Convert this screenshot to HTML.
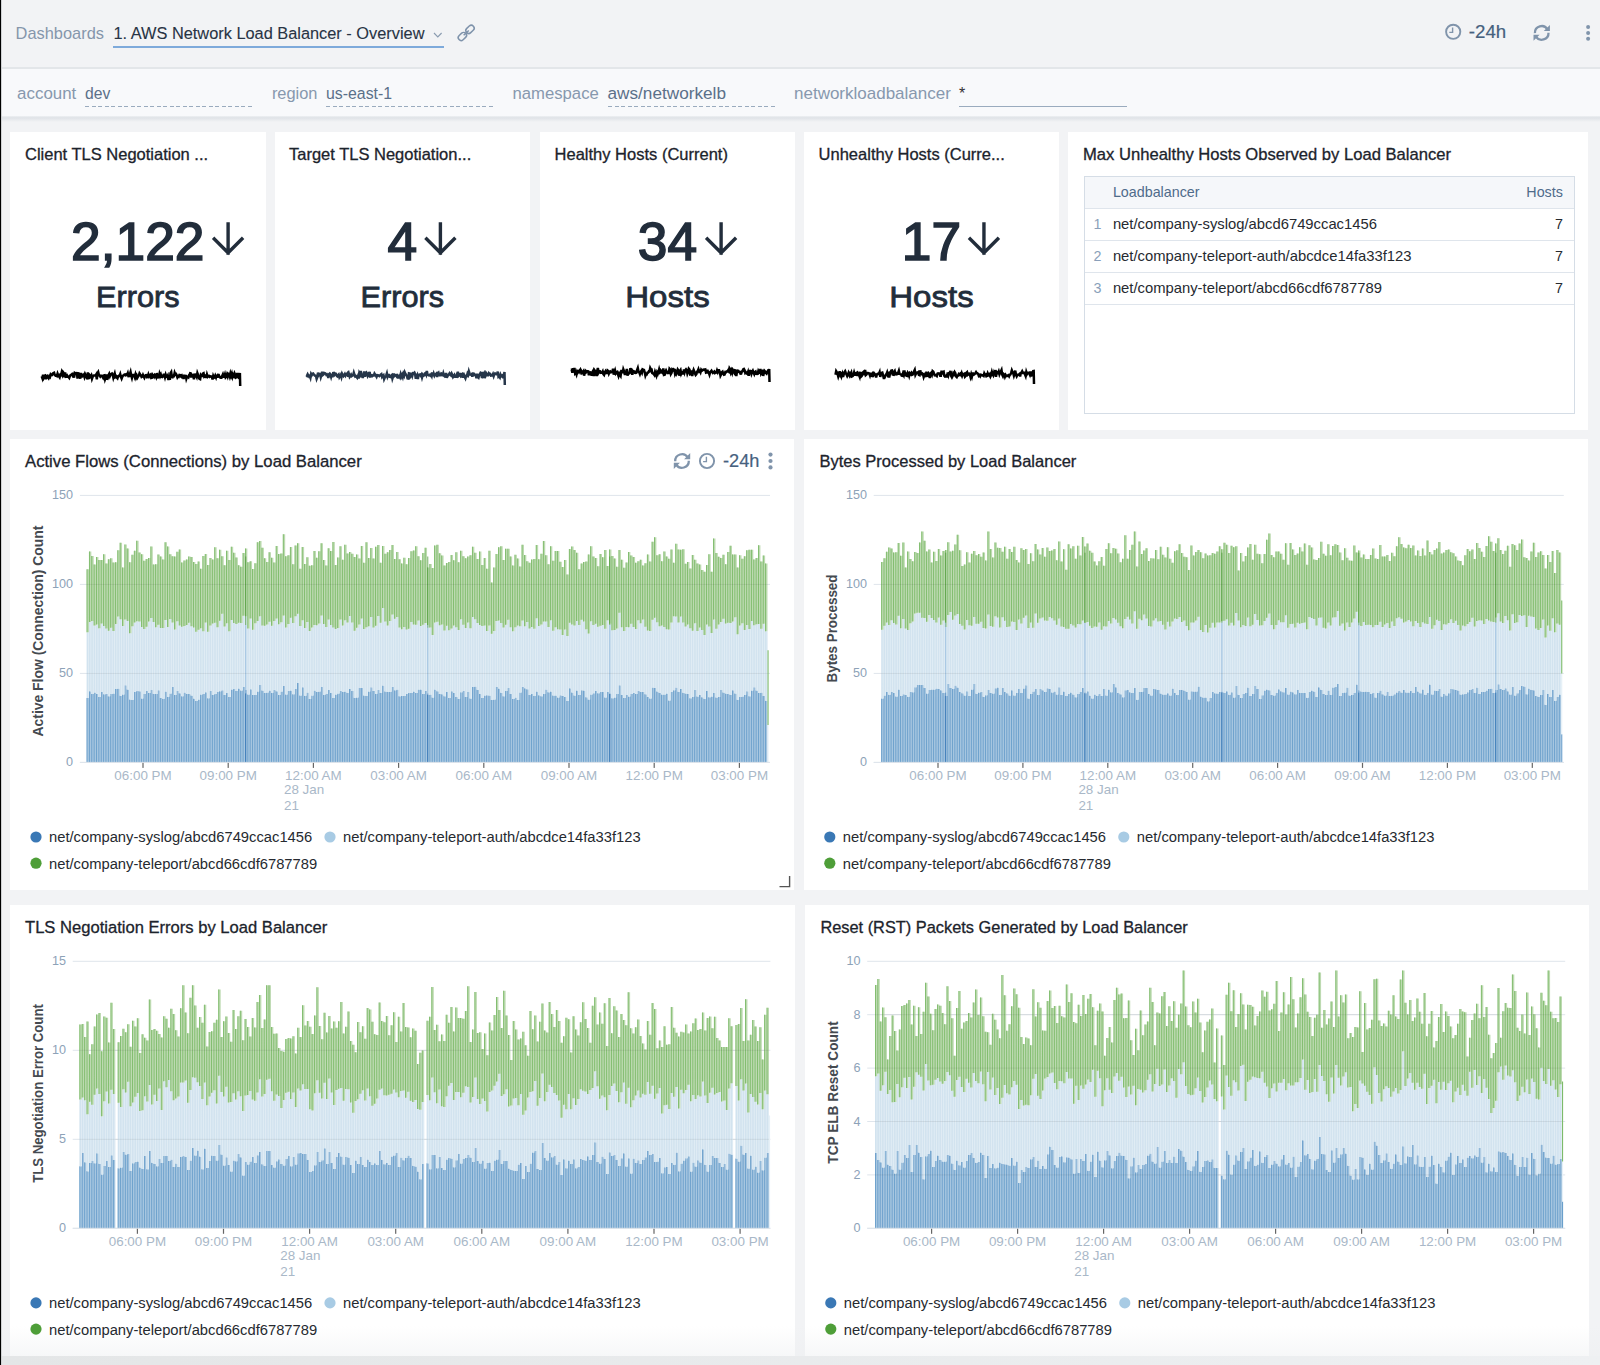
<!DOCTYPE html><html><head><meta charset="utf-8"><style>
html,body{margin:0;padding:0}
body{width:1600px;height:1365px;overflow:hidden;position:relative;background:#f2f3f5;font-family:"Liberation Sans",sans-serif}
.r{position:absolute}
svg{position:absolute;left:0;top:0;overflow:visible}
</style></head><body><div class="r" style="left:0px;top:0px;width:1600px;height:67px;background:#f2f3f5;"></div><div class="r" style="left:0px;top:67px;width:1600px;height:2px;background:#e3e6e9;"></div><div class="r" style="left:0px;top:69px;width:1600px;height:47px;background:#f8f9fb;"></div><div class="r" style="left:0px;top:115.7px;width:1600px;height:6.5px;background:linear-gradient(#eef0f3,#dfe3e7 30%,#f2f3f5);"></div><div class="r" style="left:112.5px;top:46px;width:331.5px;height:2px;background:#7eaadb;"></div><div class="r" style="left:85px;top:105.5px;width:167px;height:1.2px;background:repeating-linear-gradient(90deg,#9aabbe 0 4px,transparent 4px 6.5px);"></div><div class="r" style="left:326px;top:105.5px;width:167px;height:1.2px;background:repeating-linear-gradient(90deg,#9aabbe 0 4px,transparent 4px 6.5px);"></div><div class="r" style="left:607.5px;top:105.5px;width:167.5px;height:1.2px;background:repeating-linear-gradient(90deg,#9aabbe 0 4px,transparent 4px 6.5px);"></div><div class="r" style="left:959px;top:105.5px;width:167.5px;height:1.2px;background:#9aabbe;"></div><div class="r" style="left:10px;top:132px;width:255.5px;height:297.5px;background:#fff;"></div><div class="r" style="left:274.6px;top:132px;width:255.5px;height:297.5px;background:#fff;"></div><div class="r" style="left:539.6px;top:132px;width:255.5px;height:297.5px;background:#fff;"></div><div class="r" style="left:803.8px;top:132px;width:255.5px;height:297.5px;background:#fff;"></div><div class="r" style="left:1068.4px;top:132px;width:519.6px;height:297.5px;background:#fff;"></div><div class="r" style="left:10px;top:439px;width:784.4px;height:451px;background:#fff;"></div><div class="r" style="left:803.8px;top:439px;width:784.4px;height:451px;background:#fff;"></div><div class="r" style="left:10px;top:904.8px;width:785px;height:451.2px;background:#fff;"></div><div class="r" style="left:804.8px;top:904.8px;width:784.4px;height:451.2px;background:#fff;"></div><svg width="1600" height="440"><path d="M228.1 224 V253 M214.3 239 L228.1 252.8 L241.9 239" fill="none" stroke="#222d3b" stroke-width="3.4" stroke-linecap="square"/><path d="M440.40000000000003 224 V253 M426.6 239 L440.40000000000003 252.8 L454.2 239" fill="none" stroke="#222d3b" stroke-width="3.4" stroke-linecap="square"/><path d="M721.1 224 V253 M707.3 239 L721.1 252.8 L734.9 239" fill="none" stroke="#222d3b" stroke-width="3.4" stroke-linecap="square"/><path d="M983.95 224 V253 M970.15 239 L983.95 252.8 L997.75 239" fill="none" stroke="#222d3b" stroke-width="3.4" stroke-linecap="square"/><polyline points="41.70,376.2 42.39,378.1 43.08,374.7 43.77,377.5 44.46,375.8 45.14,375.5 45.83,379.2 46.52,376.7 47.21,376.0 47.90,377.2 48.59,378.1 49.28,376.3 49.97,377.0 50.66,374.5 51.34,375.2 52.03,375.1 52.72,373.6 53.41,373.1 54.10,372.8 54.79,375.1 55.48,375.6 56.17,375.4 56.85,376.0 57.54,373.7 58.23,375.5 58.92,376.3 59.61,377.3 60.30,374.8 60.99,375.1 61.68,372.4 62.37,374.6 63.05,372.1 63.74,373.0 64.43,377.4 65.12,372.5 65.81,376.8 66.50,376.7 67.19,375.6 67.88,376.7 68.57,377.0 69.25,377.9 69.94,375.9 70.63,375.0 71.32,374.8 72.01,374.1 72.70,375.6 73.39,374.6 74.08,377.6 74.76,373.1 75.45,373.7 76.14,374.0 76.83,372.1 77.52,378.7 78.21,372.3 78.90,375.0 79.59,375.0 80.28,378.7 80.96,373.0 81.65,377.4 82.34,375.0 83.03,375.6 83.72,374.8 84.41,376.9 85.10,374.2 85.79,375.6 86.48,376.5 87.16,379.2 87.85,372.4 88.54,378.1 89.23,377.9 89.92,375.5 90.61,376.4 91.30,375.3 91.99,378.7 92.67,376.8 93.36,375.7 94.05,375.6 94.74,375.6 95.43,375.6 96.12,374.5 96.81,379.3 97.50,373.2 98.19,372.0 98.87,374.8 99.56,375.6 100.25,376.6 100.94,375.7 101.63,375.7 102.32,376.5 103.01,377.7 103.70,375.5 104.39,375.3 105.07,379.2 105.76,377.4 106.45,374.5 107.14,379.7 107.83,377.9 108.52,375.3 109.21,373.9 109.90,376.2 110.59,374.6 111.27,374.0 111.96,373.5 112.65,374.8 113.34,377.7 114.03,375.5 114.72,373.5 115.41,376.8 116.10,376.2 116.78,377.5 117.47,378.3 118.16,376.1 118.85,375.8 119.54,375.9 120.23,374.1 120.92,376.8 121.61,378.5 122.30,376.7 122.98,375.7 123.67,375.5 124.36,374.6 125.05,374.4 125.74,375.1 126.43,374.4 127.12,375.0 127.81,373.2 128.50,376.2 129.18,376.1 129.87,374.1 130.56,372.0 131.25,375.4 131.94,377.8 132.63,375.0 133.32,375.0 134.01,374.9 134.69,376.9 135.38,374.6 136.07,377.5 136.76,375.7 137.45,377.5 138.14,376.3 138.83,375.6 139.52,373.4 140.21,374.4 140.89,375.3 141.58,377.0 142.27,376.6 142.96,374.9 143.65,376.5 144.34,377.8 145.03,376.0 145.72,375.3 146.41,375.2 147.09,377.3 147.78,377.1 148.47,374.6 149.16,376.4 149.85,375.2 150.54,374.6 151.23,377.9 151.92,377.7 152.60,375.0 153.29,376.0 153.98,376.9 154.67,375.0 155.36,375.7 156.05,377.1 156.74,373.1 157.43,376.1 158.12,377.3 158.80,377.0 159.49,373.9 160.18,376.2 160.87,374.6 161.56,376.8 162.25,377.1 162.94,376.5 163.63,374.8 164.32,374.8 165.00,377.3 165.69,374.7 166.38,376.6 167.07,377.0 167.76,375.7 168.45,380.0 169.14,376.7 169.83,379.8 170.51,373.1 171.20,372.0 171.89,377.0 172.58,377.2 173.27,375.7 173.96,375.9 174.65,372.7 175.34,374.4 176.03,374.0 176.71,375.3 177.40,377.4 178.09,376.3 178.78,376.7 179.47,374.9 180.16,375.1 180.85,376.1 181.54,375.5 182.23,378.1 182.91,374.8 183.60,379.0 184.29,374.8 184.98,377.6 185.67,374.9 186.36,378.6 187.05,376.6 187.74,376.8 188.43,377.4 189.11,375.1 189.80,374.1 190.49,372.3 191.18,377.5 191.87,375.0 192.56,374.9 193.25,375.8 193.94,379.3 194.62,373.6 195.31,376.1 196.00,375.3 196.69,376.8 197.38,373.1 198.07,374.9 198.76,377.3 199.45,378.8 200.14,379.1 200.82,375.0 201.51,375.9 202.20,375.8 202.89,373.6 203.58,373.2 204.27,376.9 204.96,376.5 205.65,375.8 206.34,378.0 207.02,374.6 207.71,376.7 208.40,376.1 209.09,375.9 209.78,376.8 210.47,376.4 211.16,376.5 211.85,376.5 212.53,379.4 213.22,376.0 213.91,377.7 214.60,377.3 215.29,375.6 215.98,377.3 216.67,374.7 217.36,377.8 218.05,374.9 218.73,375.0 219.42,376.4 220.11,377.5 220.80,377.8 221.49,377.8 222.18,375.9 222.87,374.4 223.56,376.7 224.25,376.6 224.93,374.5 225.62,377.4 226.31,376.6 227.00,374.5 227.69,376.5 228.38,373.8 229.07,374.2 229.76,376.4 230.44,373.4 231.13,375.7 231.82,373.7 232.51,376.9 233.20,374.9 233.89,376.1 234.58,373.5 235.27,375.0 235.96,377.5 236.64,377.0 237.33,373.0 238.02,377.1 238.71,377.7 239.40,375.6 239.9,373.0 240.2,386.0" fill="none" stroke="#000" stroke-width="2.5" stroke-linejoin="miter"/><polyline points="306.30,375.1 306.99,375.8 307.68,374.3 308.37,375.5 309.06,376.6 309.74,375.9 310.43,377.8 311.12,373.9 311.81,375.0 312.50,373.8 313.19,373.5 313.88,374.5 314.57,375.3 315.26,375.8 315.94,376.0 316.63,378.9 317.32,377.1 318.01,372.6 318.70,375.0 319.39,373.9 320.08,374.0 320.77,377.1 321.45,374.9 322.14,371.7 322.83,375.0 323.52,374.5 324.21,372.9 324.90,373.1 325.59,373.7 326.28,374.8 326.97,374.2 327.65,375.0 328.34,378.1 329.03,374.1 329.72,373.5 330.41,374.4 331.10,376.8 331.79,374.1 332.48,377.3 333.17,373.1 333.85,373.0 334.54,374.6 335.23,373.5 335.92,373.7 336.61,375.6 337.30,376.3 337.99,375.4 338.68,374.6 339.36,377.2 340.05,376.0 340.74,374.8 341.43,377.0 342.12,373.8 342.81,375.1 343.50,376.1 344.19,375.2 344.88,374.0 345.56,375.5 346.25,374.1 346.94,373.9 347.63,373.1 348.32,376.9 349.01,374.4 349.70,376.9 350.39,375.9 351.08,374.7 351.76,376.1 352.45,375.6 353.14,375.3 353.83,372.7 354.52,374.8 355.21,376.5 355.90,376.1 356.59,376.9 357.27,377.8 357.96,376.1 358.65,378.5 359.34,373.0 360.03,374.3 360.72,371.0 361.41,375.7 362.10,375.3 362.79,377.9 363.47,374.8 364.16,371.5 364.85,376.7 365.54,373.0 366.23,372.5 366.92,374.3 367.61,376.0 368.30,374.3 368.99,375.2 369.67,371.8 370.36,377.5 371.05,375.3 371.74,375.2 372.43,376.0 373.12,375.4 373.81,375.4 374.50,373.5 375.19,374.6 375.87,375.7 376.56,376.9 377.25,375.1 377.94,375.2 378.63,375.6 379.32,376.1 380.01,375.5 380.70,374.6 381.38,374.1 382.07,376.8 382.76,375.8 383.45,375.2 384.14,379.0 384.83,377.4 385.52,376.8 386.21,375.5 386.90,373.4 387.58,376.7 388.27,375.1 388.96,375.1 389.65,376.8 390.34,377.0 391.03,375.7 391.72,375.1 392.41,378.6 393.10,376.5 393.78,373.5 394.47,376.0 395.16,375.4 395.85,375.1 396.54,376.2 397.23,375.6 397.92,378.5 398.61,375.9 399.29,375.6 399.98,377.1 400.67,374.3 401.36,376.6 402.05,375.1 402.74,377.0 403.43,373.9 404.12,375.5 404.81,372.4 405.49,373.9 406.18,374.9 406.87,375.8 407.56,378.5 408.25,378.6 408.94,373.3 409.63,373.5 410.32,376.9 411.01,376.0 411.69,372.8 412.38,375.5 413.07,373.2 413.76,373.3 414.45,372.6 415.14,374.2 415.83,378.7 416.52,376.2 417.20,375.0 417.89,379.0 418.58,374.9 419.27,374.7 419.96,374.5 420.65,375.6 421.34,374.6 422.03,377.4 422.72,374.9 423.40,375.9 424.09,375.5 424.78,373.6 425.47,373.1 426.16,374.6 426.85,371.1 427.54,374.4 428.23,375.1 428.92,375.3 429.60,374.9 430.29,375.6 430.98,374.5 431.67,376.0 432.36,372.4 433.05,376.2 433.74,373.7 434.43,375.6 435.11,374.3 435.80,374.2 436.49,373.5 437.18,377.1 437.87,373.5 438.56,372.7 439.25,375.0 439.94,375.4 440.63,375.1 441.31,373.4 442.00,373.7 442.69,376.3 443.38,373.5 444.07,375.8 444.76,376.4 445.45,375.4 446.14,373.0 446.83,377.9 447.51,375.7 448.20,375.4 448.89,374.4 449.58,373.3 450.27,374.3 450.96,375.2 451.65,373.6 452.34,375.0 453.03,377.0 453.71,376.0 454.40,375.0 455.09,376.8 455.78,376.8 456.47,376.8 457.16,373.9 457.85,371.8 458.54,375.9 459.22,375.2 459.91,374.4 460.60,375.7 461.29,374.3 461.98,373.9 462.67,377.9 463.36,372.7 464.05,376.1 464.74,376.9 465.42,378.3 466.11,375.9 466.80,376.0 467.49,373.6 468.18,374.8 468.87,371.4 469.56,373.5 470.25,374.7 470.94,374.8 471.62,374.2 472.31,376.8 473.00,372.6 473.69,374.9 474.38,374.3 475.07,375.0 475.76,375.1 476.45,378.3 477.13,373.7 477.82,377.1 478.51,377.7 479.20,375.2 479.89,374.0 480.58,372.8 481.27,373.2 481.96,378.2 482.65,371.8 483.33,375.3 484.02,373.9 484.71,378.0 485.40,376.0 486.09,372.9 486.78,373.8 487.47,375.2 488.16,375.2 488.85,373.4 489.53,374.3 490.22,374.1 490.91,375.7 491.60,375.6 492.29,375.5 492.98,374.1 493.67,376.2 494.36,374.2 495.04,373.5 495.73,374.0 496.42,374.3 497.11,374.4 497.80,371.6 498.49,376.8 499.18,376.3 499.87,377.4 500.56,374.7 501.24,376.2 501.93,375.5 502.62,375.1 503.31,378.1 504.00,374.5 504.5,372.0 504.8,385.0" fill="none" stroke="#26364a" stroke-width="2.5" stroke-linejoin="miter"/><polyline points="571.00,370.0 571.69,369.7 572.38,372.8 573.07,368.2 573.76,371.2 574.44,368.0 575.13,373.3 575.82,372.5 576.51,374.4 577.20,371.5 577.89,372.6 578.58,371.6 579.27,370.7 579.96,372.0 580.64,369.9 581.33,371.1 582.02,373.0 582.71,372.3 583.40,371.3 584.09,375.6 584.78,372.6 585.47,371.1 586.15,372.1 586.84,371.1 587.53,371.2 588.22,371.3 588.91,375.3 589.60,372.5 590.29,372.4 590.98,373.2 591.67,375.6 592.35,372.2 593.04,371.0 593.73,376.0 594.42,370.1 595.11,371.1 595.80,373.0 596.49,376.0 597.18,371.0 597.87,368.0 598.55,372.5 599.24,371.2 599.93,371.2 600.62,372.7 601.31,372.5 602.00,372.6 602.69,371.4 603.38,374.1 604.06,374.9 604.75,372.5 605.44,371.3 606.13,373.1 606.82,373.0 607.51,370.4 608.20,371.0 608.89,373.6 609.58,372.1 610.26,371.5 610.95,372.3 611.64,372.0 612.33,372.0 613.02,368.7 613.71,374.5 614.40,372.7 615.09,370.6 615.78,373.5 616.46,372.7 617.15,372.1 617.84,373.8 618.53,376.0 619.22,373.6 619.91,374.9 620.60,376.0 621.29,370.9 621.97,370.9 622.66,373.2 623.35,369.3 624.04,371.1 624.73,374.1 625.42,374.1 626.11,373.3 626.80,369.0 627.49,375.5 628.17,373.5 628.86,373.5 629.55,373.1 630.24,369.2 630.93,369.1 631.62,369.5 632.31,374.9 633.00,371.0 633.69,371.4 634.37,371.5 635.06,372.9 635.75,373.0 636.44,372.6 637.13,369.9 637.82,368.0 638.51,371.4 639.20,372.4 639.89,374.1 640.57,372.1 641.26,371.0 641.95,372.5 642.64,369.4 643.33,369.8 644.02,370.0 644.71,372.2 645.40,375.6 646.08,373.8 646.77,374.2 647.46,372.7 648.15,372.6 648.84,371.3 649.53,371.4 650.22,368.0 650.91,369.3 651.60,369.4 652.28,373.0 652.97,373.3 653.66,374.1 654.35,375.0 655.04,371.9 655.73,373.8 656.42,375.6 657.11,372.5 657.80,373.9 658.48,372.0 659.17,369.3 659.86,371.8 660.55,370.6 661.24,372.0 661.93,371.2 662.62,372.4 663.31,368.4 663.99,375.0 664.68,374.8 665.37,371.8 666.06,370.4 666.75,371.8 667.44,373.1 668.13,372.9 668.82,372.8 669.51,368.8 670.19,369.6 670.88,373.9 671.57,372.7 672.26,369.5 672.95,370.2 673.64,369.3 674.33,369.9 675.02,373.7 675.71,371.9 676.39,373.9 677.08,372.6 677.77,369.5 678.46,370.5 679.15,375.7 679.84,371.2 680.53,370.1 681.22,373.8 681.90,372.4 682.59,372.1 683.28,374.5 683.97,369.3 684.66,372.3 685.35,370.2 686.04,369.3 686.73,370.2 687.42,373.7 688.10,372.0 688.79,368.8 689.48,369.6 690.17,374.3 690.86,374.1 691.55,370.4 692.24,376.0 692.93,372.0 693.62,369.9 694.30,371.5 694.99,373.5 695.68,375.0 696.37,374.2 697.06,371.6 697.75,371.0 698.44,369.3 699.13,371.5 699.81,370.9 700.50,372.3 701.19,369.8 701.88,370.8 702.57,370.3 703.26,369.7 703.95,369.6 704.64,369.9 705.33,369.6 706.01,372.6 706.70,372.3 707.39,369.7 708.08,372.6 708.77,372.6 709.46,374.6 710.15,372.1 710.84,371.6 711.53,370.7 712.21,372.0 712.90,372.9 713.59,372.4 714.28,371.6 714.97,372.9 715.66,372.3 716.35,372.5 717.04,370.4 717.73,372.1 718.41,370.3 719.10,370.3 719.79,372.0 720.48,375.7 721.17,374.3 721.86,372.3 722.55,371.7 723.24,373.7 723.92,374.7 724.61,374.5 725.30,372.1 725.99,372.3 726.68,371.5 727.37,371.4 728.06,370.4 728.75,371.3 729.44,368.2 730.12,369.3 730.81,372.3 731.50,370.4 732.19,372.7 732.88,369.9 733.57,371.0 734.26,372.5 734.95,370.3 735.64,370.5 736.32,376.0 737.01,371.4 737.70,370.7 738.39,370.8 739.08,371.9 739.77,371.9 740.46,373.7 741.15,373.6 741.83,371.5 742.52,371.3 743.21,369.4 743.90,369.0 744.59,370.3 745.28,373.0 745.97,372.4 746.66,373.4 747.35,373.9 748.03,372.0 748.72,375.7 749.41,371.6 750.10,370.9 750.79,371.1 751.48,373.8 752.17,372.0 752.86,370.7 753.55,372.6 754.23,374.1 754.92,372.1 755.61,371.6 756.30,373.8 756.99,374.0 757.68,373.9 758.37,371.0 759.06,372.3 759.74,372.7 760.43,369.0 761.12,373.6 761.81,372.4 762.50,371.5 763.19,375.9 763.88,372.8 764.57,370.9 765.26,371.7 765.94,372.9 766.63,373.6 767.32,372.1 768.01,370.5 768.70,370.6 769.2,369.0 769.5,382.0" fill="none" stroke="#000" stroke-width="2.5" stroke-linejoin="miter"/><polyline points="835.50,374.8 836.19,371.1 836.88,372.2 837.57,373.9 838.26,376.5 838.94,374.4 839.63,371.2 840.32,374.1 841.01,372.0 841.70,375.8 842.39,373.8 843.08,377.0 843.77,374.2 844.46,372.3 845.14,371.2 845.83,373.0 846.52,374.6 847.21,376.1 847.90,374.8 848.59,372.9 849.28,374.7 849.97,371.7 850.65,374.5 851.34,372.8 852.03,376.4 852.72,376.0 853.41,374.9 854.10,372.4 854.79,374.7 855.48,374.7 856.17,373.2 856.85,372.8 857.54,376.0 858.23,373.6 858.92,374.7 859.61,376.5 860.30,371.8 860.99,376.7 861.68,376.1 862.37,373.2 863.05,372.3 863.74,371.7 864.43,375.2 865.12,370.0 865.81,375.0 866.50,374.4 867.19,372.9 867.88,373.0 868.56,373.2 869.25,373.5 869.94,375.4 870.63,372.8 871.32,375.7 872.01,375.9 872.70,373.9 873.39,375.0 874.08,373.2 874.76,374.0 875.45,374.8 876.14,377.4 876.83,374.4 877.52,373.8 878.21,374.0 878.90,373.7 879.59,372.1 880.28,376.9 880.96,373.4 881.65,372.9 882.34,372.6 883.03,375.0 883.72,378.0 884.41,378.0 885.10,376.6 885.79,375.0 886.47,374.1 887.16,372.3 887.85,375.0 888.54,374.0 889.23,377.6 889.92,374.1 890.61,372.3 891.30,370.6 891.99,370.5 892.67,374.5 893.36,374.7 894.05,372.1 894.74,371.1 895.43,374.0 896.12,373.4 896.81,374.3 897.50,374.0 898.19,372.7 898.87,370.8 899.56,373.8 900.25,374.1 900.94,374.3 901.63,375.7 902.32,375.8 903.01,373.4 903.70,374.9 904.39,370.4 905.07,374.6 905.76,374.0 906.45,375.8 907.14,376.0 907.83,372.7 908.52,373.6 909.21,375.9 909.90,373.3 910.58,374.0 911.27,373.0 911.96,374.9 912.65,374.6 913.34,372.7 914.03,371.4 914.72,370.0 915.41,374.8 916.10,373.4 916.78,372.7 917.47,372.9 918.16,372.3 918.85,374.9 919.54,375.2 920.23,370.3 920.92,373.4 921.61,374.1 922.30,373.5 922.98,374.1 923.67,376.9 924.36,375.0 925.05,376.2 925.74,376.1 926.43,371.7 927.12,376.7 927.81,374.8 928.49,373.6 929.18,375.4 929.87,378.0 930.56,373.3 931.25,372.7 931.94,374.4 932.63,371.0 933.32,371.6 934.01,373.7 934.69,375.3 935.38,375.1 936.07,375.6 936.76,376.1 937.45,373.6 938.14,373.3 938.83,373.4 939.52,373.4 940.21,375.8 940.89,375.8 941.58,370.7 942.27,374.4 942.96,372.2 943.65,371.8 944.34,375.9 945.03,376.6 945.72,376.4 946.40,375.5 947.09,377.4 947.78,372.5 948.47,375.2 949.16,373.0 949.85,372.8 950.54,371.0 951.23,376.2 951.92,377.4 952.60,376.1 953.29,373.3 953.98,374.2 954.67,372.2 955.36,373.3 956.05,376.5 956.74,377.2 957.43,375.7 958.12,375.6 958.80,374.1 959.49,374.7 960.18,373.8 960.87,374.8 961.56,373.1 962.25,375.6 962.94,373.9 963.63,374.4 964.31,373.9 965.00,376.7 965.69,376.0 966.38,372.9 967.07,372.2 967.76,374.8 968.45,374.3 969.14,373.7 969.83,374.4 970.51,376.9 971.20,374.3 971.89,376.6 972.58,373.6 973.27,373.6 973.96,374.5 974.65,374.0 975.34,373.2 976.03,372.1 976.71,373.2 977.40,373.2 978.09,373.9 978.78,375.8 979.47,375.2 980.16,376.2 980.85,374.7 981.54,374.9 982.23,375.3 982.91,375.5 983.60,376.0 984.29,373.4 984.98,374.7 985.67,374.5 986.36,376.2 987.05,375.8 987.74,373.3 988.42,374.7 989.11,375.4 989.80,374.3 990.49,376.3 991.18,374.8 991.87,372.0 992.56,374.3 993.25,375.4 993.94,372.9 994.62,375.1 995.31,370.0 996.00,376.9 996.69,372.1 997.38,372.9 998.07,373.3 998.76,371.5 999.45,374.2 1000.14,372.5 1000.82,371.5 1001.51,370.0 1002.20,374.6 1002.89,376.1 1003.58,373.9 1004.27,374.4 1004.96,376.8 1005.65,375.1 1006.33,376.2 1007.02,376.1 1007.71,375.6 1008.40,375.2 1009.09,376.3 1009.78,374.8 1010.47,374.4 1011.16,372.9 1011.85,370.3 1012.53,371.9 1013.22,373.2 1013.91,375.7 1014.60,373.7 1015.29,370.6 1015.98,374.7 1016.67,376.3 1017.36,374.9 1018.05,374.7 1018.73,374.6 1019.42,374.0 1020.11,376.5 1020.80,373.0 1021.49,372.6 1022.18,371.3 1022.87,372.8 1023.56,372.7 1024.24,372.7 1024.93,374.2 1025.62,375.9 1026.31,372.0 1027.00,374.0 1027.69,372.8 1028.38,372.7 1029.07,373.1 1029.76,374.6 1030.44,371.4 1031.13,376.3 1031.82,374.3 1032.51,372.9 1033.20,371.1 1033.7,371.0 1034.0,384.0" fill="none" stroke="#000" stroke-width="2.5" stroke-linejoin="miter"/></svg><div class="r" style="left:1083.5px;top:176px;width:491.2px;height:238.3px;background:#fff;box-sizing:border-box;border:1px solid #d5dde6"></div><div class="r" style="left:1084.5px;top:177px;width:489.2px;height:31px;background:#f5f7fa;"></div><div class="r" style="left:1084.5px;top:207.5px;width:489.2px;height:1px;background:#dfe5ec;"></div><div class="r" style="left:1084.5px;top:239.5px;width:489.2px;height:1px;background:#dfe5ec;"></div><div class="r" style="left:1084.5px;top:271.5px;width:489.2px;height:1px;background:#dfe5ec;"></div><div class="r" style="left:1084.5px;top:303.5px;width:489.2px;height:1px;background:#dfe5ec;"></div><svg width="1600" height="1365"><rect x="79.9" y="494.90" width="690.1" height="1" fill="#dfe5ec"/><rect x="79.9" y="583.90" width="690.1" height="1" fill="#dfe5ec"/><rect x="79.9" y="672.90" width="690.1" height="1" fill="#dfe5ec"/><rect x="79.9" y="761.90" width="690.1" height="1" fill="#dfe5ec"/><path d="M86.60 698.0h2.36V762.4h-2.36zM88.96 691.3h2.36V762.4h-2.36zM91.33 694.0h2.36V762.4h-2.36zM93.69 692.4h2.36V762.4h-2.36zM96.06 693.8h2.36V762.4h-2.36zM98.42 696.9h2.36V762.4h-2.36zM100.79 692.0h2.36V762.4h-2.36zM103.15 694.2h2.36V762.4h-2.36zM105.51 693.8h2.36V762.4h-2.36zM107.88 696.2h2.36V762.4h-2.36zM110.24 693.7h2.36V762.4h-2.36zM112.61 693.5h2.36V762.4h-2.36zM114.97 689.0h2.36V762.4h-2.36zM117.34 688.5h2.36V762.4h-2.36zM119.70 695.8h2.36V762.4h-2.36zM122.06 694.4h2.36V762.4h-2.36zM124.43 685.3h2.36V762.4h-2.36zM126.79 689.4h2.36V762.4h-2.36zM129.16 699.4h2.36V762.4h-2.36zM131.52 699.7h2.36V762.4h-2.36zM133.88 691.7h2.36V762.4h-2.36zM136.25 691.0h2.36V762.4h-2.36zM138.61 691.3h2.36V762.4h-2.36zM140.98 698.5h2.36V762.4h-2.36zM143.34 694.1h2.36V762.4h-2.36zM145.71 690.8h2.36V762.4h-2.36zM148.07 693.1h2.36V762.4h-2.36zM150.43 689.9h2.36V762.4h-2.36zM152.80 693.8h2.36V762.4h-2.36zM155.16 693.9h2.36V762.4h-2.36zM157.53 690.2h2.36V762.4h-2.36zM159.89 698.0h2.36V762.4h-2.36zM162.26 698.7h2.36V762.4h-2.36zM164.62 691.4h2.36V762.4h-2.36zM166.98 696.7h2.36V762.4h-2.36zM169.35 693.4h2.36V762.4h-2.36zM171.71 686.9h2.36V762.4h-2.36zM174.08 694.9h2.36V762.4h-2.36zM176.44 690.7h2.36V762.4h-2.36zM178.81 693.2h2.36V762.4h-2.36zM181.17 696.3h2.36V762.4h-2.36zM183.53 692.6h2.36V762.4h-2.36zM185.90 693.8h2.36V762.4h-2.36zM188.26 693.8h2.36V762.4h-2.36zM190.63 695.5h2.36V762.4h-2.36zM192.99 698.4h2.36V762.4h-2.36zM195.35 700.9h2.36V762.4h-2.36zM197.72 699.4h2.36V762.4h-2.36zM200.08 694.5h2.36V762.4h-2.36zM202.45 694.0h2.36V762.4h-2.36zM204.81 692.2h2.36V762.4h-2.36zM207.18 698.3h2.36V762.4h-2.36zM209.54 691.1h2.36V762.4h-2.36zM211.90 694.7h2.36V762.4h-2.36zM214.27 693.9h2.36V762.4h-2.36zM216.63 691.9h2.36V762.4h-2.36zM219.00 691.3h2.36V762.4h-2.36zM221.36 690.2h2.36V762.4h-2.36zM223.73 695.0h2.36V762.4h-2.36zM226.09 692.9h2.36V762.4h-2.36zM228.45 697.1h2.36V762.4h-2.36zM230.82 689.4h2.36V762.4h-2.36zM233.18 689.1h2.36V762.4h-2.36zM235.55 691.0h2.36V762.4h-2.36zM237.91 688.4h2.36V762.4h-2.36zM240.28 690.5h2.36V762.4h-2.36zM242.64 687.1h2.36V762.4h-2.36zM245.00 689.9h2.36V762.4h-2.36zM247.37 694.5h2.36V762.4h-2.36zM249.73 689.3h2.36V762.4h-2.36zM252.10 695.1h2.36V762.4h-2.36zM254.46 695.0h2.36V762.4h-2.36zM256.82 691.6h2.36V762.4h-2.36zM259.19 684.9h2.36V762.4h-2.36zM261.55 690.4h2.36V762.4h-2.36zM263.92 692.9h2.36V762.4h-2.36zM266.28 692.6h2.36V762.4h-2.36zM268.65 690.6h2.36V762.4h-2.36zM271.01 692.7h2.36V762.4h-2.36zM273.37 689.7h2.36V762.4h-2.36zM275.74 691.2h2.36V762.4h-2.36zM278.10 695.0h2.36V762.4h-2.36zM280.47 691.6h2.36V762.4h-2.36zM282.83 685.8h2.36V762.4h-2.36zM285.20 694.5h2.36V762.4h-2.36zM287.56 690.8h2.36V762.4h-2.36zM289.92 690.6h2.36V762.4h-2.36zM292.29 694.3h2.36V762.4h-2.36zM294.65 688.8h2.36V762.4h-2.36zM297.02 682.8h2.36V762.4h-2.36zM299.38 695.4h2.36V762.4h-2.36zM301.75 687.3h2.36V762.4h-2.36zM304.11 695.8h2.36V762.4h-2.36zM306.47 692.5h2.36V762.4h-2.36zM308.84 699.1h2.36V762.4h-2.36zM311.20 695.6h2.36V762.4h-2.36zM313.57 690.4h2.36V762.4h-2.36zM315.93 692.1h2.36V762.4h-2.36zM318.30 691.6h2.36V762.4h-2.36zM320.66 687.1h2.36V762.4h-2.36zM323.02 694.9h2.36V762.4h-2.36zM325.39 694.1h2.36V762.4h-2.36zM327.75 689.8h2.36V762.4h-2.36zM330.12 692.9h2.36V762.4h-2.36zM332.48 698.1h2.36V762.4h-2.36zM334.84 694.5h2.36V762.4h-2.36zM337.21 693.5h2.36V762.4h-2.36zM339.57 690.7h2.36V762.4h-2.36zM341.94 691.7h2.36V762.4h-2.36zM344.30 691.4h2.36V762.4h-2.36zM346.67 693.0h2.36V762.4h-2.36zM349.03 688.9h2.36V762.4h-2.36zM351.39 691.1h2.36V762.4h-2.36zM353.76 697.8h2.36V762.4h-2.36zM356.12 697.5h2.36V762.4h-2.36zM358.49 688.1h2.36V762.4h-2.36zM360.85 687.7h2.36V762.4h-2.36zM363.22 695.4h2.36V762.4h-2.36zM365.58 695.7h2.36V762.4h-2.36zM367.94 691.6h2.36V762.4h-2.36zM370.31 687.3h2.36V762.4h-2.36zM372.67 690.9h2.36V762.4h-2.36zM375.04 693.8h2.36V762.4h-2.36zM377.40 689.8h2.36V762.4h-2.36zM379.77 693.0h2.36V762.4h-2.36zM382.13 685.6h2.36V762.4h-2.36zM384.49 691.6h2.36V762.4h-2.36zM386.86 691.7h2.36V762.4h-2.36zM389.22 691.7h2.36V762.4h-2.36zM391.59 686.8h2.36V762.4h-2.36zM393.95 690.2h2.36V762.4h-2.36zM396.31 689.5h2.36V762.4h-2.36zM398.68 696.3h2.36V762.4h-2.36zM401.04 695.7h2.36V762.4h-2.36zM403.41 695.9h2.36V762.4h-2.36zM405.77 693.7h2.36V762.4h-2.36zM408.14 693.1h2.36V762.4h-2.36zM410.50 693.0h2.36V762.4h-2.36zM412.86 691.4h2.36V762.4h-2.36zM415.23 693.1h2.36V762.4h-2.36zM417.59 689.6h2.36V762.4h-2.36zM419.96 689.6h2.36V762.4h-2.36zM422.32 693.9h2.36V762.4h-2.36zM424.69 690.8h2.36V762.4h-2.36zM427.05 694.9h2.36V762.4h-2.36zM429.41 694.6h2.36V762.4h-2.36zM431.78 697.5h2.36V762.4h-2.36zM434.14 689.4h2.36V762.4h-2.36zM436.51 691.3h2.36V762.4h-2.36zM438.87 694.0h2.36V762.4h-2.36zM441.24 694.2h2.36V762.4h-2.36zM443.60 696.2h2.36V762.4h-2.36zM445.96 692.0h2.36V762.4h-2.36zM448.33 698.1h2.36V762.4h-2.36zM450.69 691.3h2.36V762.4h-2.36zM453.06 692.7h2.36V762.4h-2.36zM455.42 696.9h2.36V762.4h-2.36zM457.79 698.8h2.36V762.4h-2.36zM460.15 692.3h2.36V762.4h-2.36zM462.51 691.0h2.36V762.4h-2.36zM464.88 697.0h2.36V762.4h-2.36zM467.24 692.0h2.36V762.4h-2.36zM469.61 698.5h2.36V762.4h-2.36zM471.97 687.0h2.36V762.4h-2.36zM474.33 686.4h2.36V762.4h-2.36zM476.70 689.7h2.36V762.4h-2.36zM479.06 694.0h2.36V762.4h-2.36zM481.43 698.1h2.36V762.4h-2.36zM483.79 695.6h2.36V762.4h-2.36zM486.16 695.2h2.36V762.4h-2.36zM488.52 695.5h2.36V762.4h-2.36zM490.88 700.1h2.36V762.4h-2.36zM493.25 699.4h2.36V762.4h-2.36zM495.61 687.1h2.36V762.4h-2.36zM497.98 688.5h2.36V762.4h-2.36zM500.34 692.8h2.36V762.4h-2.36zM502.71 696.2h2.36V762.4h-2.36zM505.07 691.0h2.36V762.4h-2.36zM507.43 688.1h2.36V762.4h-2.36zM509.80 694.0h2.36V762.4h-2.36zM512.16 699.0h2.36V762.4h-2.36zM514.53 697.6h2.36V762.4h-2.36zM516.89 700.0h2.36V762.4h-2.36zM519.26 692.5h2.36V762.4h-2.36zM521.62 686.8h2.36V762.4h-2.36zM523.98 688.3h2.36V762.4h-2.36zM526.35 689.3h2.36V762.4h-2.36zM528.71 695.1h2.36V762.4h-2.36zM531.08 694.1h2.36V762.4h-2.36zM533.44 695.9h2.36V762.4h-2.36zM535.80 691.4h2.36V762.4h-2.36zM538.17 695.2h2.36V762.4h-2.36zM540.53 696.2h2.36V762.4h-2.36zM542.90 694.0h2.36V762.4h-2.36zM545.26 689.4h2.36V762.4h-2.36zM547.63 692.3h2.36V762.4h-2.36zM549.99 691.6h2.36V762.4h-2.36zM552.35 695.6h2.36V762.4h-2.36zM554.72 695.6h2.36V762.4h-2.36zM557.08 697.6h2.36V762.4h-2.36zM559.45 695.3h2.36V762.4h-2.36zM561.81 696.1h2.36V762.4h-2.36zM564.18 697.1h2.36V762.4h-2.36zM566.54 700.9h2.36V762.4h-2.36zM568.90 688.2h2.36V762.4h-2.36zM571.27 692.4h2.36V762.4h-2.36zM573.63 695.6h2.36V762.4h-2.36zM576.00 690.5h2.36V762.4h-2.36zM578.36 694.9h2.36V762.4h-2.36zM580.73 690.2h2.36V762.4h-2.36zM583.09 690.6h2.36V762.4h-2.36zM585.45 697.3h2.36V762.4h-2.36zM587.82 699.6h2.36V762.4h-2.36zM590.18 694.5h2.36V762.4h-2.36zM592.55 693.3h2.36V762.4h-2.36zM594.91 690.8h2.36V762.4h-2.36zM597.27 693.2h2.36V762.4h-2.36zM599.64 692.1h2.36V762.4h-2.36zM602.00 692.1h2.36V762.4h-2.36zM604.37 697.4h2.36V762.4h-2.36zM606.73 691.7h2.36V762.4h-2.36zM609.10 694.1h2.36V762.4h-2.36zM611.46 698.3h2.36V762.4h-2.36zM613.82 697.6h2.36V762.4h-2.36zM616.19 694.1h2.36V762.4h-2.36zM618.55 685.2h2.36V762.4h-2.36zM620.92 694.8h2.36V762.4h-2.36zM623.28 698.0h2.36V762.4h-2.36zM625.65 695.1h2.36V762.4h-2.36zM628.01 696.6h2.36V762.4h-2.36zM630.37 693.9h2.36V762.4h-2.36zM632.74 692.8h2.36V762.4h-2.36zM635.10 694.0h2.36V762.4h-2.36zM637.47 690.7h2.36V762.4h-2.36zM639.83 691.8h2.36V762.4h-2.36zM642.20 691.7h2.36V762.4h-2.36zM644.56 694.2h2.36V762.4h-2.36zM646.92 696.7h2.36V762.4h-2.36zM649.29 698.5h2.36V762.4h-2.36zM651.65 687.4h2.36V762.4h-2.36zM654.02 688.1h2.36V762.4h-2.36zM656.38 691.5h2.36V762.4h-2.36zM658.75 692.9h2.36V762.4h-2.36zM661.11 694.4h2.36V762.4h-2.36zM663.47 694.4h2.36V762.4h-2.36zM665.84 693.6h2.36V762.4h-2.36zM668.20 700.4h2.36V762.4h-2.36zM670.57 691.8h2.36V762.4h-2.36zM672.93 690.3h2.36V762.4h-2.36zM675.29 687.6h2.36V762.4h-2.36zM677.66 691.7h2.36V762.4h-2.36zM680.02 689.0h2.36V762.4h-2.36zM682.39 692.8h2.36V762.4h-2.36zM684.75 693.5h2.36V762.4h-2.36zM687.12 693.7h2.36V762.4h-2.36zM689.48 698.3h2.36V762.4h-2.36zM691.84 696.7h2.36V762.4h-2.36zM694.21 689.8h2.36V762.4h-2.36zM696.57 696.4h2.36V762.4h-2.36zM698.94 694.7h2.36V762.4h-2.36zM701.30 697.2h2.36V762.4h-2.36zM703.67 698.9h2.36V762.4h-2.36zM706.03 691.1h2.36V762.4h-2.36zM708.39 697.3h2.36V762.4h-2.36zM710.76 696.4h2.36V762.4h-2.36zM713.12 692.7h2.36V762.4h-2.36zM715.49 697.4h2.36V762.4h-2.36zM717.85 697.0h2.36V762.4h-2.36zM720.22 690.1h2.36V762.4h-2.36zM722.58 692.6h2.36V762.4h-2.36zM724.94 693.6h2.36V762.4h-2.36zM727.31 694.1h2.36V762.4h-2.36zM729.67 694.9h2.36V762.4h-2.36zM732.04 690.2h2.36V762.4h-2.36zM734.40 693.6h2.36V762.4h-2.36zM736.76 699.7h2.36V762.4h-2.36zM739.13 697.0h2.36V762.4h-2.36zM741.49 696.4h2.36V762.4h-2.36zM743.86 694.8h2.36V762.4h-2.36zM746.22 691.2h2.36V762.4h-2.36zM748.59 696.3h2.36V762.4h-2.36zM750.95 690.5h2.36V762.4h-2.36zM753.31 687.2h2.36V762.4h-2.36zM755.68 690.6h2.36V762.4h-2.36zM758.04 693.0h2.36V762.4h-2.36zM760.41 692.6h2.36V762.4h-2.36zM762.77 695.9h2.36V762.4h-2.36zM765.14 700.7h2.36V762.4h-2.36z" fill="#a7c6e0"/><path d="M86.60 698.0h0.9V762.4h-0.9zM88.96 691.3h0.9V762.4h-0.9zM91.33 694.0h0.9V762.4h-0.9zM93.69 692.4h0.9V762.4h-0.9zM96.06 693.8h0.9V762.4h-0.9zM98.42 696.9h0.9V762.4h-0.9zM100.79 692.0h0.9V762.4h-0.9zM103.15 694.2h0.9V762.4h-0.9zM105.51 693.8h0.9V762.4h-0.9zM107.88 696.2h0.9V762.4h-0.9zM110.24 693.7h0.9V762.4h-0.9zM112.61 693.5h0.9V762.4h-0.9zM114.97 689.0h0.9V762.4h-0.9zM117.34 688.5h0.9V762.4h-0.9zM119.70 695.8h0.9V762.4h-0.9zM122.06 694.4h0.9V762.4h-0.9zM124.43 685.3h0.9V762.4h-0.9zM126.79 689.4h0.9V762.4h-0.9zM129.16 699.4h0.9V762.4h-0.9zM131.52 699.7h0.9V762.4h-0.9zM133.88 691.7h0.9V762.4h-0.9zM136.25 691.0h0.9V762.4h-0.9zM138.61 691.3h0.9V762.4h-0.9zM140.98 698.5h0.9V762.4h-0.9zM143.34 694.1h0.9V762.4h-0.9zM145.71 690.8h0.9V762.4h-0.9zM148.07 693.1h0.9V762.4h-0.9zM150.43 689.9h0.9V762.4h-0.9zM152.80 693.8h0.9V762.4h-0.9zM155.16 693.9h0.9V762.4h-0.9zM157.53 690.2h0.9V762.4h-0.9zM159.89 698.0h0.9V762.4h-0.9zM162.26 698.7h0.9V762.4h-0.9zM164.62 691.4h0.9V762.4h-0.9zM166.98 696.7h0.9V762.4h-0.9zM169.35 693.4h0.9V762.4h-0.9zM171.71 686.9h0.9V762.4h-0.9zM174.08 694.9h0.9V762.4h-0.9zM176.44 690.7h0.9V762.4h-0.9zM178.81 693.2h0.9V762.4h-0.9zM181.17 696.3h0.9V762.4h-0.9zM183.53 692.6h0.9V762.4h-0.9zM185.90 693.8h0.9V762.4h-0.9zM188.26 693.8h0.9V762.4h-0.9zM190.63 695.5h0.9V762.4h-0.9zM192.99 698.4h0.9V762.4h-0.9zM195.35 700.9h0.9V762.4h-0.9zM197.72 699.4h0.9V762.4h-0.9zM200.08 694.5h0.9V762.4h-0.9zM202.45 694.0h0.9V762.4h-0.9zM204.81 692.2h0.9V762.4h-0.9zM207.18 698.3h0.9V762.4h-0.9zM209.54 691.1h0.9V762.4h-0.9zM211.90 694.7h0.9V762.4h-0.9zM214.27 693.9h0.9V762.4h-0.9zM216.63 691.9h0.9V762.4h-0.9zM219.00 691.3h0.9V762.4h-0.9zM221.36 690.2h0.9V762.4h-0.9zM223.73 695.0h0.9V762.4h-0.9zM226.09 692.9h0.9V762.4h-0.9zM228.45 697.1h0.9V762.4h-0.9zM230.82 689.4h0.9V762.4h-0.9zM233.18 689.1h0.9V762.4h-0.9zM235.55 691.0h0.9V762.4h-0.9zM237.91 688.4h0.9V762.4h-0.9zM240.28 690.5h0.9V762.4h-0.9zM242.64 687.1h0.9V762.4h-0.9zM245.00 689.9h0.9V762.4h-0.9zM247.37 694.5h0.9V762.4h-0.9zM249.73 689.3h0.9V762.4h-0.9zM252.10 695.1h0.9V762.4h-0.9zM254.46 695.0h0.9V762.4h-0.9zM256.82 691.6h0.9V762.4h-0.9zM259.19 684.9h0.9V762.4h-0.9zM261.55 690.4h0.9V762.4h-0.9zM263.92 692.9h0.9V762.4h-0.9zM266.28 692.6h0.9V762.4h-0.9zM268.65 690.6h0.9V762.4h-0.9zM271.01 692.7h0.9V762.4h-0.9zM273.37 689.7h0.9V762.4h-0.9zM275.74 691.2h0.9V762.4h-0.9zM278.10 695.0h0.9V762.4h-0.9zM280.47 691.6h0.9V762.4h-0.9zM282.83 685.8h0.9V762.4h-0.9zM285.20 694.5h0.9V762.4h-0.9zM287.56 690.8h0.9V762.4h-0.9zM289.92 690.6h0.9V762.4h-0.9zM292.29 694.3h0.9V762.4h-0.9zM294.65 688.8h0.9V762.4h-0.9zM297.02 682.8h0.9V762.4h-0.9zM299.38 695.4h0.9V762.4h-0.9zM301.75 687.3h0.9V762.4h-0.9zM304.11 695.8h0.9V762.4h-0.9zM306.47 692.5h0.9V762.4h-0.9zM308.84 699.1h0.9V762.4h-0.9zM311.20 695.6h0.9V762.4h-0.9zM313.57 690.4h0.9V762.4h-0.9zM315.93 692.1h0.9V762.4h-0.9zM318.30 691.6h0.9V762.4h-0.9zM320.66 687.1h0.9V762.4h-0.9zM323.02 694.9h0.9V762.4h-0.9zM325.39 694.1h0.9V762.4h-0.9zM327.75 689.8h0.9V762.4h-0.9zM330.12 692.9h0.9V762.4h-0.9zM332.48 698.1h0.9V762.4h-0.9zM334.84 694.5h0.9V762.4h-0.9zM337.21 693.5h0.9V762.4h-0.9zM339.57 690.7h0.9V762.4h-0.9zM341.94 691.7h0.9V762.4h-0.9zM344.30 691.4h0.9V762.4h-0.9zM346.67 693.0h0.9V762.4h-0.9zM349.03 688.9h0.9V762.4h-0.9zM351.39 691.1h0.9V762.4h-0.9zM353.76 697.8h0.9V762.4h-0.9zM356.12 697.5h0.9V762.4h-0.9zM358.49 688.1h0.9V762.4h-0.9zM360.85 687.7h0.9V762.4h-0.9zM363.22 695.4h0.9V762.4h-0.9zM365.58 695.7h0.9V762.4h-0.9zM367.94 691.6h0.9V762.4h-0.9zM370.31 687.3h0.9V762.4h-0.9zM372.67 690.9h0.9V762.4h-0.9zM375.04 693.8h0.9V762.4h-0.9zM377.40 689.8h0.9V762.4h-0.9zM379.77 693.0h0.9V762.4h-0.9zM382.13 685.6h0.9V762.4h-0.9zM384.49 691.6h0.9V762.4h-0.9zM386.86 691.7h0.9V762.4h-0.9zM389.22 691.7h0.9V762.4h-0.9zM391.59 686.8h0.9V762.4h-0.9zM393.95 690.2h0.9V762.4h-0.9zM396.31 689.5h0.9V762.4h-0.9zM398.68 696.3h0.9V762.4h-0.9zM401.04 695.7h0.9V762.4h-0.9zM403.41 695.9h0.9V762.4h-0.9zM405.77 693.7h0.9V762.4h-0.9zM408.14 693.1h0.9V762.4h-0.9zM410.50 693.0h0.9V762.4h-0.9zM412.86 691.4h0.9V762.4h-0.9zM415.23 693.1h0.9V762.4h-0.9zM417.59 689.6h0.9V762.4h-0.9zM419.96 689.6h0.9V762.4h-0.9zM422.32 693.9h0.9V762.4h-0.9zM424.69 690.8h0.9V762.4h-0.9zM427.05 694.9h0.9V762.4h-0.9zM429.41 694.6h0.9V762.4h-0.9zM431.78 697.5h0.9V762.4h-0.9zM434.14 689.4h0.9V762.4h-0.9zM436.51 691.3h0.9V762.4h-0.9zM438.87 694.0h0.9V762.4h-0.9zM441.24 694.2h0.9V762.4h-0.9zM443.60 696.2h0.9V762.4h-0.9zM445.96 692.0h0.9V762.4h-0.9zM448.33 698.1h0.9V762.4h-0.9zM450.69 691.3h0.9V762.4h-0.9zM453.06 692.7h0.9V762.4h-0.9zM455.42 696.9h0.9V762.4h-0.9zM457.79 698.8h0.9V762.4h-0.9zM460.15 692.3h0.9V762.4h-0.9zM462.51 691.0h0.9V762.4h-0.9zM464.88 697.0h0.9V762.4h-0.9zM467.24 692.0h0.9V762.4h-0.9zM469.61 698.5h0.9V762.4h-0.9zM471.97 687.0h0.9V762.4h-0.9zM474.33 686.4h0.9V762.4h-0.9zM476.70 689.7h0.9V762.4h-0.9zM479.06 694.0h0.9V762.4h-0.9zM481.43 698.1h0.9V762.4h-0.9zM483.79 695.6h0.9V762.4h-0.9zM486.16 695.2h0.9V762.4h-0.9zM488.52 695.5h0.9V762.4h-0.9zM490.88 700.1h0.9V762.4h-0.9zM493.25 699.4h0.9V762.4h-0.9zM495.61 687.1h0.9V762.4h-0.9zM497.98 688.5h0.9V762.4h-0.9zM500.34 692.8h0.9V762.4h-0.9zM502.71 696.2h0.9V762.4h-0.9zM505.07 691.0h0.9V762.4h-0.9zM507.43 688.1h0.9V762.4h-0.9zM509.80 694.0h0.9V762.4h-0.9zM512.16 699.0h0.9V762.4h-0.9zM514.53 697.6h0.9V762.4h-0.9zM516.89 700.0h0.9V762.4h-0.9zM519.26 692.5h0.9V762.4h-0.9zM521.62 686.8h0.9V762.4h-0.9zM523.98 688.3h0.9V762.4h-0.9zM526.35 689.3h0.9V762.4h-0.9zM528.71 695.1h0.9V762.4h-0.9zM531.08 694.1h0.9V762.4h-0.9zM533.44 695.9h0.9V762.4h-0.9zM535.80 691.4h0.9V762.4h-0.9zM538.17 695.2h0.9V762.4h-0.9zM540.53 696.2h0.9V762.4h-0.9zM542.90 694.0h0.9V762.4h-0.9zM545.26 689.4h0.9V762.4h-0.9zM547.63 692.3h0.9V762.4h-0.9zM549.99 691.6h0.9V762.4h-0.9zM552.35 695.6h0.9V762.4h-0.9zM554.72 695.6h0.9V762.4h-0.9zM557.08 697.6h0.9V762.4h-0.9zM559.45 695.3h0.9V762.4h-0.9zM561.81 696.1h0.9V762.4h-0.9zM564.18 697.1h0.9V762.4h-0.9zM566.54 700.9h0.9V762.4h-0.9zM568.90 688.2h0.9V762.4h-0.9zM571.27 692.4h0.9V762.4h-0.9zM573.63 695.6h0.9V762.4h-0.9zM576.00 690.5h0.9V762.4h-0.9zM578.36 694.9h0.9V762.4h-0.9zM580.73 690.2h0.9V762.4h-0.9zM583.09 690.6h0.9V762.4h-0.9zM585.45 697.3h0.9V762.4h-0.9zM587.82 699.6h0.9V762.4h-0.9zM590.18 694.5h0.9V762.4h-0.9zM592.55 693.3h0.9V762.4h-0.9zM594.91 690.8h0.9V762.4h-0.9zM597.27 693.2h0.9V762.4h-0.9zM599.64 692.1h0.9V762.4h-0.9zM602.00 692.1h0.9V762.4h-0.9zM604.37 697.4h0.9V762.4h-0.9zM606.73 691.7h0.9V762.4h-0.9zM609.10 694.1h0.9V762.4h-0.9zM611.46 698.3h0.9V762.4h-0.9zM613.82 697.6h0.9V762.4h-0.9zM616.19 694.1h0.9V762.4h-0.9zM618.55 685.2h0.9V762.4h-0.9zM620.92 694.8h0.9V762.4h-0.9zM623.28 698.0h0.9V762.4h-0.9zM625.65 695.1h0.9V762.4h-0.9zM628.01 696.6h0.9V762.4h-0.9zM630.37 693.9h0.9V762.4h-0.9zM632.74 692.8h0.9V762.4h-0.9zM635.10 694.0h0.9V762.4h-0.9zM637.47 690.7h0.9V762.4h-0.9zM639.83 691.8h0.9V762.4h-0.9zM642.20 691.7h0.9V762.4h-0.9zM644.56 694.2h0.9V762.4h-0.9zM646.92 696.7h0.9V762.4h-0.9zM649.29 698.5h0.9V762.4h-0.9zM651.65 687.4h0.9V762.4h-0.9zM654.02 688.1h0.9V762.4h-0.9zM656.38 691.5h0.9V762.4h-0.9zM658.75 692.9h0.9V762.4h-0.9zM661.11 694.4h0.9V762.4h-0.9zM663.47 694.4h0.9V762.4h-0.9zM665.84 693.6h0.9V762.4h-0.9zM668.20 700.4h0.9V762.4h-0.9zM670.57 691.8h0.9V762.4h-0.9zM672.93 690.3h0.9V762.4h-0.9zM675.29 687.6h0.9V762.4h-0.9zM677.66 691.7h0.9V762.4h-0.9zM680.02 689.0h0.9V762.4h-0.9zM682.39 692.8h0.9V762.4h-0.9zM684.75 693.5h0.9V762.4h-0.9zM687.12 693.7h0.9V762.4h-0.9zM689.48 698.3h0.9V762.4h-0.9zM691.84 696.7h0.9V762.4h-0.9zM694.21 689.8h0.9V762.4h-0.9zM696.57 696.4h0.9V762.4h-0.9zM698.94 694.7h0.9V762.4h-0.9zM701.30 697.2h0.9V762.4h-0.9zM703.67 698.9h0.9V762.4h-0.9zM706.03 691.1h0.9V762.4h-0.9zM708.39 697.3h0.9V762.4h-0.9zM710.76 696.4h0.9V762.4h-0.9zM713.12 692.7h0.9V762.4h-0.9zM715.49 697.4h0.9V762.4h-0.9zM717.85 697.0h0.9V762.4h-0.9zM720.22 690.1h0.9V762.4h-0.9zM722.58 692.6h0.9V762.4h-0.9zM724.94 693.6h0.9V762.4h-0.9zM727.31 694.1h0.9V762.4h-0.9zM729.67 694.9h0.9V762.4h-0.9zM732.04 690.2h0.9V762.4h-0.9zM734.40 693.6h0.9V762.4h-0.9zM736.76 699.7h0.9V762.4h-0.9zM739.13 697.0h0.9V762.4h-0.9zM741.49 696.4h0.9V762.4h-0.9zM743.86 694.8h0.9V762.4h-0.9zM746.22 691.2h0.9V762.4h-0.9zM748.59 696.3h0.9V762.4h-0.9zM750.95 690.5h0.9V762.4h-0.9zM753.31 687.2h0.9V762.4h-0.9zM755.68 690.6h0.9V762.4h-0.9zM758.04 693.0h0.9V762.4h-0.9zM760.41 692.6h0.9V762.4h-0.9zM762.77 695.9h0.9V762.4h-0.9zM765.14 700.7h0.9V762.4h-0.9zM767.50 762.4h1.1V762.4h-1.1z" fill="#6a9fcb"/><path d="M86.60 632.2h2.36V698.0h-2.36zM88.96 622.1h2.36V691.3h-2.36zM91.33 620.9h2.36V694.0h-2.36zM93.69 625.5h2.36V692.4h-2.36zM96.06 624.6h2.36V693.8h-2.36zM98.42 628.2h2.36V696.9h-2.36zM100.79 623.6h2.36V692.0h-2.36zM103.15 626.1h2.36V694.2h-2.36zM105.51 628.5h2.36V693.8h-2.36zM107.88 630.8h2.36V696.2h-2.36zM110.24 627.8h2.36V693.7h-2.36zM112.61 631.0h2.36V693.5h-2.36zM114.97 624.1h2.36V689.0h-2.36zM117.34 616.4h2.36V688.5h-2.36zM119.70 619.3h2.36V695.8h-2.36zM122.06 626.1h2.36V694.4h-2.36zM124.43 619.4h2.36V685.3h-2.36zM126.79 621.0h2.36V689.4h-2.36zM129.16 633.3h2.36V699.4h-2.36zM131.52 626.3h2.36V699.7h-2.36zM133.88 622.6h2.36V691.7h-2.36zM136.25 621.3h2.36V691.0h-2.36zM138.61 621.5h2.36V691.3h-2.36zM140.98 627.0h2.36V698.5h-2.36zM143.34 629.1h2.36V694.1h-2.36zM145.71 626.7h2.36V690.8h-2.36zM148.07 621.6h2.36V693.1h-2.36zM150.43 617.9h2.36V689.9h-2.36zM152.80 621.9h2.36V693.8h-2.36zM155.16 627.3h2.36V693.9h-2.36zM157.53 624.8h2.36V690.2h-2.36zM159.89 627.9h2.36V698.0h-2.36zM162.26 628.1h2.36V698.7h-2.36zM164.62 620.1h2.36V691.4h-2.36zM166.98 627.0h2.36V696.7h-2.36zM169.35 619.0h2.36V693.4h-2.36zM171.71 622.4h2.36V686.9h-2.36zM174.08 629.4h2.36V694.9h-2.36zM176.44 621.3h2.36V690.7h-2.36zM178.81 625.5h2.36V693.2h-2.36zM181.17 626.8h2.36V696.3h-2.36zM183.53 626.0h2.36V692.6h-2.36zM185.90 625.1h2.36V693.8h-2.36zM188.26 622.8h2.36V693.8h-2.36zM190.63 626.2h2.36V695.5h-2.36zM192.99 627.4h2.36V698.4h-2.36zM195.35 631.8h2.36V700.9h-2.36zM197.72 629.7h2.36V699.4h-2.36zM200.08 628.3h2.36V694.5h-2.36zM202.45 631.3h2.36V694.0h-2.36zM204.81 622.4h2.36V692.2h-2.36zM207.18 631.8h2.36V698.3h-2.36zM209.54 625.4h2.36V691.1h-2.36zM211.90 623.4h2.36V694.7h-2.36zM214.27 622.7h2.36V693.9h-2.36zM216.63 627.3h2.36V691.9h-2.36zM219.00 620.7h2.36V691.3h-2.36zM221.36 613.7h2.36V690.2h-2.36zM223.73 626.5h2.36V695.0h-2.36zM226.09 623.3h2.36V692.9h-2.36zM228.45 631.2h2.36V697.1h-2.36zM230.82 620.0h2.36V689.4h-2.36zM233.18 623.0h2.36V689.1h-2.36zM235.55 624.0h2.36V691.0h-2.36zM237.91 622.8h2.36V688.4h-2.36zM240.28 622.9h2.36V690.5h-2.36zM242.64 615.7h2.36V687.1h-2.36zM245.00 616.3h2.36V689.9h-2.36zM247.37 628.4h2.36V694.5h-2.36zM249.73 618.6h2.36V689.3h-2.36zM252.10 629.8h2.36V695.1h-2.36zM254.46 623.2h2.36V695.0h-2.36zM256.82 621.1h2.36V691.6h-2.36zM259.19 616.3h2.36V684.9h-2.36zM261.55 625.6h2.36V690.4h-2.36zM263.92 625.7h2.36V692.9h-2.36zM266.28 624.6h2.36V692.6h-2.36zM268.65 621.8h2.36V690.6h-2.36zM271.01 625.7h2.36V692.7h-2.36zM273.37 620.9h2.36V689.7h-2.36zM275.74 618.6h2.36V691.2h-2.36zM278.10 624.3h2.36V695.0h-2.36zM280.47 622.2h2.36V691.6h-2.36zM282.83 615.5h2.36V685.8h-2.36zM285.20 627.6h2.36V694.5h-2.36zM287.56 624.1h2.36V690.8h-2.36zM289.92 617.8h2.36V690.6h-2.36zM292.29 623.0h2.36V694.3h-2.36zM294.65 616.2h2.36V688.8h-2.36zM297.02 613.7h2.36V682.8h-2.36zM299.38 626.0h2.36V695.4h-2.36zM301.75 620.3h2.36V687.3h-2.36zM304.11 627.9h2.36V695.8h-2.36zM306.47 622.1h2.36V692.5h-2.36zM308.84 631.0h2.36V699.1h-2.36zM311.20 627.5h2.36V695.6h-2.36zM313.57 625.1h2.36V690.4h-2.36zM315.93 625.3h2.36V692.1h-2.36zM318.30 623.6h2.36V691.6h-2.36zM320.66 615.5h2.36V687.1h-2.36zM323.02 624.0h2.36V694.9h-2.36zM325.39 626.9h2.36V694.1h-2.36zM327.75 619.5h2.36V689.8h-2.36zM330.12 624.9h2.36V692.9h-2.36zM332.48 627.6h2.36V698.1h-2.36zM334.84 629.1h2.36V694.5h-2.36zM337.21 628.0h2.36V693.5h-2.36zM339.57 619.6h2.36V690.7h-2.36zM341.94 625.6h2.36V691.7h-2.36zM344.30 620.2h2.36V691.4h-2.36zM346.67 622.5h2.36V693.0h-2.36zM349.03 615.9h2.36V688.9h-2.36zM351.39 622.5h2.36V691.1h-2.36zM353.76 630.7h2.36V697.8h-2.36zM356.12 627.8h2.36V697.5h-2.36zM358.49 624.4h2.36V688.1h-2.36zM360.85 618.5h2.36V687.7h-2.36zM363.22 629.1h2.36V695.4h-2.36zM365.58 627.3h2.36V695.7h-2.36zM367.94 626.3h2.36V691.6h-2.36zM370.31 617.0h2.36V687.3h-2.36zM372.67 627.6h2.36V690.9h-2.36zM375.04 625.8h2.36V693.8h-2.36zM377.40 616.1h2.36V689.8h-2.36zM379.77 622.7h2.36V693.0h-2.36zM382.13 608.1h2.36V685.6h-2.36zM384.49 621.6h2.36V691.6h-2.36zM386.86 625.5h2.36V691.7h-2.36zM389.22 621.1h2.36V691.7h-2.36zM391.59 614.6h2.36V686.8h-2.36zM393.95 618.7h2.36V690.2h-2.36zM396.31 616.9h2.36V689.5h-2.36zM398.68 627.5h2.36V696.3h-2.36zM401.04 629.2h2.36V695.7h-2.36zM403.41 627.1h2.36V695.9h-2.36zM405.77 629.6h2.36V693.7h-2.36zM408.14 628.7h2.36V693.1h-2.36zM410.50 621.9h2.36V693.0h-2.36zM412.86 624.5h2.36V691.4h-2.36zM415.23 624.8h2.36V693.1h-2.36zM417.59 620.6h2.36V689.6h-2.36zM419.96 625.9h2.36V689.6h-2.36zM422.32 624.8h2.36V693.9h-2.36zM424.69 623.0h2.36V690.8h-2.36zM427.05 627.7h2.36V694.9h-2.36zM429.41 627.5h2.36V694.6h-2.36zM431.78 635.0h2.36V697.5h-2.36zM434.14 622.4h2.36V689.4h-2.36zM436.51 621.7h2.36V691.3h-2.36zM438.87 625.3h2.36V694.0h-2.36zM441.24 624.6h2.36V694.2h-2.36zM443.60 630.4h2.36V696.2h-2.36zM445.96 625.7h2.36V692.0h-2.36zM448.33 630.2h2.36V698.1h-2.36zM450.69 628.4h2.36V691.3h-2.36zM453.06 625.6h2.36V692.7h-2.36zM455.42 627.3h2.36V696.9h-2.36zM457.79 630.1h2.36V698.8h-2.36zM460.15 619.2h2.36V692.3h-2.36zM462.51 624.8h2.36V691.0h-2.36zM464.88 628.0h2.36V697.0h-2.36zM467.24 622.4h2.36V692.0h-2.36zM469.61 628.2h2.36V698.5h-2.36zM471.97 616.9h2.36V687.0h-2.36zM474.33 619.3h2.36V686.4h-2.36zM476.70 623.0h2.36V689.7h-2.36zM479.06 625.0h2.36V694.0h-2.36zM481.43 626.1h2.36V698.1h-2.36zM483.79 625.6h2.36V695.6h-2.36zM486.16 630.9h2.36V695.2h-2.36zM488.52 625.4h2.36V695.5h-2.36zM490.88 633.8h2.36V700.1h-2.36zM493.25 631.0h2.36V699.4h-2.36zM495.61 621.0h2.36V687.1h-2.36zM497.98 620.5h2.36V688.5h-2.36zM500.34 623.1h2.36V692.8h-2.36zM502.71 627.4h2.36V696.2h-2.36zM505.07 624.8h2.36V691.0h-2.36zM507.43 619.7h2.36V688.1h-2.36zM509.80 627.3h2.36V694.0h-2.36zM512.16 631.3h2.36V699.0h-2.36zM514.53 627.3h2.36V697.6h-2.36zM516.89 625.5h2.36V700.0h-2.36zM519.26 626.3h2.36V692.5h-2.36zM521.62 620.5h2.36V686.8h-2.36zM523.98 626.3h2.36V688.3h-2.36zM526.35 622.1h2.36V689.3h-2.36zM528.71 628.6h2.36V695.1h-2.36zM531.08 626.9h2.36V694.1h-2.36zM533.44 628.7h2.36V695.9h-2.36zM535.80 618.3h2.36V691.4h-2.36zM538.17 625.9h2.36V695.2h-2.36zM540.53 624.4h2.36V696.2h-2.36zM542.90 621.5h2.36V694.0h-2.36zM545.26 621.6h2.36V689.4h-2.36zM547.63 627.1h2.36V692.3h-2.36zM549.99 620.3h2.36V691.6h-2.36zM552.35 630.7h2.36V695.6h-2.36zM554.72 627.2h2.36V695.6h-2.36zM557.08 629.3h2.36V697.6h-2.36zM559.45 629.6h2.36V695.3h-2.36zM561.81 635.0h2.36V696.1h-2.36zM564.18 629.6h2.36V697.1h-2.36zM566.54 635.9h2.36V700.9h-2.36zM568.90 622.8h2.36V688.2h-2.36zM571.27 624.4h2.36V692.4h-2.36zM573.63 625.4h2.36V695.6h-2.36zM576.00 620.9h2.36V690.5h-2.36zM578.36 624.9h2.36V694.9h-2.36zM580.73 619.7h2.36V690.2h-2.36zM583.09 621.6h2.36V690.6h-2.36zM585.45 629.3h2.36V697.3h-2.36zM587.82 633.6h2.36V699.6h-2.36zM590.18 621.2h2.36V694.5h-2.36zM592.55 624.9h2.36V693.3h-2.36zM594.91 623.7h2.36V690.8h-2.36zM597.27 626.8h2.36V693.2h-2.36zM599.64 625.8h2.36V692.1h-2.36zM602.00 625.0h2.36V692.1h-2.36zM604.37 628.7h2.36V697.4h-2.36zM606.73 620.2h2.36V691.7h-2.36zM609.10 623.7h2.36V694.1h-2.36zM611.46 630.3h2.36V698.3h-2.36zM613.82 630.0h2.36V697.6h-2.36zM616.19 628.4h2.36V694.1h-2.36zM618.55 612.8h2.36V685.2h-2.36zM620.92 627.3h2.36V694.8h-2.36zM623.28 631.1h2.36V698.0h-2.36zM625.65 626.9h2.36V695.1h-2.36zM628.01 627.3h2.36V696.6h-2.36zM630.37 623.7h2.36V693.9h-2.36zM632.74 626.9h2.36V692.8h-2.36zM635.10 628.9h2.36V694.0h-2.36zM637.47 620.2h2.36V690.7h-2.36zM639.83 623.2h2.36V691.8h-2.36zM642.20 619.5h2.36V691.7h-2.36zM644.56 626.8h2.36V694.2h-2.36zM646.92 630.5h2.36V696.7h-2.36zM649.29 630.9h2.36V698.5h-2.36zM651.65 619.7h2.36V687.4h-2.36zM654.02 617.8h2.36V688.1h-2.36zM656.38 622.3h2.36V691.5h-2.36zM658.75 626.3h2.36V692.9h-2.36zM661.11 625.6h2.36V694.4h-2.36zM663.47 627.0h2.36V694.4h-2.36zM665.84 629.2h2.36V693.6h-2.36zM668.20 629.6h2.36V700.4h-2.36zM670.57 622.5h2.36V691.8h-2.36zM672.93 616.3h2.36V690.3h-2.36zM675.29 616.4h2.36V687.6h-2.36zM677.66 622.6h2.36V691.7h-2.36zM680.02 616.4h2.36V689.0h-2.36zM682.39 622.4h2.36V692.8h-2.36zM684.75 626.6h2.36V693.5h-2.36zM687.12 624.5h2.36V693.7h-2.36zM689.48 628.2h2.36V698.3h-2.36zM691.84 630.7h2.36V696.7h-2.36zM694.21 623.2h2.36V689.8h-2.36zM696.57 631.0h2.36V696.4h-2.36zM698.94 627.5h2.36V694.7h-2.36zM701.30 629.9h2.36V697.2h-2.36zM703.67 634.9h2.36V698.9h-2.36zM706.03 624.4h2.36V691.1h-2.36zM708.39 626.4h2.36V697.3h-2.36zM710.76 633.1h2.36V696.4h-2.36zM713.12 619.6h2.36V692.7h-2.36zM715.49 628.7h2.36V697.4h-2.36zM717.85 624.4h2.36V697.0h-2.36zM720.22 621.9h2.36V690.1h-2.36zM722.58 618.8h2.36V692.6h-2.36zM724.94 623.6h2.36V693.6h-2.36zM727.31 622.8h2.36V694.1h-2.36zM729.67 623.1h2.36V694.9h-2.36zM732.04 621.5h2.36V690.2h-2.36zM734.40 617.2h2.36V693.6h-2.36zM736.76 634.3h2.36V699.7h-2.36zM739.13 625.6h2.36V697.0h-2.36zM741.49 623.2h2.36V696.4h-2.36zM743.86 630.1h2.36V694.8h-2.36zM746.22 625.0h2.36V691.2h-2.36zM748.59 629.0h2.36V696.3h-2.36zM750.95 621.0h2.36V690.5h-2.36zM753.31 625.2h2.36V687.2h-2.36zM755.68 624.3h2.36V690.6h-2.36zM758.04 624.0h2.36V693.0h-2.36zM760.41 628.8h2.36V692.6h-2.36zM762.77 623.8h2.36V695.9h-2.36zM765.14 631.2h2.36V700.7h-2.36z" fill="#d2e3ef"/><path d="M88.16 632.2h0.7V698.0h-0.7zM90.53 622.1h0.7V691.3h-0.7zM92.89 620.9h0.7V694.0h-0.7zM95.26 625.5h0.7V692.4h-0.7zM97.62 624.6h0.7V693.8h-0.7zM99.99 628.2h0.7V696.9h-0.7zM102.35 623.6h0.7V692.0h-0.7zM104.71 626.1h0.7V694.2h-0.7zM107.08 628.5h0.7V693.8h-0.7zM109.44 630.8h0.7V696.2h-0.7zM111.81 627.8h0.7V693.7h-0.7zM114.17 631.0h0.7V693.5h-0.7zM116.54 624.1h0.7V689.0h-0.7zM118.90 616.4h0.7V688.5h-0.7zM121.26 619.3h0.7V695.8h-0.7zM123.63 626.1h0.7V694.4h-0.7zM125.99 619.4h0.7V685.3h-0.7zM128.36 621.0h0.7V689.4h-0.7zM130.72 633.3h0.7V699.4h-0.7zM133.08 626.3h0.7V699.7h-0.7zM135.45 622.6h0.7V691.7h-0.7zM137.81 621.3h0.7V691.0h-0.7zM140.18 621.5h0.7V691.3h-0.7zM142.54 627.0h0.7V698.5h-0.7zM144.91 629.1h0.7V694.1h-0.7zM147.27 626.7h0.7V690.8h-0.7zM149.63 621.6h0.7V693.1h-0.7zM152.00 617.9h0.7V689.9h-0.7zM154.36 621.9h0.7V693.8h-0.7zM156.73 627.3h0.7V693.9h-0.7zM159.09 624.8h0.7V690.2h-0.7zM161.46 627.9h0.7V698.0h-0.7zM163.82 628.1h0.7V698.7h-0.7zM166.18 620.1h0.7V691.4h-0.7zM168.55 627.0h0.7V696.7h-0.7zM170.91 619.0h0.7V693.4h-0.7zM173.28 622.4h0.7V686.9h-0.7zM175.64 629.4h0.7V694.9h-0.7zM178.01 621.3h0.7V690.7h-0.7zM180.37 625.5h0.7V693.2h-0.7zM182.73 626.8h0.7V696.3h-0.7zM185.10 626.0h0.7V692.6h-0.7zM187.46 625.1h0.7V693.8h-0.7zM189.83 622.8h0.7V693.8h-0.7zM192.19 626.2h0.7V695.5h-0.7zM194.55 627.4h0.7V698.4h-0.7zM196.92 631.8h0.7V700.9h-0.7zM199.28 629.7h0.7V699.4h-0.7zM201.65 628.3h0.7V694.5h-0.7zM204.01 631.3h0.7V694.0h-0.7zM206.38 622.4h0.7V692.2h-0.7zM208.74 631.8h0.7V698.3h-0.7zM211.10 625.4h0.7V691.1h-0.7zM213.47 623.4h0.7V694.7h-0.7zM215.83 622.7h0.7V693.9h-0.7zM218.20 627.3h0.7V691.9h-0.7zM220.56 620.7h0.7V691.3h-0.7zM222.93 613.7h0.7V690.2h-0.7zM225.29 626.5h0.7V695.0h-0.7zM227.65 623.3h0.7V692.9h-0.7zM230.02 631.2h0.7V697.1h-0.7zM232.38 620.0h0.7V689.4h-0.7zM234.75 623.0h0.7V689.1h-0.7zM237.11 624.0h0.7V691.0h-0.7zM239.48 622.8h0.7V688.4h-0.7zM241.84 622.9h0.7V690.5h-0.7zM244.20 615.7h0.7V687.1h-0.7zM246.57 616.3h0.7V689.9h-0.7zM248.93 628.4h0.7V694.5h-0.7zM251.30 618.6h0.7V689.3h-0.7zM253.66 629.8h0.7V695.1h-0.7zM256.02 623.2h0.7V695.0h-0.7zM258.39 621.1h0.7V691.6h-0.7zM260.75 616.3h0.7V684.9h-0.7zM263.12 625.6h0.7V690.4h-0.7zM265.48 625.7h0.7V692.9h-0.7zM267.85 624.6h0.7V692.6h-0.7zM270.21 621.8h0.7V690.6h-0.7zM272.57 625.7h0.7V692.7h-0.7zM274.94 620.9h0.7V689.7h-0.7zM277.30 618.6h0.7V691.2h-0.7zM279.67 624.3h0.7V695.0h-0.7zM282.03 622.2h0.7V691.6h-0.7zM284.40 615.5h0.7V685.8h-0.7zM286.76 627.6h0.7V694.5h-0.7zM289.12 624.1h0.7V690.8h-0.7zM291.49 617.8h0.7V690.6h-0.7zM293.85 623.0h0.7V694.3h-0.7zM296.22 616.2h0.7V688.8h-0.7zM298.58 613.7h0.7V682.8h-0.7zM300.95 626.0h0.7V695.4h-0.7zM303.31 620.3h0.7V687.3h-0.7zM305.67 627.9h0.7V695.8h-0.7zM308.04 622.1h0.7V692.5h-0.7zM310.40 631.0h0.7V699.1h-0.7zM312.77 627.5h0.7V695.6h-0.7zM315.13 625.1h0.7V690.4h-0.7zM317.50 625.3h0.7V692.1h-0.7zM319.86 623.6h0.7V691.6h-0.7zM322.22 615.5h0.7V687.1h-0.7zM324.59 624.0h0.7V694.9h-0.7zM326.95 626.9h0.7V694.1h-0.7zM329.32 619.5h0.7V689.8h-0.7zM331.68 624.9h0.7V692.9h-0.7zM334.04 627.6h0.7V698.1h-0.7zM336.41 629.1h0.7V694.5h-0.7zM338.77 628.0h0.7V693.5h-0.7zM341.14 619.6h0.7V690.7h-0.7zM343.50 625.6h0.7V691.7h-0.7zM345.87 620.2h0.7V691.4h-0.7zM348.23 622.5h0.7V693.0h-0.7zM350.59 615.9h0.7V688.9h-0.7zM352.96 622.5h0.7V691.1h-0.7zM355.32 630.7h0.7V697.8h-0.7zM357.69 627.8h0.7V697.5h-0.7zM360.05 624.4h0.7V688.1h-0.7zM362.42 618.5h0.7V687.7h-0.7zM364.78 629.1h0.7V695.4h-0.7zM367.14 627.3h0.7V695.7h-0.7zM369.51 626.3h0.7V691.6h-0.7zM371.87 617.0h0.7V687.3h-0.7zM374.24 627.6h0.7V690.9h-0.7zM376.60 625.8h0.7V693.8h-0.7zM378.97 616.1h0.7V689.8h-0.7zM381.33 622.7h0.7V693.0h-0.7zM383.69 608.1h0.7V685.6h-0.7zM386.06 621.6h0.7V691.6h-0.7zM388.42 625.5h0.7V691.7h-0.7zM390.79 621.1h0.7V691.7h-0.7zM393.15 614.6h0.7V686.8h-0.7zM395.51 618.7h0.7V690.2h-0.7zM397.88 616.9h0.7V689.5h-0.7zM400.24 627.5h0.7V696.3h-0.7zM402.61 629.2h0.7V695.7h-0.7zM404.97 627.1h0.7V695.9h-0.7zM407.34 629.6h0.7V693.7h-0.7zM409.70 628.7h0.7V693.1h-0.7zM412.06 621.9h0.7V693.0h-0.7zM414.43 624.5h0.7V691.4h-0.7zM416.79 624.8h0.7V693.1h-0.7zM419.16 620.6h0.7V689.6h-0.7zM421.52 625.9h0.7V689.6h-0.7zM423.89 624.8h0.7V693.9h-0.7zM426.25 623.0h0.7V690.8h-0.7zM428.61 627.7h0.7V694.9h-0.7zM430.98 627.5h0.7V694.6h-0.7zM433.34 635.0h0.7V697.5h-0.7zM435.71 622.4h0.7V689.4h-0.7zM438.07 621.7h0.7V691.3h-0.7zM440.44 625.3h0.7V694.0h-0.7zM442.80 624.6h0.7V694.2h-0.7zM445.16 630.4h0.7V696.2h-0.7zM447.53 625.7h0.7V692.0h-0.7zM449.89 630.2h0.7V698.1h-0.7zM452.26 628.4h0.7V691.3h-0.7zM454.62 625.6h0.7V692.7h-0.7zM456.99 627.3h0.7V696.9h-0.7zM459.35 630.1h0.7V698.8h-0.7zM461.71 619.2h0.7V692.3h-0.7zM464.08 624.8h0.7V691.0h-0.7zM466.44 628.0h0.7V697.0h-0.7zM468.81 622.4h0.7V692.0h-0.7zM471.17 628.2h0.7V698.5h-0.7zM473.53 616.9h0.7V687.0h-0.7zM475.90 619.3h0.7V686.4h-0.7zM478.26 623.0h0.7V689.7h-0.7zM480.63 625.0h0.7V694.0h-0.7zM482.99 626.1h0.7V698.1h-0.7zM485.36 625.6h0.7V695.6h-0.7zM487.72 630.9h0.7V695.2h-0.7zM490.08 625.4h0.7V695.5h-0.7zM492.45 633.8h0.7V700.1h-0.7zM494.81 631.0h0.7V699.4h-0.7zM497.18 621.0h0.7V687.1h-0.7zM499.54 620.5h0.7V688.5h-0.7zM501.91 623.1h0.7V692.8h-0.7zM504.27 627.4h0.7V696.2h-0.7zM506.63 624.8h0.7V691.0h-0.7zM509.00 619.7h0.7V688.1h-0.7zM511.36 627.3h0.7V694.0h-0.7zM513.73 631.3h0.7V699.0h-0.7zM516.09 627.3h0.7V697.6h-0.7zM518.46 625.5h0.7V700.0h-0.7zM520.82 626.3h0.7V692.5h-0.7zM523.18 620.5h0.7V686.8h-0.7zM525.55 626.3h0.7V688.3h-0.7zM527.91 622.1h0.7V689.3h-0.7zM530.28 628.6h0.7V695.1h-0.7zM532.64 626.9h0.7V694.1h-0.7zM535.00 628.7h0.7V695.9h-0.7zM537.37 618.3h0.7V691.4h-0.7zM539.73 625.9h0.7V695.2h-0.7zM542.10 624.4h0.7V696.2h-0.7zM544.46 621.5h0.7V694.0h-0.7zM546.83 621.6h0.7V689.4h-0.7zM549.19 627.1h0.7V692.3h-0.7zM551.55 620.3h0.7V691.6h-0.7zM553.92 630.7h0.7V695.6h-0.7zM556.28 627.2h0.7V695.6h-0.7zM558.65 629.3h0.7V697.6h-0.7zM561.01 629.6h0.7V695.3h-0.7zM563.38 635.0h0.7V696.1h-0.7zM565.74 629.6h0.7V697.1h-0.7zM568.10 635.9h0.7V700.9h-0.7zM570.47 622.8h0.7V688.2h-0.7zM572.83 624.4h0.7V692.4h-0.7zM575.20 625.4h0.7V695.6h-0.7zM577.56 620.9h0.7V690.5h-0.7zM579.93 624.9h0.7V694.9h-0.7zM582.29 619.7h0.7V690.2h-0.7zM584.65 621.6h0.7V690.6h-0.7zM587.02 629.3h0.7V697.3h-0.7zM589.38 633.6h0.7V699.6h-0.7zM591.75 621.2h0.7V694.5h-0.7zM594.11 624.9h0.7V693.3h-0.7zM596.48 623.7h0.7V690.8h-0.7zM598.84 626.8h0.7V693.2h-0.7zM601.20 625.8h0.7V692.1h-0.7zM603.57 625.0h0.7V692.1h-0.7zM605.93 628.7h0.7V697.4h-0.7zM608.30 620.2h0.7V691.7h-0.7zM610.66 623.7h0.7V694.1h-0.7zM613.02 630.3h0.7V698.3h-0.7zM615.39 630.0h0.7V697.6h-0.7zM617.75 628.4h0.7V694.1h-0.7zM620.12 612.8h0.7V685.2h-0.7zM622.48 627.3h0.7V694.8h-0.7zM624.85 631.1h0.7V698.0h-0.7zM627.21 626.9h0.7V695.1h-0.7zM629.57 627.3h0.7V696.6h-0.7zM631.94 623.7h0.7V693.9h-0.7zM634.30 626.9h0.7V692.8h-0.7zM636.67 628.9h0.7V694.0h-0.7zM639.03 620.2h0.7V690.7h-0.7zM641.40 623.2h0.7V691.8h-0.7zM643.76 619.5h0.7V691.7h-0.7zM646.12 626.8h0.7V694.2h-0.7zM648.49 630.5h0.7V696.7h-0.7zM650.85 630.9h0.7V698.5h-0.7zM653.22 619.7h0.7V687.4h-0.7zM655.58 617.8h0.7V688.1h-0.7zM657.95 622.3h0.7V691.5h-0.7zM660.31 626.3h0.7V692.9h-0.7zM662.67 625.6h0.7V694.4h-0.7zM665.04 627.0h0.7V694.4h-0.7zM667.40 629.2h0.7V693.6h-0.7zM669.77 629.6h0.7V700.4h-0.7zM672.13 622.5h0.7V691.8h-0.7zM674.49 616.3h0.7V690.3h-0.7zM676.86 616.4h0.7V687.6h-0.7zM679.22 622.6h0.7V691.7h-0.7zM681.59 616.4h0.7V689.0h-0.7zM683.95 622.4h0.7V692.8h-0.7zM686.32 626.6h0.7V693.5h-0.7zM688.68 624.5h0.7V693.7h-0.7zM691.04 628.2h0.7V698.3h-0.7zM693.41 630.7h0.7V696.7h-0.7zM695.77 623.2h0.7V689.8h-0.7zM698.14 631.0h0.7V696.4h-0.7zM700.50 627.5h0.7V694.7h-0.7zM702.87 629.9h0.7V697.2h-0.7zM705.23 634.9h0.7V698.9h-0.7zM707.59 624.4h0.7V691.1h-0.7zM709.96 626.4h0.7V697.3h-0.7zM712.32 633.1h0.7V696.4h-0.7zM714.69 619.6h0.7V692.7h-0.7zM717.05 628.7h0.7V697.4h-0.7zM719.42 624.4h0.7V697.0h-0.7zM721.78 621.9h0.7V690.1h-0.7zM724.14 618.8h0.7V692.6h-0.7zM726.51 623.6h0.7V693.6h-0.7zM728.87 622.8h0.7V694.1h-0.7zM731.24 623.1h0.7V694.9h-0.7zM733.60 621.5h0.7V690.2h-0.7zM735.96 617.2h0.7V693.6h-0.7zM738.33 634.3h0.7V699.7h-0.7zM740.69 625.6h0.7V697.0h-0.7zM743.06 623.2h0.7V696.4h-0.7zM745.42 630.1h0.7V694.8h-0.7zM747.79 625.0h0.7V691.2h-0.7zM750.15 629.0h0.7V696.3h-0.7zM752.51 621.0h0.7V690.5h-0.7zM754.88 625.2h0.7V687.2h-0.7zM757.24 624.3h0.7V690.6h-0.7zM759.61 624.0h0.7V693.0h-0.7zM761.97 628.8h0.7V692.6h-0.7zM764.34 623.8h0.7V695.9h-0.7zM766.70 631.2h0.7V700.7h-0.7zM767.50 725.0h1.1V762.4h-1.1z" fill="#e6f0f7"/><path d="M86.60 569.2h2.36V632.2h-2.36zM88.96 551.4h2.36V622.1h-2.36zM91.33 556.0h2.36V620.9h-2.36zM93.69 564.6h2.36V625.5h-2.36zM96.06 556.9h2.36V624.6h-2.36zM98.42 560.0h2.36V628.2h-2.36zM100.79 560.0h2.36V623.6h-2.36zM103.15 554.3h2.36V626.1h-2.36zM105.51 563.4h2.36V628.5h-2.36zM107.88 559.2h2.36V630.8h-2.36zM110.24 558.3h2.36V627.8h-2.36zM112.61 562.4h2.36V631.0h-2.36zM114.97 562.2h2.36V624.1h-2.36zM117.34 550.2h2.36V616.4h-2.36zM119.70 542.7h2.36V619.3h-2.36zM122.06 567.5h2.36V626.1h-2.36zM124.43 544.6h2.36V619.4h-2.36zM126.79 548.6h2.36V621.0h-2.36zM129.16 562.3h2.36V633.3h-2.36zM131.52 554.8h2.36V626.3h-2.36zM133.88 550.8h2.36V622.6h-2.36zM136.25 540.8h2.36V621.3h-2.36zM138.61 552.4h2.36V621.5h-2.36zM140.98 554.2h2.36V627.0h-2.36zM143.34 560.8h2.36V629.1h-2.36zM145.71 559.1h2.36V626.7h-2.36zM148.07 558.0h2.36V621.6h-2.36zM150.43 546.6h2.36V617.9h-2.36zM152.80 564.4h2.36V621.9h-2.36zM155.16 564.2h2.36V627.3h-2.36zM157.53 554.4h2.36V624.8h-2.36zM159.89 556.6h2.36V627.9h-2.36zM162.26 559.6h2.36V628.1h-2.36zM164.62 542.2h2.36V620.1h-2.36zM166.98 546.6h2.36V627.0h-2.36zM169.35 554.3h2.36V619.0h-2.36zM171.71 556.2h2.36V622.4h-2.36zM174.08 556.5h2.36V629.4h-2.36zM176.44 551.8h2.36V621.3h-2.36zM178.81 549.4h2.36V625.5h-2.36zM181.17 562.4h2.36V626.8h-2.36zM183.53 560.5h2.36V626.0h-2.36zM185.90 559.5h2.36V625.1h-2.36zM188.26 556.4h2.36V622.8h-2.36zM190.63 557.0h2.36V626.2h-2.36zM192.99 561.9h2.36V627.4h-2.36zM195.35 563.9h2.36V631.8h-2.36zM197.72 561.4h2.36V629.7h-2.36zM200.08 568.7h2.36V628.3h-2.36zM202.45 556.0h2.36V631.3h-2.36zM204.81 553.9h2.36V622.4h-2.36zM207.18 565.1h2.36V631.8h-2.36zM209.54 557.9h2.36V625.4h-2.36zM211.90 559.6h2.36V623.4h-2.36zM214.27 547.2h2.36V622.7h-2.36zM216.63 558.3h2.36V627.3h-2.36zM219.00 549.7h2.36V620.7h-2.36zM221.36 556.2h2.36V613.7h-2.36zM223.73 565.2h2.36V626.5h-2.36zM226.09 550.7h2.36V623.3h-2.36zM228.45 559.9h2.36V631.2h-2.36zM230.82 546.8h2.36V620.0h-2.36zM233.18 552.7h2.36V623.0h-2.36zM235.55 557.6h2.36V624.0h-2.36zM237.91 565.3h2.36V622.8h-2.36zM240.28 566.7h2.36V622.9h-2.36zM242.64 553.1h2.36V615.7h-2.36zM245.00 548.4h2.36V616.3h-2.36zM247.37 562.2h2.36V628.4h-2.36zM249.73 561.2h2.36V618.6h-2.36zM252.10 568.9h2.36V629.8h-2.36zM254.46 563.2h2.36V623.2h-2.36zM256.82 542.2h2.36V621.1h-2.36zM259.19 541.1h2.36V616.3h-2.36zM261.55 547.7h2.36V625.6h-2.36zM263.92 558.2h2.36V625.7h-2.36zM266.28 562.0h2.36V624.6h-2.36zM268.65 552.3h2.36V621.8h-2.36zM271.01 557.7h2.36V625.7h-2.36zM273.37 562.4h2.36V620.9h-2.36zM275.74 546.1h2.36V618.6h-2.36zM278.10 553.9h2.36V624.3h-2.36zM280.47 553.5h2.36V622.2h-2.36zM282.83 534.2h2.36V615.5h-2.36zM285.20 556.3h2.36V627.6h-2.36zM287.56 555.2h2.36V624.1h-2.36zM289.92 546.9h2.36V617.8h-2.36zM292.29 564.2h2.36V623.0h-2.36zM294.65 545.6h2.36V616.2h-2.36zM297.02 543.2h2.36V613.7h-2.36zM299.38 568.8h2.36V626.0h-2.36zM301.75 547.1h2.36V620.3h-2.36zM304.11 564.1h2.36V627.9h-2.36zM306.47 557.2h2.36V622.1h-2.36zM308.84 565.7h2.36V631.0h-2.36zM311.20 565.3h2.36V627.5h-2.36zM313.57 551.1h2.36V625.1h-2.36zM315.93 557.8h2.36V625.3h-2.36zM318.30 551.3h2.36V623.6h-2.36zM320.66 543.2h2.36V615.5h-2.36zM323.02 560.1h2.36V624.0h-2.36zM325.39 565.4h2.36V626.9h-2.36zM327.75 548.3h2.36V619.5h-2.36zM330.12 551.0h2.36V624.9h-2.36zM332.48 541.9h2.36V627.6h-2.36zM334.84 565.0h2.36V629.1h-2.36zM337.21 557.5h2.36V628.0h-2.36zM339.57 546.2h2.36V619.6h-2.36zM341.94 559.7h2.36V625.6h-2.36zM344.30 544.8h2.36V620.2h-2.36zM346.67 553.4h2.36V622.5h-2.36zM349.03 551.9h2.36V615.9h-2.36zM351.39 553.7h2.36V622.5h-2.36zM353.76 556.9h2.36V630.7h-2.36zM356.12 554.5h2.36V627.8h-2.36zM358.49 558.6h2.36V624.4h-2.36zM360.85 546.0h2.36V618.5h-2.36zM363.22 562.7h2.36V629.1h-2.36zM365.58 542.3h2.36V627.3h-2.36zM367.94 558.0h2.36V626.3h-2.36zM370.31 548.0h2.36V617.0h-2.36zM372.67 558.5h2.36V627.6h-2.36zM375.04 546.7h2.36V625.8h-2.36zM377.40 545.1h2.36V616.1h-2.36zM379.77 562.8h2.36V622.7h-2.36zM382.13 546.1h2.36V608.1h-2.36zM384.49 553.8h2.36V621.6h-2.36zM386.86 552.3h2.36V625.5h-2.36zM389.22 549.9h2.36V621.1h-2.36zM391.59 544.9h2.36V614.6h-2.36zM393.95 559.1h2.36V618.7h-2.36zM396.31 551.9h2.36V616.9h-2.36zM398.68 559.2h2.36V627.5h-2.36zM401.04 563.4h2.36V629.2h-2.36zM403.41 557.8h2.36V627.1h-2.36zM405.77 564.2h2.36V629.6h-2.36zM408.14 558.0h2.36V628.7h-2.36zM410.50 551.3h2.36V621.9h-2.36zM412.86 550.4h2.36V624.5h-2.36zM415.23 546.3h2.36V624.8h-2.36zM417.59 556.3h2.36V620.6h-2.36zM419.96 560.3h2.36V625.9h-2.36zM422.32 553.0h2.36V624.8h-2.36zM424.69 547.8h2.36V623.0h-2.36zM427.05 567.5h2.36V627.7h-2.36zM429.41 564.1h2.36V627.5h-2.36zM431.78 568.1h2.36V635.0h-2.36zM434.14 545.4h2.36V622.4h-2.36zM436.51 544.7h2.36V621.7h-2.36zM438.87 553.2h2.36V625.3h-2.36zM441.24 555.4h2.36V624.6h-2.36zM443.60 565.6h2.36V630.4h-2.36zM445.96 563.0h2.36V625.7h-2.36zM448.33 562.0h2.36V630.2h-2.36zM450.69 555.0h2.36V628.4h-2.36zM453.06 560.2h2.36V625.6h-2.36zM455.42 552.3h2.36V627.3h-2.36zM457.79 562.3h2.36V630.1h-2.36zM460.15 550.8h2.36V619.2h-2.36zM462.51 556.3h2.36V624.8h-2.36zM464.88 558.3h2.36V628.0h-2.36zM467.24 556.4h2.36V622.4h-2.36zM469.61 555.2h2.36V628.2h-2.36zM471.97 546.7h2.36V616.9h-2.36zM474.33 552.8h2.36V619.3h-2.36zM476.70 558.9h2.36V623.0h-2.36zM479.06 551.5h2.36V625.0h-2.36zM481.43 565.0h2.36V626.1h-2.36zM483.79 557.9h2.36V625.6h-2.36zM486.16 568.7h2.36V630.9h-2.36zM488.52 550.7h2.36V625.4h-2.36zM490.88 582.5h2.36V633.8h-2.36zM493.25 567.5h2.36V631.0h-2.36zM495.61 554.1h2.36V621.0h-2.36zM497.98 547.2h2.36V620.5h-2.36zM500.34 546.3h2.36V623.1h-2.36zM502.71 560.0h2.36V627.4h-2.36zM505.07 548.7h2.36V624.8h-2.36zM507.43 548.7h2.36V619.7h-2.36zM509.80 556.5h2.36V627.3h-2.36zM512.16 565.4h2.36V631.3h-2.36zM514.53 554.8h2.36V627.3h-2.36zM516.89 558.4h2.36V625.5h-2.36zM519.26 566.4h2.36V626.3h-2.36zM521.62 544.8h2.36V620.5h-2.36zM523.98 555.0h2.36V626.3h-2.36zM526.35 561.3h2.36V622.1h-2.36zM528.71 562.7h2.36V628.6h-2.36zM531.08 559.5h2.36V626.9h-2.36zM533.44 559.0h2.36V628.7h-2.36zM535.80 544.9h2.36V618.3h-2.36zM538.17 559.3h2.36V625.9h-2.36zM540.53 553.8h2.36V624.4h-2.36zM542.90 541.0h2.36V621.5h-2.36zM545.26 555.2h2.36V621.6h-2.36zM547.63 564.2h2.36V627.1h-2.36zM549.99 546.3h2.36V620.3h-2.36zM552.35 560.7h2.36V630.7h-2.36zM554.72 551.1h2.36V627.2h-2.36zM557.08 550.9h2.36V629.3h-2.36zM559.45 561.8h2.36V629.6h-2.36zM561.81 566.9h2.36V635.0h-2.36zM564.18 560.1h2.36V629.6h-2.36zM566.54 574.5h2.36V635.9h-2.36zM568.90 549.0h2.36V622.8h-2.36zM571.27 546.4h2.36V624.4h-2.36zM573.63 550.1h2.36V625.4h-2.36zM576.00 552.8h2.36V620.9h-2.36zM578.36 569.2h2.36V624.9h-2.36zM580.73 563.6h2.36V619.7h-2.36zM583.09 562.1h2.36V621.6h-2.36zM585.45 561.5h2.36V629.3h-2.36zM587.82 554.6h2.36V633.6h-2.36zM590.18 546.2h2.36V621.2h-2.36zM592.55 556.5h2.36V624.9h-2.36zM594.91 558.1h2.36V623.7h-2.36zM597.27 566.2h2.36V626.8h-2.36zM599.64 554.1h2.36V625.8h-2.36zM602.00 557.3h2.36V625.0h-2.36zM604.37 550.1h2.36V628.7h-2.36zM606.73 566.1h2.36V620.2h-2.36zM609.10 549.5h2.36V623.7h-2.36zM611.46 555.9h2.36V630.3h-2.36zM613.82 558.5h2.36V630.0h-2.36zM616.19 566.7h2.36V628.4h-2.36zM618.55 549.9h2.36V612.8h-2.36zM620.92 559.8h2.36V627.3h-2.36zM623.28 567.8h2.36V631.1h-2.36zM625.65 562.4h2.36V626.9h-2.36zM628.01 551.9h2.36V627.3h-2.36zM630.37 555.6h2.36V623.7h-2.36zM632.74 556.9h2.36V626.9h-2.36zM635.10 562.7h2.36V628.9h-2.36zM637.47 561.2h2.36V620.2h-2.36zM639.83 559.7h2.36V623.2h-2.36zM642.20 565.6h2.36V619.5h-2.36zM644.56 563.3h2.36V626.8h-2.36zM646.92 554.5h2.36V630.5h-2.36zM649.29 561.4h2.36V630.9h-2.36zM651.65 541.8h2.36V619.7h-2.36zM654.02 537.3h2.36V617.8h-2.36zM656.38 555.3h2.36V622.3h-2.36zM658.75 554.2h2.36V626.3h-2.36zM661.11 561.3h2.36V625.6h-2.36zM663.47 551.4h2.36V627.0h-2.36zM665.84 556.5h2.36V629.2h-2.36zM668.20 558.7h2.36V629.6h-2.36zM670.57 549.4h2.36V622.5h-2.36zM672.93 562.7h2.36V616.3h-2.36zM675.29 543.7h2.36V616.4h-2.36zM677.66 549.6h2.36V622.6h-2.36zM680.02 549.8h2.36V616.4h-2.36zM682.39 549.3h2.36V622.4h-2.36zM684.75 563.7h2.36V626.6h-2.36zM687.12 561.9h2.36V624.5h-2.36zM689.48 568.5h2.36V628.2h-2.36zM691.84 555.1h2.36V630.7h-2.36zM694.21 559.8h2.36V623.2h-2.36zM696.57 563.6h2.36V631.0h-2.36zM698.94 564.6h2.36V627.5h-2.36zM701.30 569.9h2.36V629.9h-2.36zM703.67 571.7h2.36V634.9h-2.36zM706.03 565.0h2.36V624.4h-2.36zM708.39 554.2h2.36V626.4h-2.36zM710.76 571.8h2.36V633.1h-2.36zM713.12 538.4h2.36V619.6h-2.36zM715.49 553.1h2.36V628.7h-2.36zM717.85 556.7h2.36V624.4h-2.36zM720.22 558.0h2.36V621.9h-2.36zM722.58 554.7h2.36V618.8h-2.36zM724.94 564.2h2.36V623.6h-2.36zM727.31 552.0h2.36V622.8h-2.36zM729.67 545.7h2.36V623.1h-2.36zM732.04 554.6h2.36V621.5h-2.36zM734.40 554.5h2.36V617.2h-2.36zM736.76 567.5h2.36V634.3h-2.36zM739.13 555.2h2.36V625.6h-2.36zM741.49 558.7h2.36V623.2h-2.36zM743.86 556.2h2.36V630.1h-2.36zM746.22 550.2h2.36V625.0h-2.36zM748.59 549.7h2.36V629.0h-2.36zM750.95 549.8h2.36V621.0h-2.36zM753.31 559.4h2.36V625.2h-2.36zM755.68 558.0h2.36V624.3h-2.36zM758.04 545.2h2.36V624.0h-2.36zM760.41 561.5h2.36V628.8h-2.36zM762.77 555.6h2.36V623.8h-2.36zM765.14 563.6h2.36V631.2h-2.36z" fill="#bddab1"/><path d="M86.60 569.2h0.9V632.2h-0.9zM88.96 551.4h0.9V622.1h-0.9zM91.33 556.0h0.9V620.9h-0.9zM93.69 564.6h0.9V625.5h-0.9zM96.06 556.9h0.9V624.6h-0.9zM98.42 560.0h0.9V628.2h-0.9zM100.79 560.0h0.9V623.6h-0.9zM103.15 554.3h0.9V626.1h-0.9zM105.51 563.4h0.9V628.5h-0.9zM107.88 559.2h0.9V630.8h-0.9zM110.24 558.3h0.9V627.8h-0.9zM112.61 562.4h0.9V631.0h-0.9zM114.97 562.2h0.9V624.1h-0.9zM117.34 550.2h0.9V616.4h-0.9zM119.70 542.7h0.9V619.3h-0.9zM122.06 567.5h0.9V626.1h-0.9zM124.43 544.6h0.9V619.4h-0.9zM126.79 548.6h0.9V621.0h-0.9zM129.16 562.3h0.9V633.3h-0.9zM131.52 554.8h0.9V626.3h-0.9zM133.88 550.8h0.9V622.6h-0.9zM136.25 540.8h0.9V621.3h-0.9zM138.61 552.4h0.9V621.5h-0.9zM140.98 554.2h0.9V627.0h-0.9zM143.34 560.8h0.9V629.1h-0.9zM145.71 559.1h0.9V626.7h-0.9zM148.07 558.0h0.9V621.6h-0.9zM150.43 546.6h0.9V617.9h-0.9zM152.80 564.4h0.9V621.9h-0.9zM155.16 564.2h0.9V627.3h-0.9zM157.53 554.4h0.9V624.8h-0.9zM159.89 556.6h0.9V627.9h-0.9zM162.26 559.6h0.9V628.1h-0.9zM164.62 542.2h0.9V620.1h-0.9zM166.98 546.6h0.9V627.0h-0.9zM169.35 554.3h0.9V619.0h-0.9zM171.71 556.2h0.9V622.4h-0.9zM174.08 556.5h0.9V629.4h-0.9zM176.44 551.8h0.9V621.3h-0.9zM178.81 549.4h0.9V625.5h-0.9zM181.17 562.4h0.9V626.8h-0.9zM183.53 560.5h0.9V626.0h-0.9zM185.90 559.5h0.9V625.1h-0.9zM188.26 556.4h0.9V622.8h-0.9zM190.63 557.0h0.9V626.2h-0.9zM192.99 561.9h0.9V627.4h-0.9zM195.35 563.9h0.9V631.8h-0.9zM197.72 561.4h0.9V629.7h-0.9zM200.08 568.7h0.9V628.3h-0.9zM202.45 556.0h0.9V631.3h-0.9zM204.81 553.9h0.9V622.4h-0.9zM207.18 565.1h0.9V631.8h-0.9zM209.54 557.9h0.9V625.4h-0.9zM211.90 559.6h0.9V623.4h-0.9zM214.27 547.2h0.9V622.7h-0.9zM216.63 558.3h0.9V627.3h-0.9zM219.00 549.7h0.9V620.7h-0.9zM221.36 556.2h0.9V613.7h-0.9zM223.73 565.2h0.9V626.5h-0.9zM226.09 550.7h0.9V623.3h-0.9zM228.45 559.9h0.9V631.2h-0.9zM230.82 546.8h0.9V620.0h-0.9zM233.18 552.7h0.9V623.0h-0.9zM235.55 557.6h0.9V624.0h-0.9zM237.91 565.3h0.9V622.8h-0.9zM240.28 566.7h0.9V622.9h-0.9zM242.64 553.1h0.9V615.7h-0.9zM245.00 548.4h0.9V616.3h-0.9zM247.37 562.2h0.9V628.4h-0.9zM249.73 561.2h0.9V618.6h-0.9zM252.10 568.9h0.9V629.8h-0.9zM254.46 563.2h0.9V623.2h-0.9zM256.82 542.2h0.9V621.1h-0.9zM259.19 541.1h0.9V616.3h-0.9zM261.55 547.7h0.9V625.6h-0.9zM263.92 558.2h0.9V625.7h-0.9zM266.28 562.0h0.9V624.6h-0.9zM268.65 552.3h0.9V621.8h-0.9zM271.01 557.7h0.9V625.7h-0.9zM273.37 562.4h0.9V620.9h-0.9zM275.74 546.1h0.9V618.6h-0.9zM278.10 553.9h0.9V624.3h-0.9zM280.47 553.5h0.9V622.2h-0.9zM282.83 534.2h0.9V615.5h-0.9zM285.20 556.3h0.9V627.6h-0.9zM287.56 555.2h0.9V624.1h-0.9zM289.92 546.9h0.9V617.8h-0.9zM292.29 564.2h0.9V623.0h-0.9zM294.65 545.6h0.9V616.2h-0.9zM297.02 543.2h0.9V613.7h-0.9zM299.38 568.8h0.9V626.0h-0.9zM301.75 547.1h0.9V620.3h-0.9zM304.11 564.1h0.9V627.9h-0.9zM306.47 557.2h0.9V622.1h-0.9zM308.84 565.7h0.9V631.0h-0.9zM311.20 565.3h0.9V627.5h-0.9zM313.57 551.1h0.9V625.1h-0.9zM315.93 557.8h0.9V625.3h-0.9zM318.30 551.3h0.9V623.6h-0.9zM320.66 543.2h0.9V615.5h-0.9zM323.02 560.1h0.9V624.0h-0.9zM325.39 565.4h0.9V626.9h-0.9zM327.75 548.3h0.9V619.5h-0.9zM330.12 551.0h0.9V624.9h-0.9zM332.48 541.9h0.9V627.6h-0.9zM334.84 565.0h0.9V629.1h-0.9zM337.21 557.5h0.9V628.0h-0.9zM339.57 546.2h0.9V619.6h-0.9zM341.94 559.7h0.9V625.6h-0.9zM344.30 544.8h0.9V620.2h-0.9zM346.67 553.4h0.9V622.5h-0.9zM349.03 551.9h0.9V615.9h-0.9zM351.39 553.7h0.9V622.5h-0.9zM353.76 556.9h0.9V630.7h-0.9zM356.12 554.5h0.9V627.8h-0.9zM358.49 558.6h0.9V624.4h-0.9zM360.85 546.0h0.9V618.5h-0.9zM363.22 562.7h0.9V629.1h-0.9zM365.58 542.3h0.9V627.3h-0.9zM367.94 558.0h0.9V626.3h-0.9zM370.31 548.0h0.9V617.0h-0.9zM372.67 558.5h0.9V627.6h-0.9zM375.04 546.7h0.9V625.8h-0.9zM377.40 545.1h0.9V616.1h-0.9zM379.77 562.8h0.9V622.7h-0.9zM382.13 546.1h0.9V608.1h-0.9zM384.49 553.8h0.9V621.6h-0.9zM386.86 552.3h0.9V625.5h-0.9zM389.22 549.9h0.9V621.1h-0.9zM391.59 544.9h0.9V614.6h-0.9zM393.95 559.1h0.9V618.7h-0.9zM396.31 551.9h0.9V616.9h-0.9zM398.68 559.2h0.9V627.5h-0.9zM401.04 563.4h0.9V629.2h-0.9zM403.41 557.8h0.9V627.1h-0.9zM405.77 564.2h0.9V629.6h-0.9zM408.14 558.0h0.9V628.7h-0.9zM410.50 551.3h0.9V621.9h-0.9zM412.86 550.4h0.9V624.5h-0.9zM415.23 546.3h0.9V624.8h-0.9zM417.59 556.3h0.9V620.6h-0.9zM419.96 560.3h0.9V625.9h-0.9zM422.32 553.0h0.9V624.8h-0.9zM424.69 547.8h0.9V623.0h-0.9zM427.05 567.5h0.9V627.7h-0.9zM429.41 564.1h0.9V627.5h-0.9zM431.78 568.1h0.9V635.0h-0.9zM434.14 545.4h0.9V622.4h-0.9zM436.51 544.7h0.9V621.7h-0.9zM438.87 553.2h0.9V625.3h-0.9zM441.24 555.4h0.9V624.6h-0.9zM443.60 565.6h0.9V630.4h-0.9zM445.96 563.0h0.9V625.7h-0.9zM448.33 562.0h0.9V630.2h-0.9zM450.69 555.0h0.9V628.4h-0.9zM453.06 560.2h0.9V625.6h-0.9zM455.42 552.3h0.9V627.3h-0.9zM457.79 562.3h0.9V630.1h-0.9zM460.15 550.8h0.9V619.2h-0.9zM462.51 556.3h0.9V624.8h-0.9zM464.88 558.3h0.9V628.0h-0.9zM467.24 556.4h0.9V622.4h-0.9zM469.61 555.2h0.9V628.2h-0.9zM471.97 546.7h0.9V616.9h-0.9zM474.33 552.8h0.9V619.3h-0.9zM476.70 558.9h0.9V623.0h-0.9zM479.06 551.5h0.9V625.0h-0.9zM481.43 565.0h0.9V626.1h-0.9zM483.79 557.9h0.9V625.6h-0.9zM486.16 568.7h0.9V630.9h-0.9zM488.52 550.7h0.9V625.4h-0.9zM490.88 582.5h0.9V633.8h-0.9zM493.25 567.5h0.9V631.0h-0.9zM495.61 554.1h0.9V621.0h-0.9zM497.98 547.2h0.9V620.5h-0.9zM500.34 546.3h0.9V623.1h-0.9zM502.71 560.0h0.9V627.4h-0.9zM505.07 548.7h0.9V624.8h-0.9zM507.43 548.7h0.9V619.7h-0.9zM509.80 556.5h0.9V627.3h-0.9zM512.16 565.4h0.9V631.3h-0.9zM514.53 554.8h0.9V627.3h-0.9zM516.89 558.4h0.9V625.5h-0.9zM519.26 566.4h0.9V626.3h-0.9zM521.62 544.8h0.9V620.5h-0.9zM523.98 555.0h0.9V626.3h-0.9zM526.35 561.3h0.9V622.1h-0.9zM528.71 562.7h0.9V628.6h-0.9zM531.08 559.5h0.9V626.9h-0.9zM533.44 559.0h0.9V628.7h-0.9zM535.80 544.9h0.9V618.3h-0.9zM538.17 559.3h0.9V625.9h-0.9zM540.53 553.8h0.9V624.4h-0.9zM542.90 541.0h0.9V621.5h-0.9zM545.26 555.2h0.9V621.6h-0.9zM547.63 564.2h0.9V627.1h-0.9zM549.99 546.3h0.9V620.3h-0.9zM552.35 560.7h0.9V630.7h-0.9zM554.72 551.1h0.9V627.2h-0.9zM557.08 550.9h0.9V629.3h-0.9zM559.45 561.8h0.9V629.6h-0.9zM561.81 566.9h0.9V635.0h-0.9zM564.18 560.1h0.9V629.6h-0.9zM566.54 574.5h0.9V635.9h-0.9zM568.90 549.0h0.9V622.8h-0.9zM571.27 546.4h0.9V624.4h-0.9zM573.63 550.1h0.9V625.4h-0.9zM576.00 552.8h0.9V620.9h-0.9zM578.36 569.2h0.9V624.9h-0.9zM580.73 563.6h0.9V619.7h-0.9zM583.09 562.1h0.9V621.6h-0.9zM585.45 561.5h0.9V629.3h-0.9zM587.82 554.6h0.9V633.6h-0.9zM590.18 546.2h0.9V621.2h-0.9zM592.55 556.5h0.9V624.9h-0.9zM594.91 558.1h0.9V623.7h-0.9zM597.27 566.2h0.9V626.8h-0.9zM599.64 554.1h0.9V625.8h-0.9zM602.00 557.3h0.9V625.0h-0.9zM604.37 550.1h0.9V628.7h-0.9zM606.73 566.1h0.9V620.2h-0.9zM609.10 549.5h0.9V623.7h-0.9zM611.46 555.9h0.9V630.3h-0.9zM613.82 558.5h0.9V630.0h-0.9zM616.19 566.7h0.9V628.4h-0.9zM618.55 549.9h0.9V612.8h-0.9zM620.92 559.8h0.9V627.3h-0.9zM623.28 567.8h0.9V631.1h-0.9zM625.65 562.4h0.9V626.9h-0.9zM628.01 551.9h0.9V627.3h-0.9zM630.37 555.6h0.9V623.7h-0.9zM632.74 556.9h0.9V626.9h-0.9zM635.10 562.7h0.9V628.9h-0.9zM637.47 561.2h0.9V620.2h-0.9zM639.83 559.7h0.9V623.2h-0.9zM642.20 565.6h0.9V619.5h-0.9zM644.56 563.3h0.9V626.8h-0.9zM646.92 554.5h0.9V630.5h-0.9zM649.29 561.4h0.9V630.9h-0.9zM651.65 541.8h0.9V619.7h-0.9zM654.02 537.3h0.9V617.8h-0.9zM656.38 555.3h0.9V622.3h-0.9zM658.75 554.2h0.9V626.3h-0.9zM661.11 561.3h0.9V625.6h-0.9zM663.47 551.4h0.9V627.0h-0.9zM665.84 556.5h0.9V629.2h-0.9zM668.20 558.7h0.9V629.6h-0.9zM670.57 549.4h0.9V622.5h-0.9zM672.93 562.7h0.9V616.3h-0.9zM675.29 543.7h0.9V616.4h-0.9zM677.66 549.6h0.9V622.6h-0.9zM680.02 549.8h0.9V616.4h-0.9zM682.39 549.3h0.9V622.4h-0.9zM684.75 563.7h0.9V626.6h-0.9zM687.12 561.9h0.9V624.5h-0.9zM689.48 568.5h0.9V628.2h-0.9zM691.84 555.1h0.9V630.7h-0.9zM694.21 559.8h0.9V623.2h-0.9zM696.57 563.6h0.9V631.0h-0.9zM698.94 564.6h0.9V627.5h-0.9zM701.30 569.9h0.9V629.9h-0.9zM703.67 571.7h0.9V634.9h-0.9zM706.03 565.0h0.9V624.4h-0.9zM708.39 554.2h0.9V626.4h-0.9zM710.76 571.8h0.9V633.1h-0.9zM713.12 538.4h0.9V619.6h-0.9zM715.49 553.1h0.9V628.7h-0.9zM717.85 556.7h0.9V624.4h-0.9zM720.22 558.0h0.9V621.9h-0.9zM722.58 554.7h0.9V618.8h-0.9zM724.94 564.2h0.9V623.6h-0.9zM727.31 552.0h0.9V622.8h-0.9zM729.67 545.7h0.9V623.1h-0.9zM732.04 554.6h0.9V621.5h-0.9zM734.40 554.5h0.9V617.2h-0.9zM736.76 567.5h0.9V634.3h-0.9zM739.13 555.2h0.9V625.6h-0.9zM741.49 558.7h0.9V623.2h-0.9zM743.86 556.2h0.9V630.1h-0.9zM746.22 550.2h0.9V625.0h-0.9zM748.59 549.7h0.9V629.0h-0.9zM750.95 549.8h0.9V621.0h-0.9zM753.31 559.4h0.9V625.2h-0.9zM755.68 558.0h0.9V624.3h-0.9zM758.04 545.2h0.9V624.0h-0.9zM760.41 561.5h0.9V628.8h-0.9zM762.77 555.6h0.9V623.8h-0.9zM765.14 563.6h0.9V631.2h-0.9zM767.50 650.3h1.1V725.0h-1.1z" fill="#7dbb6a"/><rect x="245.00" y="556.5" width="1.3" height="68.5" fill="#4f9a3a" fill-opacity="0.6"/><rect x="245.00" y="625.0" width="1.3" height="68.5" fill="#8fb8dc" fill-opacity="0.6"/><rect x="245.00" y="693.5" width="1.3" height="68.9" fill="#2a6db0" fill-opacity="0.6"/><rect x="427.05" y="556.5" width="1.3" height="68.5" fill="#4f9a3a" fill-opacity="0.6"/><rect x="427.05" y="625.0" width="1.3" height="68.5" fill="#8fb8dc" fill-opacity="0.6"/><rect x="427.05" y="693.5" width="1.3" height="68.9" fill="#2a6db0" fill-opacity="0.6"/><rect x="609.10" y="556.5" width="1.3" height="68.5" fill="#4f9a3a" fill-opacity="0.6"/><rect x="609.10" y="625.0" width="1.3" height="68.5" fill="#8fb8dc" fill-opacity="0.6"/><rect x="609.10" y="693.5" width="1.3" height="68.9" fill="#2a6db0" fill-opacity="0.6"/><rect x="86.6" y="583.90" width="680.9" height="1" fill="#000" fill-opacity="0.07"/><rect x="86.6" y="672.90" width="680.9" height="1" fill="#000" fill-opacity="0.07"/><rect x="79.9" y="761.90" width="690.1" height="1" fill="#dfe5ec"/><rect x="142.40" y="762.9" width="1.2" height="5" fill="#666"/><rect x="227.60" y="762.9" width="1.2" height="5" fill="#666"/><rect x="312.80" y="762.9" width="1.2" height="5" fill="#666"/><rect x="398.00" y="762.9" width="1.2" height="5" fill="#666"/><rect x="483.20" y="762.9" width="1.2" height="5" fill="#666"/><rect x="568.40" y="762.9" width="1.2" height="5" fill="#666"/><rect x="653.60" y="762.9" width="1.2" height="5" fill="#666"/><rect x="738.80" y="762.9" width="1.2" height="5" fill="#666"/></svg><svg width="1600" height="1365"><rect x="873.7" y="494.90" width="690.0999999999999" height="1" fill="#dfe5ec"/><rect x="873.7" y="583.90" width="690.0999999999999" height="1" fill="#dfe5ec"/><rect x="873.7" y="672.90" width="690.0999999999999" height="1" fill="#dfe5ec"/><rect x="873.7" y="761.90" width="690.0999999999999" height="1" fill="#dfe5ec"/><path d="M881.20 698.4h2.36V762.4h-2.36zM883.56 695.5h2.36V762.4h-2.36zM885.92 692.0h2.36V762.4h-2.36zM888.28 694.7h2.36V762.4h-2.36zM890.64 692.0h2.36V762.4h-2.36zM893.01 692.7h2.36V762.4h-2.36zM895.37 696.5h2.36V762.4h-2.36zM897.73 689.4h2.36V762.4h-2.36zM900.09 696.1h2.36V762.4h-2.36zM902.45 694.3h2.36V762.4h-2.36zM904.81 694.7h2.36V762.4h-2.36zM907.17 696.8h2.36V762.4h-2.36zM909.53 691.8h2.36V762.4h-2.36zM911.89 692.2h2.36V762.4h-2.36zM914.26 687.2h2.36V762.4h-2.36zM916.62 684.9h2.36V762.4h-2.36zM918.98 684.7h2.36V762.4h-2.36zM921.34 684.9h2.36V762.4h-2.36zM923.70 687.7h2.36V762.4h-2.36zM926.06 693.5h2.36V762.4h-2.36zM928.42 689.9h2.36V762.4h-2.36zM930.78 689.4h2.36V762.4h-2.36zM933.14 689.4h2.36V762.4h-2.36zM935.51 688.4h2.36V762.4h-2.36zM937.87 688.9h2.36V762.4h-2.36zM940.23 690.2h2.36V762.4h-2.36zM942.59 693.0h2.36V762.4h-2.36zM944.95 695.9h2.36V762.4h-2.36zM947.31 683.8h2.36V762.4h-2.36zM949.67 688.0h2.36V762.4h-2.36zM952.03 688.8h2.36V762.4h-2.36zM954.39 685.5h2.36V762.4h-2.36zM956.76 687.5h2.36V762.4h-2.36zM959.12 691.9h2.36V762.4h-2.36zM961.48 693.3h2.36V762.4h-2.36zM963.84 695.6h2.36V762.4h-2.36zM966.20 691.2h2.36V762.4h-2.36zM968.56 695.9h2.36V762.4h-2.36zM970.92 689.4h2.36V762.4h-2.36zM973.28 683.9h2.36V762.4h-2.36zM975.64 693.8h2.36V762.4h-2.36zM978.01 692.4h2.36V762.4h-2.36zM980.37 691.8h2.36V762.4h-2.36zM982.73 696.7h2.36V762.4h-2.36zM985.09 695.3h2.36V762.4h-2.36zM987.45 690.1h2.36V762.4h-2.36zM989.81 693.0h2.36V762.4h-2.36zM992.17 693.5h2.36V762.4h-2.36zM994.53 688.3h2.36V762.4h-2.36zM996.89 687.5h2.36V762.4h-2.36zM999.26 694.9h2.36V762.4h-2.36zM1001.62 688.1h2.36V762.4h-2.36zM1003.98 691.7h2.36V762.4h-2.36zM1006.34 693.3h2.36V762.4h-2.36zM1008.70 695.6h2.36V762.4h-2.36zM1011.06 690.3h2.36V762.4h-2.36zM1013.42 695.5h2.36V762.4h-2.36zM1015.78 692.9h2.36V762.4h-2.36zM1018.14 689.1h2.36V762.4h-2.36zM1020.51 693.1h2.36V762.4h-2.36zM1022.87 688.5h2.36V762.4h-2.36zM1025.23 685.3h2.36V762.4h-2.36zM1027.59 698.5h2.36V762.4h-2.36zM1029.95 694.0h2.36V762.4h-2.36zM1032.31 691.6h2.36V762.4h-2.36zM1034.67 688.7h2.36V762.4h-2.36zM1037.03 694.9h2.36V762.4h-2.36zM1039.39 689.1h2.36V762.4h-2.36zM1041.76 690.2h2.36V762.4h-2.36zM1044.12 692.1h2.36V762.4h-2.36zM1046.48 688.3h2.36V762.4h-2.36zM1048.84 689.1h2.36V762.4h-2.36zM1051.20 692.4h2.36V762.4h-2.36zM1053.56 691.4h2.36V762.4h-2.36zM1055.92 694.4h2.36V762.4h-2.36zM1058.28 687.3h2.36V762.4h-2.36zM1060.64 694.9h2.36V762.4h-2.36zM1063.01 691.4h2.36V762.4h-2.36zM1065.37 696.1h2.36V762.4h-2.36zM1067.73 693.7h2.36V762.4h-2.36zM1070.09 692.6h2.36V762.4h-2.36zM1072.45 694.6h2.36V762.4h-2.36zM1074.81 697.2h2.36V762.4h-2.36zM1077.17 693.9h2.36V762.4h-2.36zM1079.53 692.0h2.36V762.4h-2.36zM1081.89 688.1h2.36V762.4h-2.36zM1084.26 693.2h2.36V762.4h-2.36zM1086.62 691.3h2.36V762.4h-2.36zM1088.98 695.4h2.36V762.4h-2.36zM1091.34 698.4h2.36V762.4h-2.36zM1093.70 694.5h2.36V762.4h-2.36zM1096.06 695.7h2.36V762.4h-2.36zM1098.42 693.7h2.36V762.4h-2.36zM1100.78 696.0h2.36V762.4h-2.36zM1103.14 688.9h2.36V762.4h-2.36zM1105.51 695.5h2.36V762.4h-2.36zM1107.87 689.6h2.36V762.4h-2.36zM1110.23 692.3h2.36V762.4h-2.36zM1112.59 683.8h2.36V762.4h-2.36zM1114.95 687.2h2.36V762.4h-2.36zM1117.31 692.9h2.36V762.4h-2.36zM1119.67 694.3h2.36V762.4h-2.36zM1122.03 697.2h2.36V762.4h-2.36zM1124.39 690.2h2.36V762.4h-2.36zM1126.76 689.7h2.36V762.4h-2.36zM1129.12 692.2h2.36V762.4h-2.36zM1131.48 693.0h2.36V762.4h-2.36zM1133.84 687.7h2.36V762.4h-2.36zM1136.20 699.7h2.36V762.4h-2.36zM1138.56 692.1h2.36V762.4h-2.36zM1140.92 691.7h2.36V762.4h-2.36zM1143.28 687.8h2.36V762.4h-2.36zM1145.64 687.8h2.36V762.4h-2.36zM1148.01 694.0h2.36V762.4h-2.36zM1150.37 695.5h2.36V762.4h-2.36zM1152.73 689.0h2.36V762.4h-2.36zM1155.09 689.2h2.36V762.4h-2.36zM1157.45 689.9h2.36V762.4h-2.36zM1159.81 693.6h2.36V762.4h-2.36zM1162.17 694.5h2.36V762.4h-2.36zM1164.53 694.4h2.36V762.4h-2.36zM1166.89 693.3h2.36V762.4h-2.36zM1169.26 695.5h2.36V762.4h-2.36zM1171.62 688.5h2.36V762.4h-2.36zM1173.98 692.9h2.36V762.4h-2.36zM1176.34 695.1h2.36V762.4h-2.36zM1178.70 689.7h2.36V762.4h-2.36zM1181.06 689.9h2.36V762.4h-2.36zM1183.42 690.5h2.36V762.4h-2.36zM1185.78 691.7h2.36V762.4h-2.36zM1188.14 699.6h2.36V762.4h-2.36zM1190.51 691.3h2.36V762.4h-2.36zM1192.87 691.6h2.36V762.4h-2.36zM1195.23 691.4h2.36V762.4h-2.36zM1197.59 686.5h2.36V762.4h-2.36zM1199.95 696.4h2.36V762.4h-2.36zM1202.31 697.6h2.36V762.4h-2.36zM1204.67 697.4h2.36V762.4h-2.36zM1207.03 701.3h2.36V762.4h-2.36zM1209.39 697.9h2.36V762.4h-2.36zM1211.76 692.1h2.36V762.4h-2.36zM1214.12 693.2h2.36V762.4h-2.36zM1216.48 693.6h2.36V762.4h-2.36zM1218.84 691.9h2.36V762.4h-2.36zM1221.20 691.6h2.36V762.4h-2.36zM1223.56 692.8h2.36V762.4h-2.36zM1225.92 691.3h2.36V762.4h-2.36zM1228.28 694.7h2.36V762.4h-2.36zM1230.64 692.3h2.36V762.4h-2.36zM1233.01 697.5h2.36V762.4h-2.36zM1235.37 685.7h2.36V762.4h-2.36zM1237.73 694.7h2.36V762.4h-2.36zM1240.09 698.1h2.36V762.4h-2.36zM1242.45 694.0h2.36V762.4h-2.36zM1244.81 693.0h2.36V762.4h-2.36zM1247.17 687.6h2.36V762.4h-2.36zM1249.53 696.1h2.36V762.4h-2.36zM1251.89 693.9h2.36V762.4h-2.36zM1254.26 686.1h2.36V762.4h-2.36zM1256.62 688.9h2.36V762.4h-2.36zM1258.98 699.1h2.36V762.4h-2.36zM1261.34 695.2h2.36V762.4h-2.36zM1263.70 690.5h2.36V762.4h-2.36zM1266.06 689.4h2.36V762.4h-2.36zM1268.42 690.3h2.36V762.4h-2.36zM1270.78 694.9h2.36V762.4h-2.36zM1273.14 695.5h2.36V762.4h-2.36zM1275.51 692.9h2.36V762.4h-2.36zM1277.87 689.3h2.36V762.4h-2.36zM1280.23 691.3h2.36V762.4h-2.36zM1282.59 692.3h2.36V762.4h-2.36zM1284.95 687.7h2.36V762.4h-2.36zM1287.31 694.5h2.36V762.4h-2.36zM1289.67 691.4h2.36V762.4h-2.36zM1292.03 692.2h2.36V762.4h-2.36zM1294.39 694.2h2.36V762.4h-2.36zM1296.76 689.8h2.36V762.4h-2.36zM1299.12 692.7h2.36V762.4h-2.36zM1301.48 692.8h2.36V762.4h-2.36zM1303.84 692.8h2.36V762.4h-2.36zM1306.20 697.7h2.36V762.4h-2.36zM1308.56 691.8h2.36V762.4h-2.36zM1310.92 690.4h2.36V762.4h-2.36zM1313.28 691.4h2.36V762.4h-2.36zM1315.64 696.9h2.36V762.4h-2.36zM1318.01 687.2h2.36V762.4h-2.36zM1320.37 689.7h2.36V762.4h-2.36zM1322.73 693.9h2.36V762.4h-2.36zM1325.09 695.0h2.36V762.4h-2.36zM1327.45 690.6h2.36V762.4h-2.36zM1329.81 694.8h2.36V762.4h-2.36zM1332.17 687.4h2.36V762.4h-2.36zM1334.53 687.1h2.36V762.4h-2.36zM1336.89 683.8h2.36V762.4h-2.36zM1339.26 696.0h2.36V762.4h-2.36zM1341.62 692.9h2.36V762.4h-2.36zM1343.98 692.6h2.36V762.4h-2.36zM1346.34 687.5h2.36V762.4h-2.36zM1348.70 695.6h2.36V762.4h-2.36zM1351.06 695.1h2.36V762.4h-2.36zM1353.42 692.7h2.36V762.4h-2.36zM1355.78 684.6h2.36V762.4h-2.36zM1358.14 690.3h2.36V762.4h-2.36zM1360.51 691.4h2.36V762.4h-2.36zM1362.87 692.1h2.36V762.4h-2.36zM1365.23 691.4h2.36V762.4h-2.36zM1367.59 692.0h2.36V762.4h-2.36zM1369.95 693.7h2.36V762.4h-2.36zM1372.31 693.1h2.36V762.4h-2.36zM1374.67 697.4h2.36V762.4h-2.36zM1377.03 692.8h2.36V762.4h-2.36zM1379.39 690.6h2.36V762.4h-2.36zM1381.76 694.2h2.36V762.4h-2.36zM1384.12 695.6h2.36V762.4h-2.36zM1386.48 691.9h2.36V762.4h-2.36zM1388.84 696.0h2.36V762.4h-2.36zM1391.20 695.6h2.36V762.4h-2.36zM1393.56 694.3h2.36V762.4h-2.36zM1395.92 692.6h2.36V762.4h-2.36zM1398.28 691.0h2.36V762.4h-2.36zM1400.64 692.6h2.36V762.4h-2.36zM1403.01 690.1h2.36V762.4h-2.36zM1405.37 692.5h2.36V762.4h-2.36zM1407.73 692.6h2.36V762.4h-2.36zM1410.09 690.9h2.36V762.4h-2.36zM1412.45 692.9h2.36V762.4h-2.36zM1414.81 686.8h2.36V762.4h-2.36zM1417.17 691.6h2.36V762.4h-2.36zM1419.53 693.2h2.36V762.4h-2.36zM1421.89 689.4h2.36V762.4h-2.36zM1424.26 694.7h2.36V762.4h-2.36zM1426.62 692.8h2.36V762.4h-2.36zM1428.98 684.6h2.36V762.4h-2.36zM1431.34 694.4h2.36V762.4h-2.36zM1433.70 690.6h2.36V762.4h-2.36zM1436.06 690.9h2.36V762.4h-2.36zM1438.42 688.8h2.36V762.4h-2.36zM1440.78 696.6h2.36V762.4h-2.36zM1443.14 694.1h2.36V762.4h-2.36zM1445.51 695.5h2.36V762.4h-2.36zM1447.87 693.2h2.36V762.4h-2.36zM1450.23 689.1h2.36V762.4h-2.36zM1452.59 689.2h2.36V762.4h-2.36zM1454.95 689.7h2.36V762.4h-2.36zM1457.31 690.5h2.36V762.4h-2.36zM1459.67 694.4h2.36V762.4h-2.36zM1462.03 694.3h2.36V762.4h-2.36zM1464.39 694.0h2.36V762.4h-2.36zM1466.76 692.3h2.36V762.4h-2.36zM1469.12 690.1h2.36V762.4h-2.36zM1471.48 688.7h2.36V762.4h-2.36zM1473.84 692.7h2.36V762.4h-2.36zM1476.20 687.5h2.36V762.4h-2.36zM1478.56 693.9h2.36V762.4h-2.36zM1480.92 692.0h2.36V762.4h-2.36zM1483.28 691.8h2.36V762.4h-2.36zM1485.64 690.4h2.36V762.4h-2.36zM1488.01 688.9h2.36V762.4h-2.36zM1490.37 688.4h2.36V762.4h-2.36zM1492.73 693.1h2.36V762.4h-2.36zM1495.09 689.9h2.36V762.4h-2.36zM1497.45 684.2h2.36V762.4h-2.36zM1499.81 689.1h2.36V762.4h-2.36zM1502.17 689.9h2.36V762.4h-2.36zM1504.53 688.2h2.36V762.4h-2.36zM1506.89 691.2h2.36V762.4h-2.36zM1509.26 694.5h2.36V762.4h-2.36zM1511.62 686.8h2.36V762.4h-2.36zM1513.98 695.6h2.36V762.4h-2.36zM1516.34 693.3h2.36V762.4h-2.36zM1518.70 689.8h2.36V762.4h-2.36zM1521.06 686.1h2.36V762.4h-2.36zM1523.42 686.4h2.36V762.4h-2.36zM1525.78 694.3h2.36V762.4h-2.36zM1528.14 688.5h2.36V762.4h-2.36zM1530.51 689.9h2.36V762.4h-2.36zM1532.87 690.2h2.36V762.4h-2.36zM1535.23 695.9h2.36V762.4h-2.36zM1537.59 696.7h2.36V762.4h-2.36zM1539.95 695.1h2.36V762.4h-2.36zM1542.31 690.0h2.36V762.4h-2.36zM1544.67 704.8h2.36V762.4h-2.36zM1547.03 693.9h2.36V762.4h-2.36zM1549.39 697.0h2.36V762.4h-2.36zM1551.76 690.1h2.36V762.4h-2.36zM1554.12 700.7h2.36V762.4h-2.36zM1556.48 696.7h2.36V762.4h-2.36zM1558.84 694.4h2.36V762.4h-2.36z" fill="#a7c6e0"/><path d="M881.20 698.4h0.9V762.4h-0.9zM883.56 695.5h0.9V762.4h-0.9zM885.92 692.0h0.9V762.4h-0.9zM888.28 694.7h0.9V762.4h-0.9zM890.64 692.0h0.9V762.4h-0.9zM893.01 692.7h0.9V762.4h-0.9zM895.37 696.5h0.9V762.4h-0.9zM897.73 689.4h0.9V762.4h-0.9zM900.09 696.1h0.9V762.4h-0.9zM902.45 694.3h0.9V762.4h-0.9zM904.81 694.7h0.9V762.4h-0.9zM907.17 696.8h0.9V762.4h-0.9zM909.53 691.8h0.9V762.4h-0.9zM911.89 692.2h0.9V762.4h-0.9zM914.26 687.2h0.9V762.4h-0.9zM916.62 684.9h0.9V762.4h-0.9zM918.98 684.7h0.9V762.4h-0.9zM921.34 684.9h0.9V762.4h-0.9zM923.70 687.7h0.9V762.4h-0.9zM926.06 693.5h0.9V762.4h-0.9zM928.42 689.9h0.9V762.4h-0.9zM930.78 689.4h0.9V762.4h-0.9zM933.14 689.4h0.9V762.4h-0.9zM935.51 688.4h0.9V762.4h-0.9zM937.87 688.9h0.9V762.4h-0.9zM940.23 690.2h0.9V762.4h-0.9zM942.59 693.0h0.9V762.4h-0.9zM944.95 695.9h0.9V762.4h-0.9zM947.31 683.8h0.9V762.4h-0.9zM949.67 688.0h0.9V762.4h-0.9zM952.03 688.8h0.9V762.4h-0.9zM954.39 685.5h0.9V762.4h-0.9zM956.76 687.5h0.9V762.4h-0.9zM959.12 691.9h0.9V762.4h-0.9zM961.48 693.3h0.9V762.4h-0.9zM963.84 695.6h0.9V762.4h-0.9zM966.20 691.2h0.9V762.4h-0.9zM968.56 695.9h0.9V762.4h-0.9zM970.92 689.4h0.9V762.4h-0.9zM973.28 683.9h0.9V762.4h-0.9zM975.64 693.8h0.9V762.4h-0.9zM978.01 692.4h0.9V762.4h-0.9zM980.37 691.8h0.9V762.4h-0.9zM982.73 696.7h0.9V762.4h-0.9zM985.09 695.3h0.9V762.4h-0.9zM987.45 690.1h0.9V762.4h-0.9zM989.81 693.0h0.9V762.4h-0.9zM992.17 693.5h0.9V762.4h-0.9zM994.53 688.3h0.9V762.4h-0.9zM996.89 687.5h0.9V762.4h-0.9zM999.26 694.9h0.9V762.4h-0.9zM1001.62 688.1h0.9V762.4h-0.9zM1003.98 691.7h0.9V762.4h-0.9zM1006.34 693.3h0.9V762.4h-0.9zM1008.70 695.6h0.9V762.4h-0.9zM1011.06 690.3h0.9V762.4h-0.9zM1013.42 695.5h0.9V762.4h-0.9zM1015.78 692.9h0.9V762.4h-0.9zM1018.14 689.1h0.9V762.4h-0.9zM1020.51 693.1h0.9V762.4h-0.9zM1022.87 688.5h0.9V762.4h-0.9zM1025.23 685.3h0.9V762.4h-0.9zM1027.59 698.5h0.9V762.4h-0.9zM1029.95 694.0h0.9V762.4h-0.9zM1032.31 691.6h0.9V762.4h-0.9zM1034.67 688.7h0.9V762.4h-0.9zM1037.03 694.9h0.9V762.4h-0.9zM1039.39 689.1h0.9V762.4h-0.9zM1041.76 690.2h0.9V762.4h-0.9zM1044.12 692.1h0.9V762.4h-0.9zM1046.48 688.3h0.9V762.4h-0.9zM1048.84 689.1h0.9V762.4h-0.9zM1051.20 692.4h0.9V762.4h-0.9zM1053.56 691.4h0.9V762.4h-0.9zM1055.92 694.4h0.9V762.4h-0.9zM1058.28 687.3h0.9V762.4h-0.9zM1060.64 694.9h0.9V762.4h-0.9zM1063.01 691.4h0.9V762.4h-0.9zM1065.37 696.1h0.9V762.4h-0.9zM1067.73 693.7h0.9V762.4h-0.9zM1070.09 692.6h0.9V762.4h-0.9zM1072.45 694.6h0.9V762.4h-0.9zM1074.81 697.2h0.9V762.4h-0.9zM1077.17 693.9h0.9V762.4h-0.9zM1079.53 692.0h0.9V762.4h-0.9zM1081.89 688.1h0.9V762.4h-0.9zM1084.26 693.2h0.9V762.4h-0.9zM1086.62 691.3h0.9V762.4h-0.9zM1088.98 695.4h0.9V762.4h-0.9zM1091.34 698.4h0.9V762.4h-0.9zM1093.70 694.5h0.9V762.4h-0.9zM1096.06 695.7h0.9V762.4h-0.9zM1098.42 693.7h0.9V762.4h-0.9zM1100.78 696.0h0.9V762.4h-0.9zM1103.14 688.9h0.9V762.4h-0.9zM1105.51 695.5h0.9V762.4h-0.9zM1107.87 689.6h0.9V762.4h-0.9zM1110.23 692.3h0.9V762.4h-0.9zM1112.59 683.8h0.9V762.4h-0.9zM1114.95 687.2h0.9V762.4h-0.9zM1117.31 692.9h0.9V762.4h-0.9zM1119.67 694.3h0.9V762.4h-0.9zM1122.03 697.2h0.9V762.4h-0.9zM1124.39 690.2h0.9V762.4h-0.9zM1126.76 689.7h0.9V762.4h-0.9zM1129.12 692.2h0.9V762.4h-0.9zM1131.48 693.0h0.9V762.4h-0.9zM1133.84 687.7h0.9V762.4h-0.9zM1136.20 699.7h0.9V762.4h-0.9zM1138.56 692.1h0.9V762.4h-0.9zM1140.92 691.7h0.9V762.4h-0.9zM1143.28 687.8h0.9V762.4h-0.9zM1145.64 687.8h0.9V762.4h-0.9zM1148.01 694.0h0.9V762.4h-0.9zM1150.37 695.5h0.9V762.4h-0.9zM1152.73 689.0h0.9V762.4h-0.9zM1155.09 689.2h0.9V762.4h-0.9zM1157.45 689.9h0.9V762.4h-0.9zM1159.81 693.6h0.9V762.4h-0.9zM1162.17 694.5h0.9V762.4h-0.9zM1164.53 694.4h0.9V762.4h-0.9zM1166.89 693.3h0.9V762.4h-0.9zM1169.26 695.5h0.9V762.4h-0.9zM1171.62 688.5h0.9V762.4h-0.9zM1173.98 692.9h0.9V762.4h-0.9zM1176.34 695.1h0.9V762.4h-0.9zM1178.70 689.7h0.9V762.4h-0.9zM1181.06 689.9h0.9V762.4h-0.9zM1183.42 690.5h0.9V762.4h-0.9zM1185.78 691.7h0.9V762.4h-0.9zM1188.14 699.6h0.9V762.4h-0.9zM1190.51 691.3h0.9V762.4h-0.9zM1192.87 691.6h0.9V762.4h-0.9zM1195.23 691.4h0.9V762.4h-0.9zM1197.59 686.5h0.9V762.4h-0.9zM1199.95 696.4h0.9V762.4h-0.9zM1202.31 697.6h0.9V762.4h-0.9zM1204.67 697.4h0.9V762.4h-0.9zM1207.03 701.3h0.9V762.4h-0.9zM1209.39 697.9h0.9V762.4h-0.9zM1211.76 692.1h0.9V762.4h-0.9zM1214.12 693.2h0.9V762.4h-0.9zM1216.48 693.6h0.9V762.4h-0.9zM1218.84 691.9h0.9V762.4h-0.9zM1221.20 691.6h0.9V762.4h-0.9zM1223.56 692.8h0.9V762.4h-0.9zM1225.92 691.3h0.9V762.4h-0.9zM1228.28 694.7h0.9V762.4h-0.9zM1230.64 692.3h0.9V762.4h-0.9zM1233.01 697.5h0.9V762.4h-0.9zM1235.37 685.7h0.9V762.4h-0.9zM1237.73 694.7h0.9V762.4h-0.9zM1240.09 698.1h0.9V762.4h-0.9zM1242.45 694.0h0.9V762.4h-0.9zM1244.81 693.0h0.9V762.4h-0.9zM1247.17 687.6h0.9V762.4h-0.9zM1249.53 696.1h0.9V762.4h-0.9zM1251.89 693.9h0.9V762.4h-0.9zM1254.26 686.1h0.9V762.4h-0.9zM1256.62 688.9h0.9V762.4h-0.9zM1258.98 699.1h0.9V762.4h-0.9zM1261.34 695.2h0.9V762.4h-0.9zM1263.70 690.5h0.9V762.4h-0.9zM1266.06 689.4h0.9V762.4h-0.9zM1268.42 690.3h0.9V762.4h-0.9zM1270.78 694.9h0.9V762.4h-0.9zM1273.14 695.5h0.9V762.4h-0.9zM1275.51 692.9h0.9V762.4h-0.9zM1277.87 689.3h0.9V762.4h-0.9zM1280.23 691.3h0.9V762.4h-0.9zM1282.59 692.3h0.9V762.4h-0.9zM1284.95 687.7h0.9V762.4h-0.9zM1287.31 694.5h0.9V762.4h-0.9zM1289.67 691.4h0.9V762.4h-0.9zM1292.03 692.2h0.9V762.4h-0.9zM1294.39 694.2h0.9V762.4h-0.9zM1296.76 689.8h0.9V762.4h-0.9zM1299.12 692.7h0.9V762.4h-0.9zM1301.48 692.8h0.9V762.4h-0.9zM1303.84 692.8h0.9V762.4h-0.9zM1306.20 697.7h0.9V762.4h-0.9zM1308.56 691.8h0.9V762.4h-0.9zM1310.92 690.4h0.9V762.4h-0.9zM1313.28 691.4h0.9V762.4h-0.9zM1315.64 696.9h0.9V762.4h-0.9zM1318.01 687.2h0.9V762.4h-0.9zM1320.37 689.7h0.9V762.4h-0.9zM1322.73 693.9h0.9V762.4h-0.9zM1325.09 695.0h0.9V762.4h-0.9zM1327.45 690.6h0.9V762.4h-0.9zM1329.81 694.8h0.9V762.4h-0.9zM1332.17 687.4h0.9V762.4h-0.9zM1334.53 687.1h0.9V762.4h-0.9zM1336.89 683.8h0.9V762.4h-0.9zM1339.26 696.0h0.9V762.4h-0.9zM1341.62 692.9h0.9V762.4h-0.9zM1343.98 692.6h0.9V762.4h-0.9zM1346.34 687.5h0.9V762.4h-0.9zM1348.70 695.6h0.9V762.4h-0.9zM1351.06 695.1h0.9V762.4h-0.9zM1353.42 692.7h0.9V762.4h-0.9zM1355.78 684.6h0.9V762.4h-0.9zM1358.14 690.3h0.9V762.4h-0.9zM1360.51 691.4h0.9V762.4h-0.9zM1362.87 692.1h0.9V762.4h-0.9zM1365.23 691.4h0.9V762.4h-0.9zM1367.59 692.0h0.9V762.4h-0.9zM1369.95 693.7h0.9V762.4h-0.9zM1372.31 693.1h0.9V762.4h-0.9zM1374.67 697.4h0.9V762.4h-0.9zM1377.03 692.8h0.9V762.4h-0.9zM1379.39 690.6h0.9V762.4h-0.9zM1381.76 694.2h0.9V762.4h-0.9zM1384.12 695.6h0.9V762.4h-0.9zM1386.48 691.9h0.9V762.4h-0.9zM1388.84 696.0h0.9V762.4h-0.9zM1391.20 695.6h0.9V762.4h-0.9zM1393.56 694.3h0.9V762.4h-0.9zM1395.92 692.6h0.9V762.4h-0.9zM1398.28 691.0h0.9V762.4h-0.9zM1400.64 692.6h0.9V762.4h-0.9zM1403.01 690.1h0.9V762.4h-0.9zM1405.37 692.5h0.9V762.4h-0.9zM1407.73 692.6h0.9V762.4h-0.9zM1410.09 690.9h0.9V762.4h-0.9zM1412.45 692.9h0.9V762.4h-0.9zM1414.81 686.8h0.9V762.4h-0.9zM1417.17 691.6h0.9V762.4h-0.9zM1419.53 693.2h0.9V762.4h-0.9zM1421.89 689.4h0.9V762.4h-0.9zM1424.26 694.7h0.9V762.4h-0.9zM1426.62 692.8h0.9V762.4h-0.9zM1428.98 684.6h0.9V762.4h-0.9zM1431.34 694.4h0.9V762.4h-0.9zM1433.70 690.6h0.9V762.4h-0.9zM1436.06 690.9h0.9V762.4h-0.9zM1438.42 688.8h0.9V762.4h-0.9zM1440.78 696.6h0.9V762.4h-0.9zM1443.14 694.1h0.9V762.4h-0.9zM1445.51 695.5h0.9V762.4h-0.9zM1447.87 693.2h0.9V762.4h-0.9zM1450.23 689.1h0.9V762.4h-0.9zM1452.59 689.2h0.9V762.4h-0.9zM1454.95 689.7h0.9V762.4h-0.9zM1457.31 690.5h0.9V762.4h-0.9zM1459.67 694.4h0.9V762.4h-0.9zM1462.03 694.3h0.9V762.4h-0.9zM1464.39 694.0h0.9V762.4h-0.9zM1466.76 692.3h0.9V762.4h-0.9zM1469.12 690.1h0.9V762.4h-0.9zM1471.48 688.7h0.9V762.4h-0.9zM1473.84 692.7h0.9V762.4h-0.9zM1476.20 687.5h0.9V762.4h-0.9zM1478.56 693.9h0.9V762.4h-0.9zM1480.92 692.0h0.9V762.4h-0.9zM1483.28 691.8h0.9V762.4h-0.9zM1485.64 690.4h0.9V762.4h-0.9zM1488.01 688.9h0.9V762.4h-0.9zM1490.37 688.4h0.9V762.4h-0.9zM1492.73 693.1h0.9V762.4h-0.9zM1495.09 689.9h0.9V762.4h-0.9zM1497.45 684.2h0.9V762.4h-0.9zM1499.81 689.1h0.9V762.4h-0.9zM1502.17 689.9h0.9V762.4h-0.9zM1504.53 688.2h0.9V762.4h-0.9zM1506.89 691.2h0.9V762.4h-0.9zM1509.26 694.5h0.9V762.4h-0.9zM1511.62 686.8h0.9V762.4h-0.9zM1513.98 695.6h0.9V762.4h-0.9zM1516.34 693.3h0.9V762.4h-0.9zM1518.70 689.8h0.9V762.4h-0.9zM1521.06 686.1h0.9V762.4h-0.9zM1523.42 686.4h0.9V762.4h-0.9zM1525.78 694.3h0.9V762.4h-0.9zM1528.14 688.5h0.9V762.4h-0.9zM1530.51 689.9h0.9V762.4h-0.9zM1532.87 690.2h0.9V762.4h-0.9zM1535.23 695.9h0.9V762.4h-0.9zM1537.59 696.7h0.9V762.4h-0.9zM1539.95 695.1h0.9V762.4h-0.9zM1542.31 690.0h0.9V762.4h-0.9zM1544.67 704.8h0.9V762.4h-0.9zM1547.03 693.9h0.9V762.4h-0.9zM1549.39 697.0h0.9V762.4h-0.9zM1551.76 690.1h0.9V762.4h-0.9zM1554.12 700.7h0.9V762.4h-0.9zM1556.48 696.7h0.9V762.4h-0.9zM1558.84 694.4h0.9V762.4h-0.9zM1561.20 734.3h1.1V762.4h-1.1z" fill="#6a9fcb"/><path d="M881.20 629.7h2.36V698.4h-2.36zM883.56 625.8h2.36V695.5h-2.36zM885.92 622.6h2.36V692.0h-2.36zM888.28 625.1h2.36V694.7h-2.36zM890.64 620.3h2.36V692.0h-2.36zM893.01 623.0h2.36V692.7h-2.36zM895.37 624.4h2.36V696.5h-2.36zM897.73 615.8h2.36V689.4h-2.36zM900.09 628.2h2.36V696.1h-2.36zM902.45 619.0h2.36V694.3h-2.36zM904.81 628.4h2.36V694.7h-2.36zM907.17 629.9h2.36V696.8h-2.36zM909.53 623.3h2.36V691.8h-2.36zM911.89 621.6h2.36V692.2h-2.36zM914.26 613.5h2.36V687.2h-2.36zM916.62 612.8h2.36V684.9h-2.36zM918.98 612.8h2.36V684.7h-2.36zM921.34 617.8h2.36V684.9h-2.36zM923.70 618.1h2.36V687.7h-2.36zM926.06 621.7h2.36V693.5h-2.36zM928.42 614.9h2.36V689.9h-2.36zM930.78 618.1h2.36V689.4h-2.36zM933.14 619.9h2.36V689.4h-2.36zM935.51 622.6h2.36V688.4h-2.36zM937.87 617.6h2.36V688.9h-2.36zM940.23 624.8h2.36V690.2h-2.36zM942.59 620.4h2.36V693.0h-2.36zM944.95 626.9h2.36V695.9h-2.36zM947.31 615.1h2.36V683.8h-2.36zM949.67 612.1h2.36V688.0h-2.36zM952.03 619.7h2.36V688.8h-2.36zM954.39 615.4h2.36V685.5h-2.36zM956.76 614.1h2.36V687.5h-2.36zM959.12 624.0h2.36V691.9h-2.36zM961.48 625.7h2.36V693.3h-2.36zM963.84 629.5h2.36V695.6h-2.36zM966.20 620.0h2.36V691.2h-2.36zM968.56 625.3h2.36V695.9h-2.36zM970.92 625.8h2.36V689.4h-2.36zM973.28 617.0h2.36V683.9h-2.36zM975.64 623.8h2.36V693.8h-2.36zM978.01 623.7h2.36V692.4h-2.36zM980.37 621.8h2.36V691.8h-2.36zM982.73 628.1h2.36V696.7h-2.36zM985.09 628.4h2.36V695.3h-2.36zM987.45 614.5h2.36V690.1h-2.36zM989.81 626.1h2.36V693.0h-2.36zM992.17 626.8h2.36V693.5h-2.36zM994.53 616.3h2.36V688.3h-2.36zM996.89 617.5h2.36V687.5h-2.36zM999.26 627.4h2.36V694.9h-2.36zM1001.62 617.2h2.36V688.1h-2.36zM1003.98 620.8h2.36V691.7h-2.36zM1006.34 626.9h2.36V693.3h-2.36zM1008.70 626.4h2.36V695.6h-2.36zM1011.06 621.6h2.36V690.3h-2.36zM1013.42 622.0h2.36V695.5h-2.36zM1015.78 630.0h2.36V692.9h-2.36zM1018.14 619.6h2.36V689.1h-2.36zM1020.51 623.5h2.36V693.1h-2.36zM1022.87 617.8h2.36V688.5h-2.36zM1025.23 615.4h2.36V685.3h-2.36zM1027.59 628.1h2.36V698.5h-2.36zM1029.95 622.5h2.36V694.0h-2.36zM1032.31 627.7h2.36V691.6h-2.36zM1034.67 613.5h2.36V688.7h-2.36zM1037.03 622.7h2.36V694.9h-2.36zM1039.39 618.6h2.36V689.1h-2.36zM1041.76 617.4h2.36V690.2h-2.36zM1044.12 620.5h2.36V692.1h-2.36zM1046.48 620.8h2.36V688.3h-2.36zM1048.84 617.0h2.36V689.1h-2.36zM1051.20 618.3h2.36V692.4h-2.36zM1053.56 620.4h2.36V691.4h-2.36zM1055.92 624.8h2.36V694.4h-2.36zM1058.28 618.5h2.36V687.3h-2.36zM1060.64 626.5h2.36V694.9h-2.36zM1063.01 627.0h2.36V691.4h-2.36zM1065.37 628.8h2.36V696.1h-2.36zM1067.73 628.7h2.36V693.7h-2.36zM1070.09 624.0h2.36V692.6h-2.36zM1072.45 625.5h2.36V694.6h-2.36zM1074.81 627.5h2.36V697.2h-2.36zM1077.17 624.0h2.36V693.9h-2.36zM1079.53 624.2h2.36V692.0h-2.36zM1081.89 620.4h2.36V688.1h-2.36zM1084.26 623.0h2.36V693.2h-2.36zM1086.62 622.1h2.36V691.3h-2.36zM1088.98 625.8h2.36V695.4h-2.36zM1091.34 628.0h2.36V698.4h-2.36zM1093.70 626.5h2.36V694.5h-2.36zM1096.06 626.7h2.36V695.7h-2.36zM1098.42 622.4h2.36V693.7h-2.36zM1100.78 629.8h2.36V696.0h-2.36zM1103.14 626.2h2.36V688.9h-2.36zM1105.51 626.6h2.36V695.5h-2.36zM1107.87 621.1h2.36V689.6h-2.36zM1110.23 623.6h2.36V692.3h-2.36zM1112.59 618.1h2.36V683.8h-2.36zM1114.95 619.6h2.36V687.2h-2.36zM1117.31 622.7h2.36V692.9h-2.36zM1119.67 626.2h2.36V694.3h-2.36zM1122.03 628.3h2.36V697.2h-2.36zM1124.39 619.0h2.36V690.2h-2.36zM1126.76 616.7h2.36V689.7h-2.36zM1129.12 619.6h2.36V692.2h-2.36zM1131.48 623.5h2.36V693.0h-2.36zM1133.84 611.3h2.36V687.7h-2.36zM1136.20 628.7h2.36V699.7h-2.36zM1138.56 618.7h2.36V692.1h-2.36zM1140.92 620.3h2.36V691.7h-2.36zM1143.28 614.5h2.36V687.8h-2.36zM1145.64 618.6h2.36V687.8h-2.36zM1148.01 626.0h2.36V694.0h-2.36zM1150.37 626.6h2.36V695.5h-2.36zM1152.73 620.6h2.36V689.0h-2.36zM1155.09 618.3h2.36V689.2h-2.36zM1157.45 621.5h2.36V689.9h-2.36zM1159.81 620.9h2.36V693.6h-2.36zM1162.17 624.7h2.36V694.5h-2.36zM1164.53 629.6h2.36V694.4h-2.36zM1166.89 621.8h2.36V693.3h-2.36zM1169.26 626.4h2.36V695.5h-2.36zM1171.62 621.5h2.36V688.5h-2.36zM1173.98 618.5h2.36V692.9h-2.36zM1176.34 619.1h2.36V695.1h-2.36zM1178.70 617.1h2.36V689.7h-2.36zM1181.06 622.1h2.36V689.9h-2.36zM1183.42 620.6h2.36V690.5h-2.36zM1185.78 626.1h2.36V691.7h-2.36zM1188.14 630.2h2.36V699.6h-2.36zM1190.51 622.4h2.36V691.3h-2.36zM1192.87 622.5h2.36V691.6h-2.36zM1195.23 620.6h2.36V691.4h-2.36zM1197.59 616.8h2.36V686.5h-2.36zM1199.95 630.0h2.36V696.4h-2.36zM1202.31 632.1h2.36V697.6h-2.36zM1204.67 624.9h2.36V697.4h-2.36zM1207.03 632.4h2.36V701.3h-2.36zM1209.39 627.7h2.36V697.9h-2.36zM1211.76 622.7h2.36V692.1h-2.36zM1214.12 627.4h2.36V693.2h-2.36zM1216.48 622.5h2.36V693.6h-2.36zM1218.84 622.4h2.36V691.9h-2.36zM1221.20 621.1h2.36V691.6h-2.36zM1223.56 620.7h2.36V692.8h-2.36zM1225.92 619.2h2.36V691.3h-2.36zM1228.28 625.6h2.36V694.7h-2.36zM1230.64 622.8h2.36V692.3h-2.36zM1233.01 625.5h2.36V697.5h-2.36zM1235.37 613.0h2.36V685.7h-2.36zM1237.73 620.6h2.36V694.7h-2.36zM1240.09 627.2h2.36V698.1h-2.36zM1242.45 624.9h2.36V694.0h-2.36zM1244.81 626.1h2.36V693.0h-2.36zM1247.17 617.4h2.36V687.6h-2.36zM1249.53 626.3h2.36V696.1h-2.36zM1251.89 624.8h2.36V693.9h-2.36zM1254.26 614.1h2.36V686.1h-2.36zM1256.62 620.0h2.36V688.9h-2.36zM1258.98 625.5h2.36V699.1h-2.36zM1261.34 625.3h2.36V695.2h-2.36zM1263.70 621.1h2.36V690.5h-2.36zM1266.06 617.7h2.36V689.4h-2.36zM1268.42 613.4h2.36V690.3h-2.36zM1270.78 625.0h2.36V694.9h-2.36zM1273.14 629.3h2.36V695.5h-2.36zM1275.51 625.1h2.36V692.9h-2.36zM1277.87 620.3h2.36V689.3h-2.36zM1280.23 622.3h2.36V691.3h-2.36zM1282.59 622.2h2.36V692.3h-2.36zM1284.95 615.2h2.36V687.7h-2.36zM1287.31 627.7h2.36V694.5h-2.36zM1289.67 624.0h2.36V691.4h-2.36zM1292.03 623.8h2.36V692.2h-2.36zM1294.39 627.6h2.36V694.2h-2.36zM1296.76 622.7h2.36V689.8h-2.36zM1299.12 623.7h2.36V692.7h-2.36zM1301.48 623.1h2.36V692.8h-2.36zM1303.84 622.6h2.36V692.8h-2.36zM1306.20 629.2h2.36V697.7h-2.36zM1308.56 617.0h2.36V691.8h-2.36zM1310.92 618.1h2.36V690.4h-2.36zM1313.28 618.9h2.36V691.4h-2.36zM1315.64 625.5h2.36V696.9h-2.36zM1318.01 617.7h2.36V687.2h-2.36zM1320.37 617.4h2.36V689.7h-2.36zM1322.73 627.8h2.36V693.9h-2.36zM1325.09 628.5h2.36V695.0h-2.36zM1327.45 622.4h2.36V690.6h-2.36zM1329.81 625.4h2.36V694.8h-2.36zM1332.17 617.6h2.36V687.4h-2.36zM1334.53 617.3h2.36V687.1h-2.36zM1336.89 611.1h2.36V683.8h-2.36zM1339.26 625.7h2.36V696.0h-2.36zM1341.62 623.5h2.36V692.9h-2.36zM1343.98 630.4h2.36V692.6h-2.36zM1346.34 622.4h2.36V687.5h-2.36zM1348.70 627.1h2.36V695.6h-2.36zM1351.06 622.4h2.36V695.1h-2.36zM1353.42 618.5h2.36V692.7h-2.36zM1355.78 611.8h2.36V684.6h-2.36zM1358.14 625.2h2.36V690.3h-2.36zM1360.51 625.9h2.36V691.4h-2.36zM1362.87 621.9h2.36V692.1h-2.36zM1365.23 624.9h2.36V691.4h-2.36zM1367.59 624.8h2.36V692.0h-2.36zM1369.95 625.1h2.36V693.7h-2.36zM1372.31 627.3h2.36V693.1h-2.36zM1374.67 625.0h2.36V697.4h-2.36zM1377.03 625.0h2.36V692.8h-2.36zM1379.39 621.7h2.36V690.6h-2.36zM1381.76 627.0h2.36V694.2h-2.36zM1384.12 624.4h2.36V695.6h-2.36zM1386.48 622.9h2.36V691.9h-2.36zM1388.84 628.1h2.36V696.0h-2.36zM1391.20 621.6h2.36V695.6h-2.36zM1393.56 626.1h2.36V694.3h-2.36zM1395.92 618.3h2.36V692.6h-2.36zM1398.28 617.3h2.36V691.0h-2.36zM1400.64 618.7h2.36V692.6h-2.36zM1403.01 622.4h2.36V690.1h-2.36zM1405.37 621.4h2.36V692.5h-2.36zM1407.73 619.9h2.36V692.6h-2.36zM1410.09 621.6h2.36V690.9h-2.36zM1412.45 626.2h2.36V692.9h-2.36zM1414.81 620.9h2.36V686.8h-2.36zM1417.17 623.1h2.36V691.6h-2.36zM1419.53 626.9h2.36V693.2h-2.36zM1421.89 622.2h2.36V689.4h-2.36zM1424.26 623.5h2.36V694.7h-2.36zM1426.62 624.1h2.36V692.8h-2.36zM1428.98 617.1h2.36V684.6h-2.36zM1431.34 628.8h2.36V694.4h-2.36zM1433.70 625.3h2.36V690.6h-2.36zM1436.06 619.8h2.36V690.9h-2.36zM1438.42 621.1h2.36V688.8h-2.36zM1440.78 630.0h2.36V696.6h-2.36zM1443.14 624.2h2.36V694.1h-2.36zM1445.51 624.5h2.36V695.5h-2.36zM1447.87 623.1h2.36V693.2h-2.36zM1450.23 619.2h2.36V689.1h-2.36zM1452.59 622.9h2.36V689.2h-2.36zM1454.95 620.8h2.36V689.7h-2.36zM1457.31 624.9h2.36V690.5h-2.36zM1459.67 630.5h2.36V694.4h-2.36zM1462.03 625.4h2.36V694.3h-2.36zM1464.39 626.3h2.36V694.0h-2.36zM1466.76 624.0h2.36V692.3h-2.36zM1469.12 622.0h2.36V690.1h-2.36zM1471.48 617.7h2.36V688.7h-2.36zM1473.84 626.5h2.36V692.7h-2.36zM1476.20 621.1h2.36V687.5h-2.36zM1478.56 620.3h2.36V693.9h-2.36zM1480.92 620.6h2.36V692.0h-2.36zM1483.28 624.1h2.36V691.8h-2.36zM1485.64 619.0h2.36V690.4h-2.36zM1488.01 620.4h2.36V688.9h-2.36zM1490.37 621.6h2.36V688.4h-2.36zM1492.73 622.0h2.36V693.1h-2.36zM1495.09 617.5h2.36V689.9h-2.36zM1497.45 613.2h2.36V684.2h-2.36zM1499.81 621.5h2.36V689.1h-2.36zM1502.17 623.1h2.36V689.9h-2.36zM1504.53 616.1h2.36V688.2h-2.36zM1506.89 620.2h2.36V691.2h-2.36zM1509.26 630.6h2.36V694.5h-2.36zM1511.62 614.2h2.36V686.8h-2.36zM1513.98 623.0h2.36V695.6h-2.36zM1516.34 622.2h2.36V693.3h-2.36zM1518.70 615.1h2.36V689.8h-2.36zM1521.06 616.0h2.36V686.1h-2.36zM1523.42 615.3h2.36V686.4h-2.36zM1525.78 627.1h2.36V694.3h-2.36zM1528.14 615.8h2.36V688.5h-2.36zM1530.51 616.6h2.36V689.9h-2.36zM1532.87 617.1h2.36V690.2h-2.36zM1535.23 628.6h2.36V695.9h-2.36zM1537.59 630.1h2.36V696.7h-2.36zM1539.95 627.9h2.36V695.1h-2.36zM1542.31 619.4h2.36V690.0h-2.36zM1544.67 637.5h2.36V704.8h-2.36zM1547.03 625.4h2.36V693.9h-2.36zM1549.39 630.8h2.36V697.0h-2.36zM1551.76 618.3h2.36V690.1h-2.36zM1554.12 632.2h2.36V700.7h-2.36zM1556.48 623.6h2.36V696.7h-2.36zM1558.84 624.7h2.36V694.4h-2.36z" fill="#d2e3ef"/><path d="M882.76 629.7h0.7V698.4h-0.7zM885.12 625.8h0.7V695.5h-0.7zM887.48 622.6h0.7V692.0h-0.7zM889.84 625.1h0.7V694.7h-0.7zM892.21 620.3h0.7V692.0h-0.7zM894.57 623.0h0.7V692.7h-0.7zM896.93 624.4h0.7V696.5h-0.7zM899.29 615.8h0.7V689.4h-0.7zM901.65 628.2h0.7V696.1h-0.7zM904.01 619.0h0.7V694.3h-0.7zM906.37 628.4h0.7V694.7h-0.7zM908.73 629.9h0.7V696.8h-0.7zM911.09 623.3h0.7V691.8h-0.7zM913.46 621.6h0.7V692.2h-0.7zM915.82 613.5h0.7V687.2h-0.7zM918.18 612.8h0.7V684.9h-0.7zM920.54 612.8h0.7V684.7h-0.7zM922.90 617.8h0.7V684.9h-0.7zM925.26 618.1h0.7V687.7h-0.7zM927.62 621.7h0.7V693.5h-0.7zM929.98 614.9h0.7V689.9h-0.7zM932.34 618.1h0.7V689.4h-0.7zM934.71 619.9h0.7V689.4h-0.7zM937.07 622.6h0.7V688.4h-0.7zM939.43 617.6h0.7V688.9h-0.7zM941.79 624.8h0.7V690.2h-0.7zM944.15 620.4h0.7V693.0h-0.7zM946.51 626.9h0.7V695.9h-0.7zM948.87 615.1h0.7V683.8h-0.7zM951.23 612.1h0.7V688.0h-0.7zM953.59 619.7h0.7V688.8h-0.7zM955.96 615.4h0.7V685.5h-0.7zM958.32 614.1h0.7V687.5h-0.7zM960.68 624.0h0.7V691.9h-0.7zM963.04 625.7h0.7V693.3h-0.7zM965.40 629.5h0.7V695.6h-0.7zM967.76 620.0h0.7V691.2h-0.7zM970.12 625.3h0.7V695.9h-0.7zM972.48 625.8h0.7V689.4h-0.7zM974.84 617.0h0.7V683.9h-0.7zM977.21 623.8h0.7V693.8h-0.7zM979.57 623.7h0.7V692.4h-0.7zM981.93 621.8h0.7V691.8h-0.7zM984.29 628.1h0.7V696.7h-0.7zM986.65 628.4h0.7V695.3h-0.7zM989.01 614.5h0.7V690.1h-0.7zM991.37 626.1h0.7V693.0h-0.7zM993.73 626.8h0.7V693.5h-0.7zM996.09 616.3h0.7V688.3h-0.7zM998.46 617.5h0.7V687.5h-0.7zM1000.82 627.4h0.7V694.9h-0.7zM1003.18 617.2h0.7V688.1h-0.7zM1005.54 620.8h0.7V691.7h-0.7zM1007.90 626.9h0.7V693.3h-0.7zM1010.26 626.4h0.7V695.6h-0.7zM1012.62 621.6h0.7V690.3h-0.7zM1014.98 622.0h0.7V695.5h-0.7zM1017.34 630.0h0.7V692.9h-0.7zM1019.71 619.6h0.7V689.1h-0.7zM1022.07 623.5h0.7V693.1h-0.7zM1024.43 617.8h0.7V688.5h-0.7zM1026.79 615.4h0.7V685.3h-0.7zM1029.15 628.1h0.7V698.5h-0.7zM1031.51 622.5h0.7V694.0h-0.7zM1033.87 627.7h0.7V691.6h-0.7zM1036.23 613.5h0.7V688.7h-0.7zM1038.59 622.7h0.7V694.9h-0.7zM1040.96 618.6h0.7V689.1h-0.7zM1043.32 617.4h0.7V690.2h-0.7zM1045.68 620.5h0.7V692.1h-0.7zM1048.04 620.8h0.7V688.3h-0.7zM1050.40 617.0h0.7V689.1h-0.7zM1052.76 618.3h0.7V692.4h-0.7zM1055.12 620.4h0.7V691.4h-0.7zM1057.48 624.8h0.7V694.4h-0.7zM1059.84 618.5h0.7V687.3h-0.7zM1062.21 626.5h0.7V694.9h-0.7zM1064.57 627.0h0.7V691.4h-0.7zM1066.93 628.8h0.7V696.1h-0.7zM1069.29 628.7h0.7V693.7h-0.7zM1071.65 624.0h0.7V692.6h-0.7zM1074.01 625.5h0.7V694.6h-0.7zM1076.37 627.5h0.7V697.2h-0.7zM1078.73 624.0h0.7V693.9h-0.7zM1081.09 624.2h0.7V692.0h-0.7zM1083.46 620.4h0.7V688.1h-0.7zM1085.82 623.0h0.7V693.2h-0.7zM1088.18 622.1h0.7V691.3h-0.7zM1090.54 625.8h0.7V695.4h-0.7zM1092.90 628.0h0.7V698.4h-0.7zM1095.26 626.5h0.7V694.5h-0.7zM1097.62 626.7h0.7V695.7h-0.7zM1099.98 622.4h0.7V693.7h-0.7zM1102.34 629.8h0.7V696.0h-0.7zM1104.71 626.2h0.7V688.9h-0.7zM1107.07 626.6h0.7V695.5h-0.7zM1109.43 621.1h0.7V689.6h-0.7zM1111.79 623.6h0.7V692.3h-0.7zM1114.15 618.1h0.7V683.8h-0.7zM1116.51 619.6h0.7V687.2h-0.7zM1118.87 622.7h0.7V692.9h-0.7zM1121.23 626.2h0.7V694.3h-0.7zM1123.59 628.3h0.7V697.2h-0.7zM1125.96 619.0h0.7V690.2h-0.7zM1128.32 616.7h0.7V689.7h-0.7zM1130.68 619.6h0.7V692.2h-0.7zM1133.04 623.5h0.7V693.0h-0.7zM1135.40 611.3h0.7V687.7h-0.7zM1137.76 628.7h0.7V699.7h-0.7zM1140.12 618.7h0.7V692.1h-0.7zM1142.48 620.3h0.7V691.7h-0.7zM1144.84 614.5h0.7V687.8h-0.7zM1147.21 618.6h0.7V687.8h-0.7zM1149.57 626.0h0.7V694.0h-0.7zM1151.93 626.6h0.7V695.5h-0.7zM1154.29 620.6h0.7V689.0h-0.7zM1156.65 618.3h0.7V689.2h-0.7zM1159.01 621.5h0.7V689.9h-0.7zM1161.37 620.9h0.7V693.6h-0.7zM1163.73 624.7h0.7V694.5h-0.7zM1166.09 629.6h0.7V694.4h-0.7zM1168.46 621.8h0.7V693.3h-0.7zM1170.82 626.4h0.7V695.5h-0.7zM1173.18 621.5h0.7V688.5h-0.7zM1175.54 618.5h0.7V692.9h-0.7zM1177.90 619.1h0.7V695.1h-0.7zM1180.26 617.1h0.7V689.7h-0.7zM1182.62 622.1h0.7V689.9h-0.7zM1184.98 620.6h0.7V690.5h-0.7zM1187.34 626.1h0.7V691.7h-0.7zM1189.71 630.2h0.7V699.6h-0.7zM1192.07 622.4h0.7V691.3h-0.7zM1194.43 622.5h0.7V691.6h-0.7zM1196.79 620.6h0.7V691.4h-0.7zM1199.15 616.8h0.7V686.5h-0.7zM1201.51 630.0h0.7V696.4h-0.7zM1203.87 632.1h0.7V697.6h-0.7zM1206.23 624.9h0.7V697.4h-0.7zM1208.59 632.4h0.7V701.3h-0.7zM1210.96 627.7h0.7V697.9h-0.7zM1213.32 622.7h0.7V692.1h-0.7zM1215.68 627.4h0.7V693.2h-0.7zM1218.04 622.5h0.7V693.6h-0.7zM1220.40 622.4h0.7V691.9h-0.7zM1222.76 621.1h0.7V691.6h-0.7zM1225.12 620.7h0.7V692.8h-0.7zM1227.48 619.2h0.7V691.3h-0.7zM1229.84 625.6h0.7V694.7h-0.7zM1232.21 622.8h0.7V692.3h-0.7zM1234.57 625.5h0.7V697.5h-0.7zM1236.93 613.0h0.7V685.7h-0.7zM1239.29 620.6h0.7V694.7h-0.7zM1241.65 627.2h0.7V698.1h-0.7zM1244.01 624.9h0.7V694.0h-0.7zM1246.37 626.1h0.7V693.0h-0.7zM1248.73 617.4h0.7V687.6h-0.7zM1251.09 626.3h0.7V696.1h-0.7zM1253.46 624.8h0.7V693.9h-0.7zM1255.82 614.1h0.7V686.1h-0.7zM1258.18 620.0h0.7V688.9h-0.7zM1260.54 625.5h0.7V699.1h-0.7zM1262.90 625.3h0.7V695.2h-0.7zM1265.26 621.1h0.7V690.5h-0.7zM1267.62 617.7h0.7V689.4h-0.7zM1269.98 613.4h0.7V690.3h-0.7zM1272.34 625.0h0.7V694.9h-0.7zM1274.71 629.3h0.7V695.5h-0.7zM1277.07 625.1h0.7V692.9h-0.7zM1279.43 620.3h0.7V689.3h-0.7zM1281.79 622.3h0.7V691.3h-0.7zM1284.15 622.2h0.7V692.3h-0.7zM1286.51 615.2h0.7V687.7h-0.7zM1288.87 627.7h0.7V694.5h-0.7zM1291.23 624.0h0.7V691.4h-0.7zM1293.59 623.8h0.7V692.2h-0.7zM1295.96 627.6h0.7V694.2h-0.7zM1298.32 622.7h0.7V689.8h-0.7zM1300.68 623.7h0.7V692.7h-0.7zM1303.04 623.1h0.7V692.8h-0.7zM1305.40 622.6h0.7V692.8h-0.7zM1307.76 629.2h0.7V697.7h-0.7zM1310.12 617.0h0.7V691.8h-0.7zM1312.48 618.1h0.7V690.4h-0.7zM1314.84 618.9h0.7V691.4h-0.7zM1317.21 625.5h0.7V696.9h-0.7zM1319.57 617.7h0.7V687.2h-0.7zM1321.93 617.4h0.7V689.7h-0.7zM1324.29 627.8h0.7V693.9h-0.7zM1326.65 628.5h0.7V695.0h-0.7zM1329.01 622.4h0.7V690.6h-0.7zM1331.37 625.4h0.7V694.8h-0.7zM1333.73 617.6h0.7V687.4h-0.7zM1336.09 617.3h0.7V687.1h-0.7zM1338.46 611.1h0.7V683.8h-0.7zM1340.82 625.7h0.7V696.0h-0.7zM1343.18 623.5h0.7V692.9h-0.7zM1345.54 630.4h0.7V692.6h-0.7zM1347.90 622.4h0.7V687.5h-0.7zM1350.26 627.1h0.7V695.6h-0.7zM1352.62 622.4h0.7V695.1h-0.7zM1354.98 618.5h0.7V692.7h-0.7zM1357.34 611.8h0.7V684.6h-0.7zM1359.71 625.2h0.7V690.3h-0.7zM1362.07 625.9h0.7V691.4h-0.7zM1364.43 621.9h0.7V692.1h-0.7zM1366.79 624.9h0.7V691.4h-0.7zM1369.15 624.8h0.7V692.0h-0.7zM1371.51 625.1h0.7V693.7h-0.7zM1373.87 627.3h0.7V693.1h-0.7zM1376.23 625.0h0.7V697.4h-0.7zM1378.59 625.0h0.7V692.8h-0.7zM1380.96 621.7h0.7V690.6h-0.7zM1383.32 627.0h0.7V694.2h-0.7zM1385.68 624.4h0.7V695.6h-0.7zM1388.04 622.9h0.7V691.9h-0.7zM1390.40 628.1h0.7V696.0h-0.7zM1392.76 621.6h0.7V695.6h-0.7zM1395.12 626.1h0.7V694.3h-0.7zM1397.48 618.3h0.7V692.6h-0.7zM1399.84 617.3h0.7V691.0h-0.7zM1402.21 618.7h0.7V692.6h-0.7zM1404.57 622.4h0.7V690.1h-0.7zM1406.93 621.4h0.7V692.5h-0.7zM1409.29 619.9h0.7V692.6h-0.7zM1411.65 621.6h0.7V690.9h-0.7zM1414.01 626.2h0.7V692.9h-0.7zM1416.37 620.9h0.7V686.8h-0.7zM1418.73 623.1h0.7V691.6h-0.7zM1421.09 626.9h0.7V693.2h-0.7zM1423.46 622.2h0.7V689.4h-0.7zM1425.82 623.5h0.7V694.7h-0.7zM1428.18 624.1h0.7V692.8h-0.7zM1430.54 617.1h0.7V684.6h-0.7zM1432.90 628.8h0.7V694.4h-0.7zM1435.26 625.3h0.7V690.6h-0.7zM1437.62 619.8h0.7V690.9h-0.7zM1439.98 621.1h0.7V688.8h-0.7zM1442.34 630.0h0.7V696.6h-0.7zM1444.71 624.2h0.7V694.1h-0.7zM1447.07 624.5h0.7V695.5h-0.7zM1449.43 623.1h0.7V693.2h-0.7zM1451.79 619.2h0.7V689.1h-0.7zM1454.15 622.9h0.7V689.2h-0.7zM1456.51 620.8h0.7V689.7h-0.7zM1458.87 624.9h0.7V690.5h-0.7zM1461.23 630.5h0.7V694.4h-0.7zM1463.59 625.4h0.7V694.3h-0.7zM1465.96 626.3h0.7V694.0h-0.7zM1468.32 624.0h0.7V692.3h-0.7zM1470.68 622.0h0.7V690.1h-0.7zM1473.04 617.7h0.7V688.7h-0.7zM1475.40 626.5h0.7V692.7h-0.7zM1477.76 621.1h0.7V687.5h-0.7zM1480.12 620.3h0.7V693.9h-0.7zM1482.48 620.6h0.7V692.0h-0.7zM1484.84 624.1h0.7V691.8h-0.7zM1487.21 619.0h0.7V690.4h-0.7zM1489.57 620.4h0.7V688.9h-0.7zM1491.93 621.6h0.7V688.4h-0.7zM1494.29 622.0h0.7V693.1h-0.7zM1496.65 617.5h0.7V689.9h-0.7zM1499.01 613.2h0.7V684.2h-0.7zM1501.37 621.5h0.7V689.1h-0.7zM1503.73 623.1h0.7V689.9h-0.7zM1506.09 616.1h0.7V688.2h-0.7zM1508.46 620.2h0.7V691.2h-0.7zM1510.82 630.6h0.7V694.5h-0.7zM1513.18 614.2h0.7V686.8h-0.7zM1515.54 623.0h0.7V695.6h-0.7zM1517.90 622.2h0.7V693.3h-0.7zM1520.26 615.1h0.7V689.8h-0.7zM1522.62 616.0h0.7V686.1h-0.7zM1524.98 615.3h0.7V686.4h-0.7zM1527.34 627.1h0.7V694.3h-0.7zM1529.71 615.8h0.7V688.5h-0.7zM1532.07 616.6h0.7V689.9h-0.7zM1534.43 617.1h0.7V690.2h-0.7zM1536.79 628.6h0.7V695.9h-0.7zM1539.15 630.1h0.7V696.7h-0.7zM1541.51 627.9h0.7V695.1h-0.7zM1543.87 619.4h0.7V690.0h-0.7zM1546.23 637.5h0.7V704.8h-0.7zM1548.59 625.4h0.7V693.9h-0.7zM1550.96 630.8h0.7V697.0h-0.7zM1553.32 618.3h0.7V690.1h-0.7zM1555.68 632.2h0.7V700.7h-0.7zM1558.04 623.6h0.7V696.7h-0.7zM1560.40 624.7h0.7V694.4h-0.7zM1561.20 673.4h1.1V734.3h-1.1z" fill="#e6f0f7"/><path d="M881.20 562.1h2.36V629.7h-2.36zM883.56 558.3h2.36V625.8h-2.36zM885.92 551.8h2.36V622.6h-2.36zM888.28 547.4h2.36V625.1h-2.36zM890.64 548.4h2.36V620.3h-2.36zM893.01 552.5h2.36V623.0h-2.36zM895.37 552.3h2.36V624.4h-2.36zM897.73 543.0h2.36V615.8h-2.36zM900.09 555.8h2.36V628.2h-2.36zM902.45 542.6h2.36V619.0h-2.36zM904.81 567.4h2.36V628.4h-2.36zM907.17 551.4h2.36V629.9h-2.36zM909.53 558.9h2.36V623.3h-2.36zM911.89 561.2h2.36V621.6h-2.36zM914.26 552.0h2.36V613.5h-2.36zM916.62 553.0h2.36V612.8h-2.36zM918.98 542.6h2.36V612.8h-2.36zM921.34 531.4h2.36V617.8h-2.36zM923.70 540.8h2.36V618.1h-2.36zM926.06 551.5h2.36V621.7h-2.36zM928.42 549.5h2.36V614.9h-2.36zM930.78 562.5h2.36V618.1h-2.36zM933.14 551.8h2.36V619.9h-2.36zM935.51 561.0h2.36V622.6h-2.36zM937.87 549.1h2.36V617.6h-2.36zM940.23 555.4h2.36V624.8h-2.36zM942.59 551.1h2.36V620.4h-2.36zM944.95 549.9h2.36V626.9h-2.36zM947.31 542.3h2.36V615.1h-2.36zM949.67 551.6h2.36V612.1h-2.36zM952.03 550.7h2.36V619.7h-2.36zM954.39 544.6h2.36V615.4h-2.36zM956.76 534.7h2.36V614.1h-2.36zM959.12 550.3h2.36V624.0h-2.36zM961.48 566.1h2.36V625.7h-2.36zM963.84 564.5h2.36V629.5h-2.36zM966.20 552.2h2.36V620.0h-2.36zM968.56 562.4h2.36V625.3h-2.36zM970.92 553.8h2.36V625.8h-2.36zM973.28 551.1h2.36V617.0h-2.36zM975.64 555.3h2.36V623.8h-2.36zM978.01 553.9h2.36V623.7h-2.36zM980.37 556.7h2.36V621.8h-2.36zM982.73 552.5h2.36V628.1h-2.36zM985.09 560.4h2.36V628.4h-2.36zM987.45 531.6h2.36V614.5h-2.36zM989.81 549.0h2.36V626.1h-2.36zM992.17 557.5h2.36V626.8h-2.36zM994.53 542.5h2.36V616.3h-2.36zM996.89 547.7h2.36V617.5h-2.36zM999.26 547.9h2.36V627.4h-2.36zM1001.62 551.8h2.36V617.2h-2.36zM1003.98 546.7h2.36V620.8h-2.36zM1006.34 558.8h2.36V626.9h-2.36zM1008.70 549.0h2.36V626.4h-2.36zM1011.06 552.1h2.36V621.6h-2.36zM1013.42 546.7h2.36V622.0h-2.36zM1015.78 560.0h2.36V630.0h-2.36zM1018.14 562.4h2.36V619.6h-2.36zM1020.51 548.2h2.36V623.5h-2.36zM1022.87 550.0h2.36V617.8h-2.36zM1025.23 548.9h2.36V615.4h-2.36zM1027.59 564.1h2.36V628.1h-2.36zM1029.95 553.3h2.36V622.5h-2.36zM1032.31 561.2h2.36V627.7h-2.36zM1034.67 544.1h2.36V613.5h-2.36zM1037.03 549.6h2.36V622.7h-2.36zM1039.39 554.6h2.36V618.6h-2.36zM1041.76 548.1h2.36V617.4h-2.36zM1044.12 556.8h2.36V620.5h-2.36zM1046.48 547.6h2.36V620.8h-2.36zM1048.84 551.1h2.36V617.0h-2.36zM1051.20 550.6h2.36V618.3h-2.36zM1053.56 549.0h2.36V620.4h-2.36zM1055.92 560.2h2.36V624.8h-2.36zM1058.28 541.4h2.36V618.5h-2.36zM1060.64 561.5h2.36V626.5h-2.36zM1063.01 549.2h2.36V627.0h-2.36zM1065.37 569.8h2.36V628.8h-2.36zM1067.73 544.2h2.36V628.7h-2.36zM1070.09 548.4h2.36V624.0h-2.36zM1072.45 546.2h2.36V625.5h-2.36zM1074.81 558.8h2.36V627.5h-2.36zM1077.17 545.8h2.36V624.0h-2.36zM1079.53 555.5h2.36V624.2h-2.36zM1081.89 537.1h2.36V620.4h-2.36zM1084.26 546.6h2.36V623.0h-2.36zM1086.62 543.6h2.36V622.1h-2.36zM1088.98 550.8h2.36V625.8h-2.36zM1091.34 552.8h2.36V628.0h-2.36zM1093.70 561.4h2.36V626.5h-2.36zM1096.06 565.4h2.36V626.7h-2.36zM1098.42 561.3h2.36V622.4h-2.36zM1100.78 556.9h2.36V629.8h-2.36zM1103.14 565.7h2.36V626.2h-2.36zM1105.51 549.0h2.36V626.6h-2.36zM1107.87 543.2h2.36V621.1h-2.36zM1110.23 553.3h2.36V623.6h-2.36zM1112.59 548.0h2.36V618.1h-2.36zM1114.95 548.7h2.36V619.6h-2.36zM1117.31 553.6h2.36V622.7h-2.36zM1119.67 562.2h2.36V626.2h-2.36zM1122.03 558.8h2.36V628.3h-2.36zM1124.39 535.3h2.36V619.0h-2.36zM1126.76 558.8h2.36V616.7h-2.36zM1129.12 550.0h2.36V619.6h-2.36zM1131.48 544.8h2.36V623.5h-2.36zM1133.84 531.6h2.36V611.3h-2.36zM1136.20 566.5h2.36V628.7h-2.36zM1138.56 541.4h2.36V618.7h-2.36zM1140.92 554.1h2.36V620.3h-2.36zM1143.28 550.6h2.36V614.5h-2.36zM1145.64 548.2h2.36V618.6h-2.36zM1148.01 561.0h2.36V626.0h-2.36zM1150.37 558.2h2.36V626.6h-2.36zM1152.73 558.5h2.36V620.6h-2.36zM1155.09 549.9h2.36V618.3h-2.36zM1157.45 559.2h2.36V621.5h-2.36zM1159.81 546.8h2.36V620.9h-2.36zM1162.17 554.7h2.36V624.7h-2.36zM1164.53 557.6h2.36V629.6h-2.36zM1166.89 547.3h2.36V621.8h-2.36zM1169.26 558.7h2.36V626.4h-2.36zM1171.62 562.7h2.36V621.5h-2.36zM1173.98 551.2h2.36V618.5h-2.36zM1176.34 550.3h2.36V619.1h-2.36zM1178.70 544.3h2.36V617.1h-2.36zM1181.06 553.1h2.36V622.1h-2.36zM1183.42 556.8h2.36V620.6h-2.36zM1185.78 557.2h2.36V626.1h-2.36zM1188.14 569.9h2.36V630.2h-2.36zM1190.51 545.4h2.36V622.4h-2.36zM1192.87 555.4h2.36V622.5h-2.36zM1195.23 551.9h2.36V620.6h-2.36zM1197.59 550.1h2.36V616.8h-2.36zM1199.95 552.2h2.36V630.0h-2.36zM1202.31 558.3h2.36V632.1h-2.36zM1204.67 553.6h2.36V624.9h-2.36zM1207.03 555.6h2.36V632.4h-2.36zM1209.39 555.2h2.36V627.7h-2.36zM1211.76 553.1h2.36V622.7h-2.36zM1214.12 553.7h2.36V627.4h-2.36zM1216.48 551.4h2.36V622.5h-2.36zM1218.84 546.3h2.36V622.4h-2.36zM1221.20 549.2h2.36V621.1h-2.36zM1223.56 542.8h2.36V620.7h-2.36zM1225.92 544.7h2.36V619.2h-2.36zM1228.28 553.0h2.36V625.6h-2.36zM1230.64 545.8h2.36V622.8h-2.36zM1233.01 547.2h2.36V625.5h-2.36zM1235.37 546.3h2.36V613.0h-2.36zM1237.73 570.5h2.36V620.6h-2.36zM1240.09 553.1h2.36V627.2h-2.36zM1242.45 561.5h2.36V624.9h-2.36zM1244.81 556.0h2.36V626.1h-2.36zM1247.17 547.4h2.36V617.4h-2.36zM1249.53 544.0h2.36V626.3h-2.36zM1251.89 559.7h2.36V624.8h-2.36zM1254.26 544.8h2.36V614.1h-2.36zM1256.62 553.7h2.36V620.0h-2.36zM1258.98 554.2h2.36V625.5h-2.36zM1261.34 563.2h2.36V625.3h-2.36zM1263.70 554.0h2.36V621.1h-2.36zM1266.06 539.7h2.36V617.7h-2.36zM1268.42 533.5h2.36V613.4h-2.36zM1270.78 555.1h2.36V625.0h-2.36zM1273.14 557.2h2.36V629.3h-2.36zM1275.51 551.4h2.36V625.1h-2.36zM1277.87 551.5h2.36V620.3h-2.36zM1280.23 553.8h2.36V622.3h-2.36zM1282.59 559.7h2.36V622.2h-2.36zM1284.95 543.3h2.36V615.2h-2.36zM1287.31 564.8h2.36V627.7h-2.36zM1289.67 542.9h2.36V624.0h-2.36zM1292.03 549.6h2.36V623.8h-2.36zM1294.39 555.1h2.36V627.6h-2.36zM1296.76 553.5h2.36V622.7h-2.36zM1299.12 547.3h2.36V623.7h-2.36zM1301.48 551.5h2.36V623.1h-2.36zM1303.84 543.5h2.36V622.6h-2.36zM1306.20 564.7h2.36V629.2h-2.36zM1308.56 545.3h2.36V617.0h-2.36zM1310.92 547.6h2.36V618.1h-2.36zM1313.28 559.4h2.36V618.9h-2.36zM1315.64 559.9h2.36V625.5h-2.36zM1318.01 558.0h2.36V617.7h-2.36zM1320.37 541.7h2.36V617.4h-2.36zM1322.73 553.7h2.36V627.8h-2.36zM1325.09 555.8h2.36V628.5h-2.36zM1327.45 544.3h2.36V622.4h-2.36zM1329.81 555.3h2.36V625.4h-2.36zM1332.17 546.1h2.36V617.6h-2.36zM1334.53 544.3h2.36V617.3h-2.36zM1336.89 545.1h2.36V611.1h-2.36zM1339.26 552.6h2.36V625.7h-2.36zM1341.62 560.2h2.36V623.5h-2.36zM1343.98 548.3h2.36V630.4h-2.36zM1346.34 557.8h2.36V622.4h-2.36zM1348.70 560.4h2.36V627.1h-2.36zM1351.06 560.8h2.36V622.4h-2.36zM1353.42 545.5h2.36V618.5h-2.36zM1355.78 552.5h2.36V611.8h-2.36zM1358.14 550.5h2.36V625.2h-2.36zM1360.51 557.5h2.36V625.9h-2.36zM1362.87 554.5h2.36V621.9h-2.36zM1365.23 559.0h2.36V624.9h-2.36zM1367.59 558.9h2.36V624.8h-2.36zM1369.95 554.9h2.36V625.1h-2.36zM1372.31 548.5h2.36V627.3h-2.36zM1374.67 558.5h2.36V625.0h-2.36zM1377.03 559.0h2.36V625.0h-2.36zM1379.39 544.9h2.36V621.7h-2.36zM1381.76 556.4h2.36V627.0h-2.36zM1384.12 556.4h2.36V624.4h-2.36zM1386.48 554.9h2.36V622.9h-2.36zM1388.84 561.1h2.36V628.1h-2.36zM1391.20 552.8h2.36V621.6h-2.36zM1393.56 556.3h2.36V626.1h-2.36zM1395.92 546.3h2.36V618.3h-2.36zM1398.28 537.2h2.36V617.3h-2.36zM1400.64 544.0h2.36V618.7h-2.36zM1403.01 547.5h2.36V622.4h-2.36zM1405.37 548.2h2.36V621.4h-2.36zM1407.73 544.7h2.36V619.9h-2.36zM1410.09 547.9h2.36V621.6h-2.36zM1412.45 545.6h2.36V626.2h-2.36zM1414.81 555.4h2.36V620.9h-2.36zM1417.17 550.6h2.36V623.1h-2.36zM1419.53 555.9h2.36V626.9h-2.36zM1421.89 548.4h2.36V622.2h-2.36zM1424.26 555.6h2.36V623.5h-2.36zM1426.62 540.5h2.36V624.1h-2.36zM1428.98 552.0h2.36V617.1h-2.36zM1431.34 554.6h2.36V628.8h-2.36zM1433.70 550.1h2.36V625.3h-2.36zM1436.06 548.5h2.36V619.8h-2.36zM1438.42 542.0h2.36V621.1h-2.36zM1440.78 553.4h2.36V630.0h-2.36zM1443.14 552.5h2.36V624.2h-2.36zM1445.51 550.1h2.36V624.5h-2.36zM1447.87 549.4h2.36V623.1h-2.36zM1450.23 552.3h2.36V619.2h-2.36zM1452.59 553.3h2.36V622.9h-2.36zM1454.95 556.6h2.36V620.8h-2.36zM1457.31 560.6h2.36V624.9h-2.36zM1459.67 561.1h2.36V630.5h-2.36zM1462.03 565.2h2.36V625.4h-2.36zM1464.39 555.3h2.36V626.3h-2.36zM1466.76 549.1h2.36V624.0h-2.36zM1469.12 551.3h2.36V622.0h-2.36zM1471.48 549.6h2.36V617.7h-2.36zM1473.84 558.9h2.36V626.5h-2.36zM1476.20 543.0h2.36V621.1h-2.36zM1478.56 548.0h2.36V620.3h-2.36zM1480.92 551.8h2.36V620.6h-2.36zM1483.28 556.9h2.36V624.1h-2.36zM1485.64 545.9h2.36V619.0h-2.36zM1488.01 536.3h2.36V620.4h-2.36zM1490.37 541.7h2.36V621.6h-2.36zM1492.73 550.9h2.36V622.0h-2.36zM1495.09 543.4h2.36V617.5h-2.36zM1497.45 538.3h2.36V613.2h-2.36zM1499.81 550.0h2.36V621.5h-2.36zM1502.17 553.9h2.36V623.1h-2.36zM1504.53 550.8h2.36V616.1h-2.36zM1506.89 545.7h2.36V620.2h-2.36zM1509.26 566.7h2.36V630.6h-2.36zM1511.62 544.1h2.36V614.2h-2.36zM1513.98 545.2h2.36V623.0h-2.36zM1516.34 550.0h2.36V622.2h-2.36zM1518.70 543.6h2.36V615.1h-2.36zM1521.06 539.6h2.36V616.0h-2.36zM1523.42 557.3h2.36V615.3h-2.36zM1525.78 557.9h2.36V627.1h-2.36zM1528.14 560.5h2.36V615.8h-2.36zM1530.51 551.4h2.36V616.6h-2.36zM1532.87 542.7h2.36V617.1h-2.36zM1535.23 557.0h2.36V628.6h-2.36zM1537.59 552.5h2.36V630.1h-2.36zM1539.95 551.3h2.36V627.9h-2.36zM1542.31 555.0h2.36V619.4h-2.36zM1544.67 568.5h2.36V637.5h-2.36zM1547.03 554.9h2.36V625.4h-2.36zM1549.39 562.1h2.36V630.8h-2.36zM1551.76 551.0h2.36V618.3h-2.36zM1554.12 572.9h2.36V632.2h-2.36zM1556.48 550.0h2.36V623.6h-2.36zM1558.84 552.4h2.36V624.7h-2.36z" fill="#bddab1"/><path d="M881.20 562.1h0.9V629.7h-0.9zM883.56 558.3h0.9V625.8h-0.9zM885.92 551.8h0.9V622.6h-0.9zM888.28 547.4h0.9V625.1h-0.9zM890.64 548.4h0.9V620.3h-0.9zM893.01 552.5h0.9V623.0h-0.9zM895.37 552.3h0.9V624.4h-0.9zM897.73 543.0h0.9V615.8h-0.9zM900.09 555.8h0.9V628.2h-0.9zM902.45 542.6h0.9V619.0h-0.9zM904.81 567.4h0.9V628.4h-0.9zM907.17 551.4h0.9V629.9h-0.9zM909.53 558.9h0.9V623.3h-0.9zM911.89 561.2h0.9V621.6h-0.9zM914.26 552.0h0.9V613.5h-0.9zM916.62 553.0h0.9V612.8h-0.9zM918.98 542.6h0.9V612.8h-0.9zM921.34 531.4h0.9V617.8h-0.9zM923.70 540.8h0.9V618.1h-0.9zM926.06 551.5h0.9V621.7h-0.9zM928.42 549.5h0.9V614.9h-0.9zM930.78 562.5h0.9V618.1h-0.9zM933.14 551.8h0.9V619.9h-0.9zM935.51 561.0h0.9V622.6h-0.9zM937.87 549.1h0.9V617.6h-0.9zM940.23 555.4h0.9V624.8h-0.9zM942.59 551.1h0.9V620.4h-0.9zM944.95 549.9h0.9V626.9h-0.9zM947.31 542.3h0.9V615.1h-0.9zM949.67 551.6h0.9V612.1h-0.9zM952.03 550.7h0.9V619.7h-0.9zM954.39 544.6h0.9V615.4h-0.9zM956.76 534.7h0.9V614.1h-0.9zM959.12 550.3h0.9V624.0h-0.9zM961.48 566.1h0.9V625.7h-0.9zM963.84 564.5h0.9V629.5h-0.9zM966.20 552.2h0.9V620.0h-0.9zM968.56 562.4h0.9V625.3h-0.9zM970.92 553.8h0.9V625.8h-0.9zM973.28 551.1h0.9V617.0h-0.9zM975.64 555.3h0.9V623.8h-0.9zM978.01 553.9h0.9V623.7h-0.9zM980.37 556.7h0.9V621.8h-0.9zM982.73 552.5h0.9V628.1h-0.9zM985.09 560.4h0.9V628.4h-0.9zM987.45 531.6h0.9V614.5h-0.9zM989.81 549.0h0.9V626.1h-0.9zM992.17 557.5h0.9V626.8h-0.9zM994.53 542.5h0.9V616.3h-0.9zM996.89 547.7h0.9V617.5h-0.9zM999.26 547.9h0.9V627.4h-0.9zM1001.62 551.8h0.9V617.2h-0.9zM1003.98 546.7h0.9V620.8h-0.9zM1006.34 558.8h0.9V626.9h-0.9zM1008.70 549.0h0.9V626.4h-0.9zM1011.06 552.1h0.9V621.6h-0.9zM1013.42 546.7h0.9V622.0h-0.9zM1015.78 560.0h0.9V630.0h-0.9zM1018.14 562.4h0.9V619.6h-0.9zM1020.51 548.2h0.9V623.5h-0.9zM1022.87 550.0h0.9V617.8h-0.9zM1025.23 548.9h0.9V615.4h-0.9zM1027.59 564.1h0.9V628.1h-0.9zM1029.95 553.3h0.9V622.5h-0.9zM1032.31 561.2h0.9V627.7h-0.9zM1034.67 544.1h0.9V613.5h-0.9zM1037.03 549.6h0.9V622.7h-0.9zM1039.39 554.6h0.9V618.6h-0.9zM1041.76 548.1h0.9V617.4h-0.9zM1044.12 556.8h0.9V620.5h-0.9zM1046.48 547.6h0.9V620.8h-0.9zM1048.84 551.1h0.9V617.0h-0.9zM1051.20 550.6h0.9V618.3h-0.9zM1053.56 549.0h0.9V620.4h-0.9zM1055.92 560.2h0.9V624.8h-0.9zM1058.28 541.4h0.9V618.5h-0.9zM1060.64 561.5h0.9V626.5h-0.9zM1063.01 549.2h0.9V627.0h-0.9zM1065.37 569.8h0.9V628.8h-0.9zM1067.73 544.2h0.9V628.7h-0.9zM1070.09 548.4h0.9V624.0h-0.9zM1072.45 546.2h0.9V625.5h-0.9zM1074.81 558.8h0.9V627.5h-0.9zM1077.17 545.8h0.9V624.0h-0.9zM1079.53 555.5h0.9V624.2h-0.9zM1081.89 537.1h0.9V620.4h-0.9zM1084.26 546.6h0.9V623.0h-0.9zM1086.62 543.6h0.9V622.1h-0.9zM1088.98 550.8h0.9V625.8h-0.9zM1091.34 552.8h0.9V628.0h-0.9zM1093.70 561.4h0.9V626.5h-0.9zM1096.06 565.4h0.9V626.7h-0.9zM1098.42 561.3h0.9V622.4h-0.9zM1100.78 556.9h0.9V629.8h-0.9zM1103.14 565.7h0.9V626.2h-0.9zM1105.51 549.0h0.9V626.6h-0.9zM1107.87 543.2h0.9V621.1h-0.9zM1110.23 553.3h0.9V623.6h-0.9zM1112.59 548.0h0.9V618.1h-0.9zM1114.95 548.7h0.9V619.6h-0.9zM1117.31 553.6h0.9V622.7h-0.9zM1119.67 562.2h0.9V626.2h-0.9zM1122.03 558.8h0.9V628.3h-0.9zM1124.39 535.3h0.9V619.0h-0.9zM1126.76 558.8h0.9V616.7h-0.9zM1129.12 550.0h0.9V619.6h-0.9zM1131.48 544.8h0.9V623.5h-0.9zM1133.84 531.6h0.9V611.3h-0.9zM1136.20 566.5h0.9V628.7h-0.9zM1138.56 541.4h0.9V618.7h-0.9zM1140.92 554.1h0.9V620.3h-0.9zM1143.28 550.6h0.9V614.5h-0.9zM1145.64 548.2h0.9V618.6h-0.9zM1148.01 561.0h0.9V626.0h-0.9zM1150.37 558.2h0.9V626.6h-0.9zM1152.73 558.5h0.9V620.6h-0.9zM1155.09 549.9h0.9V618.3h-0.9zM1157.45 559.2h0.9V621.5h-0.9zM1159.81 546.8h0.9V620.9h-0.9zM1162.17 554.7h0.9V624.7h-0.9zM1164.53 557.6h0.9V629.6h-0.9zM1166.89 547.3h0.9V621.8h-0.9zM1169.26 558.7h0.9V626.4h-0.9zM1171.62 562.7h0.9V621.5h-0.9zM1173.98 551.2h0.9V618.5h-0.9zM1176.34 550.3h0.9V619.1h-0.9zM1178.70 544.3h0.9V617.1h-0.9zM1181.06 553.1h0.9V622.1h-0.9zM1183.42 556.8h0.9V620.6h-0.9zM1185.78 557.2h0.9V626.1h-0.9zM1188.14 569.9h0.9V630.2h-0.9zM1190.51 545.4h0.9V622.4h-0.9zM1192.87 555.4h0.9V622.5h-0.9zM1195.23 551.9h0.9V620.6h-0.9zM1197.59 550.1h0.9V616.8h-0.9zM1199.95 552.2h0.9V630.0h-0.9zM1202.31 558.3h0.9V632.1h-0.9zM1204.67 553.6h0.9V624.9h-0.9zM1207.03 555.6h0.9V632.4h-0.9zM1209.39 555.2h0.9V627.7h-0.9zM1211.76 553.1h0.9V622.7h-0.9zM1214.12 553.7h0.9V627.4h-0.9zM1216.48 551.4h0.9V622.5h-0.9zM1218.84 546.3h0.9V622.4h-0.9zM1221.20 549.2h0.9V621.1h-0.9zM1223.56 542.8h0.9V620.7h-0.9zM1225.92 544.7h0.9V619.2h-0.9zM1228.28 553.0h0.9V625.6h-0.9zM1230.64 545.8h0.9V622.8h-0.9zM1233.01 547.2h0.9V625.5h-0.9zM1235.37 546.3h0.9V613.0h-0.9zM1237.73 570.5h0.9V620.6h-0.9zM1240.09 553.1h0.9V627.2h-0.9zM1242.45 561.5h0.9V624.9h-0.9zM1244.81 556.0h0.9V626.1h-0.9zM1247.17 547.4h0.9V617.4h-0.9zM1249.53 544.0h0.9V626.3h-0.9zM1251.89 559.7h0.9V624.8h-0.9zM1254.26 544.8h0.9V614.1h-0.9zM1256.62 553.7h0.9V620.0h-0.9zM1258.98 554.2h0.9V625.5h-0.9zM1261.34 563.2h0.9V625.3h-0.9zM1263.70 554.0h0.9V621.1h-0.9zM1266.06 539.7h0.9V617.7h-0.9zM1268.42 533.5h0.9V613.4h-0.9zM1270.78 555.1h0.9V625.0h-0.9zM1273.14 557.2h0.9V629.3h-0.9zM1275.51 551.4h0.9V625.1h-0.9zM1277.87 551.5h0.9V620.3h-0.9zM1280.23 553.8h0.9V622.3h-0.9zM1282.59 559.7h0.9V622.2h-0.9zM1284.95 543.3h0.9V615.2h-0.9zM1287.31 564.8h0.9V627.7h-0.9zM1289.67 542.9h0.9V624.0h-0.9zM1292.03 549.6h0.9V623.8h-0.9zM1294.39 555.1h0.9V627.6h-0.9zM1296.76 553.5h0.9V622.7h-0.9zM1299.12 547.3h0.9V623.7h-0.9zM1301.48 551.5h0.9V623.1h-0.9zM1303.84 543.5h0.9V622.6h-0.9zM1306.20 564.7h0.9V629.2h-0.9zM1308.56 545.3h0.9V617.0h-0.9zM1310.92 547.6h0.9V618.1h-0.9zM1313.28 559.4h0.9V618.9h-0.9zM1315.64 559.9h0.9V625.5h-0.9zM1318.01 558.0h0.9V617.7h-0.9zM1320.37 541.7h0.9V617.4h-0.9zM1322.73 553.7h0.9V627.8h-0.9zM1325.09 555.8h0.9V628.5h-0.9zM1327.45 544.3h0.9V622.4h-0.9zM1329.81 555.3h0.9V625.4h-0.9zM1332.17 546.1h0.9V617.6h-0.9zM1334.53 544.3h0.9V617.3h-0.9zM1336.89 545.1h0.9V611.1h-0.9zM1339.26 552.6h0.9V625.7h-0.9zM1341.62 560.2h0.9V623.5h-0.9zM1343.98 548.3h0.9V630.4h-0.9zM1346.34 557.8h0.9V622.4h-0.9zM1348.70 560.4h0.9V627.1h-0.9zM1351.06 560.8h0.9V622.4h-0.9zM1353.42 545.5h0.9V618.5h-0.9zM1355.78 552.5h0.9V611.8h-0.9zM1358.14 550.5h0.9V625.2h-0.9zM1360.51 557.5h0.9V625.9h-0.9zM1362.87 554.5h0.9V621.9h-0.9zM1365.23 559.0h0.9V624.9h-0.9zM1367.59 558.9h0.9V624.8h-0.9zM1369.95 554.9h0.9V625.1h-0.9zM1372.31 548.5h0.9V627.3h-0.9zM1374.67 558.5h0.9V625.0h-0.9zM1377.03 559.0h0.9V625.0h-0.9zM1379.39 544.9h0.9V621.7h-0.9zM1381.76 556.4h0.9V627.0h-0.9zM1384.12 556.4h0.9V624.4h-0.9zM1386.48 554.9h0.9V622.9h-0.9zM1388.84 561.1h0.9V628.1h-0.9zM1391.20 552.8h0.9V621.6h-0.9zM1393.56 556.3h0.9V626.1h-0.9zM1395.92 546.3h0.9V618.3h-0.9zM1398.28 537.2h0.9V617.3h-0.9zM1400.64 544.0h0.9V618.7h-0.9zM1403.01 547.5h0.9V622.4h-0.9zM1405.37 548.2h0.9V621.4h-0.9zM1407.73 544.7h0.9V619.9h-0.9zM1410.09 547.9h0.9V621.6h-0.9zM1412.45 545.6h0.9V626.2h-0.9zM1414.81 555.4h0.9V620.9h-0.9zM1417.17 550.6h0.9V623.1h-0.9zM1419.53 555.9h0.9V626.9h-0.9zM1421.89 548.4h0.9V622.2h-0.9zM1424.26 555.6h0.9V623.5h-0.9zM1426.62 540.5h0.9V624.1h-0.9zM1428.98 552.0h0.9V617.1h-0.9zM1431.34 554.6h0.9V628.8h-0.9zM1433.70 550.1h0.9V625.3h-0.9zM1436.06 548.5h0.9V619.8h-0.9zM1438.42 542.0h0.9V621.1h-0.9zM1440.78 553.4h0.9V630.0h-0.9zM1443.14 552.5h0.9V624.2h-0.9zM1445.51 550.1h0.9V624.5h-0.9zM1447.87 549.4h0.9V623.1h-0.9zM1450.23 552.3h0.9V619.2h-0.9zM1452.59 553.3h0.9V622.9h-0.9zM1454.95 556.6h0.9V620.8h-0.9zM1457.31 560.6h0.9V624.9h-0.9zM1459.67 561.1h0.9V630.5h-0.9zM1462.03 565.2h0.9V625.4h-0.9zM1464.39 555.3h0.9V626.3h-0.9zM1466.76 549.1h0.9V624.0h-0.9zM1469.12 551.3h0.9V622.0h-0.9zM1471.48 549.6h0.9V617.7h-0.9zM1473.84 558.9h0.9V626.5h-0.9zM1476.20 543.0h0.9V621.1h-0.9zM1478.56 548.0h0.9V620.3h-0.9zM1480.92 551.8h0.9V620.6h-0.9zM1483.28 556.9h0.9V624.1h-0.9zM1485.64 545.9h0.9V619.0h-0.9zM1488.01 536.3h0.9V620.4h-0.9zM1490.37 541.7h0.9V621.6h-0.9zM1492.73 550.9h0.9V622.0h-0.9zM1495.09 543.4h0.9V617.5h-0.9zM1497.45 538.3h0.9V613.2h-0.9zM1499.81 550.0h0.9V621.5h-0.9zM1502.17 553.9h0.9V623.1h-0.9zM1504.53 550.8h0.9V616.1h-0.9zM1506.89 545.7h0.9V620.2h-0.9zM1509.26 566.7h0.9V630.6h-0.9zM1511.62 544.1h0.9V614.2h-0.9zM1513.98 545.2h0.9V623.0h-0.9zM1516.34 550.0h0.9V622.2h-0.9zM1518.70 543.6h0.9V615.1h-0.9zM1521.06 539.6h0.9V616.0h-0.9zM1523.42 557.3h0.9V615.3h-0.9zM1525.78 557.9h0.9V627.1h-0.9zM1528.14 560.5h0.9V615.8h-0.9zM1530.51 551.4h0.9V616.6h-0.9zM1532.87 542.7h0.9V617.1h-0.9zM1535.23 557.0h0.9V628.6h-0.9zM1537.59 552.5h0.9V630.1h-0.9zM1539.95 551.3h0.9V627.9h-0.9zM1542.31 555.0h0.9V619.4h-0.9zM1544.67 568.5h0.9V637.5h-0.9zM1547.03 554.9h0.9V625.4h-0.9zM1549.39 562.1h0.9V630.8h-0.9zM1551.76 551.0h0.9V618.3h-0.9zM1554.12 572.9h0.9V632.2h-0.9zM1556.48 550.0h0.9V623.6h-0.9zM1558.84 552.4h0.9V624.7h-0.9zM1561.20 600.4h1.1V673.4h-1.1z" fill="#7dbb6a"/><rect x="944.95" y="552.7" width="1.3" height="70.0" fill="#4f9a3a" fill-opacity="0.6"/><rect x="944.95" y="622.7" width="1.3" height="70.0" fill="#8fb8dc" fill-opacity="0.6"/><rect x="944.95" y="692.6" width="1.3" height="69.8" fill="#2a6db0" fill-opacity="0.6"/><rect x="1084.26" y="552.7" width="1.3" height="70.0" fill="#4f9a3a" fill-opacity="0.6"/><rect x="1084.26" y="622.7" width="1.3" height="70.0" fill="#8fb8dc" fill-opacity="0.6"/><rect x="1084.26" y="692.6" width="1.3" height="69.8" fill="#2a6db0" fill-opacity="0.6"/><rect x="1221.20" y="552.7" width="1.3" height="70.0" fill="#4f9a3a" fill-opacity="0.6"/><rect x="1221.20" y="622.7" width="1.3" height="70.0" fill="#8fb8dc" fill-opacity="0.6"/><rect x="1221.20" y="692.6" width="1.3" height="69.8" fill="#2a6db0" fill-opacity="0.6"/><rect x="1358.14" y="552.7" width="1.3" height="70.0" fill="#4f9a3a" fill-opacity="0.6"/><rect x="1358.14" y="622.7" width="1.3" height="70.0" fill="#8fb8dc" fill-opacity="0.6"/><rect x="1358.14" y="692.6" width="1.3" height="69.8" fill="#2a6db0" fill-opacity="0.6"/><rect x="1495.09" y="552.7" width="1.3" height="70.0" fill="#4f9a3a" fill-opacity="0.6"/><rect x="1495.09" y="622.7" width="1.3" height="70.0" fill="#8fb8dc" fill-opacity="0.6"/><rect x="1495.09" y="692.6" width="1.3" height="69.8" fill="#2a6db0" fill-opacity="0.6"/><rect x="881.2" y="583.90" width="680.0" height="1" fill="#000" fill-opacity="0.07"/><rect x="881.2" y="672.90" width="680.0" height="1" fill="#000" fill-opacity="0.07"/><rect x="873.7" y="761.90" width="690.0999999999999" height="1" fill="#dfe5ec"/><rect x="937.40" y="762.9" width="1.2" height="5" fill="#666"/><rect x="1022.30" y="762.9" width="1.2" height="5" fill="#666"/><rect x="1107.20" y="762.9" width="1.2" height="5" fill="#666"/><rect x="1192.10" y="762.9" width="1.2" height="5" fill="#666"/><rect x="1277.00" y="762.9" width="1.2" height="5" fill="#666"/><rect x="1361.90" y="762.9" width="1.2" height="5" fill="#666"/><rect x="1446.80" y="762.9" width="1.2" height="5" fill="#666"/><rect x="1531.70" y="762.9" width="1.2" height="5" fill="#666"/></svg><svg width="1600" height="1365"><rect x="72.7" y="960.80" width="697.6999999999999" height="1" fill="#dfe5ec"/><rect x="72.7" y="1049.80" width="697.6999999999999" height="1" fill="#dfe5ec"/><rect x="72.7" y="1138.80" width="697.6999999999999" height="1" fill="#dfe5ec"/><rect x="72.7" y="1227.80" width="697.6999999999999" height="1" fill="#dfe5ec"/><path d="M79.40 1166.2h2.39V1228.3h-2.39zM81.79 1152.7h2.39V1228.3h-2.39zM84.19 1162.2h2.39V1228.3h-2.39zM86.58 1171.2h2.39V1228.3h-2.39zM88.98 1163.0h2.39V1228.3h-2.39zM91.37 1161.0h2.39V1228.3h-2.39zM93.77 1163.3h2.39V1228.3h-2.39zM96.16 1153.2h2.39V1228.3h-2.39zM98.56 1163.7h2.39V1228.3h-2.39zM100.95 1174.6h2.39V1228.3h-2.39zM103.34 1166.0h2.39V1228.3h-2.39zM105.74 1160.7h2.39V1228.3h-2.39zM108.13 1167.0h2.39V1228.3h-2.39zM110.53 1155.2h2.39V1228.3h-2.39zM112.92 1159.7h2.39V1228.3h-2.39zM117.71 1168.3h2.39V1228.3h-2.39zM120.11 1167.4h2.39V1228.3h-2.39zM122.50 1151.7h2.39V1228.3h-2.39zM124.89 1154.5h2.39V1228.3h-2.39zM127.29 1154.0h2.39V1228.3h-2.39zM129.68 1171.0h2.39V1228.3h-2.39zM132.08 1163.3h2.39V1228.3h-2.39zM134.47 1161.7h2.39V1228.3h-2.39zM136.87 1161.4h2.39V1228.3h-2.39zM139.26 1167.4h2.39V1228.3h-2.39zM141.66 1169.1h2.39V1228.3h-2.39zM144.05 1156.0h2.39V1228.3h-2.39zM146.44 1169.3h2.39V1228.3h-2.39zM148.84 1151.0h2.39V1228.3h-2.39zM151.23 1162.7h2.39V1228.3h-2.39zM153.63 1164.0h2.39V1228.3h-2.39zM156.02 1166.2h2.39V1228.3h-2.39zM158.42 1159.1h2.39V1228.3h-2.39zM160.81 1162.9h2.39V1228.3h-2.39zM163.21 1156.0h2.39V1228.3h-2.39zM165.60 1156.1h2.39V1228.3h-2.39zM167.99 1161.0h2.39V1228.3h-2.39zM170.39 1159.6h2.39V1228.3h-2.39zM172.78 1166.9h2.39V1228.3h-2.39zM175.18 1163.5h2.39V1228.3h-2.39zM177.57 1167.0h2.39V1228.3h-2.39zM179.97 1156.9h2.39V1228.3h-2.39zM182.36 1156.1h2.39V1228.3h-2.39zM184.76 1157.1h2.39V1228.3h-2.39zM187.15 1170.1h2.39V1228.3h-2.39zM189.54 1160.4h2.39V1228.3h-2.39zM191.94 1148.1h2.39V1228.3h-2.39zM194.33 1155.6h2.39V1228.3h-2.39zM196.73 1150.5h2.39V1228.3h-2.39zM199.12 1156.5h2.39V1228.3h-2.39zM201.52 1169.2h2.39V1228.3h-2.39zM203.91 1148.5h2.39V1228.3h-2.39zM206.31 1167.9h2.39V1228.3h-2.39zM208.70 1160.9h2.39V1228.3h-2.39zM211.09 1155.6h2.39V1228.3h-2.39zM213.49 1156.0h2.39V1228.3h-2.39zM215.88 1160.4h2.39V1228.3h-2.39zM218.28 1145.1h2.39V1228.3h-2.39zM220.67 1154.4h2.39V1228.3h-2.39zM223.07 1165.5h2.39V1228.3h-2.39zM225.46 1157.3h2.39V1228.3h-2.39zM227.86 1165.1h2.39V1228.3h-2.39zM230.25 1171.6h2.39V1228.3h-2.39zM232.64 1160.6h2.39V1228.3h-2.39zM235.04 1161.3h2.39V1228.3h-2.39zM237.43 1153.8h2.39V1228.3h-2.39zM239.83 1157.3h2.39V1228.3h-2.39zM242.22 1175.6h2.39V1228.3h-2.39zM244.62 1162.0h2.39V1228.3h-2.39zM247.01 1164.4h2.39V1228.3h-2.39zM249.41 1161.5h2.39V1228.3h-2.39zM251.80 1157.1h2.39V1228.3h-2.39zM254.19 1163.0h2.39V1228.3h-2.39zM256.59 1155.3h2.39V1228.3h-2.39zM258.98 1152.1h2.39V1228.3h-2.39zM261.38 1164.2h2.39V1228.3h-2.39zM263.77 1166.1h2.39V1228.3h-2.39zM266.17 1151.1h2.39V1228.3h-2.39zM268.56 1150.7h2.39V1228.3h-2.39zM270.96 1164.8h2.39V1228.3h-2.39zM273.35 1167.6h2.39V1228.3h-2.39zM275.74 1161.3h2.39V1228.3h-2.39zM278.14 1159.3h2.39V1228.3h-2.39zM280.53 1164.1h2.39V1228.3h-2.39zM282.93 1165.6h2.39V1228.3h-2.39zM285.32 1158.7h2.39V1228.3h-2.39zM287.72 1156.0h2.39V1228.3h-2.39zM290.11 1166.3h2.39V1228.3h-2.39zM292.51 1156.7h2.39V1228.3h-2.39zM294.90 1164.6h2.39V1228.3h-2.39zM297.29 1153.2h2.39V1228.3h-2.39zM299.69 1152.7h2.39V1228.3h-2.39zM302.08 1154.1h2.39V1228.3h-2.39zM304.48 1153.7h2.39V1228.3h-2.39zM306.87 1159.8h2.39V1228.3h-2.39zM309.27 1172.1h2.39V1228.3h-2.39zM311.66 1170.8h2.39V1228.3h-2.39zM314.06 1165.3h2.39V1228.3h-2.39zM316.45 1151.9h2.39V1228.3h-2.39zM318.84 1161.7h2.39V1228.3h-2.39zM321.24 1160.2h2.39V1228.3h-2.39zM323.63 1148.2h2.39V1228.3h-2.39zM326.03 1163.9h2.39V1228.3h-2.39zM328.42 1151.7h2.39V1228.3h-2.39zM330.82 1163.1h2.39V1228.3h-2.39zM333.21 1169.0h2.39V1228.3h-2.39zM335.61 1156.9h2.39V1228.3h-2.39zM338.00 1152.9h2.39V1228.3h-2.39zM340.39 1156.4h2.39V1228.3h-2.39zM342.79 1164.6h2.39V1228.3h-2.39zM345.18 1156.9h2.39V1228.3h-2.39zM347.58 1157.4h2.39V1228.3h-2.39zM349.97 1165.1h2.39V1228.3h-2.39zM352.37 1173.1h2.39V1228.3h-2.39zM354.76 1160.6h2.39V1228.3h-2.39zM357.16 1163.9h2.39V1228.3h-2.39zM359.55 1156.9h2.39V1228.3h-2.39zM361.94 1165.0h2.39V1228.3h-2.39zM364.34 1167.0h2.39V1228.3h-2.39zM366.73 1159.4h2.39V1228.3h-2.39zM369.13 1162.0h2.39V1228.3h-2.39zM371.52 1165.0h2.39V1228.3h-2.39zM373.92 1163.2h2.39V1228.3h-2.39zM376.31 1164.9h2.39V1228.3h-2.39zM378.71 1150.9h2.39V1228.3h-2.39zM381.10 1159.7h2.39V1228.3h-2.39zM383.49 1164.3h2.39V1228.3h-2.39zM385.89 1162.7h2.39V1228.3h-2.39zM388.28 1164.9h2.39V1228.3h-2.39zM390.68 1156.6h2.39V1228.3h-2.39zM393.07 1155.4h2.39V1228.3h-2.39zM395.47 1152.9h2.39V1228.3h-2.39zM397.86 1167.0h2.39V1228.3h-2.39zM400.26 1157.5h2.39V1228.3h-2.39zM402.65 1160.3h2.39V1228.3h-2.39zM405.04 1158.0h2.39V1228.3h-2.39zM407.44 1155.4h2.39V1228.3h-2.39zM409.83 1158.0h2.39V1228.3h-2.39zM412.23 1165.7h2.39V1228.3h-2.39zM414.62 1166.6h2.39V1228.3h-2.39zM417.02 1171.5h2.39V1228.3h-2.39zM419.41 1179.2h2.39V1228.3h-2.39zM421.81 1163.8h2.39V1228.3h-2.39zM426.59 1163.2h2.39V1228.3h-2.39zM428.99 1169.2h2.39V1228.3h-2.39zM431.38 1154.9h2.39V1228.3h-2.39zM433.78 1154.7h2.39V1228.3h-2.39zM436.17 1168.2h2.39V1228.3h-2.39zM438.57 1156.8h2.39V1228.3h-2.39zM440.96 1168.0h2.39V1228.3h-2.39zM443.36 1169.9h2.39V1228.3h-2.39zM445.75 1159.6h2.39V1228.3h-2.39zM448.14 1157.7h2.39V1228.3h-2.39zM450.54 1158.5h2.39V1228.3h-2.39zM452.93 1167.2h2.39V1228.3h-2.39zM455.33 1160.2h2.39V1228.3h-2.39zM457.72 1153.9h2.39V1228.3h-2.39zM460.12 1163.4h2.39V1228.3h-2.39zM462.51 1159.1h2.39V1228.3h-2.39zM464.91 1158.0h2.39V1228.3h-2.39zM467.30 1154.9h2.39V1228.3h-2.39zM469.69 1157.6h2.39V1228.3h-2.39zM472.09 1162.1h2.39V1228.3h-2.39zM474.48 1147.7h2.39V1228.3h-2.39zM476.88 1161.0h2.39V1228.3h-2.39zM479.27 1163.4h2.39V1228.3h-2.39zM481.67 1160.5h2.39V1228.3h-2.39zM484.06 1168.6h2.39V1228.3h-2.39zM486.46 1162.8h2.39V1228.3h-2.39zM488.85 1162.6h2.39V1228.3h-2.39zM491.24 1171.1h2.39V1228.3h-2.39zM493.64 1160.5h2.39V1228.3h-2.39zM496.03 1159.6h2.39V1228.3h-2.39zM498.43 1150.1h2.39V1228.3h-2.39zM500.82 1163.7h2.39V1228.3h-2.39zM503.22 1161.0h2.39V1228.3h-2.39zM505.61 1160.7h2.39V1228.3h-2.39zM508.01 1168.5h2.39V1228.3h-2.39zM510.40 1169.8h2.39V1228.3h-2.39zM512.79 1170.4h2.39V1228.3h-2.39zM515.19 1171.1h2.39V1228.3h-2.39zM517.58 1164.6h2.39V1228.3h-2.39zM519.98 1162.7h2.39V1228.3h-2.39zM522.37 1178.9h2.39V1228.3h-2.39zM524.77 1165.8h2.39V1228.3h-2.39zM527.16 1171.9h2.39V1228.3h-2.39zM529.56 1163.4h2.39V1228.3h-2.39zM531.95 1152.5h2.39V1228.3h-2.39zM534.34 1150.7h2.39V1228.3h-2.39zM536.74 1169.0h2.39V1228.3h-2.39zM539.13 1170.1h2.39V1228.3h-2.39zM541.53 1142.7h2.39V1228.3h-2.39zM543.92 1158.1h2.39V1228.3h-2.39zM546.32 1160.4h2.39V1228.3h-2.39zM548.71 1152.7h2.39V1228.3h-2.39zM551.11 1157.3h2.39V1228.3h-2.39zM553.50 1156.1h2.39V1228.3h-2.39zM555.89 1164.5h2.39V1228.3h-2.39zM558.29 1161.9h2.39V1228.3h-2.39zM560.68 1175.1h2.39V1228.3h-2.39zM563.08 1159.2h2.39V1228.3h-2.39zM565.47 1168.3h2.39V1228.3h-2.39zM567.87 1160.6h2.39V1228.3h-2.39zM570.26 1163.9h2.39V1228.3h-2.39zM572.66 1159.3h2.39V1228.3h-2.39zM575.05 1168.3h2.39V1228.3h-2.39zM577.44 1166.9h2.39V1228.3h-2.39zM579.84 1158.8h2.39V1228.3h-2.39zM582.23 1159.7h2.39V1228.3h-2.39zM584.63 1160.5h2.39V1228.3h-2.39zM587.02 1156.3h2.39V1228.3h-2.39zM589.42 1159.9h2.39V1228.3h-2.39zM591.81 1154.9h2.39V1228.3h-2.39zM594.21 1142.2h2.39V1228.3h-2.39zM596.60 1162.0h2.39V1228.3h-2.39zM598.99 1163.5h2.39V1228.3h-2.39zM601.39 1156.4h2.39V1228.3h-2.39zM603.78 1158.8h2.39V1228.3h-2.39zM606.18 1173.9h2.39V1228.3h-2.39zM608.57 1152.3h2.39V1228.3h-2.39zM610.97 1156.0h2.39V1228.3h-2.39zM613.36 1155.1h2.39V1228.3h-2.39zM615.76 1160.1h2.39V1228.3h-2.39zM618.15 1166.1h2.39V1228.3h-2.39zM620.54 1158.2h2.39V1228.3h-2.39zM622.94 1153.2h2.39V1228.3h-2.39zM625.33 1166.6h2.39V1228.3h-2.39zM627.73 1158.3h2.39V1228.3h-2.39zM630.12 1173.5h2.39V1228.3h-2.39zM632.52 1158.6h2.39V1228.3h-2.39zM634.91 1163.1h2.39V1228.3h-2.39zM637.31 1160.2h2.39V1228.3h-2.39zM639.70 1164.1h2.39V1228.3h-2.39zM642.09 1159.9h2.39V1228.3h-2.39zM644.49 1157.3h2.39V1228.3h-2.39zM646.88 1150.9h2.39V1228.3h-2.39zM649.28 1155.0h2.39V1228.3h-2.39zM651.67 1153.8h2.39V1228.3h-2.39zM654.07 1162.1h2.39V1228.3h-2.39zM656.46 1161.6h2.39V1228.3h-2.39zM658.86 1158.0h2.39V1228.3h-2.39zM661.25 1173.3h2.39V1228.3h-2.39zM663.64 1167.3h2.39V1228.3h-2.39zM666.04 1166.8h2.39V1228.3h-2.39zM668.43 1173.9h2.39V1228.3h-2.39zM670.83 1163.0h2.39V1228.3h-2.39zM673.22 1164.7h2.39V1228.3h-2.39zM675.62 1152.6h2.39V1228.3h-2.39zM678.01 1171.3h2.39V1228.3h-2.39zM680.41 1163.6h2.39V1228.3h-2.39zM682.80 1160.6h2.39V1228.3h-2.39zM685.19 1158.2h2.39V1228.3h-2.39zM687.59 1156.2h2.39V1228.3h-2.39zM689.98 1171.6h2.39V1228.3h-2.39zM692.38 1162.6h2.39V1228.3h-2.39zM694.77 1166.5h2.39V1228.3h-2.39zM697.17 1160.2h2.39V1228.3h-2.39zM699.56 1162.4h2.39V1228.3h-2.39zM701.96 1149.2h2.39V1228.3h-2.39zM704.35 1164.8h2.39V1228.3h-2.39zM706.74 1171.5h2.39V1228.3h-2.39zM709.14 1165.1h2.39V1228.3h-2.39zM711.53 1156.0h2.39V1228.3h-2.39zM713.93 1157.9h2.39V1228.3h-2.39zM716.32 1158.0h2.39V1228.3h-2.39zM718.72 1162.8h2.39V1228.3h-2.39zM721.11 1167.0h2.39V1228.3h-2.39zM723.51 1164.0h2.39V1228.3h-2.39zM725.90 1169.6h2.39V1228.3h-2.39zM728.29 1153.5h2.39V1228.3h-2.39zM730.69 1154.6h2.39V1228.3h-2.39zM735.48 1158.4h2.39V1228.3h-2.39zM737.87 1161.4h2.39V1228.3h-2.39zM740.27 1145.6h2.39V1228.3h-2.39zM742.66 1154.4h2.39V1228.3h-2.39zM745.06 1153.0h2.39V1228.3h-2.39zM747.45 1168.4h2.39V1228.3h-2.39zM749.84 1155.5h2.39V1228.3h-2.39zM752.24 1169.5h2.39V1228.3h-2.39zM754.63 1166.4h2.39V1228.3h-2.39zM757.03 1172.4h2.39V1228.3h-2.39zM759.42 1160.9h2.39V1228.3h-2.39zM761.82 1170.2h2.39V1228.3h-2.39zM764.21 1157.5h2.39V1228.3h-2.39zM766.61 1152.8h2.39V1228.3h-2.39z" fill="#a7c6e0"/><path d="M79.40 1166.2h0.9V1228.3h-0.9zM81.79 1152.7h0.9V1228.3h-0.9zM84.19 1162.2h0.9V1228.3h-0.9zM86.58 1171.2h0.9V1228.3h-0.9zM88.98 1163.0h0.9V1228.3h-0.9zM91.37 1161.0h0.9V1228.3h-0.9zM93.77 1163.3h0.9V1228.3h-0.9zM96.16 1153.2h0.9V1228.3h-0.9zM98.56 1163.7h0.9V1228.3h-0.9zM100.95 1174.6h0.9V1228.3h-0.9zM103.34 1166.0h0.9V1228.3h-0.9zM105.74 1160.7h0.9V1228.3h-0.9zM108.13 1167.0h0.9V1228.3h-0.9zM110.53 1155.2h0.9V1228.3h-0.9zM112.92 1159.7h0.9V1228.3h-0.9zM117.71 1168.3h0.9V1228.3h-0.9zM120.11 1167.4h0.9V1228.3h-0.9zM122.50 1151.7h0.9V1228.3h-0.9zM124.89 1154.5h0.9V1228.3h-0.9zM127.29 1154.0h0.9V1228.3h-0.9zM129.68 1171.0h0.9V1228.3h-0.9zM132.08 1163.3h0.9V1228.3h-0.9zM134.47 1161.7h0.9V1228.3h-0.9zM136.87 1161.4h0.9V1228.3h-0.9zM139.26 1167.4h0.9V1228.3h-0.9zM141.66 1169.1h0.9V1228.3h-0.9zM144.05 1156.0h0.9V1228.3h-0.9zM146.44 1169.3h0.9V1228.3h-0.9zM148.84 1151.0h0.9V1228.3h-0.9zM151.23 1162.7h0.9V1228.3h-0.9zM153.63 1164.0h0.9V1228.3h-0.9zM156.02 1166.2h0.9V1228.3h-0.9zM158.42 1159.1h0.9V1228.3h-0.9zM160.81 1162.9h0.9V1228.3h-0.9zM163.21 1156.0h0.9V1228.3h-0.9zM165.60 1156.1h0.9V1228.3h-0.9zM167.99 1161.0h0.9V1228.3h-0.9zM170.39 1159.6h0.9V1228.3h-0.9zM172.78 1166.9h0.9V1228.3h-0.9zM175.18 1163.5h0.9V1228.3h-0.9zM177.57 1167.0h0.9V1228.3h-0.9zM179.97 1156.9h0.9V1228.3h-0.9zM182.36 1156.1h0.9V1228.3h-0.9zM184.76 1157.1h0.9V1228.3h-0.9zM187.15 1170.1h0.9V1228.3h-0.9zM189.54 1160.4h0.9V1228.3h-0.9zM191.94 1148.1h0.9V1228.3h-0.9zM194.33 1155.6h0.9V1228.3h-0.9zM196.73 1150.5h0.9V1228.3h-0.9zM199.12 1156.5h0.9V1228.3h-0.9zM201.52 1169.2h0.9V1228.3h-0.9zM203.91 1148.5h0.9V1228.3h-0.9zM206.31 1167.9h0.9V1228.3h-0.9zM208.70 1160.9h0.9V1228.3h-0.9zM211.09 1155.6h0.9V1228.3h-0.9zM213.49 1156.0h0.9V1228.3h-0.9zM215.88 1160.4h0.9V1228.3h-0.9zM218.28 1145.1h0.9V1228.3h-0.9zM220.67 1154.4h0.9V1228.3h-0.9zM223.07 1165.5h0.9V1228.3h-0.9zM225.46 1157.3h0.9V1228.3h-0.9zM227.86 1165.1h0.9V1228.3h-0.9zM230.25 1171.6h0.9V1228.3h-0.9zM232.64 1160.6h0.9V1228.3h-0.9zM235.04 1161.3h0.9V1228.3h-0.9zM237.43 1153.8h0.9V1228.3h-0.9zM239.83 1157.3h0.9V1228.3h-0.9zM242.22 1175.6h0.9V1228.3h-0.9zM244.62 1162.0h0.9V1228.3h-0.9zM247.01 1164.4h0.9V1228.3h-0.9zM249.41 1161.5h0.9V1228.3h-0.9zM251.80 1157.1h0.9V1228.3h-0.9zM254.19 1163.0h0.9V1228.3h-0.9zM256.59 1155.3h0.9V1228.3h-0.9zM258.98 1152.1h0.9V1228.3h-0.9zM261.38 1164.2h0.9V1228.3h-0.9zM263.77 1166.1h0.9V1228.3h-0.9zM266.17 1151.1h0.9V1228.3h-0.9zM268.56 1150.7h0.9V1228.3h-0.9zM270.96 1164.8h0.9V1228.3h-0.9zM273.35 1167.6h0.9V1228.3h-0.9zM275.74 1161.3h0.9V1228.3h-0.9zM278.14 1159.3h0.9V1228.3h-0.9zM280.53 1164.1h0.9V1228.3h-0.9zM282.93 1165.6h0.9V1228.3h-0.9zM285.32 1158.7h0.9V1228.3h-0.9zM287.72 1156.0h0.9V1228.3h-0.9zM290.11 1166.3h0.9V1228.3h-0.9zM292.51 1156.7h0.9V1228.3h-0.9zM294.90 1164.6h0.9V1228.3h-0.9zM297.29 1153.2h0.9V1228.3h-0.9zM299.69 1152.7h0.9V1228.3h-0.9zM302.08 1154.1h0.9V1228.3h-0.9zM304.48 1153.7h0.9V1228.3h-0.9zM306.87 1159.8h0.9V1228.3h-0.9zM309.27 1172.1h0.9V1228.3h-0.9zM311.66 1170.8h0.9V1228.3h-0.9zM314.06 1165.3h0.9V1228.3h-0.9zM316.45 1151.9h0.9V1228.3h-0.9zM318.84 1161.7h0.9V1228.3h-0.9zM321.24 1160.2h0.9V1228.3h-0.9zM323.63 1148.2h0.9V1228.3h-0.9zM326.03 1163.9h0.9V1228.3h-0.9zM328.42 1151.7h0.9V1228.3h-0.9zM330.82 1163.1h0.9V1228.3h-0.9zM333.21 1169.0h0.9V1228.3h-0.9zM335.61 1156.9h0.9V1228.3h-0.9zM338.00 1152.9h0.9V1228.3h-0.9zM340.39 1156.4h0.9V1228.3h-0.9zM342.79 1164.6h0.9V1228.3h-0.9zM345.18 1156.9h0.9V1228.3h-0.9zM347.58 1157.4h0.9V1228.3h-0.9zM349.97 1165.1h0.9V1228.3h-0.9zM352.37 1173.1h0.9V1228.3h-0.9zM354.76 1160.6h0.9V1228.3h-0.9zM357.16 1163.9h0.9V1228.3h-0.9zM359.55 1156.9h0.9V1228.3h-0.9zM361.94 1165.0h0.9V1228.3h-0.9zM364.34 1167.0h0.9V1228.3h-0.9zM366.73 1159.4h0.9V1228.3h-0.9zM369.13 1162.0h0.9V1228.3h-0.9zM371.52 1165.0h0.9V1228.3h-0.9zM373.92 1163.2h0.9V1228.3h-0.9zM376.31 1164.9h0.9V1228.3h-0.9zM378.71 1150.9h0.9V1228.3h-0.9zM381.10 1159.7h0.9V1228.3h-0.9zM383.49 1164.3h0.9V1228.3h-0.9zM385.89 1162.7h0.9V1228.3h-0.9zM388.28 1164.9h0.9V1228.3h-0.9zM390.68 1156.6h0.9V1228.3h-0.9zM393.07 1155.4h0.9V1228.3h-0.9zM395.47 1152.9h0.9V1228.3h-0.9zM397.86 1167.0h0.9V1228.3h-0.9zM400.26 1157.5h0.9V1228.3h-0.9zM402.65 1160.3h0.9V1228.3h-0.9zM405.04 1158.0h0.9V1228.3h-0.9zM407.44 1155.4h0.9V1228.3h-0.9zM409.83 1158.0h0.9V1228.3h-0.9zM412.23 1165.7h0.9V1228.3h-0.9zM414.62 1166.6h0.9V1228.3h-0.9zM417.02 1171.5h0.9V1228.3h-0.9zM419.41 1179.2h0.9V1228.3h-0.9zM421.81 1163.8h0.9V1228.3h-0.9zM426.59 1163.2h0.9V1228.3h-0.9zM428.99 1169.2h0.9V1228.3h-0.9zM431.38 1154.9h0.9V1228.3h-0.9zM433.78 1154.7h0.9V1228.3h-0.9zM436.17 1168.2h0.9V1228.3h-0.9zM438.57 1156.8h0.9V1228.3h-0.9zM440.96 1168.0h0.9V1228.3h-0.9zM443.36 1169.9h0.9V1228.3h-0.9zM445.75 1159.6h0.9V1228.3h-0.9zM448.14 1157.7h0.9V1228.3h-0.9zM450.54 1158.5h0.9V1228.3h-0.9zM452.93 1167.2h0.9V1228.3h-0.9zM455.33 1160.2h0.9V1228.3h-0.9zM457.72 1153.9h0.9V1228.3h-0.9zM460.12 1163.4h0.9V1228.3h-0.9zM462.51 1159.1h0.9V1228.3h-0.9zM464.91 1158.0h0.9V1228.3h-0.9zM467.30 1154.9h0.9V1228.3h-0.9zM469.69 1157.6h0.9V1228.3h-0.9zM472.09 1162.1h0.9V1228.3h-0.9zM474.48 1147.7h0.9V1228.3h-0.9zM476.88 1161.0h0.9V1228.3h-0.9zM479.27 1163.4h0.9V1228.3h-0.9zM481.67 1160.5h0.9V1228.3h-0.9zM484.06 1168.6h0.9V1228.3h-0.9zM486.46 1162.8h0.9V1228.3h-0.9zM488.85 1162.6h0.9V1228.3h-0.9zM491.24 1171.1h0.9V1228.3h-0.9zM493.64 1160.5h0.9V1228.3h-0.9zM496.03 1159.6h0.9V1228.3h-0.9zM498.43 1150.1h0.9V1228.3h-0.9zM500.82 1163.7h0.9V1228.3h-0.9zM503.22 1161.0h0.9V1228.3h-0.9zM505.61 1160.7h0.9V1228.3h-0.9zM508.01 1168.5h0.9V1228.3h-0.9zM510.40 1169.8h0.9V1228.3h-0.9zM512.79 1170.4h0.9V1228.3h-0.9zM515.19 1171.1h0.9V1228.3h-0.9zM517.58 1164.6h0.9V1228.3h-0.9zM519.98 1162.7h0.9V1228.3h-0.9zM522.37 1178.9h0.9V1228.3h-0.9zM524.77 1165.8h0.9V1228.3h-0.9zM527.16 1171.9h0.9V1228.3h-0.9zM529.56 1163.4h0.9V1228.3h-0.9zM531.95 1152.5h0.9V1228.3h-0.9zM534.34 1150.7h0.9V1228.3h-0.9zM536.74 1169.0h0.9V1228.3h-0.9zM539.13 1170.1h0.9V1228.3h-0.9zM541.53 1142.7h0.9V1228.3h-0.9zM543.92 1158.1h0.9V1228.3h-0.9zM546.32 1160.4h0.9V1228.3h-0.9zM548.71 1152.7h0.9V1228.3h-0.9zM551.11 1157.3h0.9V1228.3h-0.9zM553.50 1156.1h0.9V1228.3h-0.9zM555.89 1164.5h0.9V1228.3h-0.9zM558.29 1161.9h0.9V1228.3h-0.9zM560.68 1175.1h0.9V1228.3h-0.9zM563.08 1159.2h0.9V1228.3h-0.9zM565.47 1168.3h0.9V1228.3h-0.9zM567.87 1160.6h0.9V1228.3h-0.9zM570.26 1163.9h0.9V1228.3h-0.9zM572.66 1159.3h0.9V1228.3h-0.9zM575.05 1168.3h0.9V1228.3h-0.9zM577.44 1166.9h0.9V1228.3h-0.9zM579.84 1158.8h0.9V1228.3h-0.9zM582.23 1159.7h0.9V1228.3h-0.9zM584.63 1160.5h0.9V1228.3h-0.9zM587.02 1156.3h0.9V1228.3h-0.9zM589.42 1159.9h0.9V1228.3h-0.9zM591.81 1154.9h0.9V1228.3h-0.9zM594.21 1142.2h0.9V1228.3h-0.9zM596.60 1162.0h0.9V1228.3h-0.9zM598.99 1163.5h0.9V1228.3h-0.9zM601.39 1156.4h0.9V1228.3h-0.9zM603.78 1158.8h0.9V1228.3h-0.9zM606.18 1173.9h0.9V1228.3h-0.9zM608.57 1152.3h0.9V1228.3h-0.9zM610.97 1156.0h0.9V1228.3h-0.9zM613.36 1155.1h0.9V1228.3h-0.9zM615.76 1160.1h0.9V1228.3h-0.9zM618.15 1166.1h0.9V1228.3h-0.9zM620.54 1158.2h0.9V1228.3h-0.9zM622.94 1153.2h0.9V1228.3h-0.9zM625.33 1166.6h0.9V1228.3h-0.9zM627.73 1158.3h0.9V1228.3h-0.9zM630.12 1173.5h0.9V1228.3h-0.9zM632.52 1158.6h0.9V1228.3h-0.9zM634.91 1163.1h0.9V1228.3h-0.9zM637.31 1160.2h0.9V1228.3h-0.9zM639.70 1164.1h0.9V1228.3h-0.9zM642.09 1159.9h0.9V1228.3h-0.9zM644.49 1157.3h0.9V1228.3h-0.9zM646.88 1150.9h0.9V1228.3h-0.9zM649.28 1155.0h0.9V1228.3h-0.9zM651.67 1153.8h0.9V1228.3h-0.9zM654.07 1162.1h0.9V1228.3h-0.9zM656.46 1161.6h0.9V1228.3h-0.9zM658.86 1158.0h0.9V1228.3h-0.9zM661.25 1173.3h0.9V1228.3h-0.9zM663.64 1167.3h0.9V1228.3h-0.9zM666.04 1166.8h0.9V1228.3h-0.9zM668.43 1173.9h0.9V1228.3h-0.9zM670.83 1163.0h0.9V1228.3h-0.9zM673.22 1164.7h0.9V1228.3h-0.9zM675.62 1152.6h0.9V1228.3h-0.9zM678.01 1171.3h0.9V1228.3h-0.9zM680.41 1163.6h0.9V1228.3h-0.9zM682.80 1160.6h0.9V1228.3h-0.9zM685.19 1158.2h0.9V1228.3h-0.9zM687.59 1156.2h0.9V1228.3h-0.9zM689.98 1171.6h0.9V1228.3h-0.9zM692.38 1162.6h0.9V1228.3h-0.9zM694.77 1166.5h0.9V1228.3h-0.9zM697.17 1160.2h0.9V1228.3h-0.9zM699.56 1162.4h0.9V1228.3h-0.9zM701.96 1149.2h0.9V1228.3h-0.9zM704.35 1164.8h0.9V1228.3h-0.9zM706.74 1171.5h0.9V1228.3h-0.9zM709.14 1165.1h0.9V1228.3h-0.9zM711.53 1156.0h0.9V1228.3h-0.9zM713.93 1157.9h0.9V1228.3h-0.9zM716.32 1158.0h0.9V1228.3h-0.9zM718.72 1162.8h0.9V1228.3h-0.9zM721.11 1167.0h0.9V1228.3h-0.9zM723.51 1164.0h0.9V1228.3h-0.9zM725.90 1169.6h0.9V1228.3h-0.9zM728.29 1153.5h0.9V1228.3h-0.9zM730.69 1154.6h0.9V1228.3h-0.9zM735.48 1158.4h0.9V1228.3h-0.9zM737.87 1161.4h0.9V1228.3h-0.9zM740.27 1145.6h0.9V1228.3h-0.9zM742.66 1154.4h0.9V1228.3h-0.9zM745.06 1153.0h0.9V1228.3h-0.9zM747.45 1168.4h0.9V1228.3h-0.9zM749.84 1155.5h0.9V1228.3h-0.9zM752.24 1169.5h0.9V1228.3h-0.9zM754.63 1166.4h0.9V1228.3h-0.9zM757.03 1172.4h0.9V1228.3h-0.9zM759.42 1160.9h0.9V1228.3h-0.9zM761.82 1170.2h0.9V1228.3h-0.9zM764.21 1157.5h0.9V1228.3h-0.9zM766.61 1152.8h0.9V1228.3h-0.9zM769.00 1228.3h1.1V1228.3h-1.1z" fill="#6a9fcb"/><path d="M79.40 1099.6h2.39V1166.2h-2.39zM81.79 1097.6h2.39V1152.7h-2.39zM84.19 1100.3h2.39V1162.2h-2.39zM86.58 1114.2h2.39V1171.2h-2.39zM88.98 1101.7h2.39V1163.0h-2.39zM91.37 1104.7h2.39V1161.0h-2.39zM93.77 1094.7h2.39V1163.3h-2.39zM96.16 1088.6h2.39V1153.2h-2.39zM98.56 1094.0h2.39V1163.7h-2.39zM100.95 1116.2h2.39V1174.6h-2.39zM103.34 1101.3h2.39V1166.0h-2.39zM105.74 1091.6h2.39V1160.7h-2.39zM108.13 1103.5h2.39V1167.0h-2.39zM110.53 1089.8h2.39V1155.2h-2.39zM112.92 1094.1h2.39V1159.7h-2.39zM117.71 1102.8h2.39V1168.3h-2.39zM120.11 1107.0h2.39V1167.4h-2.39zM122.50 1089.3h2.39V1151.7h-2.39zM124.89 1092.5h2.39V1154.5h-2.39zM127.29 1081.7h2.39V1154.0h-2.39zM129.68 1106.3h2.39V1171.0h-2.39zM132.08 1102.4h2.39V1163.3h-2.39zM134.47 1096.7h2.39V1161.7h-2.39zM136.87 1092.9h2.39V1161.4h-2.39zM139.26 1110.9h2.39V1167.4h-2.39zM141.66 1110.3h2.39V1169.1h-2.39zM144.05 1096.2h2.39V1156.0h-2.39zM146.44 1101.6h2.39V1169.3h-2.39zM148.84 1084.9h2.39V1151.0h-2.39zM151.23 1104.4h2.39V1162.7h-2.39zM153.63 1094.7h2.39V1164.0h-2.39zM156.02 1100.9h2.39V1166.2h-2.39zM158.42 1088.6h2.39V1159.1h-2.39zM160.81 1110.1h2.39V1162.9h-2.39zM163.21 1081.3h2.39V1156.0h-2.39zM165.60 1087.3h2.39V1156.1h-2.39zM167.99 1080.0h2.39V1161.0h-2.39zM170.39 1091.3h2.39V1159.6h-2.39zM172.78 1100.2h2.39V1166.9h-2.39zM175.18 1098.6h2.39V1163.5h-2.39zM177.57 1096.5h2.39V1167.0h-2.39zM179.97 1082.4h2.39V1156.9h-2.39zM182.36 1082.6h2.39V1156.1h-2.39zM184.76 1080.5h2.39V1157.1h-2.39zM187.15 1102.7h2.39V1170.1h-2.39zM189.54 1090.1h2.39V1160.4h-2.39zM191.94 1077.3h2.39V1148.1h-2.39zM194.33 1077.8h2.39V1155.6h-2.39zM196.73 1082.3h2.39V1150.5h-2.39zM199.12 1086.0h2.39V1156.5h-2.39zM201.52 1098.9h2.39V1169.2h-2.39zM203.91 1082.6h2.39V1148.5h-2.39zM206.31 1105.2h2.39V1167.9h-2.39zM208.70 1096.6h2.39V1160.9h-2.39zM211.09 1092.7h2.39V1155.6h-2.39zM213.49 1090.3h2.39V1156.0h-2.39zM215.88 1103.6h2.39V1160.4h-2.39zM218.28 1075.7h2.39V1145.1h-2.39zM220.67 1092.1h2.39V1154.4h-2.39zM223.07 1096.6h2.39V1165.5h-2.39zM225.46 1086.7h2.39V1157.3h-2.39zM227.86 1102.6h2.39V1165.1h-2.39zM230.25 1102.0h2.39V1171.6h-2.39zM232.64 1093.3h2.39V1160.6h-2.39zM235.04 1099.5h2.39V1161.3h-2.39zM237.43 1091.3h2.39V1153.8h-2.39zM239.83 1096.2h2.39V1157.3h-2.39zM242.22 1111.0h2.39V1175.6h-2.39zM244.62 1095.4h2.39V1162.0h-2.39zM247.01 1094.9h2.39V1164.4h-2.39zM249.41 1091.1h2.39V1161.5h-2.39zM251.80 1099.5h2.39V1157.1h-2.39zM254.19 1100.8h2.39V1163.0h-2.39zM256.59 1092.5h2.39V1155.3h-2.39zM258.98 1079.3h2.39V1152.1h-2.39zM261.38 1096.6h2.39V1164.2h-2.39zM263.77 1094.1h2.39V1166.1h-2.39zM266.17 1079.8h2.39V1151.1h-2.39zM268.56 1078.8h2.39V1150.7h-2.39zM270.96 1091.3h2.39V1164.8h-2.39zM273.35 1100.8h2.39V1167.6h-2.39zM275.74 1094.4h2.39V1161.3h-2.39zM278.14 1096.0h2.39V1159.3h-2.39zM280.53 1107.9h2.39V1164.1h-2.39zM282.93 1100.0h2.39V1165.6h-2.39zM285.32 1092.8h2.39V1158.7h-2.39zM287.72 1091.7h2.39V1156.0h-2.39zM290.11 1098.9h2.39V1166.3h-2.39zM292.51 1092.4h2.39V1156.7h-2.39zM294.90 1107.0h2.39V1164.6h-2.39zM297.29 1088.6h2.39V1153.2h-2.39zM299.69 1090.6h2.39V1152.7h-2.39zM302.08 1084.2h2.39V1154.1h-2.39zM304.48 1089.1h2.39V1153.7h-2.39zM306.87 1088.9h2.39V1159.8h-2.39zM309.27 1109.2h2.39V1172.1h-2.39zM311.66 1110.4h2.39V1170.8h-2.39zM314.06 1093.3h2.39V1165.3h-2.39zM316.45 1080.2h2.39V1151.9h-2.39zM318.84 1092.7h2.39V1161.7h-2.39zM321.24 1098.4h2.39V1160.2h-2.39zM323.63 1082.8h2.39V1148.2h-2.39zM326.03 1099.0h2.39V1163.9h-2.39zM328.42 1078.4h2.39V1151.7h-2.39zM330.82 1092.4h2.39V1163.1h-2.39zM333.21 1104.9h2.39V1169.0h-2.39zM335.61 1090.0h2.39V1156.9h-2.39zM338.00 1088.7h2.39V1152.9h-2.39zM340.39 1088.0h2.39V1156.4h-2.39zM342.79 1100.7h2.39V1164.6h-2.39zM345.18 1089.0h2.39V1156.9h-2.39zM347.58 1089.2h2.39V1157.4h-2.39zM349.97 1102.6h2.39V1165.1h-2.39zM352.37 1112.7h2.39V1173.1h-2.39zM354.76 1100.9h2.39V1160.6h-2.39zM357.16 1099.2h2.39V1163.9h-2.39zM359.55 1093.7h2.39V1156.9h-2.39zM361.94 1090.2h2.39V1165.0h-2.39zM364.34 1100.4h2.39V1167.0h-2.39zM366.73 1088.4h2.39V1159.4h-2.39zM369.13 1096.2h2.39V1162.0h-2.39zM371.52 1105.8h2.39V1165.0h-2.39zM373.92 1103.8h2.39V1163.2h-2.39zM376.31 1098.6h2.39V1164.9h-2.39zM378.71 1089.8h2.39V1150.9h-2.39zM381.10 1088.4h2.39V1159.7h-2.39zM383.49 1095.3h2.39V1164.3h-2.39zM385.89 1095.6h2.39V1162.7h-2.39zM388.28 1094.7h2.39V1164.9h-2.39zM390.68 1093.8h2.39V1156.6h-2.39zM393.07 1089.4h2.39V1155.4h-2.39zM395.47 1092.6h2.39V1152.9h-2.39zM397.86 1097.3h2.39V1167.0h-2.39zM400.26 1091.1h2.39V1157.5h-2.39zM402.65 1090.6h2.39V1160.3h-2.39zM405.04 1097.7h2.39V1158.0h-2.39zM407.44 1091.7h2.39V1155.4h-2.39zM409.83 1100.8h2.39V1158.0h-2.39zM412.23 1102.0h2.39V1165.7h-2.39zM414.62 1100.1h2.39V1166.6h-2.39zM417.02 1109.1h2.39V1171.5h-2.39zM419.41 1109.8h2.39V1179.2h-2.39zM421.81 1102.0h2.39V1163.8h-2.39zM426.59 1095.1h2.39V1163.2h-2.39zM428.99 1100.2h2.39V1169.2h-2.39zM431.38 1077.5h2.39V1154.9h-2.39zM433.78 1092.2h2.39V1154.7h-2.39zM436.17 1103.2h2.39V1168.2h-2.39zM438.57 1089.6h2.39V1156.8h-2.39zM440.96 1106.3h2.39V1168.0h-2.39zM443.36 1107.0h2.39V1169.9h-2.39zM445.75 1096.3h2.39V1159.6h-2.39zM448.14 1085.8h2.39V1157.7h-2.39zM450.54 1083.0h2.39V1158.5h-2.39zM452.93 1100.0h2.39V1167.2h-2.39zM455.33 1091.9h2.39V1160.2h-2.39zM457.72 1091.9h2.39V1153.9h-2.39zM460.12 1097.3h2.39V1163.4h-2.39zM462.51 1092.7h2.39V1159.1h-2.39zM464.91 1086.2h2.39V1158.0h-2.39zM467.30 1087.1h2.39V1154.9h-2.39zM469.69 1102.6h2.39V1157.6h-2.39zM472.09 1096.9h2.39V1162.1h-2.39zM474.48 1077.4h2.39V1147.7h-2.39zM476.88 1098.9h2.39V1161.0h-2.39zM479.27 1103.9h2.39V1163.4h-2.39zM481.67 1098.4h2.39V1160.5h-2.39zM484.06 1101.0h2.39V1168.6h-2.39zM486.46 1111.6h2.39V1162.8h-2.39zM488.85 1092.0h2.39V1162.6h-2.39zM491.24 1090.4h2.39V1171.1h-2.39zM493.64 1085.7h2.39V1160.5h-2.39zM496.03 1081.6h2.39V1159.6h-2.39zM498.43 1073.8h2.39V1150.1h-2.39zM500.82 1095.9h2.39V1163.7h-2.39zM503.22 1094.2h2.39V1161.0h-2.39zM505.61 1089.3h2.39V1160.7h-2.39zM508.01 1106.4h2.39V1168.5h-2.39zM510.40 1105.5h2.39V1169.8h-2.39zM512.79 1098.5h2.39V1170.4h-2.39zM515.19 1098.1h2.39V1171.1h-2.39zM517.58 1105.2h2.39V1164.6h-2.39zM519.98 1094.1h2.39V1162.7h-2.39zM522.37 1114.8h2.39V1178.9h-2.39zM524.77 1110.6h2.39V1165.8h-2.39zM527.16 1097.6h2.39V1171.9h-2.39zM529.56 1091.9h2.39V1163.4h-2.39zM531.95 1091.3h2.39V1152.5h-2.39zM534.34 1081.0h2.39V1150.7h-2.39zM536.74 1105.7h2.39V1169.0h-2.39zM539.13 1098.1h2.39V1170.1h-2.39zM541.53 1073.6h2.39V1142.7h-2.39zM543.92 1101.3h2.39V1158.1h-2.39zM546.32 1091.9h2.39V1160.4h-2.39zM548.71 1084.7h2.39V1152.7h-2.39zM551.11 1086.9h2.39V1157.3h-2.39zM553.50 1092.9h2.39V1156.1h-2.39zM555.89 1094.9h2.39V1164.5h-2.39zM558.29 1100.4h2.39V1161.9h-2.39zM560.68 1117.7h2.39V1175.1h-2.39zM563.08 1104.8h2.39V1159.2h-2.39zM565.47 1109.2h2.39V1168.3h-2.39zM567.87 1094.1h2.39V1160.6h-2.39zM570.26 1109.3h2.39V1163.9h-2.39zM572.66 1098.3h2.39V1159.3h-2.39zM575.05 1104.9h2.39V1168.3h-2.39zM577.44 1099.1h2.39V1166.9h-2.39zM579.84 1089.3h2.39V1158.8h-2.39zM582.23 1090.8h2.39V1159.7h-2.39zM584.63 1091.5h2.39V1160.5h-2.39zM587.02 1094.0h2.39V1156.3h-2.39zM589.42 1089.9h2.39V1159.9h-2.39zM591.81 1087.9h2.39V1154.9h-2.39zM594.21 1071.2h2.39V1142.2h-2.39zM596.60 1086.2h2.39V1162.0h-2.39zM598.99 1098.7h2.39V1163.5h-2.39zM601.39 1095.6h2.39V1156.4h-2.39zM603.78 1097.3h2.39V1158.8h-2.39zM606.18 1110.2h2.39V1173.9h-2.39zM608.57 1095.1h2.39V1152.3h-2.39zM610.97 1086.1h2.39V1156.0h-2.39zM613.36 1083.6h2.39V1155.1h-2.39zM615.76 1091.0h2.39V1160.1h-2.39zM618.15 1102.2h2.39V1166.1h-2.39zM620.54 1092.2h2.39V1158.2h-2.39zM622.94 1082.4h2.39V1153.2h-2.39zM625.33 1103.7h2.39V1166.6h-2.39zM627.73 1087.8h2.39V1158.3h-2.39zM630.12 1107.3h2.39V1173.5h-2.39zM632.52 1100.2h2.39V1158.6h-2.39zM634.91 1095.4h2.39V1163.1h-2.39zM637.31 1090.5h2.39V1160.2h-2.39zM639.70 1097.6h2.39V1164.1h-2.39zM642.09 1093.8h2.39V1159.9h-2.39zM644.49 1094.7h2.39V1157.3h-2.39zM646.88 1082.0h2.39V1150.9h-2.39zM649.28 1093.8h2.39V1155.0h-2.39zM651.67 1085.7h2.39V1153.8h-2.39zM654.07 1098.8h2.39V1162.1h-2.39zM656.46 1093.6h2.39V1161.6h-2.39zM658.86 1088.0h2.39V1158.0h-2.39zM661.25 1113.5h2.39V1173.3h-2.39zM663.64 1105.2h2.39V1167.3h-2.39zM666.04 1104.7h2.39V1166.8h-2.39zM668.43 1109.0h2.39V1173.9h-2.39zM670.83 1093.0h2.39V1163.0h-2.39zM673.22 1096.8h2.39V1164.7h-2.39zM675.62 1086.9h2.39V1152.6h-2.39zM678.01 1108.4h2.39V1171.3h-2.39zM680.41 1089.7h2.39V1163.6h-2.39zM682.80 1093.3h2.39V1160.6h-2.39zM685.19 1089.9h2.39V1158.2h-2.39zM687.59 1084.8h2.39V1156.2h-2.39zM689.98 1101.3h2.39V1171.6h-2.39zM692.38 1094.9h2.39V1162.6h-2.39zM694.77 1099.1h2.39V1166.5h-2.39zM697.17 1095.2h2.39V1160.2h-2.39zM699.56 1096.5h2.39V1162.4h-2.39zM701.96 1081.4h2.39V1149.2h-2.39zM704.35 1095.5h2.39V1164.8h-2.39zM706.74 1103.1h2.39V1171.5h-2.39zM709.14 1092.8h2.39V1165.1h-2.39zM711.53 1087.7h2.39V1156.0h-2.39zM713.93 1094.4h2.39V1157.9h-2.39zM716.32 1093.0h2.39V1158.0h-2.39zM718.72 1092.0h2.39V1162.8h-2.39zM721.11 1101.5h2.39V1167.0h-2.39zM723.51 1100.5h2.39V1164.0h-2.39zM725.90 1110.1h2.39V1169.6h-2.39zM728.29 1088.4h2.39V1153.5h-2.39zM730.69 1083.3h2.39V1154.6h-2.39zM735.48 1086.1h2.39V1158.4h-2.39zM737.87 1100.6h2.39V1161.4h-2.39zM740.27 1079.3h2.39V1145.6h-2.39zM742.66 1090.4h2.39V1154.4h-2.39zM745.06 1083.6h2.39V1153.0h-2.39zM747.45 1112.6h2.39V1168.4h-2.39zM749.84 1093.9h2.39V1155.5h-2.39zM752.24 1096.9h2.39V1169.5h-2.39zM754.63 1101.7h2.39V1166.4h-2.39zM757.03 1104.5h2.39V1172.4h-2.39zM759.42 1093.0h2.39V1160.9h-2.39zM761.82 1109.3h2.39V1170.2h-2.39zM764.21 1090.6h2.39V1157.5h-2.39zM766.61 1094.2h2.39V1152.8h-2.39z" fill="#d2e3ef"/><path d="M80.99 1099.6h0.7V1166.2h-0.7zM83.39 1097.6h0.7V1152.7h-0.7zM85.78 1100.3h0.7V1162.2h-0.7zM88.18 1114.2h0.7V1171.2h-0.7zM90.57 1101.7h0.7V1163.0h-0.7zM92.97 1104.7h0.7V1161.0h-0.7zM95.36 1094.7h0.7V1163.3h-0.7zM97.76 1088.6h0.7V1153.2h-0.7zM100.15 1094.0h0.7V1163.7h-0.7zM102.54 1116.2h0.7V1174.6h-0.7zM104.94 1101.3h0.7V1166.0h-0.7zM107.33 1091.6h0.7V1160.7h-0.7zM109.73 1103.5h0.7V1167.0h-0.7zM112.12 1089.8h0.7V1155.2h-0.7zM114.52 1094.1h0.7V1159.7h-0.7zM119.31 1102.8h0.7V1168.3h-0.7zM121.70 1107.0h0.7V1167.4h-0.7zM124.09 1089.3h0.7V1151.7h-0.7zM126.49 1092.5h0.7V1154.5h-0.7zM128.88 1081.7h0.7V1154.0h-0.7zM131.28 1106.3h0.7V1171.0h-0.7zM133.67 1102.4h0.7V1163.3h-0.7zM136.07 1096.7h0.7V1161.7h-0.7zM138.46 1092.9h0.7V1161.4h-0.7zM140.86 1110.9h0.7V1167.4h-0.7zM143.25 1110.3h0.7V1169.1h-0.7zM145.64 1096.2h0.7V1156.0h-0.7zM148.04 1101.6h0.7V1169.3h-0.7zM150.43 1084.9h0.7V1151.0h-0.7zM152.83 1104.4h0.7V1162.7h-0.7zM155.22 1094.7h0.7V1164.0h-0.7zM157.62 1100.9h0.7V1166.2h-0.7zM160.01 1088.6h0.7V1159.1h-0.7zM162.41 1110.1h0.7V1162.9h-0.7zM164.80 1081.3h0.7V1156.0h-0.7zM167.19 1087.3h0.7V1156.1h-0.7zM169.59 1080.0h0.7V1161.0h-0.7zM171.98 1091.3h0.7V1159.6h-0.7zM174.38 1100.2h0.7V1166.9h-0.7zM176.77 1098.6h0.7V1163.5h-0.7zM179.17 1096.5h0.7V1167.0h-0.7zM181.56 1082.4h0.7V1156.9h-0.7zM183.96 1082.6h0.7V1156.1h-0.7zM186.35 1080.5h0.7V1157.1h-0.7zM188.74 1102.7h0.7V1170.1h-0.7zM191.14 1090.1h0.7V1160.4h-0.7zM193.53 1077.3h0.7V1148.1h-0.7zM195.93 1077.8h0.7V1155.6h-0.7zM198.32 1082.3h0.7V1150.5h-0.7zM200.72 1086.0h0.7V1156.5h-0.7zM203.11 1098.9h0.7V1169.2h-0.7zM205.51 1082.6h0.7V1148.5h-0.7zM207.90 1105.2h0.7V1167.9h-0.7zM210.29 1096.6h0.7V1160.9h-0.7zM212.69 1092.7h0.7V1155.6h-0.7zM215.08 1090.3h0.7V1156.0h-0.7zM217.48 1103.6h0.7V1160.4h-0.7zM219.87 1075.7h0.7V1145.1h-0.7zM222.27 1092.1h0.7V1154.4h-0.7zM224.66 1096.6h0.7V1165.5h-0.7zM227.06 1086.7h0.7V1157.3h-0.7zM229.45 1102.6h0.7V1165.1h-0.7zM231.84 1102.0h0.7V1171.6h-0.7zM234.24 1093.3h0.7V1160.6h-0.7zM236.63 1099.5h0.7V1161.3h-0.7zM239.03 1091.3h0.7V1153.8h-0.7zM241.42 1096.2h0.7V1157.3h-0.7zM243.82 1111.0h0.7V1175.6h-0.7zM246.21 1095.4h0.7V1162.0h-0.7zM248.61 1094.9h0.7V1164.4h-0.7zM251.00 1091.1h0.7V1161.5h-0.7zM253.39 1099.5h0.7V1157.1h-0.7zM255.79 1100.8h0.7V1163.0h-0.7zM258.18 1092.5h0.7V1155.3h-0.7zM260.58 1079.3h0.7V1152.1h-0.7zM262.97 1096.6h0.7V1164.2h-0.7zM265.37 1094.1h0.7V1166.1h-0.7zM267.76 1079.8h0.7V1151.1h-0.7zM270.16 1078.8h0.7V1150.7h-0.7zM272.55 1091.3h0.7V1164.8h-0.7zM274.94 1100.8h0.7V1167.6h-0.7zM277.34 1094.4h0.7V1161.3h-0.7zM279.73 1096.0h0.7V1159.3h-0.7zM282.13 1107.9h0.7V1164.1h-0.7zM284.52 1100.0h0.7V1165.6h-0.7zM286.92 1092.8h0.7V1158.7h-0.7zM289.31 1091.7h0.7V1156.0h-0.7zM291.71 1098.9h0.7V1166.3h-0.7zM294.10 1092.4h0.7V1156.7h-0.7zM296.49 1107.0h0.7V1164.6h-0.7zM298.89 1088.6h0.7V1153.2h-0.7zM301.28 1090.6h0.7V1152.7h-0.7zM303.68 1084.2h0.7V1154.1h-0.7zM306.07 1089.1h0.7V1153.7h-0.7zM308.47 1088.9h0.7V1159.8h-0.7zM310.86 1109.2h0.7V1172.1h-0.7zM313.26 1110.4h0.7V1170.8h-0.7zM315.65 1093.3h0.7V1165.3h-0.7zM318.04 1080.2h0.7V1151.9h-0.7zM320.44 1092.7h0.7V1161.7h-0.7zM322.83 1098.4h0.7V1160.2h-0.7zM325.23 1082.8h0.7V1148.2h-0.7zM327.62 1099.0h0.7V1163.9h-0.7zM330.02 1078.4h0.7V1151.7h-0.7zM332.41 1092.4h0.7V1163.1h-0.7zM334.81 1104.9h0.7V1169.0h-0.7zM337.20 1090.0h0.7V1156.9h-0.7zM339.59 1088.7h0.7V1152.9h-0.7zM341.99 1088.0h0.7V1156.4h-0.7zM344.38 1100.7h0.7V1164.6h-0.7zM346.78 1089.0h0.7V1156.9h-0.7zM349.17 1089.2h0.7V1157.4h-0.7zM351.57 1102.6h0.7V1165.1h-0.7zM353.96 1112.7h0.7V1173.1h-0.7zM356.36 1100.9h0.7V1160.6h-0.7zM358.75 1099.2h0.7V1163.9h-0.7zM361.14 1093.7h0.7V1156.9h-0.7zM363.54 1090.2h0.7V1165.0h-0.7zM365.93 1100.4h0.7V1167.0h-0.7zM368.33 1088.4h0.7V1159.4h-0.7zM370.72 1096.2h0.7V1162.0h-0.7zM373.12 1105.8h0.7V1165.0h-0.7zM375.51 1103.8h0.7V1163.2h-0.7zM377.91 1098.6h0.7V1164.9h-0.7zM380.30 1089.8h0.7V1150.9h-0.7zM382.69 1088.4h0.7V1159.7h-0.7zM385.09 1095.3h0.7V1164.3h-0.7zM387.48 1095.6h0.7V1162.7h-0.7zM389.88 1094.7h0.7V1164.9h-0.7zM392.27 1093.8h0.7V1156.6h-0.7zM394.67 1089.4h0.7V1155.4h-0.7zM397.06 1092.6h0.7V1152.9h-0.7zM399.46 1097.3h0.7V1167.0h-0.7zM401.85 1091.1h0.7V1157.5h-0.7zM404.24 1090.6h0.7V1160.3h-0.7zM406.64 1097.7h0.7V1158.0h-0.7zM409.03 1091.7h0.7V1155.4h-0.7zM411.43 1100.8h0.7V1158.0h-0.7zM413.82 1102.0h0.7V1165.7h-0.7zM416.22 1100.1h0.7V1166.6h-0.7zM418.61 1109.1h0.7V1171.5h-0.7zM421.01 1109.8h0.7V1179.2h-0.7zM423.40 1102.0h0.7V1163.8h-0.7zM428.19 1095.1h0.7V1163.2h-0.7zM430.58 1100.2h0.7V1169.2h-0.7zM432.98 1077.5h0.7V1154.9h-0.7zM435.37 1092.2h0.7V1154.7h-0.7zM437.77 1103.2h0.7V1168.2h-0.7zM440.16 1089.6h0.7V1156.8h-0.7zM442.56 1106.3h0.7V1168.0h-0.7zM444.95 1107.0h0.7V1169.9h-0.7zM447.34 1096.3h0.7V1159.6h-0.7zM449.74 1085.8h0.7V1157.7h-0.7zM452.13 1083.0h0.7V1158.5h-0.7zM454.53 1100.0h0.7V1167.2h-0.7zM456.92 1091.9h0.7V1160.2h-0.7zM459.32 1091.9h0.7V1153.9h-0.7zM461.71 1097.3h0.7V1163.4h-0.7zM464.11 1092.7h0.7V1159.1h-0.7zM466.50 1086.2h0.7V1158.0h-0.7zM468.89 1087.1h0.7V1154.9h-0.7zM471.29 1102.6h0.7V1157.6h-0.7zM473.68 1096.9h0.7V1162.1h-0.7zM476.08 1077.4h0.7V1147.7h-0.7zM478.47 1098.9h0.7V1161.0h-0.7zM480.87 1103.9h0.7V1163.4h-0.7zM483.26 1098.4h0.7V1160.5h-0.7zM485.66 1101.0h0.7V1168.6h-0.7zM488.05 1111.6h0.7V1162.8h-0.7zM490.44 1092.0h0.7V1162.6h-0.7zM492.84 1090.4h0.7V1171.1h-0.7zM495.23 1085.7h0.7V1160.5h-0.7zM497.63 1081.6h0.7V1159.6h-0.7zM500.02 1073.8h0.7V1150.1h-0.7zM502.42 1095.9h0.7V1163.7h-0.7zM504.81 1094.2h0.7V1161.0h-0.7zM507.21 1089.3h0.7V1160.7h-0.7zM509.60 1106.4h0.7V1168.5h-0.7zM511.99 1105.5h0.7V1169.8h-0.7zM514.39 1098.5h0.7V1170.4h-0.7zM516.78 1098.1h0.7V1171.1h-0.7zM519.18 1105.2h0.7V1164.6h-0.7zM521.57 1094.1h0.7V1162.7h-0.7zM523.97 1114.8h0.7V1178.9h-0.7zM526.36 1110.6h0.7V1165.8h-0.7zM528.76 1097.6h0.7V1171.9h-0.7zM531.15 1091.9h0.7V1163.4h-0.7zM533.54 1091.3h0.7V1152.5h-0.7zM535.94 1081.0h0.7V1150.7h-0.7zM538.33 1105.7h0.7V1169.0h-0.7zM540.73 1098.1h0.7V1170.1h-0.7zM543.12 1073.6h0.7V1142.7h-0.7zM545.52 1101.3h0.7V1158.1h-0.7zM547.91 1091.9h0.7V1160.4h-0.7zM550.31 1084.7h0.7V1152.7h-0.7zM552.70 1086.9h0.7V1157.3h-0.7zM555.09 1092.9h0.7V1156.1h-0.7zM557.49 1094.9h0.7V1164.5h-0.7zM559.88 1100.4h0.7V1161.9h-0.7zM562.28 1117.7h0.7V1175.1h-0.7zM564.67 1104.8h0.7V1159.2h-0.7zM567.07 1109.2h0.7V1168.3h-0.7zM569.46 1094.1h0.7V1160.6h-0.7zM571.86 1109.3h0.7V1163.9h-0.7zM574.25 1098.3h0.7V1159.3h-0.7zM576.64 1104.9h0.7V1168.3h-0.7zM579.04 1099.1h0.7V1166.9h-0.7zM581.43 1089.3h0.7V1158.8h-0.7zM583.83 1090.8h0.7V1159.7h-0.7zM586.22 1091.5h0.7V1160.5h-0.7zM588.62 1094.0h0.7V1156.3h-0.7zM591.01 1089.9h0.7V1159.9h-0.7zM593.41 1087.9h0.7V1154.9h-0.7zM595.80 1071.2h0.7V1142.2h-0.7zM598.19 1086.2h0.7V1162.0h-0.7zM600.59 1098.7h0.7V1163.5h-0.7zM602.98 1095.6h0.7V1156.4h-0.7zM605.38 1097.3h0.7V1158.8h-0.7zM607.77 1110.2h0.7V1173.9h-0.7zM610.17 1095.1h0.7V1152.3h-0.7zM612.56 1086.1h0.7V1156.0h-0.7zM614.96 1083.6h0.7V1155.1h-0.7zM617.35 1091.0h0.7V1160.1h-0.7zM619.74 1102.2h0.7V1166.1h-0.7zM622.14 1092.2h0.7V1158.2h-0.7zM624.53 1082.4h0.7V1153.2h-0.7zM626.93 1103.7h0.7V1166.6h-0.7zM629.32 1087.8h0.7V1158.3h-0.7zM631.72 1107.3h0.7V1173.5h-0.7zM634.11 1100.2h0.7V1158.6h-0.7zM636.51 1095.4h0.7V1163.1h-0.7zM638.90 1090.5h0.7V1160.2h-0.7zM641.29 1097.6h0.7V1164.1h-0.7zM643.69 1093.8h0.7V1159.9h-0.7zM646.08 1094.7h0.7V1157.3h-0.7zM648.48 1082.0h0.7V1150.9h-0.7zM650.87 1093.8h0.7V1155.0h-0.7zM653.27 1085.7h0.7V1153.8h-0.7zM655.66 1098.8h0.7V1162.1h-0.7zM658.06 1093.6h0.7V1161.6h-0.7zM660.45 1088.0h0.7V1158.0h-0.7zM662.84 1113.5h0.7V1173.3h-0.7zM665.24 1105.2h0.7V1167.3h-0.7zM667.63 1104.7h0.7V1166.8h-0.7zM670.03 1109.0h0.7V1173.9h-0.7zM672.42 1093.0h0.7V1163.0h-0.7zM674.82 1096.8h0.7V1164.7h-0.7zM677.21 1086.9h0.7V1152.6h-0.7zM679.61 1108.4h0.7V1171.3h-0.7zM682.00 1089.7h0.7V1163.6h-0.7zM684.39 1093.3h0.7V1160.6h-0.7zM686.79 1089.9h0.7V1158.2h-0.7zM689.18 1084.8h0.7V1156.2h-0.7zM691.58 1101.3h0.7V1171.6h-0.7zM693.97 1094.9h0.7V1162.6h-0.7zM696.37 1099.1h0.7V1166.5h-0.7zM698.76 1095.2h0.7V1160.2h-0.7zM701.16 1096.5h0.7V1162.4h-0.7zM703.55 1081.4h0.7V1149.2h-0.7zM705.94 1095.5h0.7V1164.8h-0.7zM708.34 1103.1h0.7V1171.5h-0.7zM710.73 1092.8h0.7V1165.1h-0.7zM713.13 1087.7h0.7V1156.0h-0.7zM715.52 1094.4h0.7V1157.9h-0.7zM717.92 1093.0h0.7V1158.0h-0.7zM720.31 1092.0h0.7V1162.8h-0.7zM722.71 1101.5h0.7V1167.0h-0.7zM725.10 1100.5h0.7V1164.0h-0.7zM727.49 1110.1h0.7V1169.6h-0.7zM729.89 1088.4h0.7V1153.5h-0.7zM732.28 1083.3h0.7V1154.6h-0.7zM737.07 1086.1h0.7V1158.4h-0.7zM739.47 1100.6h0.7V1161.4h-0.7zM741.86 1079.3h0.7V1145.6h-0.7zM744.26 1090.4h0.7V1154.4h-0.7zM746.65 1083.6h0.7V1153.0h-0.7zM749.04 1112.6h0.7V1168.4h-0.7zM751.44 1093.9h0.7V1155.5h-0.7zM753.83 1096.9h0.7V1169.5h-0.7zM756.23 1101.7h0.7V1166.4h-0.7zM758.62 1104.5h0.7V1172.4h-0.7zM761.02 1093.0h0.7V1160.9h-0.7zM763.41 1109.3h0.7V1170.2h-0.7zM765.81 1090.6h0.7V1157.5h-0.7zM768.20 1094.2h0.7V1152.8h-0.7zM769.00 1115.6h1.1V1228.3h-1.1z" fill="#e6f0f7"/><path d="M79.40 1024.4h2.39V1099.6h-2.39zM81.79 1023.9h2.39V1097.6h-2.39zM84.19 1037.1h2.39V1100.3h-2.39zM86.58 1021.5h2.39V1114.2h-2.39zM88.98 1054.2h2.39V1101.7h-2.39zM91.37 1044.2h2.39V1104.7h-2.39zM93.77 1026.5h2.39V1094.7h-2.39zM96.16 1014.6h2.39V1088.6h-2.39zM98.56 1013.1h2.39V1094.0h-2.39zM100.95 1051.2h2.39V1116.2h-2.39zM103.34 1016.6h2.39V1101.3h-2.39zM105.74 1017.8h2.39V1091.6h-2.39zM108.13 1042.6h2.39V1103.5h-2.39zM110.53 1002.7h2.39V1089.8h-2.39zM112.92 1029.0h2.39V1094.1h-2.39zM117.71 1042.3h2.39V1102.8h-2.39zM120.11 1036.0h2.39V1107.0h-2.39zM122.50 1028.8h2.39V1089.3h-2.39zM124.89 1032.3h2.39V1092.5h-2.39zM127.29 1024.3h2.39V1081.7h-2.39zM129.68 1046.7h2.39V1106.3h-2.39zM132.08 1020.8h2.39V1102.4h-2.39zM134.47 1026.6h2.39V1096.7h-2.39zM136.87 1018.3h2.39V1092.9h-2.39zM139.26 1052.9h2.39V1110.9h-2.39zM141.66 1034.2h2.39V1110.3h-2.39zM144.05 1037.7h2.39V1096.2h-2.39zM146.44 1040.5h2.39V1101.6h-2.39zM148.84 999.6h2.39V1084.9h-2.39zM151.23 1030.1h2.39V1104.4h-2.39zM153.63 1029.1h2.39V1094.7h-2.39zM156.02 1030.8h2.39V1100.9h-2.39zM158.42 1033.9h2.39V1088.6h-2.39zM160.81 1037.6h2.39V1110.1h-2.39zM163.21 1016.2h2.39V1081.3h-2.39zM165.60 1018.8h2.39V1087.3h-2.39zM167.99 1027.7h2.39V1080.0h-2.39zM170.39 1008.7h2.39V1091.3h-2.39zM172.78 1013.9h2.39V1100.2h-2.39zM175.18 1030.2h2.39V1098.6h-2.39zM177.57 1036.4h2.39V1096.5h-2.39zM179.97 1008.2h2.39V1082.4h-2.39zM182.36 985.3h2.39V1082.6h-2.39zM184.76 1012.4h2.39V1080.5h-2.39zM187.15 1033.2h2.39V1102.7h-2.39zM189.54 997.8h2.39V1090.1h-2.39zM191.94 985.3h2.39V1077.3h-2.39zM194.33 1005.6h2.39V1077.8h-2.39zM196.73 1027.7h2.39V1082.3h-2.39zM199.12 1016.9h2.39V1086.0h-2.39zM201.52 1022.8h2.39V1098.9h-2.39zM203.91 1004.7h2.39V1082.6h-2.39zM206.31 1046.6h2.39V1105.2h-2.39zM208.70 1032.1h2.39V1096.6h-2.39zM211.09 1031.2h2.39V1092.7h-2.39zM213.49 1022.7h2.39V1090.3h-2.39zM215.88 1019.7h2.39V1103.6h-2.39zM218.28 989.4h2.39V1075.7h-2.39zM220.67 1037.0h2.39V1092.1h-2.39zM223.07 1021.3h2.39V1096.6h-2.39zM225.46 1016.6h2.39V1086.7h-2.39zM227.86 1033.0h2.39V1102.6h-2.39zM230.25 1041.8h2.39V1102.0h-2.39zM232.64 1010.1h2.39V1093.3h-2.39zM235.04 1028.9h2.39V1099.5h-2.39zM237.43 1016.2h2.39V1091.3h-2.39zM239.83 1010.8h2.39V1096.2h-2.39zM242.22 1040.2h2.39V1111.0h-2.39zM244.62 1019.0h2.39V1095.4h-2.39zM247.01 1027.0h2.39V1094.9h-2.39zM249.41 1036.5h2.39V1091.1h-2.39zM251.80 1018.1h2.39V1099.5h-2.39zM254.19 1027.6h2.39V1100.8h-2.39zM256.59 1002.0h2.39V1092.5h-2.39zM258.98 994.9h2.39V1079.3h-2.39zM261.38 1028.0h2.39V1096.6h-2.39zM263.77 1019.4h2.39V1094.1h-2.39zM266.17 985.3h2.39V1079.8h-2.39zM268.56 985.3h2.39V1078.8h-2.39zM270.96 1026.9h2.39V1091.3h-2.39zM273.35 1033.7h2.39V1100.8h-2.39zM275.74 1033.6h2.39V1094.4h-2.39zM278.14 1048.1h2.39V1096.0h-2.39zM280.53 1051.1h2.39V1107.9h-2.39zM282.93 1051.7h2.39V1100.0h-2.39zM285.32 1038.9h2.39V1092.8h-2.39zM287.72 1038.0h2.39V1091.7h-2.39zM290.11 1038.5h2.39V1098.9h-2.39zM292.51 1036.2h2.39V1092.4h-2.39zM294.90 1053.6h2.39V1107.0h-2.39zM297.29 1027.7h2.39V1088.6h-2.39zM299.69 1036.9h2.39V1090.6h-2.39zM302.08 1005.2h2.39V1084.2h-2.39zM304.48 1025.4h2.39V1089.1h-2.39zM306.87 1021.1h2.39V1088.9h-2.39zM309.27 1026.7h2.39V1109.2h-2.39zM311.66 1033.9h2.39V1110.4h-2.39zM314.06 1015.5h2.39V1093.3h-2.39zM316.45 987.2h2.39V1080.2h-2.39zM318.84 1025.9h2.39V1092.7h-2.39zM321.24 1039.2h2.39V1098.4h-2.39zM323.63 1012.8h2.39V1082.8h-2.39zM326.03 1032.4h2.39V1099.0h-2.39zM328.42 1016.0h2.39V1078.4h-2.39zM330.82 1028.6h2.39V1092.4h-2.39zM333.21 1021.4h2.39V1104.9h-2.39zM335.61 1027.8h2.39V1090.0h-2.39zM338.00 1021.3h2.39V1088.7h-2.39zM340.39 1002.0h2.39V1088.0h-2.39zM342.79 1033.5h2.39V1100.7h-2.39zM345.18 1026.7h2.39V1089.0h-2.39zM347.58 1011.5h2.39V1089.2h-2.39zM349.97 1040.9h2.39V1102.6h-2.39zM352.37 1044.7h2.39V1112.7h-2.39zM354.76 1052.3h2.39V1100.9h-2.39zM357.16 1022.0h2.39V1099.2h-2.39zM359.55 1032.3h2.39V1093.7h-2.39zM361.94 1026.2h2.39V1090.2h-2.39zM364.34 1038.7h2.39V1100.4h-2.39zM366.73 1008.0h2.39V1088.4h-2.39zM369.13 1009.5h2.39V1096.2h-2.39zM371.52 1021.8h2.39V1105.8h-2.39zM373.92 1034.2h2.39V1103.8h-2.39zM376.31 1035.0h2.39V1098.6h-2.39zM378.71 1002.5h2.39V1089.8h-2.39zM381.10 1021.1h2.39V1088.4h-2.39zM383.49 1022.2h2.39V1095.3h-2.39zM385.89 1015.9h2.39V1095.6h-2.39zM388.28 1035.3h2.39V1094.7h-2.39zM390.68 1025.3h2.39V1093.8h-2.39zM393.07 1012.3h2.39V1089.4h-2.39zM395.47 1042.0h2.39V1092.6h-2.39zM397.86 1016.7h2.39V1097.3h-2.39zM400.26 1031.4h2.39V1091.1h-2.39zM402.65 1003.1h2.39V1090.6h-2.39zM405.04 1026.9h2.39V1097.7h-2.39zM407.44 1027.6h2.39V1091.7h-2.39zM409.83 1037.2h2.39V1100.8h-2.39zM412.23 1028.4h2.39V1102.0h-2.39zM414.62 1030.7h2.39V1100.1h-2.39zM417.02 1064.0h2.39V1109.1h-2.39zM419.41 1052.7h2.39V1109.8h-2.39zM421.81 1050.5h2.39V1102.0h-2.39zM426.59 1020.7h2.39V1095.1h-2.39zM428.99 1016.7h2.39V1100.2h-2.39zM431.38 987.0h2.39V1077.5h-2.39zM433.78 1029.9h2.39V1092.2h-2.39zM436.17 1024.7h2.39V1103.2h-2.39zM438.57 1041.3h2.39V1089.6h-2.39zM440.96 1034.6h2.39V1106.3h-2.39zM443.36 1041.1h2.39V1107.0h-2.39zM445.75 1014.8h2.39V1096.3h-2.39zM448.14 1022.7h2.39V1085.8h-2.39zM450.54 1007.1h2.39V1083.0h-2.39zM452.93 1031.6h2.39V1100.0h-2.39zM455.33 1007.6h2.39V1091.9h-2.39zM457.72 1017.9h2.39V1091.9h-2.39zM460.12 1018.1h2.39V1097.3h-2.39zM462.51 1018.8h2.39V1092.7h-2.39zM464.91 1011.1h2.39V1086.2h-2.39zM467.30 986.2h2.39V1087.1h-2.39zM469.69 1041.9h2.39V1102.6h-2.39zM472.09 1029.4h2.39V1096.9h-2.39zM474.48 992.1h2.39V1077.4h-2.39zM476.88 1033.0h2.39V1098.9h-2.39zM479.27 1032.3h2.39V1103.9h-2.39zM481.67 1048.9h2.39V1098.4h-2.39zM484.06 1033.6h2.39V1101.0h-2.39zM486.46 1055.3h2.39V1111.6h-2.39zM488.85 1022.4h2.39V1092.0h-2.39zM491.24 1030.6h2.39V1090.4h-2.39zM493.64 1014.9h2.39V1085.7h-2.39zM496.03 996.9h2.39V1081.6h-2.39zM498.43 1010.1h2.39V1073.8h-2.39zM500.82 1028.1h2.39V1095.9h-2.39zM503.22 990.7h2.39V1094.2h-2.39zM505.61 1015.6h2.39V1089.3h-2.39zM508.01 1034.9h2.39V1106.4h-2.39zM510.40 1060.0h2.39V1105.5h-2.39zM512.79 1021.1h2.39V1098.5h-2.39zM515.19 1029.4h2.39V1098.1h-2.39zM517.58 1039.6h2.39V1105.2h-2.39zM519.98 1038.6h2.39V1094.1h-2.39zM522.37 1031.8h2.39V1114.8h-2.39zM524.77 1045.2h2.39V1110.6h-2.39zM527.16 1055.8h2.39V1097.6h-2.39zM529.56 1011.1h2.39V1091.9h-2.39zM531.95 1029.3h2.39V1091.3h-2.39zM534.34 1015.5h2.39V1081.0h-2.39zM536.74 1041.4h2.39V1105.7h-2.39zM539.13 1021.8h2.39V1098.1h-2.39zM541.53 1003.5h2.39V1073.6h-2.39zM543.92 1030.5h2.39V1101.3h-2.39zM546.32 1032.5h2.39V1091.9h-2.39zM548.71 1002.0h2.39V1084.7h-2.39zM551.11 1013.9h2.39V1086.9h-2.39zM553.50 1027.1h2.39V1092.9h-2.39zM555.89 1010.0h2.39V1094.9h-2.39zM558.29 1020.9h2.39V1100.4h-2.39zM560.68 1042.7h2.39V1117.7h-2.39zM563.08 1036.3h2.39V1104.8h-2.39zM565.47 1017.8h2.39V1109.2h-2.39zM567.87 1019.2h2.39V1094.1h-2.39zM570.26 1052.6h2.39V1109.3h-2.39zM572.66 1016.2h2.39V1098.3h-2.39zM575.05 1029.5h2.39V1104.9h-2.39zM577.44 1035.6h2.39V1099.1h-2.39zM579.84 1022.2h2.39V1089.3h-2.39zM582.23 1002.2h2.39V1090.8h-2.39zM584.63 1018.9h2.39V1091.5h-2.39zM587.02 1028.1h2.39V1094.0h-2.39zM589.42 1042.7h2.39V1089.9h-2.39zM591.81 1005.7h2.39V1087.9h-2.39zM594.21 997.2h2.39V1071.2h-2.39zM596.60 1024.6h2.39V1086.2h-2.39zM598.99 1012.6h2.39V1098.7h-2.39zM601.39 1023.7h2.39V1095.6h-2.39zM603.78 1003.2h2.39V1097.3h-2.39zM606.18 1045.9h2.39V1110.2h-2.39zM608.57 998.1h2.39V1095.1h-2.39zM610.97 1033.3h2.39V1086.1h-2.39zM613.36 1006.2h2.39V1083.6h-2.39zM615.76 1010.5h2.39V1091.0h-2.39zM618.15 1037.1h2.39V1102.2h-2.39zM620.54 1013.9h2.39V1092.2h-2.39zM622.94 1019.9h2.39V1082.4h-2.39zM625.33 1025.2h2.39V1103.7h-2.39zM627.73 992.3h2.39V1087.8h-2.39zM630.12 1028.2h2.39V1107.3h-2.39zM632.52 1033.5h2.39V1100.2h-2.39zM634.91 1027.3h2.39V1095.4h-2.39zM637.31 1019.4h2.39V1090.5h-2.39zM639.70 1036.1h2.39V1097.6h-2.39zM642.09 1043.6h2.39V1093.8h-2.39zM644.49 1049.4h2.39V1094.7h-2.39zM646.88 1020.9h2.39V1082.0h-2.39zM649.28 1034.7h2.39V1093.8h-2.39zM651.67 1003.0h2.39V1085.7h-2.39zM654.07 1008.9h2.39V1098.8h-2.39zM656.46 1048.3h2.39V1093.6h-2.39zM658.86 1040.6h2.39V1088.0h-2.39zM661.25 1047.0h2.39V1113.5h-2.39zM663.64 1026.3h2.39V1105.2h-2.39zM666.04 1044.8h2.39V1104.7h-2.39zM668.43 1044.2h2.39V1109.0h-2.39zM670.83 1007.1h2.39V1093.0h-2.39zM673.22 1027.7h2.39V1096.8h-2.39zM675.62 1032.8h2.39V1086.9h-2.39zM678.01 1036.6h2.39V1108.4h-2.39zM680.41 1031.8h2.39V1089.7h-2.39zM682.80 1032.6h2.39V1093.3h-2.39zM685.19 1024.6h2.39V1089.9h-2.39zM687.59 1033.4h2.39V1084.8h-2.39zM689.98 1031.5h2.39V1101.3h-2.39zM692.38 1023.3h2.39V1094.9h-2.39zM694.77 1018.5h2.39V1099.1h-2.39zM697.17 1030.0h2.39V1095.2h-2.39zM699.56 1029.1h2.39V1096.5h-2.39zM701.96 1012.5h2.39V1081.4h-2.39zM704.35 1030.6h2.39V1095.5h-2.39zM706.74 1018.0h2.39V1103.1h-2.39zM709.14 1016.6h2.39V1092.8h-2.39zM711.53 1028.3h2.39V1087.7h-2.39zM713.93 1016.8h2.39V1094.4h-2.39zM716.32 1038.0h2.39V1093.0h-2.39zM718.72 1040.6h2.39V1092.0h-2.39zM721.11 1046.9h2.39V1101.5h-2.39zM723.51 1047.0h2.39V1100.5h-2.39zM725.90 1047.1h2.39V1110.1h-2.39zM728.29 1018.3h2.39V1088.4h-2.39zM730.69 1026.2h2.39V1083.3h-2.39zM735.48 1024.9h2.39V1086.1h-2.39zM737.87 1023.9h2.39V1100.6h-2.39zM740.27 1008.1h2.39V1079.3h-2.39zM742.66 1041.0h2.39V1090.4h-2.39zM745.06 999.3h2.39V1083.6h-2.39zM747.45 1040.6h2.39V1112.6h-2.39zM749.84 1034.7h2.39V1093.9h-2.39zM752.24 1020.1h2.39V1096.9h-2.39zM754.63 1026.4h2.39V1101.7h-2.39zM757.03 1041.0h2.39V1104.5h-2.39zM759.42 1027.2h2.39V1093.0h-2.39zM761.82 1059.5h2.39V1109.3h-2.39zM764.21 1014.8h2.39V1090.6h-2.39zM766.61 1007.8h2.39V1094.2h-2.39z" fill="#bddab1"/><path d="M79.40 1024.4h0.9V1099.6h-0.9zM81.79 1023.9h0.9V1097.6h-0.9zM84.19 1037.1h0.9V1100.3h-0.9zM86.58 1021.5h0.9V1114.2h-0.9zM88.98 1054.2h0.9V1101.7h-0.9zM91.37 1044.2h0.9V1104.7h-0.9zM93.77 1026.5h0.9V1094.7h-0.9zM96.16 1014.6h0.9V1088.6h-0.9zM98.56 1013.1h0.9V1094.0h-0.9zM100.95 1051.2h0.9V1116.2h-0.9zM103.34 1016.6h0.9V1101.3h-0.9zM105.74 1017.8h0.9V1091.6h-0.9zM108.13 1042.6h0.9V1103.5h-0.9zM110.53 1002.7h0.9V1089.8h-0.9zM112.92 1029.0h0.9V1094.1h-0.9zM117.71 1042.3h0.9V1102.8h-0.9zM120.11 1036.0h0.9V1107.0h-0.9zM122.50 1028.8h0.9V1089.3h-0.9zM124.89 1032.3h0.9V1092.5h-0.9zM127.29 1024.3h0.9V1081.7h-0.9zM129.68 1046.7h0.9V1106.3h-0.9zM132.08 1020.8h0.9V1102.4h-0.9zM134.47 1026.6h0.9V1096.7h-0.9zM136.87 1018.3h0.9V1092.9h-0.9zM139.26 1052.9h0.9V1110.9h-0.9zM141.66 1034.2h0.9V1110.3h-0.9zM144.05 1037.7h0.9V1096.2h-0.9zM146.44 1040.5h0.9V1101.6h-0.9zM148.84 999.6h0.9V1084.9h-0.9zM151.23 1030.1h0.9V1104.4h-0.9zM153.63 1029.1h0.9V1094.7h-0.9zM156.02 1030.8h0.9V1100.9h-0.9zM158.42 1033.9h0.9V1088.6h-0.9zM160.81 1037.6h0.9V1110.1h-0.9zM163.21 1016.2h0.9V1081.3h-0.9zM165.60 1018.8h0.9V1087.3h-0.9zM167.99 1027.7h0.9V1080.0h-0.9zM170.39 1008.7h0.9V1091.3h-0.9zM172.78 1013.9h0.9V1100.2h-0.9zM175.18 1030.2h0.9V1098.6h-0.9zM177.57 1036.4h0.9V1096.5h-0.9zM179.97 1008.2h0.9V1082.4h-0.9zM182.36 985.3h0.9V1082.6h-0.9zM184.76 1012.4h0.9V1080.5h-0.9zM187.15 1033.2h0.9V1102.7h-0.9zM189.54 997.8h0.9V1090.1h-0.9zM191.94 985.3h0.9V1077.3h-0.9zM194.33 1005.6h0.9V1077.8h-0.9zM196.73 1027.7h0.9V1082.3h-0.9zM199.12 1016.9h0.9V1086.0h-0.9zM201.52 1022.8h0.9V1098.9h-0.9zM203.91 1004.7h0.9V1082.6h-0.9zM206.31 1046.6h0.9V1105.2h-0.9zM208.70 1032.1h0.9V1096.6h-0.9zM211.09 1031.2h0.9V1092.7h-0.9zM213.49 1022.7h0.9V1090.3h-0.9zM215.88 1019.7h0.9V1103.6h-0.9zM218.28 989.4h0.9V1075.7h-0.9zM220.67 1037.0h0.9V1092.1h-0.9zM223.07 1021.3h0.9V1096.6h-0.9zM225.46 1016.6h0.9V1086.7h-0.9zM227.86 1033.0h0.9V1102.6h-0.9zM230.25 1041.8h0.9V1102.0h-0.9zM232.64 1010.1h0.9V1093.3h-0.9zM235.04 1028.9h0.9V1099.5h-0.9zM237.43 1016.2h0.9V1091.3h-0.9zM239.83 1010.8h0.9V1096.2h-0.9zM242.22 1040.2h0.9V1111.0h-0.9zM244.62 1019.0h0.9V1095.4h-0.9zM247.01 1027.0h0.9V1094.9h-0.9zM249.41 1036.5h0.9V1091.1h-0.9zM251.80 1018.1h0.9V1099.5h-0.9zM254.19 1027.6h0.9V1100.8h-0.9zM256.59 1002.0h0.9V1092.5h-0.9zM258.98 994.9h0.9V1079.3h-0.9zM261.38 1028.0h0.9V1096.6h-0.9zM263.77 1019.4h0.9V1094.1h-0.9zM266.17 985.3h0.9V1079.8h-0.9zM268.56 985.3h0.9V1078.8h-0.9zM270.96 1026.9h0.9V1091.3h-0.9zM273.35 1033.7h0.9V1100.8h-0.9zM275.74 1033.6h0.9V1094.4h-0.9zM278.14 1048.1h0.9V1096.0h-0.9zM280.53 1051.1h0.9V1107.9h-0.9zM282.93 1051.7h0.9V1100.0h-0.9zM285.32 1038.9h0.9V1092.8h-0.9zM287.72 1038.0h0.9V1091.7h-0.9zM290.11 1038.5h0.9V1098.9h-0.9zM292.51 1036.2h0.9V1092.4h-0.9zM294.90 1053.6h0.9V1107.0h-0.9zM297.29 1027.7h0.9V1088.6h-0.9zM299.69 1036.9h0.9V1090.6h-0.9zM302.08 1005.2h0.9V1084.2h-0.9zM304.48 1025.4h0.9V1089.1h-0.9zM306.87 1021.1h0.9V1088.9h-0.9zM309.27 1026.7h0.9V1109.2h-0.9zM311.66 1033.9h0.9V1110.4h-0.9zM314.06 1015.5h0.9V1093.3h-0.9zM316.45 987.2h0.9V1080.2h-0.9zM318.84 1025.9h0.9V1092.7h-0.9zM321.24 1039.2h0.9V1098.4h-0.9zM323.63 1012.8h0.9V1082.8h-0.9zM326.03 1032.4h0.9V1099.0h-0.9zM328.42 1016.0h0.9V1078.4h-0.9zM330.82 1028.6h0.9V1092.4h-0.9zM333.21 1021.4h0.9V1104.9h-0.9zM335.61 1027.8h0.9V1090.0h-0.9zM338.00 1021.3h0.9V1088.7h-0.9zM340.39 1002.0h0.9V1088.0h-0.9zM342.79 1033.5h0.9V1100.7h-0.9zM345.18 1026.7h0.9V1089.0h-0.9zM347.58 1011.5h0.9V1089.2h-0.9zM349.97 1040.9h0.9V1102.6h-0.9zM352.37 1044.7h0.9V1112.7h-0.9zM354.76 1052.3h0.9V1100.9h-0.9zM357.16 1022.0h0.9V1099.2h-0.9zM359.55 1032.3h0.9V1093.7h-0.9zM361.94 1026.2h0.9V1090.2h-0.9zM364.34 1038.7h0.9V1100.4h-0.9zM366.73 1008.0h0.9V1088.4h-0.9zM369.13 1009.5h0.9V1096.2h-0.9zM371.52 1021.8h0.9V1105.8h-0.9zM373.92 1034.2h0.9V1103.8h-0.9zM376.31 1035.0h0.9V1098.6h-0.9zM378.71 1002.5h0.9V1089.8h-0.9zM381.10 1021.1h0.9V1088.4h-0.9zM383.49 1022.2h0.9V1095.3h-0.9zM385.89 1015.9h0.9V1095.6h-0.9zM388.28 1035.3h0.9V1094.7h-0.9zM390.68 1025.3h0.9V1093.8h-0.9zM393.07 1012.3h0.9V1089.4h-0.9zM395.47 1042.0h0.9V1092.6h-0.9zM397.86 1016.7h0.9V1097.3h-0.9zM400.26 1031.4h0.9V1091.1h-0.9zM402.65 1003.1h0.9V1090.6h-0.9zM405.04 1026.9h0.9V1097.7h-0.9zM407.44 1027.6h0.9V1091.7h-0.9zM409.83 1037.2h0.9V1100.8h-0.9zM412.23 1028.4h0.9V1102.0h-0.9zM414.62 1030.7h0.9V1100.1h-0.9zM417.02 1064.0h0.9V1109.1h-0.9zM419.41 1052.7h0.9V1109.8h-0.9zM421.81 1050.5h0.9V1102.0h-0.9zM426.59 1020.7h0.9V1095.1h-0.9zM428.99 1016.7h0.9V1100.2h-0.9zM431.38 987.0h0.9V1077.5h-0.9zM433.78 1029.9h0.9V1092.2h-0.9zM436.17 1024.7h0.9V1103.2h-0.9zM438.57 1041.3h0.9V1089.6h-0.9zM440.96 1034.6h0.9V1106.3h-0.9zM443.36 1041.1h0.9V1107.0h-0.9zM445.75 1014.8h0.9V1096.3h-0.9zM448.14 1022.7h0.9V1085.8h-0.9zM450.54 1007.1h0.9V1083.0h-0.9zM452.93 1031.6h0.9V1100.0h-0.9zM455.33 1007.6h0.9V1091.9h-0.9zM457.72 1017.9h0.9V1091.9h-0.9zM460.12 1018.1h0.9V1097.3h-0.9zM462.51 1018.8h0.9V1092.7h-0.9zM464.91 1011.1h0.9V1086.2h-0.9zM467.30 986.2h0.9V1087.1h-0.9zM469.69 1041.9h0.9V1102.6h-0.9zM472.09 1029.4h0.9V1096.9h-0.9zM474.48 992.1h0.9V1077.4h-0.9zM476.88 1033.0h0.9V1098.9h-0.9zM479.27 1032.3h0.9V1103.9h-0.9zM481.67 1048.9h0.9V1098.4h-0.9zM484.06 1033.6h0.9V1101.0h-0.9zM486.46 1055.3h0.9V1111.6h-0.9zM488.85 1022.4h0.9V1092.0h-0.9zM491.24 1030.6h0.9V1090.4h-0.9zM493.64 1014.9h0.9V1085.7h-0.9zM496.03 996.9h0.9V1081.6h-0.9zM498.43 1010.1h0.9V1073.8h-0.9zM500.82 1028.1h0.9V1095.9h-0.9zM503.22 990.7h0.9V1094.2h-0.9zM505.61 1015.6h0.9V1089.3h-0.9zM508.01 1034.9h0.9V1106.4h-0.9zM510.40 1060.0h0.9V1105.5h-0.9zM512.79 1021.1h0.9V1098.5h-0.9zM515.19 1029.4h0.9V1098.1h-0.9zM517.58 1039.6h0.9V1105.2h-0.9zM519.98 1038.6h0.9V1094.1h-0.9zM522.37 1031.8h0.9V1114.8h-0.9zM524.77 1045.2h0.9V1110.6h-0.9zM527.16 1055.8h0.9V1097.6h-0.9zM529.56 1011.1h0.9V1091.9h-0.9zM531.95 1029.3h0.9V1091.3h-0.9zM534.34 1015.5h0.9V1081.0h-0.9zM536.74 1041.4h0.9V1105.7h-0.9zM539.13 1021.8h0.9V1098.1h-0.9zM541.53 1003.5h0.9V1073.6h-0.9zM543.92 1030.5h0.9V1101.3h-0.9zM546.32 1032.5h0.9V1091.9h-0.9zM548.71 1002.0h0.9V1084.7h-0.9zM551.11 1013.9h0.9V1086.9h-0.9zM553.50 1027.1h0.9V1092.9h-0.9zM555.89 1010.0h0.9V1094.9h-0.9zM558.29 1020.9h0.9V1100.4h-0.9zM560.68 1042.7h0.9V1117.7h-0.9zM563.08 1036.3h0.9V1104.8h-0.9zM565.47 1017.8h0.9V1109.2h-0.9zM567.87 1019.2h0.9V1094.1h-0.9zM570.26 1052.6h0.9V1109.3h-0.9zM572.66 1016.2h0.9V1098.3h-0.9zM575.05 1029.5h0.9V1104.9h-0.9zM577.44 1035.6h0.9V1099.1h-0.9zM579.84 1022.2h0.9V1089.3h-0.9zM582.23 1002.2h0.9V1090.8h-0.9zM584.63 1018.9h0.9V1091.5h-0.9zM587.02 1028.1h0.9V1094.0h-0.9zM589.42 1042.7h0.9V1089.9h-0.9zM591.81 1005.7h0.9V1087.9h-0.9zM594.21 997.2h0.9V1071.2h-0.9zM596.60 1024.6h0.9V1086.2h-0.9zM598.99 1012.6h0.9V1098.7h-0.9zM601.39 1023.7h0.9V1095.6h-0.9zM603.78 1003.2h0.9V1097.3h-0.9zM606.18 1045.9h0.9V1110.2h-0.9zM608.57 998.1h0.9V1095.1h-0.9zM610.97 1033.3h0.9V1086.1h-0.9zM613.36 1006.2h0.9V1083.6h-0.9zM615.76 1010.5h0.9V1091.0h-0.9zM618.15 1037.1h0.9V1102.2h-0.9zM620.54 1013.9h0.9V1092.2h-0.9zM622.94 1019.9h0.9V1082.4h-0.9zM625.33 1025.2h0.9V1103.7h-0.9zM627.73 992.3h0.9V1087.8h-0.9zM630.12 1028.2h0.9V1107.3h-0.9zM632.52 1033.5h0.9V1100.2h-0.9zM634.91 1027.3h0.9V1095.4h-0.9zM637.31 1019.4h0.9V1090.5h-0.9zM639.70 1036.1h0.9V1097.6h-0.9zM642.09 1043.6h0.9V1093.8h-0.9zM644.49 1049.4h0.9V1094.7h-0.9zM646.88 1020.9h0.9V1082.0h-0.9zM649.28 1034.7h0.9V1093.8h-0.9zM651.67 1003.0h0.9V1085.7h-0.9zM654.07 1008.9h0.9V1098.8h-0.9zM656.46 1048.3h0.9V1093.6h-0.9zM658.86 1040.6h0.9V1088.0h-0.9zM661.25 1047.0h0.9V1113.5h-0.9zM663.64 1026.3h0.9V1105.2h-0.9zM666.04 1044.8h0.9V1104.7h-0.9zM668.43 1044.2h0.9V1109.0h-0.9zM670.83 1007.1h0.9V1093.0h-0.9zM673.22 1027.7h0.9V1096.8h-0.9zM675.62 1032.8h0.9V1086.9h-0.9zM678.01 1036.6h0.9V1108.4h-0.9zM680.41 1031.8h0.9V1089.7h-0.9zM682.80 1032.6h0.9V1093.3h-0.9zM685.19 1024.6h0.9V1089.9h-0.9zM687.59 1033.4h0.9V1084.8h-0.9zM689.98 1031.5h0.9V1101.3h-0.9zM692.38 1023.3h0.9V1094.9h-0.9zM694.77 1018.5h0.9V1099.1h-0.9zM697.17 1030.0h0.9V1095.2h-0.9zM699.56 1029.1h0.9V1096.5h-0.9zM701.96 1012.5h0.9V1081.4h-0.9zM704.35 1030.6h0.9V1095.5h-0.9zM706.74 1018.0h0.9V1103.1h-0.9zM709.14 1016.6h0.9V1092.8h-0.9zM711.53 1028.3h0.9V1087.7h-0.9zM713.93 1016.8h0.9V1094.4h-0.9zM716.32 1038.0h0.9V1093.0h-0.9zM718.72 1040.6h0.9V1092.0h-0.9zM721.11 1046.9h0.9V1101.5h-0.9zM723.51 1047.0h0.9V1100.5h-0.9zM725.90 1047.1h0.9V1110.1h-0.9zM728.29 1018.3h0.9V1088.4h-0.9zM730.69 1026.2h0.9V1083.3h-0.9zM735.48 1024.9h0.9V1086.1h-0.9zM737.87 1023.9h0.9V1100.6h-0.9zM740.27 1008.1h0.9V1079.3h-0.9zM742.66 1041.0h0.9V1090.4h-0.9zM745.06 999.3h0.9V1083.6h-0.9zM747.45 1040.6h0.9V1112.6h-0.9zM749.84 1034.7h0.9V1093.9h-0.9zM752.24 1020.1h0.9V1096.9h-0.9zM754.63 1026.4h0.9V1101.7h-0.9zM757.03 1041.0h0.9V1104.5h-0.9zM759.42 1027.2h0.9V1093.0h-0.9zM761.82 1059.5h0.9V1109.3h-0.9zM764.21 1014.8h0.9V1090.6h-0.9zM766.61 1007.8h0.9V1094.2h-0.9zM769.00 1115.6h1.1V1115.6h-1.1z" fill="#7dbb6a"/><rect x="79.4" y="1049.80" width="689.6" height="1" fill="#000" fill-opacity="0.07"/><rect x="79.4" y="1138.80" width="689.6" height="1" fill="#000" fill-opacity="0.07"/><rect x="72.7" y="1227.80" width="697.6999999999999" height="1" fill="#dfe5ec"/><rect x="136.80" y="1228.8" width="1.2" height="5" fill="#666"/><rect x="222.90" y="1228.8" width="1.2" height="5" fill="#666"/><rect x="309.00" y="1228.8" width="1.2" height="5" fill="#666"/><rect x="395.10" y="1228.8" width="1.2" height="5" fill="#666"/><rect x="481.20" y="1228.8" width="1.2" height="5" fill="#666"/><rect x="567.30" y="1228.8" width="1.2" height="5" fill="#666"/><rect x="653.40" y="1228.8" width="1.2" height="5" fill="#666"/><rect x="739.50" y="1228.8" width="1.2" height="5" fill="#666"/></svg><svg width="1600" height="1365"><rect x="867.2" y="960.80" width="698.0" height="1" fill="#dfe5ec"/><rect x="867.2" y="1014.20" width="698.0" height="1" fill="#dfe5ec"/><rect x="867.2" y="1067.60" width="698.0" height="1" fill="#dfe5ec"/><rect x="867.2" y="1121.00" width="698.0" height="1" fill="#dfe5ec"/><rect x="867.2" y="1174.40" width="698.0" height="1" fill="#dfe5ec"/><rect x="867.2" y="1227.80" width="698.0" height="1" fill="#dfe5ec"/><path d="M875.00 1152.8h2.39V1228.3h-2.39zM877.39 1160.0h2.39V1228.3h-2.39zM879.77 1162.3h2.39V1228.3h-2.39zM882.16 1167.6h2.39V1228.3h-2.39zM884.54 1150.7h2.39V1228.3h-2.39zM886.93 1164.4h2.39V1228.3h-2.39zM889.31 1166.0h2.39V1228.3h-2.39zM891.70 1169.6h2.39V1228.3h-2.39zM894.08 1173.5h2.39V1228.3h-2.39zM896.47 1151.1h2.39V1228.3h-2.39zM898.85 1169.4h2.39V1228.3h-2.39zM901.24 1162.6h2.39V1228.3h-2.39zM903.62 1154.8h2.39V1228.3h-2.39zM906.01 1158.1h2.39V1228.3h-2.39zM908.40 1145.1h2.39V1228.3h-2.39zM910.78 1172.1h2.39V1228.3h-2.39zM913.17 1155.1h2.39V1228.3h-2.39zM915.55 1145.1h2.39V1228.3h-2.39zM917.94 1152.6h2.39V1228.3h-2.39zM920.32 1157.0h2.39V1228.3h-2.39zM922.71 1179.2h2.39V1228.3h-2.39zM925.09 1156.3h2.39V1228.3h-2.39zM927.48 1153.8h2.39V1228.3h-2.39zM929.86 1150.5h2.39V1228.3h-2.39zM932.25 1167.0h2.39V1228.3h-2.39zM934.64 1161.1h2.39V1228.3h-2.39zM937.02 1155.5h2.39V1228.3h-2.39zM939.41 1160.1h2.39V1228.3h-2.39zM941.79 1161.4h2.39V1228.3h-2.39zM944.18 1161.4h2.39V1228.3h-2.39zM946.56 1154.7h2.39V1228.3h-2.39zM948.95 1155.4h2.39V1228.3h-2.39zM951.33 1163.5h2.39V1228.3h-2.39zM953.72 1169.8h2.39V1228.3h-2.39zM956.10 1160.4h2.39V1228.3h-2.39zM958.49 1165.2h2.39V1228.3h-2.39zM960.88 1161.8h2.39V1228.3h-2.39zM963.26 1167.5h2.39V1228.3h-2.39zM965.65 1160.7h2.39V1228.3h-2.39zM968.03 1155.1h2.39V1228.3h-2.39zM970.42 1153.0h2.39V1228.3h-2.39zM972.80 1157.8h2.39V1228.3h-2.39zM975.19 1162.8h2.39V1228.3h-2.39zM977.57 1162.1h2.39V1228.3h-2.39zM979.96 1152.4h2.39V1228.3h-2.39zM982.34 1155.1h2.39V1228.3h-2.39zM984.73 1178.1h2.39V1228.3h-2.39zM987.11 1156.1h2.39V1228.3h-2.39zM989.50 1167.9h2.39V1228.3h-2.39zM991.89 1163.9h2.39V1228.3h-2.39zM994.27 1168.2h2.39V1228.3h-2.39zM996.66 1167.4h2.39V1228.3h-2.39zM999.04 1162.4h2.39V1228.3h-2.39zM1001.43 1163.7h2.39V1228.3h-2.39zM1003.81 1164.3h2.39V1228.3h-2.39zM1006.20 1164.6h2.39V1228.3h-2.39zM1008.58 1165.6h2.39V1228.3h-2.39zM1010.97 1157.8h2.39V1228.3h-2.39zM1013.35 1165.6h2.39V1228.3h-2.39zM1015.74 1161.5h2.39V1228.3h-2.39zM1018.12 1182.9h2.39V1228.3h-2.39zM1020.51 1170.0h2.39V1228.3h-2.39zM1022.90 1171.9h2.39V1228.3h-2.39zM1025.28 1167.1h2.39V1228.3h-2.39zM1027.67 1168.1h2.39V1228.3h-2.39zM1030.05 1159.2h2.39V1228.3h-2.39zM1032.44 1157.1h2.39V1228.3h-2.39zM1034.82 1166.9h2.39V1228.3h-2.39zM1037.21 1160.5h2.39V1228.3h-2.39zM1039.59 1168.9h2.39V1228.3h-2.39zM1041.98 1165.9h2.39V1228.3h-2.39zM1044.36 1168.8h2.39V1228.3h-2.39zM1046.75 1154.3h2.39V1228.3h-2.39zM1049.14 1146.6h2.39V1228.3h-2.39zM1051.52 1150.0h2.39V1228.3h-2.39zM1053.91 1164.7h2.39V1228.3h-2.39zM1056.29 1167.6h2.39V1228.3h-2.39zM1058.68 1156.7h2.39V1228.3h-2.39zM1061.06 1156.2h2.39V1228.3h-2.39zM1063.45 1162.3h2.39V1228.3h-2.39zM1065.83 1157.2h2.39V1228.3h-2.39zM1068.22 1157.5h2.39V1228.3h-2.39zM1070.60 1159.2h2.39V1228.3h-2.39zM1072.99 1173.4h2.39V1228.3h-2.39zM1075.38 1158.8h2.39V1228.3h-2.39zM1077.76 1172.8h2.39V1228.3h-2.39zM1080.15 1158.8h2.39V1228.3h-2.39zM1082.53 1161.1h2.39V1228.3h-2.39zM1084.92 1153.9h2.39V1228.3h-2.39zM1087.30 1170.7h2.39V1228.3h-2.39zM1089.69 1161.4h2.39V1228.3h-2.39zM1092.07 1154.6h2.39V1228.3h-2.39zM1094.46 1177.1h2.39V1228.3h-2.39zM1096.84 1151.5h2.39V1228.3h-2.39zM1099.23 1160.6h2.39V1228.3h-2.39zM1101.61 1167.2h2.39V1228.3h-2.39zM1104.00 1160.3h2.39V1228.3h-2.39zM1106.39 1150.8h2.39V1228.3h-2.39zM1108.77 1155.2h2.39V1228.3h-2.39zM1111.16 1168.3h2.39V1228.3h-2.39zM1113.54 1160.7h2.39V1228.3h-2.39zM1115.93 1155.9h2.39V1228.3h-2.39zM1118.31 1152.6h2.39V1228.3h-2.39zM1120.70 1155.5h2.39V1228.3h-2.39zM1123.08 1155.9h2.39V1228.3h-2.39zM1125.47 1159.7h2.39V1228.3h-2.39zM1127.85 1178.3h2.39V1228.3h-2.39zM1130.24 1166.3h2.39V1228.3h-2.39zM1132.62 1157.4h2.39V1228.3h-2.39zM1135.01 1172.3h2.39V1228.3h-2.39zM1137.40 1164.8h2.39V1228.3h-2.39zM1139.78 1168.8h2.39V1228.3h-2.39zM1142.17 1165.0h2.39V1228.3h-2.39zM1144.55 1164.0h2.39V1228.3h-2.39zM1146.94 1155.5h2.39V1228.3h-2.39zM1149.32 1153.5h2.39V1228.3h-2.39zM1151.71 1161.5h2.39V1228.3h-2.39zM1154.09 1163.4h2.39V1228.3h-2.39zM1156.48 1147.0h2.39V1228.3h-2.39zM1158.86 1167.4h2.39V1228.3h-2.39zM1161.25 1161.5h2.39V1228.3h-2.39zM1163.64 1150.8h2.39V1228.3h-2.39zM1166.02 1162.7h2.39V1228.3h-2.39zM1168.41 1159.8h2.39V1228.3h-2.39zM1170.79 1162.8h2.39V1228.3h-2.39zM1173.18 1156.5h2.39V1228.3h-2.39zM1175.56 1163.1h2.39V1228.3h-2.39zM1177.95 1149.1h2.39V1228.3h-2.39zM1180.33 1150.6h2.39V1228.3h-2.39zM1182.72 1156.4h2.39V1228.3h-2.39zM1185.10 1161.9h2.39V1228.3h-2.39zM1187.49 1169.7h2.39V1228.3h-2.39zM1189.88 1170.8h2.39V1228.3h-2.39zM1192.26 1166.3h2.39V1228.3h-2.39zM1194.65 1160.6h2.39V1228.3h-2.39zM1197.03 1151.0h2.39V1228.3h-2.39zM1199.42 1171.8h2.39V1228.3h-2.39zM1201.80 1166.7h2.39V1228.3h-2.39zM1204.19 1160.9h2.39V1228.3h-2.39zM1206.57 1160.3h2.39V1228.3h-2.39zM1208.96 1162.0h2.39V1228.3h-2.39zM1211.34 1159.2h2.39V1228.3h-2.39zM1213.73 1167.8h2.39V1228.3h-2.39zM1216.11 1167.7h2.39V1228.3h-2.39zM1220.89 1175.4h2.39V1228.3h-2.39zM1223.27 1179.2h2.39V1228.3h-2.39zM1225.66 1150.6h2.39V1228.3h-2.39zM1228.04 1154.5h2.39V1228.3h-2.39zM1230.43 1174.4h2.39V1228.3h-2.39zM1232.81 1164.5h2.39V1228.3h-2.39zM1235.20 1155.2h2.39V1228.3h-2.39zM1237.58 1160.5h2.39V1228.3h-2.39zM1239.97 1152.1h2.39V1228.3h-2.39zM1242.35 1147.9h2.39V1228.3h-2.39zM1244.74 1169.1h2.39V1228.3h-2.39zM1247.12 1161.3h2.39V1228.3h-2.39zM1249.51 1157.6h2.39V1228.3h-2.39zM1251.90 1149.9h2.39V1228.3h-2.39zM1254.28 1165.8h2.39V1228.3h-2.39zM1256.67 1164.5h2.39V1228.3h-2.39zM1259.05 1151.3h2.39V1228.3h-2.39zM1261.44 1162.8h2.39V1228.3h-2.39zM1263.82 1156.9h2.39V1228.3h-2.39zM1266.21 1154.8h2.39V1228.3h-2.39zM1268.59 1168.0h2.39V1228.3h-2.39zM1270.98 1164.4h2.39V1228.3h-2.39zM1273.36 1160.7h2.39V1228.3h-2.39zM1275.75 1163.4h2.39V1228.3h-2.39zM1278.14 1166.2h2.39V1228.3h-2.39zM1280.52 1159.2h2.39V1228.3h-2.39zM1282.91 1155.1h2.39V1228.3h-2.39zM1285.29 1164.4h2.39V1228.3h-2.39zM1287.68 1162.7h2.39V1228.3h-2.39zM1290.06 1167.6h2.39V1228.3h-2.39zM1292.45 1156.4h2.39V1228.3h-2.39zM1294.83 1177.0h2.39V1228.3h-2.39zM1297.22 1166.5h2.39V1228.3h-2.39zM1299.60 1162.1h2.39V1228.3h-2.39zM1301.99 1140.3h2.39V1228.3h-2.39zM1304.38 1155.3h2.39V1228.3h-2.39zM1306.76 1154.0h2.39V1228.3h-2.39zM1309.15 1158.7h2.39V1228.3h-2.39zM1311.53 1169.2h2.39V1228.3h-2.39zM1313.92 1160.6h2.39V1228.3h-2.39zM1316.30 1158.7h2.39V1228.3h-2.39zM1318.69 1136.8h2.39V1228.3h-2.39zM1321.07 1154.1h2.39V1228.3h-2.39zM1323.46 1154.3h2.39V1228.3h-2.39zM1325.84 1170.0h2.39V1228.3h-2.39zM1328.23 1172.1h2.39V1228.3h-2.39zM1330.61 1150.3h2.39V1228.3h-2.39zM1333.00 1162.6h2.39V1228.3h-2.39zM1335.39 1147.7h2.39V1228.3h-2.39zM1337.77 1158.1h2.39V1228.3h-2.39zM1340.16 1154.3h2.39V1228.3h-2.39zM1342.54 1147.8h2.39V1228.3h-2.39zM1344.93 1153.4h2.39V1228.3h-2.39zM1347.31 1165.7h2.39V1228.3h-2.39zM1349.70 1175.5h2.39V1228.3h-2.39zM1352.08 1179.6h2.39V1228.3h-2.39zM1354.47 1168.7h2.39V1228.3h-2.39zM1356.85 1179.3h2.39V1228.3h-2.39zM1359.24 1157.0h2.39V1228.3h-2.39zM1361.62 1157.4h2.39V1228.3h-2.39zM1364.01 1169.3h2.39V1228.3h-2.39zM1366.40 1174.8h2.39V1228.3h-2.39zM1368.78 1163.5h2.39V1228.3h-2.39zM1371.17 1169.5h2.39V1228.3h-2.39zM1373.55 1141.4h2.39V1228.3h-2.39zM1375.94 1145.4h2.39V1228.3h-2.39zM1378.32 1154.9h2.39V1228.3h-2.39zM1380.71 1163.1h2.39V1228.3h-2.39zM1383.09 1160.2h2.39V1228.3h-2.39zM1385.48 1153.2h2.39V1228.3h-2.39zM1387.86 1162.0h2.39V1228.3h-2.39zM1390.25 1168.8h2.39V1228.3h-2.39zM1392.64 1163.5h2.39V1228.3h-2.39zM1395.02 1154.3h2.39V1228.3h-2.39zM1397.41 1161.4h2.39V1228.3h-2.39zM1399.79 1164.7h2.39V1228.3h-2.39zM1402.18 1146.3h2.39V1228.3h-2.39zM1404.56 1163.2h2.39V1228.3h-2.39zM1406.95 1156.3h2.39V1228.3h-2.39zM1409.33 1157.1h2.39V1228.3h-2.39zM1411.72 1144.8h2.39V1228.3h-2.39zM1414.10 1164.3h2.39V1228.3h-2.39zM1416.49 1155.3h2.39V1228.3h-2.39zM1418.88 1166.4h2.39V1228.3h-2.39zM1421.26 1166.8h2.39V1228.3h-2.39zM1423.65 1156.8h2.39V1228.3h-2.39zM1426.03 1177.1h2.39V1228.3h-2.39zM1428.42 1166.6h2.39V1228.3h-2.39zM1430.80 1155.5h2.39V1228.3h-2.39zM1433.19 1165.0h2.39V1228.3h-2.39zM1435.57 1183.4h2.39V1228.3h-2.39zM1437.96 1163.5h2.39V1228.3h-2.39zM1440.34 1166.7h2.39V1228.3h-2.39zM1442.73 1172.2h2.39V1228.3h-2.39zM1445.11 1160.4h2.39V1228.3h-2.39zM1447.50 1156.5h2.39V1228.3h-2.39zM1449.89 1152.6h2.39V1228.3h-2.39zM1452.27 1174.9h2.39V1228.3h-2.39zM1454.66 1164.3h2.39V1228.3h-2.39zM1457.04 1156.1h2.39V1228.3h-2.39zM1459.43 1162.9h2.39V1228.3h-2.39zM1461.81 1159.3h2.39V1228.3h-2.39zM1464.20 1167.0h2.39V1228.3h-2.39zM1466.58 1157.6h2.39V1228.3h-2.39zM1468.97 1155.8h2.39V1228.3h-2.39zM1471.35 1158.2h2.39V1228.3h-2.39zM1473.74 1155.3h2.39V1228.3h-2.39zM1476.12 1156.7h2.39V1228.3h-2.39zM1478.51 1147.7h2.39V1228.3h-2.39zM1480.90 1162.4h2.39V1228.3h-2.39zM1483.28 1157.1h2.39V1228.3h-2.39zM1485.67 1172.2h2.39V1228.3h-2.39zM1488.05 1163.5h2.39V1228.3h-2.39zM1490.44 1171.3h2.39V1228.3h-2.39zM1492.82 1167.2h2.39V1228.3h-2.39zM1495.21 1172.0h2.39V1228.3h-2.39zM1497.59 1151.3h2.39V1228.3h-2.39zM1499.98 1152.3h2.39V1228.3h-2.39zM1502.36 1151.8h2.39V1228.3h-2.39zM1504.75 1153.0h2.39V1228.3h-2.39zM1507.14 1155.7h2.39V1228.3h-2.39zM1509.52 1159.8h2.39V1228.3h-2.39zM1511.91 1153.2h2.39V1228.3h-2.39zM1514.29 1164.8h2.39V1228.3h-2.39zM1516.68 1175.8h2.39V1228.3h-2.39zM1519.06 1167.1h2.39V1228.3h-2.39zM1521.45 1157.0h2.39V1228.3h-2.39zM1523.83 1166.9h2.39V1228.3h-2.39zM1526.22 1157.4h2.39V1228.3h-2.39zM1528.60 1174.6h2.39V1228.3h-2.39zM1530.99 1152.9h2.39V1228.3h-2.39zM1533.38 1158.8h2.39V1228.3h-2.39zM1535.76 1175.2h2.39V1228.3h-2.39zM1538.15 1173.6h2.39V1228.3h-2.39zM1540.53 1144.6h2.39V1228.3h-2.39zM1542.92 1151.9h2.39V1228.3h-2.39zM1545.30 1157.4h2.39V1228.3h-2.39zM1547.69 1157.9h2.39V1228.3h-2.39zM1550.07 1163.4h2.39V1228.3h-2.39zM1552.46 1155.6h2.39V1228.3h-2.39zM1554.84 1164.4h2.39V1228.3h-2.39zM1557.23 1164.1h2.39V1228.3h-2.39zM1559.61 1158.8h2.39V1228.3h-2.39z" fill="#a7c6e0"/><path d="M875.00 1152.8h0.9V1228.3h-0.9zM877.39 1160.0h0.9V1228.3h-0.9zM879.77 1162.3h0.9V1228.3h-0.9zM882.16 1167.6h0.9V1228.3h-0.9zM884.54 1150.7h0.9V1228.3h-0.9zM886.93 1164.4h0.9V1228.3h-0.9zM889.31 1166.0h0.9V1228.3h-0.9zM891.70 1169.6h0.9V1228.3h-0.9zM894.08 1173.5h0.9V1228.3h-0.9zM896.47 1151.1h0.9V1228.3h-0.9zM898.85 1169.4h0.9V1228.3h-0.9zM901.24 1162.6h0.9V1228.3h-0.9zM903.62 1154.8h0.9V1228.3h-0.9zM906.01 1158.1h0.9V1228.3h-0.9zM908.40 1145.1h0.9V1228.3h-0.9zM910.78 1172.1h0.9V1228.3h-0.9zM913.17 1155.1h0.9V1228.3h-0.9zM915.55 1145.1h0.9V1228.3h-0.9zM917.94 1152.6h0.9V1228.3h-0.9zM920.32 1157.0h0.9V1228.3h-0.9zM922.71 1179.2h0.9V1228.3h-0.9zM925.09 1156.3h0.9V1228.3h-0.9zM927.48 1153.8h0.9V1228.3h-0.9zM929.86 1150.5h0.9V1228.3h-0.9zM932.25 1167.0h0.9V1228.3h-0.9zM934.64 1161.1h0.9V1228.3h-0.9zM937.02 1155.5h0.9V1228.3h-0.9zM939.41 1160.1h0.9V1228.3h-0.9zM941.79 1161.4h0.9V1228.3h-0.9zM944.18 1161.4h0.9V1228.3h-0.9zM946.56 1154.7h0.9V1228.3h-0.9zM948.95 1155.4h0.9V1228.3h-0.9zM951.33 1163.5h0.9V1228.3h-0.9zM953.72 1169.8h0.9V1228.3h-0.9zM956.10 1160.4h0.9V1228.3h-0.9zM958.49 1165.2h0.9V1228.3h-0.9zM960.88 1161.8h0.9V1228.3h-0.9zM963.26 1167.5h0.9V1228.3h-0.9zM965.65 1160.7h0.9V1228.3h-0.9zM968.03 1155.1h0.9V1228.3h-0.9zM970.42 1153.0h0.9V1228.3h-0.9zM972.80 1157.8h0.9V1228.3h-0.9zM975.19 1162.8h0.9V1228.3h-0.9zM977.57 1162.1h0.9V1228.3h-0.9zM979.96 1152.4h0.9V1228.3h-0.9zM982.34 1155.1h0.9V1228.3h-0.9zM984.73 1178.1h0.9V1228.3h-0.9zM987.11 1156.1h0.9V1228.3h-0.9zM989.50 1167.9h0.9V1228.3h-0.9zM991.89 1163.9h0.9V1228.3h-0.9zM994.27 1168.2h0.9V1228.3h-0.9zM996.66 1167.4h0.9V1228.3h-0.9zM999.04 1162.4h0.9V1228.3h-0.9zM1001.43 1163.7h0.9V1228.3h-0.9zM1003.81 1164.3h0.9V1228.3h-0.9zM1006.20 1164.6h0.9V1228.3h-0.9zM1008.58 1165.6h0.9V1228.3h-0.9zM1010.97 1157.8h0.9V1228.3h-0.9zM1013.35 1165.6h0.9V1228.3h-0.9zM1015.74 1161.5h0.9V1228.3h-0.9zM1018.12 1182.9h0.9V1228.3h-0.9zM1020.51 1170.0h0.9V1228.3h-0.9zM1022.90 1171.9h0.9V1228.3h-0.9zM1025.28 1167.1h0.9V1228.3h-0.9zM1027.67 1168.1h0.9V1228.3h-0.9zM1030.05 1159.2h0.9V1228.3h-0.9zM1032.44 1157.1h0.9V1228.3h-0.9zM1034.82 1166.9h0.9V1228.3h-0.9zM1037.21 1160.5h0.9V1228.3h-0.9zM1039.59 1168.9h0.9V1228.3h-0.9zM1041.98 1165.9h0.9V1228.3h-0.9zM1044.36 1168.8h0.9V1228.3h-0.9zM1046.75 1154.3h0.9V1228.3h-0.9zM1049.14 1146.6h0.9V1228.3h-0.9zM1051.52 1150.0h0.9V1228.3h-0.9zM1053.91 1164.7h0.9V1228.3h-0.9zM1056.29 1167.6h0.9V1228.3h-0.9zM1058.68 1156.7h0.9V1228.3h-0.9zM1061.06 1156.2h0.9V1228.3h-0.9zM1063.45 1162.3h0.9V1228.3h-0.9zM1065.83 1157.2h0.9V1228.3h-0.9zM1068.22 1157.5h0.9V1228.3h-0.9zM1070.60 1159.2h0.9V1228.3h-0.9zM1072.99 1173.4h0.9V1228.3h-0.9zM1075.38 1158.8h0.9V1228.3h-0.9zM1077.76 1172.8h0.9V1228.3h-0.9zM1080.15 1158.8h0.9V1228.3h-0.9zM1082.53 1161.1h0.9V1228.3h-0.9zM1084.92 1153.9h0.9V1228.3h-0.9zM1087.30 1170.7h0.9V1228.3h-0.9zM1089.69 1161.4h0.9V1228.3h-0.9zM1092.07 1154.6h0.9V1228.3h-0.9zM1094.46 1177.1h0.9V1228.3h-0.9zM1096.84 1151.5h0.9V1228.3h-0.9zM1099.23 1160.6h0.9V1228.3h-0.9zM1101.61 1167.2h0.9V1228.3h-0.9zM1104.00 1160.3h0.9V1228.3h-0.9zM1106.39 1150.8h0.9V1228.3h-0.9zM1108.77 1155.2h0.9V1228.3h-0.9zM1111.16 1168.3h0.9V1228.3h-0.9zM1113.54 1160.7h0.9V1228.3h-0.9zM1115.93 1155.9h0.9V1228.3h-0.9zM1118.31 1152.6h0.9V1228.3h-0.9zM1120.70 1155.5h0.9V1228.3h-0.9zM1123.08 1155.9h0.9V1228.3h-0.9zM1125.47 1159.7h0.9V1228.3h-0.9zM1127.85 1178.3h0.9V1228.3h-0.9zM1130.24 1166.3h0.9V1228.3h-0.9zM1132.62 1157.4h0.9V1228.3h-0.9zM1135.01 1172.3h0.9V1228.3h-0.9zM1137.40 1164.8h0.9V1228.3h-0.9zM1139.78 1168.8h0.9V1228.3h-0.9zM1142.17 1165.0h0.9V1228.3h-0.9zM1144.55 1164.0h0.9V1228.3h-0.9zM1146.94 1155.5h0.9V1228.3h-0.9zM1149.32 1153.5h0.9V1228.3h-0.9zM1151.71 1161.5h0.9V1228.3h-0.9zM1154.09 1163.4h0.9V1228.3h-0.9zM1156.48 1147.0h0.9V1228.3h-0.9zM1158.86 1167.4h0.9V1228.3h-0.9zM1161.25 1161.5h0.9V1228.3h-0.9zM1163.64 1150.8h0.9V1228.3h-0.9zM1166.02 1162.7h0.9V1228.3h-0.9zM1168.41 1159.8h0.9V1228.3h-0.9zM1170.79 1162.8h0.9V1228.3h-0.9zM1173.18 1156.5h0.9V1228.3h-0.9zM1175.56 1163.1h0.9V1228.3h-0.9zM1177.95 1149.1h0.9V1228.3h-0.9zM1180.33 1150.6h0.9V1228.3h-0.9zM1182.72 1156.4h0.9V1228.3h-0.9zM1185.10 1161.9h0.9V1228.3h-0.9zM1187.49 1169.7h0.9V1228.3h-0.9zM1189.88 1170.8h0.9V1228.3h-0.9zM1192.26 1166.3h0.9V1228.3h-0.9zM1194.65 1160.6h0.9V1228.3h-0.9zM1197.03 1151.0h0.9V1228.3h-0.9zM1199.42 1171.8h0.9V1228.3h-0.9zM1201.80 1166.7h0.9V1228.3h-0.9zM1204.19 1160.9h0.9V1228.3h-0.9zM1206.57 1160.3h0.9V1228.3h-0.9zM1208.96 1162.0h0.9V1228.3h-0.9zM1211.34 1159.2h0.9V1228.3h-0.9zM1213.73 1167.8h0.9V1228.3h-0.9zM1216.11 1167.7h0.9V1228.3h-0.9zM1220.89 1175.4h0.9V1228.3h-0.9zM1223.27 1179.2h0.9V1228.3h-0.9zM1225.66 1150.6h0.9V1228.3h-0.9zM1228.04 1154.5h0.9V1228.3h-0.9zM1230.43 1174.4h0.9V1228.3h-0.9zM1232.81 1164.5h0.9V1228.3h-0.9zM1235.20 1155.2h0.9V1228.3h-0.9zM1237.58 1160.5h0.9V1228.3h-0.9zM1239.97 1152.1h0.9V1228.3h-0.9zM1242.35 1147.9h0.9V1228.3h-0.9zM1244.74 1169.1h0.9V1228.3h-0.9zM1247.12 1161.3h0.9V1228.3h-0.9zM1249.51 1157.6h0.9V1228.3h-0.9zM1251.90 1149.9h0.9V1228.3h-0.9zM1254.28 1165.8h0.9V1228.3h-0.9zM1256.67 1164.5h0.9V1228.3h-0.9zM1259.05 1151.3h0.9V1228.3h-0.9zM1261.44 1162.8h0.9V1228.3h-0.9zM1263.82 1156.9h0.9V1228.3h-0.9zM1266.21 1154.8h0.9V1228.3h-0.9zM1268.59 1168.0h0.9V1228.3h-0.9zM1270.98 1164.4h0.9V1228.3h-0.9zM1273.36 1160.7h0.9V1228.3h-0.9zM1275.75 1163.4h0.9V1228.3h-0.9zM1278.14 1166.2h0.9V1228.3h-0.9zM1280.52 1159.2h0.9V1228.3h-0.9zM1282.91 1155.1h0.9V1228.3h-0.9zM1285.29 1164.4h0.9V1228.3h-0.9zM1287.68 1162.7h0.9V1228.3h-0.9zM1290.06 1167.6h0.9V1228.3h-0.9zM1292.45 1156.4h0.9V1228.3h-0.9zM1294.83 1177.0h0.9V1228.3h-0.9zM1297.22 1166.5h0.9V1228.3h-0.9zM1299.60 1162.1h0.9V1228.3h-0.9zM1301.99 1140.3h0.9V1228.3h-0.9zM1304.38 1155.3h0.9V1228.3h-0.9zM1306.76 1154.0h0.9V1228.3h-0.9zM1309.15 1158.7h0.9V1228.3h-0.9zM1311.53 1169.2h0.9V1228.3h-0.9zM1313.92 1160.6h0.9V1228.3h-0.9zM1316.30 1158.7h0.9V1228.3h-0.9zM1318.69 1136.8h0.9V1228.3h-0.9zM1321.07 1154.1h0.9V1228.3h-0.9zM1323.46 1154.3h0.9V1228.3h-0.9zM1325.84 1170.0h0.9V1228.3h-0.9zM1328.23 1172.1h0.9V1228.3h-0.9zM1330.61 1150.3h0.9V1228.3h-0.9zM1333.00 1162.6h0.9V1228.3h-0.9zM1335.39 1147.7h0.9V1228.3h-0.9zM1337.77 1158.1h0.9V1228.3h-0.9zM1340.16 1154.3h0.9V1228.3h-0.9zM1342.54 1147.8h0.9V1228.3h-0.9zM1344.93 1153.4h0.9V1228.3h-0.9zM1347.31 1165.7h0.9V1228.3h-0.9zM1349.70 1175.5h0.9V1228.3h-0.9zM1352.08 1179.6h0.9V1228.3h-0.9zM1354.47 1168.7h0.9V1228.3h-0.9zM1356.85 1179.3h0.9V1228.3h-0.9zM1359.24 1157.0h0.9V1228.3h-0.9zM1361.62 1157.4h0.9V1228.3h-0.9zM1364.01 1169.3h0.9V1228.3h-0.9zM1366.40 1174.8h0.9V1228.3h-0.9zM1368.78 1163.5h0.9V1228.3h-0.9zM1371.17 1169.5h0.9V1228.3h-0.9zM1373.55 1141.4h0.9V1228.3h-0.9zM1375.94 1145.4h0.9V1228.3h-0.9zM1378.32 1154.9h0.9V1228.3h-0.9zM1380.71 1163.1h0.9V1228.3h-0.9zM1383.09 1160.2h0.9V1228.3h-0.9zM1385.48 1153.2h0.9V1228.3h-0.9zM1387.86 1162.0h0.9V1228.3h-0.9zM1390.25 1168.8h0.9V1228.3h-0.9zM1392.64 1163.5h0.9V1228.3h-0.9zM1395.02 1154.3h0.9V1228.3h-0.9zM1397.41 1161.4h0.9V1228.3h-0.9zM1399.79 1164.7h0.9V1228.3h-0.9zM1402.18 1146.3h0.9V1228.3h-0.9zM1404.56 1163.2h0.9V1228.3h-0.9zM1406.95 1156.3h0.9V1228.3h-0.9zM1409.33 1157.1h0.9V1228.3h-0.9zM1411.72 1144.8h0.9V1228.3h-0.9zM1414.10 1164.3h0.9V1228.3h-0.9zM1416.49 1155.3h0.9V1228.3h-0.9zM1418.88 1166.4h0.9V1228.3h-0.9zM1421.26 1166.8h0.9V1228.3h-0.9zM1423.65 1156.8h0.9V1228.3h-0.9zM1426.03 1177.1h0.9V1228.3h-0.9zM1428.42 1166.6h0.9V1228.3h-0.9zM1430.80 1155.5h0.9V1228.3h-0.9zM1433.19 1165.0h0.9V1228.3h-0.9zM1435.57 1183.4h0.9V1228.3h-0.9zM1437.96 1163.5h0.9V1228.3h-0.9zM1440.34 1166.7h0.9V1228.3h-0.9zM1442.73 1172.2h0.9V1228.3h-0.9zM1445.11 1160.4h0.9V1228.3h-0.9zM1447.50 1156.5h0.9V1228.3h-0.9zM1449.89 1152.6h0.9V1228.3h-0.9zM1452.27 1174.9h0.9V1228.3h-0.9zM1454.66 1164.3h0.9V1228.3h-0.9zM1457.04 1156.1h0.9V1228.3h-0.9zM1459.43 1162.9h0.9V1228.3h-0.9zM1461.81 1159.3h0.9V1228.3h-0.9zM1464.20 1167.0h0.9V1228.3h-0.9zM1466.58 1157.6h0.9V1228.3h-0.9zM1468.97 1155.8h0.9V1228.3h-0.9zM1471.35 1158.2h0.9V1228.3h-0.9zM1473.74 1155.3h0.9V1228.3h-0.9zM1476.12 1156.7h0.9V1228.3h-0.9zM1478.51 1147.7h0.9V1228.3h-0.9zM1480.90 1162.4h0.9V1228.3h-0.9zM1483.28 1157.1h0.9V1228.3h-0.9zM1485.67 1172.2h0.9V1228.3h-0.9zM1488.05 1163.5h0.9V1228.3h-0.9zM1490.44 1171.3h0.9V1228.3h-0.9zM1492.82 1167.2h0.9V1228.3h-0.9zM1495.21 1172.0h0.9V1228.3h-0.9zM1497.59 1151.3h0.9V1228.3h-0.9zM1499.98 1152.3h0.9V1228.3h-0.9zM1502.36 1151.8h0.9V1228.3h-0.9zM1504.75 1153.0h0.9V1228.3h-0.9zM1507.14 1155.7h0.9V1228.3h-0.9zM1509.52 1159.8h0.9V1228.3h-0.9zM1511.91 1153.2h0.9V1228.3h-0.9zM1514.29 1164.8h0.9V1228.3h-0.9zM1516.68 1175.8h0.9V1228.3h-0.9zM1519.06 1167.1h0.9V1228.3h-0.9zM1521.45 1157.0h0.9V1228.3h-0.9zM1523.83 1166.9h0.9V1228.3h-0.9zM1526.22 1157.4h0.9V1228.3h-0.9zM1528.60 1174.6h0.9V1228.3h-0.9zM1530.99 1152.9h0.9V1228.3h-0.9zM1533.38 1158.8h0.9V1228.3h-0.9zM1535.76 1175.2h0.9V1228.3h-0.9zM1538.15 1173.6h0.9V1228.3h-0.9zM1540.53 1144.6h0.9V1228.3h-0.9zM1542.92 1151.9h0.9V1228.3h-0.9zM1545.30 1157.4h0.9V1228.3h-0.9zM1547.69 1157.9h0.9V1228.3h-0.9zM1550.07 1163.4h0.9V1228.3h-0.9zM1552.46 1155.6h0.9V1228.3h-0.9zM1554.84 1164.4h0.9V1228.3h-0.9zM1557.23 1164.1h0.9V1228.3h-0.9zM1559.61 1158.8h0.9V1228.3h-0.9zM1562.00 1201.6h1.1V1228.3h-1.1z" fill="#6a9fcb"/><path d="M875.00 1076.3h2.39V1152.8h-2.39zM877.39 1073.4h2.39V1160.0h-2.39zM879.77 1090.8h2.39V1162.3h-2.39zM882.16 1085.3h2.39V1167.6h-2.39zM884.54 1071.8h2.39V1150.7h-2.39zM886.93 1094.1h2.39V1164.4h-2.39zM889.31 1090.1h2.39V1166.0h-2.39zM891.70 1102.3h2.39V1169.6h-2.39zM894.08 1102.1h2.39V1173.5h-2.39zM896.47 1083.9h2.39V1151.1h-2.39zM898.85 1097.3h2.39V1169.4h-2.39zM901.24 1087.2h2.39V1162.6h-2.39zM903.62 1077.8h2.39V1154.8h-2.39zM906.01 1088.1h2.39V1158.1h-2.39zM908.40 1077.1h2.39V1145.1h-2.39zM910.78 1099.6h2.39V1172.1h-2.39zM913.17 1086.7h2.39V1155.1h-2.39zM915.55 1072.3h2.39V1145.1h-2.39zM917.94 1074.8h2.39V1152.6h-2.39zM920.32 1076.8h2.39V1157.0h-2.39zM922.71 1090.5h2.39V1179.2h-2.39zM925.09 1064.1h2.39V1156.3h-2.39zM927.48 1080.4h2.39V1153.8h-2.39zM929.86 1085.3h2.39V1150.5h-2.39zM932.25 1084.7h2.39V1167.0h-2.39zM934.64 1079.7h2.39V1161.1h-2.39zM937.02 1078.1h2.39V1155.5h-2.39zM939.41 1081.5h2.39V1160.1h-2.39zM941.79 1083.7h2.39V1161.4h-2.39zM944.18 1081.1h2.39V1161.4h-2.39zM946.56 1071.9h2.39V1154.7h-2.39zM948.95 1075.3h2.39V1155.4h-2.39zM951.33 1090.8h2.39V1163.5h-2.39zM953.72 1096.8h2.39V1169.8h-2.39zM956.10 1079.9h2.39V1160.4h-2.39zM958.49 1076.8h2.39V1165.2h-2.39zM960.88 1087.0h2.39V1161.8h-2.39zM963.26 1092.1h2.39V1167.5h-2.39zM965.65 1078.7h2.39V1160.7h-2.39zM968.03 1082.7h2.39V1155.1h-2.39zM970.42 1087.5h2.39V1153.0h-2.39zM972.80 1072.9h2.39V1157.8h-2.39zM975.19 1081.1h2.39V1162.8h-2.39zM977.57 1083.2h2.39V1162.1h-2.39zM979.96 1071.6h2.39V1152.4h-2.39zM982.34 1084.2h2.39V1155.1h-2.39zM984.73 1101.3h2.39V1178.1h-2.39zM987.11 1071.9h2.39V1156.1h-2.39zM989.50 1089.5h2.39V1167.9h-2.39zM991.89 1077.5h2.39V1163.9h-2.39zM994.27 1095.0h2.39V1168.2h-2.39zM996.66 1088.0h2.39V1167.4h-2.39zM999.04 1103.9h2.39V1162.4h-2.39zM1001.43 1097.7h2.39V1163.7h-2.39zM1003.81 1085.0h2.39V1164.3h-2.39zM1006.20 1093.2h2.39V1164.6h-2.39zM1008.58 1094.4h2.39V1165.6h-2.39zM1010.97 1087.3h2.39V1157.8h-2.39zM1013.35 1081.0h2.39V1165.6h-2.39zM1015.74 1084.7h2.39V1161.5h-2.39zM1018.12 1109.1h2.39V1182.9h-2.39zM1020.51 1099.9h2.39V1170.0h-2.39zM1022.90 1105.6h2.39V1171.9h-2.39zM1025.28 1104.8h2.39V1167.1h-2.39zM1027.67 1105.3h2.39V1168.1h-2.39zM1030.05 1095.3h2.39V1159.2h-2.39zM1032.44 1078.7h2.39V1157.1h-2.39zM1034.82 1073.9h2.39V1166.9h-2.39zM1037.21 1095.8h2.39V1160.5h-2.39zM1039.59 1099.1h2.39V1168.9h-2.39zM1041.98 1090.5h2.39V1165.9h-2.39zM1044.36 1078.5h2.39V1168.8h-2.39zM1046.75 1076.9h2.39V1154.3h-2.39zM1049.14 1073.4h2.39V1146.6h-2.39zM1051.52 1072.5h2.39V1150.0h-2.39zM1053.91 1083.0h2.39V1164.7h-2.39zM1056.29 1089.3h2.39V1167.6h-2.39zM1058.68 1080.9h2.39V1156.7h-2.39zM1061.06 1081.3h2.39V1156.2h-2.39zM1063.45 1083.2h2.39V1162.3h-2.39zM1065.83 1072.0h2.39V1157.2h-2.39zM1068.22 1078.6h2.39V1157.5h-2.39zM1070.60 1078.5h2.39V1159.2h-2.39zM1072.99 1103.8h2.39V1173.4h-2.39zM1075.38 1085.7h2.39V1158.8h-2.39zM1077.76 1100.1h2.39V1172.8h-2.39zM1080.15 1085.6h2.39V1158.8h-2.39zM1082.53 1088.8h2.39V1161.1h-2.39zM1084.92 1084.5h2.39V1153.9h-2.39zM1087.30 1079.5h2.39V1170.7h-2.39zM1089.69 1082.0h2.39V1161.4h-2.39zM1092.07 1069.8h2.39V1154.6h-2.39zM1094.46 1096.7h2.39V1177.1h-2.39zM1096.84 1070.8h2.39V1151.5h-2.39zM1099.23 1078.3h2.39V1160.6h-2.39zM1101.61 1106.3h2.39V1167.2h-2.39zM1104.00 1090.2h2.39V1160.3h-2.39zM1106.39 1078.2h2.39V1150.8h-2.39zM1108.77 1089.7h2.39V1155.2h-2.39zM1111.16 1093.0h2.39V1168.3h-2.39zM1113.54 1076.5h2.39V1160.7h-2.39zM1115.93 1072.9h2.39V1155.9h-2.39zM1118.31 1080.8h2.39V1152.6h-2.39zM1120.70 1076.8h2.39V1155.5h-2.39zM1123.08 1087.6h2.39V1155.9h-2.39zM1125.47 1097.1h2.39V1159.7h-2.39zM1127.85 1086.4h2.39V1178.3h-2.39zM1130.24 1094.4h2.39V1166.3h-2.39zM1132.62 1085.8h2.39V1157.4h-2.39zM1135.01 1105.2h2.39V1172.3h-2.39zM1137.40 1089.1h2.39V1164.8h-2.39zM1139.78 1089.7h2.39V1168.8h-2.39zM1142.17 1092.6h2.39V1165.0h-2.39zM1144.55 1090.2h2.39V1164.0h-2.39zM1146.94 1079.8h2.39V1155.5h-2.39zM1149.32 1074.3h2.39V1153.5h-2.39zM1151.71 1091.5h2.39V1161.5h-2.39zM1154.09 1083.9h2.39V1163.4h-2.39zM1156.48 1068.7h2.39V1147.0h-2.39zM1158.86 1086.0h2.39V1167.4h-2.39zM1161.25 1084.6h2.39V1161.5h-2.39zM1163.64 1069.4h2.39V1150.8h-2.39zM1166.02 1092.0h2.39V1162.7h-2.39zM1168.41 1085.5h2.39V1159.8h-2.39zM1170.79 1078.3h2.39V1162.8h-2.39zM1173.18 1081.1h2.39V1156.5h-2.39zM1175.56 1097.8h2.39V1163.1h-2.39zM1177.95 1069.1h2.39V1149.1h-2.39zM1180.33 1074.3h2.39V1150.6h-2.39zM1182.72 1062.2h2.39V1156.4h-2.39zM1185.10 1085.9h2.39V1161.9h-2.39zM1187.49 1093.9h2.39V1169.7h-2.39zM1189.88 1095.2h2.39V1170.8h-2.39zM1192.26 1094.7h2.39V1166.3h-2.39zM1194.65 1088.2h2.39V1160.6h-2.39zM1197.03 1077.5h2.39V1151.0h-2.39zM1199.42 1091.1h2.39V1171.8h-2.39zM1201.80 1102.4h2.39V1166.7h-2.39zM1204.19 1096.9h2.39V1160.9h-2.39zM1206.57 1087.4h2.39V1160.3h-2.39zM1208.96 1080.6h2.39V1162.0h-2.39zM1211.34 1084.6h2.39V1159.2h-2.39zM1213.73 1098.9h2.39V1167.8h-2.39zM1216.11 1101.2h2.39V1167.7h-2.39zM1220.89 1096.6h2.39V1175.4h-2.39zM1223.27 1109.5h2.39V1179.2h-2.39zM1225.66 1075.6h2.39V1150.6h-2.39zM1228.04 1087.0h2.39V1154.5h-2.39zM1230.43 1095.7h2.39V1174.4h-2.39zM1232.81 1080.2h2.39V1164.5h-2.39zM1235.20 1082.3h2.39V1155.2h-2.39zM1237.58 1090.6h2.39V1160.5h-2.39zM1239.97 1066.1h2.39V1152.1h-2.39zM1242.35 1064.8h2.39V1147.9h-2.39zM1244.74 1101.1h2.39V1169.1h-2.39zM1247.12 1081.7h2.39V1161.3h-2.39zM1249.51 1079.7h2.39V1157.6h-2.39zM1251.90 1076.6h2.39V1149.9h-2.39zM1254.28 1077.3h2.39V1165.8h-2.39zM1256.67 1078.0h2.39V1164.5h-2.39zM1259.05 1078.2h2.39V1151.3h-2.39zM1261.44 1071.8h2.39V1162.8h-2.39zM1263.82 1082.8h2.39V1156.9h-2.39zM1266.21 1086.6h2.39V1154.8h-2.39zM1268.59 1098.0h2.39V1168.0h-2.39zM1270.98 1088.3h2.39V1164.4h-2.39zM1273.36 1083.6h2.39V1160.7h-2.39zM1275.75 1091.5h2.39V1163.4h-2.39zM1278.14 1082.8h2.39V1166.2h-2.39zM1280.52 1082.8h2.39V1159.2h-2.39zM1282.91 1078.9h2.39V1155.1h-2.39zM1285.29 1090.3h2.39V1164.4h-2.39zM1287.68 1083.2h2.39V1162.7h-2.39zM1290.06 1085.5h2.39V1167.6h-2.39zM1292.45 1085.4h2.39V1156.4h-2.39zM1294.83 1082.2h2.39V1177.0h-2.39zM1297.22 1082.3h2.39V1166.5h-2.39zM1299.60 1078.1h2.39V1162.1h-2.39zM1301.99 1059.5h2.39V1140.3h-2.39zM1304.38 1089.7h2.39V1155.3h-2.39zM1306.76 1079.9h2.39V1154.0h-2.39zM1309.15 1093.1h2.39V1158.7h-2.39zM1311.53 1091.9h2.39V1169.2h-2.39zM1313.92 1079.0h2.39V1160.6h-2.39zM1316.30 1091.7h2.39V1158.7h-2.39zM1318.69 1064.9h2.39V1136.8h-2.39zM1321.07 1076.0h2.39V1154.1h-2.39zM1323.46 1081.1h2.39V1154.3h-2.39zM1325.84 1094.2h2.39V1170.0h-2.39zM1328.23 1101.8h2.39V1172.1h-2.39zM1330.61 1077.5h2.39V1150.3h-2.39zM1333.00 1093.6h2.39V1162.6h-2.39zM1335.39 1065.1h2.39V1147.7h-2.39zM1337.77 1077.7h2.39V1158.1h-2.39zM1340.16 1085.4h2.39V1154.3h-2.39zM1342.54 1076.5h2.39V1147.8h-2.39zM1344.93 1072.2h2.39V1153.4h-2.39zM1347.31 1087.6h2.39V1165.7h-2.39zM1349.70 1086.9h2.39V1175.5h-2.39zM1352.08 1111.2h2.39V1179.6h-2.39zM1354.47 1103.9h2.39V1168.7h-2.39zM1356.85 1107.9h2.39V1179.3h-2.39zM1359.24 1080.6h2.39V1157.0h-2.39zM1361.62 1083.5h2.39V1157.4h-2.39zM1364.01 1085.7h2.39V1169.3h-2.39zM1366.40 1091.8h2.39V1174.8h-2.39zM1368.78 1095.1h2.39V1163.5h-2.39zM1371.17 1103.8h2.39V1169.5h-2.39zM1373.55 1067.3h2.39V1141.4h-2.39zM1375.94 1075.1h2.39V1145.4h-2.39zM1378.32 1093.0h2.39V1154.9h-2.39zM1380.71 1101.5h2.39V1163.1h-2.39zM1383.09 1089.3h2.39V1160.2h-2.39zM1385.48 1086.3h2.39V1153.2h-2.39zM1387.86 1088.0h2.39V1162.0h-2.39zM1390.25 1096.7h2.39V1168.8h-2.39zM1392.64 1091.6h2.39V1163.5h-2.39zM1395.02 1088.1h2.39V1154.3h-2.39zM1397.41 1093.5h2.39V1161.4h-2.39zM1399.79 1089.9h2.39V1164.7h-2.39zM1402.18 1051.3h2.39V1146.3h-2.39zM1404.56 1085.9h2.39V1163.2h-2.39zM1406.95 1078.5h2.39V1156.3h-2.39zM1409.33 1072.9h2.39V1157.1h-2.39zM1411.72 1082.7h2.39V1144.8h-2.39zM1414.10 1089.8h2.39V1164.3h-2.39zM1416.49 1082.8h2.39V1155.3h-2.39zM1418.88 1086.9h2.39V1166.4h-2.39zM1421.26 1088.7h2.39V1166.8h-2.39zM1423.65 1073.7h2.39V1156.8h-2.39zM1426.03 1103.9h2.39V1177.1h-2.39zM1428.42 1087.9h2.39V1166.6h-2.39zM1430.80 1085.8h2.39V1155.5h-2.39zM1433.19 1079.7h2.39V1165.0h-2.39zM1435.57 1103.3h2.39V1183.4h-2.39zM1437.96 1082.0h2.39V1163.5h-2.39zM1440.34 1089.8h2.39V1166.7h-2.39zM1442.73 1081.7h2.39V1172.2h-2.39zM1445.11 1090.0h2.39V1160.4h-2.39zM1447.50 1083.2h2.39V1156.5h-2.39zM1449.89 1080.7h2.39V1152.6h-2.39zM1452.27 1102.3h2.39V1174.9h-2.39zM1454.66 1091.5h2.39V1164.3h-2.39zM1457.04 1087.7h2.39V1156.1h-2.39zM1459.43 1094.9h2.39V1162.9h-2.39zM1461.81 1084.7h2.39V1159.3h-2.39zM1464.20 1090.8h2.39V1167.0h-2.39zM1466.58 1095.8h2.39V1157.6h-2.39zM1468.97 1071.7h2.39V1155.8h-2.39zM1471.35 1087.8h2.39V1158.2h-2.39zM1473.74 1070.1h2.39V1155.3h-2.39zM1476.12 1084.9h2.39V1156.7h-2.39zM1478.51 1076.2h2.39V1147.7h-2.39zM1480.90 1092.9h2.39V1162.4h-2.39zM1483.28 1079.0h2.39V1157.1h-2.39zM1485.67 1087.7h2.39V1172.2h-2.39zM1488.05 1099.0h2.39V1163.5h-2.39zM1490.44 1113.0h2.39V1171.3h-2.39zM1492.82 1108.0h2.39V1167.2h-2.39zM1495.21 1100.7h2.39V1172.0h-2.39zM1497.59 1072.3h2.39V1151.3h-2.39zM1499.98 1066.6h2.39V1152.3h-2.39zM1502.36 1079.7h2.39V1151.8h-2.39zM1504.75 1065.6h2.39V1153.0h-2.39zM1507.14 1075.4h2.39V1155.7h-2.39zM1509.52 1076.5h2.39V1159.8h-2.39zM1511.91 1070.2h2.39V1153.2h-2.39zM1514.29 1082.3h2.39V1164.8h-2.39zM1516.68 1100.9h2.39V1175.8h-2.39zM1519.06 1095.4h2.39V1167.1h-2.39zM1521.45 1086.8h2.39V1157.0h-2.39zM1523.83 1092.2h2.39V1166.9h-2.39zM1526.22 1079.4h2.39V1157.4h-2.39zM1528.60 1093.9h2.39V1174.6h-2.39zM1530.99 1078.4h2.39V1152.9h-2.39zM1533.38 1082.0h2.39V1158.8h-2.39zM1535.76 1098.7h2.39V1175.2h-2.39zM1538.15 1099.6h2.39V1173.6h-2.39zM1540.53 1067.8h2.39V1144.6h-2.39zM1542.92 1080.9h2.39V1151.9h-2.39zM1545.30 1083.9h2.39V1157.4h-2.39zM1547.69 1069.0h2.39V1157.9h-2.39zM1550.07 1085.8h2.39V1163.4h-2.39zM1552.46 1080.2h2.39V1155.6h-2.39zM1554.84 1089.4h2.39V1164.4h-2.39zM1557.23 1096.9h2.39V1164.1h-2.39zM1559.61 1084.2h2.39V1158.8h-2.39z" fill="#d2e3ef"/><path d="M876.59 1076.3h0.7V1152.8h-0.7zM878.97 1073.4h0.7V1160.0h-0.7zM881.36 1090.8h0.7V1162.3h-0.7zM883.74 1085.3h0.7V1167.6h-0.7zM886.13 1071.8h0.7V1150.7h-0.7zM888.51 1094.1h0.7V1164.4h-0.7zM890.90 1090.1h0.7V1166.0h-0.7zM893.28 1102.3h0.7V1169.6h-0.7zM895.67 1102.1h0.7V1173.5h-0.7zM898.05 1083.9h0.7V1151.1h-0.7zM900.44 1097.3h0.7V1169.4h-0.7zM902.83 1087.2h0.7V1162.6h-0.7zM905.21 1077.8h0.7V1154.8h-0.7zM907.60 1088.1h0.7V1158.1h-0.7zM909.98 1077.1h0.7V1145.1h-0.7zM912.37 1099.6h0.7V1172.1h-0.7zM914.75 1086.7h0.7V1155.1h-0.7zM917.14 1072.3h0.7V1145.1h-0.7zM919.52 1074.8h0.7V1152.6h-0.7zM921.91 1076.8h0.7V1157.0h-0.7zM924.29 1090.5h0.7V1179.2h-0.7zM926.68 1064.1h0.7V1156.3h-0.7zM929.06 1080.4h0.7V1153.8h-0.7zM931.45 1085.3h0.7V1150.5h-0.7zM933.84 1084.7h0.7V1167.0h-0.7zM936.22 1079.7h0.7V1161.1h-0.7zM938.61 1078.1h0.7V1155.5h-0.7zM940.99 1081.5h0.7V1160.1h-0.7zM943.38 1083.7h0.7V1161.4h-0.7zM945.76 1081.1h0.7V1161.4h-0.7zM948.15 1071.9h0.7V1154.7h-0.7zM950.53 1075.3h0.7V1155.4h-0.7zM952.92 1090.8h0.7V1163.5h-0.7zM955.30 1096.8h0.7V1169.8h-0.7zM957.69 1079.9h0.7V1160.4h-0.7zM960.08 1076.8h0.7V1165.2h-0.7zM962.46 1087.0h0.7V1161.8h-0.7zM964.85 1092.1h0.7V1167.5h-0.7zM967.23 1078.7h0.7V1160.7h-0.7zM969.62 1082.7h0.7V1155.1h-0.7zM972.00 1087.5h0.7V1153.0h-0.7zM974.39 1072.9h0.7V1157.8h-0.7zM976.77 1081.1h0.7V1162.8h-0.7zM979.16 1083.2h0.7V1162.1h-0.7zM981.54 1071.6h0.7V1152.4h-0.7zM983.93 1084.2h0.7V1155.1h-0.7zM986.31 1101.3h0.7V1178.1h-0.7zM988.70 1071.9h0.7V1156.1h-0.7zM991.09 1089.5h0.7V1167.9h-0.7zM993.47 1077.5h0.7V1163.9h-0.7zM995.86 1095.0h0.7V1168.2h-0.7zM998.24 1088.0h0.7V1167.4h-0.7zM1000.63 1103.9h0.7V1162.4h-0.7zM1003.01 1097.7h0.7V1163.7h-0.7zM1005.40 1085.0h0.7V1164.3h-0.7zM1007.78 1093.2h0.7V1164.6h-0.7zM1010.17 1094.4h0.7V1165.6h-0.7zM1012.55 1087.3h0.7V1157.8h-0.7zM1014.94 1081.0h0.7V1165.6h-0.7zM1017.32 1084.7h0.7V1161.5h-0.7zM1019.71 1109.1h0.7V1182.9h-0.7zM1022.10 1099.9h0.7V1170.0h-0.7zM1024.48 1105.6h0.7V1171.9h-0.7zM1026.87 1104.8h0.7V1167.1h-0.7zM1029.25 1105.3h0.7V1168.1h-0.7zM1031.64 1095.3h0.7V1159.2h-0.7zM1034.02 1078.7h0.7V1157.1h-0.7zM1036.41 1073.9h0.7V1166.9h-0.7zM1038.79 1095.8h0.7V1160.5h-0.7zM1041.18 1099.1h0.7V1168.9h-0.7zM1043.56 1090.5h0.7V1165.9h-0.7zM1045.95 1078.5h0.7V1168.8h-0.7zM1048.34 1076.9h0.7V1154.3h-0.7zM1050.72 1073.4h0.7V1146.6h-0.7zM1053.11 1072.5h0.7V1150.0h-0.7zM1055.49 1083.0h0.7V1164.7h-0.7zM1057.88 1089.3h0.7V1167.6h-0.7zM1060.26 1080.9h0.7V1156.7h-0.7zM1062.65 1081.3h0.7V1156.2h-0.7zM1065.03 1083.2h0.7V1162.3h-0.7zM1067.42 1072.0h0.7V1157.2h-0.7zM1069.80 1078.6h0.7V1157.5h-0.7zM1072.19 1078.5h0.7V1159.2h-0.7zM1074.58 1103.8h0.7V1173.4h-0.7zM1076.96 1085.7h0.7V1158.8h-0.7zM1079.35 1100.1h0.7V1172.8h-0.7zM1081.73 1085.6h0.7V1158.8h-0.7zM1084.12 1088.8h0.7V1161.1h-0.7zM1086.50 1084.5h0.7V1153.9h-0.7zM1088.89 1079.5h0.7V1170.7h-0.7zM1091.27 1082.0h0.7V1161.4h-0.7zM1093.66 1069.8h0.7V1154.6h-0.7zM1096.04 1096.7h0.7V1177.1h-0.7zM1098.43 1070.8h0.7V1151.5h-0.7zM1100.81 1078.3h0.7V1160.6h-0.7zM1103.20 1106.3h0.7V1167.2h-0.7zM1105.59 1090.2h0.7V1160.3h-0.7zM1107.97 1078.2h0.7V1150.8h-0.7zM1110.36 1089.7h0.7V1155.2h-0.7zM1112.74 1093.0h0.7V1168.3h-0.7zM1115.13 1076.5h0.7V1160.7h-0.7zM1117.51 1072.9h0.7V1155.9h-0.7zM1119.90 1080.8h0.7V1152.6h-0.7zM1122.28 1076.8h0.7V1155.5h-0.7zM1124.67 1087.6h0.7V1155.9h-0.7zM1127.05 1097.1h0.7V1159.7h-0.7zM1129.44 1086.4h0.7V1178.3h-0.7zM1131.83 1094.4h0.7V1166.3h-0.7zM1134.21 1085.8h0.7V1157.4h-0.7zM1136.60 1105.2h0.7V1172.3h-0.7zM1138.98 1089.1h0.7V1164.8h-0.7zM1141.37 1089.7h0.7V1168.8h-0.7zM1143.75 1092.6h0.7V1165.0h-0.7zM1146.14 1090.2h0.7V1164.0h-0.7zM1148.52 1079.8h0.7V1155.5h-0.7zM1150.91 1074.3h0.7V1153.5h-0.7zM1153.29 1091.5h0.7V1161.5h-0.7zM1155.68 1083.9h0.7V1163.4h-0.7zM1158.06 1068.7h0.7V1147.0h-0.7zM1160.45 1086.0h0.7V1167.4h-0.7zM1162.84 1084.6h0.7V1161.5h-0.7zM1165.22 1069.4h0.7V1150.8h-0.7zM1167.61 1092.0h0.7V1162.7h-0.7zM1169.99 1085.5h0.7V1159.8h-0.7zM1172.38 1078.3h0.7V1162.8h-0.7zM1174.76 1081.1h0.7V1156.5h-0.7zM1177.15 1097.8h0.7V1163.1h-0.7zM1179.53 1069.1h0.7V1149.1h-0.7zM1181.92 1074.3h0.7V1150.6h-0.7zM1184.30 1062.2h0.7V1156.4h-0.7zM1186.69 1085.9h0.7V1161.9h-0.7zM1189.08 1093.9h0.7V1169.7h-0.7zM1191.46 1095.2h0.7V1170.8h-0.7zM1193.85 1094.7h0.7V1166.3h-0.7zM1196.23 1088.2h0.7V1160.6h-0.7zM1198.62 1077.5h0.7V1151.0h-0.7zM1201.00 1091.1h0.7V1171.8h-0.7zM1203.39 1102.4h0.7V1166.7h-0.7zM1205.77 1096.9h0.7V1160.9h-0.7zM1208.16 1087.4h0.7V1160.3h-0.7zM1210.54 1080.6h0.7V1162.0h-0.7zM1212.93 1084.6h0.7V1159.2h-0.7zM1215.31 1098.9h0.7V1167.8h-0.7zM1217.70 1101.2h0.7V1167.7h-0.7zM1222.47 1096.6h0.7V1175.4h-0.7zM1224.86 1109.5h0.7V1179.2h-0.7zM1227.24 1075.6h0.7V1150.6h-0.7zM1229.63 1087.0h0.7V1154.5h-0.7zM1232.01 1095.7h0.7V1174.4h-0.7zM1234.40 1080.2h0.7V1164.5h-0.7zM1236.78 1082.3h0.7V1155.2h-0.7zM1239.17 1090.6h0.7V1160.5h-0.7zM1241.55 1066.1h0.7V1152.1h-0.7zM1243.94 1064.8h0.7V1147.9h-0.7zM1246.33 1101.1h0.7V1169.1h-0.7zM1248.71 1081.7h0.7V1161.3h-0.7zM1251.10 1079.7h0.7V1157.6h-0.7zM1253.48 1076.6h0.7V1149.9h-0.7zM1255.87 1077.3h0.7V1165.8h-0.7zM1258.25 1078.0h0.7V1164.5h-0.7zM1260.64 1078.2h0.7V1151.3h-0.7zM1263.02 1071.8h0.7V1162.8h-0.7zM1265.41 1082.8h0.7V1156.9h-0.7zM1267.79 1086.6h0.7V1154.8h-0.7zM1270.18 1098.0h0.7V1168.0h-0.7zM1272.56 1088.3h0.7V1164.4h-0.7zM1274.95 1083.6h0.7V1160.7h-0.7zM1277.34 1091.5h0.7V1163.4h-0.7zM1279.72 1082.8h0.7V1166.2h-0.7zM1282.11 1082.8h0.7V1159.2h-0.7zM1284.49 1078.9h0.7V1155.1h-0.7zM1286.88 1090.3h0.7V1164.4h-0.7zM1289.26 1083.2h0.7V1162.7h-0.7zM1291.65 1085.5h0.7V1167.6h-0.7zM1294.03 1085.4h0.7V1156.4h-0.7zM1296.42 1082.2h0.7V1177.0h-0.7zM1298.80 1082.3h0.7V1166.5h-0.7zM1301.19 1078.1h0.7V1162.1h-0.7zM1303.58 1059.5h0.7V1140.3h-0.7zM1305.96 1089.7h0.7V1155.3h-0.7zM1308.35 1079.9h0.7V1154.0h-0.7zM1310.73 1093.1h0.7V1158.7h-0.7zM1313.12 1091.9h0.7V1169.2h-0.7zM1315.50 1079.0h0.7V1160.6h-0.7zM1317.89 1091.7h0.7V1158.7h-0.7zM1320.27 1064.9h0.7V1136.8h-0.7zM1322.66 1076.0h0.7V1154.1h-0.7zM1325.04 1081.1h0.7V1154.3h-0.7zM1327.43 1094.2h0.7V1170.0h-0.7zM1329.81 1101.8h0.7V1172.1h-0.7zM1332.20 1077.5h0.7V1150.3h-0.7zM1334.59 1093.6h0.7V1162.6h-0.7zM1336.97 1065.1h0.7V1147.7h-0.7zM1339.36 1077.7h0.7V1158.1h-0.7zM1341.74 1085.4h0.7V1154.3h-0.7zM1344.13 1076.5h0.7V1147.8h-0.7zM1346.51 1072.2h0.7V1153.4h-0.7zM1348.90 1087.6h0.7V1165.7h-0.7zM1351.28 1086.9h0.7V1175.5h-0.7zM1353.67 1111.2h0.7V1179.6h-0.7zM1356.05 1103.9h0.7V1168.7h-0.7zM1358.44 1107.9h0.7V1179.3h-0.7zM1360.83 1080.6h0.7V1157.0h-0.7zM1363.21 1083.5h0.7V1157.4h-0.7zM1365.60 1085.7h0.7V1169.3h-0.7zM1367.98 1091.8h0.7V1174.8h-0.7zM1370.37 1095.1h0.7V1163.5h-0.7zM1372.75 1103.8h0.7V1169.5h-0.7zM1375.14 1067.3h0.7V1141.4h-0.7zM1377.52 1075.1h0.7V1145.4h-0.7zM1379.91 1093.0h0.7V1154.9h-0.7zM1382.29 1101.5h0.7V1163.1h-0.7zM1384.68 1089.3h0.7V1160.2h-0.7zM1387.06 1086.3h0.7V1153.2h-0.7zM1389.45 1088.0h0.7V1162.0h-0.7zM1391.84 1096.7h0.7V1168.8h-0.7zM1394.22 1091.6h0.7V1163.5h-0.7zM1396.61 1088.1h0.7V1154.3h-0.7zM1398.99 1093.5h0.7V1161.4h-0.7zM1401.38 1089.9h0.7V1164.7h-0.7zM1403.76 1051.3h0.7V1146.3h-0.7zM1406.15 1085.9h0.7V1163.2h-0.7zM1408.53 1078.5h0.7V1156.3h-0.7zM1410.92 1072.9h0.7V1157.1h-0.7zM1413.30 1082.7h0.7V1144.8h-0.7zM1415.69 1089.8h0.7V1164.3h-0.7zM1418.08 1082.8h0.7V1155.3h-0.7zM1420.46 1086.9h0.7V1166.4h-0.7zM1422.85 1088.7h0.7V1166.8h-0.7zM1425.23 1073.7h0.7V1156.8h-0.7zM1427.62 1103.9h0.7V1177.1h-0.7zM1430.00 1087.9h0.7V1166.6h-0.7zM1432.39 1085.8h0.7V1155.5h-0.7zM1434.77 1079.7h0.7V1165.0h-0.7zM1437.16 1103.3h0.7V1183.4h-0.7zM1439.54 1082.0h0.7V1163.5h-0.7zM1441.93 1089.8h0.7V1166.7h-0.7zM1444.31 1081.7h0.7V1172.2h-0.7zM1446.70 1090.0h0.7V1160.4h-0.7zM1449.09 1083.2h0.7V1156.5h-0.7zM1451.47 1080.7h0.7V1152.6h-0.7zM1453.86 1102.3h0.7V1174.9h-0.7zM1456.24 1091.5h0.7V1164.3h-0.7zM1458.63 1087.7h0.7V1156.1h-0.7zM1461.01 1094.9h0.7V1162.9h-0.7zM1463.40 1084.7h0.7V1159.3h-0.7zM1465.78 1090.8h0.7V1167.0h-0.7zM1468.17 1095.8h0.7V1157.6h-0.7zM1470.55 1071.7h0.7V1155.8h-0.7zM1472.94 1087.8h0.7V1158.2h-0.7zM1475.33 1070.1h0.7V1155.3h-0.7zM1477.71 1084.9h0.7V1156.7h-0.7zM1480.10 1076.2h0.7V1147.7h-0.7zM1482.48 1092.9h0.7V1162.4h-0.7zM1484.87 1079.0h0.7V1157.1h-0.7zM1487.25 1087.7h0.7V1172.2h-0.7zM1489.64 1099.0h0.7V1163.5h-0.7zM1492.02 1113.0h0.7V1171.3h-0.7zM1494.41 1108.0h0.7V1167.2h-0.7zM1496.79 1100.7h0.7V1172.0h-0.7zM1499.18 1072.3h0.7V1151.3h-0.7zM1501.56 1066.6h0.7V1152.3h-0.7zM1503.95 1079.7h0.7V1151.8h-0.7zM1506.34 1065.6h0.7V1153.0h-0.7zM1508.72 1075.4h0.7V1155.7h-0.7zM1511.11 1076.5h0.7V1159.8h-0.7zM1513.49 1070.2h0.7V1153.2h-0.7zM1515.88 1082.3h0.7V1164.8h-0.7zM1518.26 1100.9h0.7V1175.8h-0.7zM1520.65 1095.4h0.7V1167.1h-0.7zM1523.03 1086.8h0.7V1157.0h-0.7zM1525.42 1092.2h0.7V1166.9h-0.7zM1527.80 1079.4h0.7V1157.4h-0.7zM1530.19 1093.9h0.7V1174.6h-0.7zM1532.58 1078.4h0.7V1152.9h-0.7zM1534.96 1082.0h0.7V1158.8h-0.7zM1537.35 1098.7h0.7V1175.2h-0.7zM1539.73 1099.6h0.7V1173.6h-0.7zM1542.12 1067.8h0.7V1144.6h-0.7zM1544.50 1080.9h0.7V1151.9h-0.7zM1546.89 1083.9h0.7V1157.4h-0.7zM1549.27 1069.0h0.7V1157.9h-0.7zM1551.66 1085.8h0.7V1163.4h-0.7zM1554.04 1080.2h0.7V1155.6h-0.7zM1556.43 1089.4h0.7V1164.4h-0.7zM1558.81 1096.9h0.7V1164.1h-0.7zM1561.20 1084.2h0.7V1158.8h-0.7zM1562.00 1161.5h1.1V1201.6h-1.1z" fill="#e6f0f7"/><path d="M875.00 985.1h2.39V1076.3h-2.39zM877.39 979.1h2.39V1073.4h-2.39zM879.77 1021.4h2.39V1090.8h-2.39zM882.16 1007.4h2.39V1085.3h-2.39zM884.54 1017.3h2.39V1071.8h-2.39zM886.93 1059.4h2.39V1094.1h-2.39zM889.31 1035.9h2.39V1090.1h-2.39zM891.70 1015.5h2.39V1102.3h-2.39zM894.08 1031.1h2.39V1102.1h-2.39zM896.47 1050.4h2.39V1083.9h-2.39zM898.85 1029.4h2.39V1097.3h-2.39zM901.24 1006.0h2.39V1087.2h-2.39zM903.62 1005.0h2.39V1077.8h-2.39zM906.01 1003.6h2.39V1088.1h-2.39zM908.40 999.9h2.39V1077.1h-2.39zM910.78 1024.4h2.39V1099.6h-2.39zM913.17 1005.8h2.39V1086.7h-2.39zM915.55 1036.0h2.39V1072.3h-2.39zM917.94 1007.2h2.39V1074.8h-2.39zM920.32 1034.0h2.39V1076.8h-2.39zM922.71 1011.7h2.39V1090.5h-2.39zM925.09 982.8h2.39V1064.1h-2.39zM927.48 996.6h2.39V1080.4h-2.39zM929.86 1013.7h2.39V1085.3h-2.39zM932.25 1030.2h2.39V1084.7h-2.39zM934.64 1008.9h2.39V1079.7h-2.39zM937.02 1004.5h2.39V1078.1h-2.39zM939.41 1005.7h2.39V1081.5h-2.39zM941.79 1013.0h2.39V1083.7h-2.39zM944.18 1024.3h2.39V1081.1h-2.39zM946.56 986.3h2.39V1071.9h-2.39zM948.95 1001.1h2.39V1075.3h-2.39zM951.33 1018.3h2.39V1090.8h-2.39zM953.72 1055.7h2.39V1096.8h-2.39zM956.10 1007.9h2.39V1079.9h-2.39zM958.49 990.9h2.39V1076.8h-2.39zM960.88 1028.7h2.39V1087.0h-2.39zM963.26 1022.6h2.39V1092.1h-2.39zM965.65 1021.0h2.39V1078.7h-2.39zM968.03 1012.9h2.39V1082.7h-2.39zM970.42 1017.4h2.39V1087.5h-2.39zM972.80 1002.4h2.39V1072.9h-2.39zM975.19 989.6h2.39V1081.1h-2.39zM977.57 1015.0h2.39V1083.2h-2.39zM979.96 997.6h2.39V1071.6h-2.39zM982.34 1016.2h2.39V1084.2h-2.39zM984.73 1031.8h2.39V1101.3h-2.39zM987.11 1032.2h2.39V1071.9h-2.39zM989.50 1044.8h2.39V1089.5h-2.39zM991.89 1013.8h2.39V1077.5h-2.39zM994.27 1019.7h2.39V1095.0h-2.39zM996.66 1029.6h2.39V1088.0h-2.39zM999.04 1038.2h2.39V1103.9h-2.39zM1001.43 974.9h2.39V1097.7h-2.39zM1003.81 995.3h2.39V1085.0h-2.39zM1006.20 1030.7h2.39V1093.2h-2.39zM1008.58 1024.2h2.39V1094.4h-2.39zM1010.97 1006.2h2.39V1087.3h-2.39zM1013.35 988.5h2.39V1081.0h-2.39zM1015.74 994.2h2.39V1084.7h-2.39zM1018.12 1007.8h2.39V1109.1h-2.39zM1020.51 1037.0h2.39V1099.9h-2.39zM1022.90 1043.9h2.39V1105.6h-2.39zM1025.28 1037.4h2.39V1104.8h-2.39zM1027.67 1038.6h2.39V1105.3h-2.39zM1030.05 1045.3h2.39V1095.3h-2.39zM1032.44 989.3h2.39V1078.7h-2.39zM1034.82 1016.5h2.39V1073.9h-2.39zM1037.21 1002.3h2.39V1095.8h-2.39zM1039.59 1007.8h2.39V1099.1h-2.39zM1041.98 1030.4h2.39V1090.5h-2.39zM1044.36 1030.7h2.39V1078.5h-2.39zM1046.75 1001.0h2.39V1076.9h-2.39zM1049.14 990.6h2.39V1073.4h-2.39zM1051.52 1008.0h2.39V1072.5h-2.39zM1053.91 1005.9h2.39V1083.0h-2.39zM1056.29 1023.0h2.39V1089.3h-2.39zM1058.68 1005.8h2.39V1080.9h-2.39zM1061.06 1016.3h2.39V1081.3h-2.39zM1063.45 1017.6h2.39V1083.2h-2.39zM1065.83 984.5h2.39V1072.0h-2.39zM1068.22 1002.1h2.39V1078.6h-2.39zM1070.60 993.3h2.39V1078.5h-2.39zM1072.99 1022.1h2.39V1103.8h-2.39zM1075.38 1023.2h2.39V1085.7h-2.39zM1077.76 1004.8h2.39V1100.1h-2.39zM1080.15 1015.9h2.39V1085.6h-2.39zM1082.53 995.1h2.39V1088.8h-2.39zM1084.92 1014.0h2.39V1084.5h-2.39zM1087.30 998.8h2.39V1079.5h-2.39zM1089.69 994.0h2.39V1082.0h-2.39zM1092.07 1007.3h2.39V1069.8h-2.39zM1094.46 1045.2h2.39V1096.7h-2.39zM1096.84 1010.8h2.39V1070.8h-2.39zM1099.23 1003.4h2.39V1078.3h-2.39zM1101.61 1011.5h2.39V1106.3h-2.39zM1104.00 1055.7h2.39V1090.2h-2.39zM1106.39 1038.1h2.39V1078.2h-2.39zM1108.77 1027.0h2.39V1089.7h-2.39zM1111.16 1042.5h2.39V1093.0h-2.39zM1113.54 999.9h2.39V1076.5h-2.39zM1115.93 987.8h2.39V1072.9h-2.39zM1118.31 994.4h2.39V1080.8h-2.39zM1120.70 993.4h2.39V1076.8h-2.39zM1123.08 1018.2h2.39V1087.6h-2.39zM1125.47 1018.1h2.39V1097.1h-2.39zM1127.85 1000.5h2.39V1086.4h-2.39zM1130.24 1040.3h2.39V1094.4h-2.39zM1132.62 1055.1h2.39V1085.8h-2.39zM1135.01 1028.8h2.39V1105.2h-2.39zM1137.40 1050.3h2.39V1089.1h-2.39zM1139.78 1010.6h2.39V1089.7h-2.39zM1142.17 1035.2h2.39V1092.6h-2.39zM1144.55 1024.4h2.39V1090.2h-2.39zM1146.94 1021.4h2.39V1079.8h-2.39zM1149.32 987.8h2.39V1074.3h-2.39zM1151.71 1002.1h2.39V1091.5h-2.39zM1154.09 1045.3h2.39V1083.9h-2.39zM1156.48 1012.5h2.39V1068.7h-2.39zM1158.86 1013.5h2.39V1086.0h-2.39zM1161.25 996.2h2.39V1084.6h-2.39zM1163.64 991.9h2.39V1069.4h-2.39zM1166.02 1025.9h2.39V1092.0h-2.39zM1168.41 1006.3h2.39V1085.5h-2.39zM1170.79 1021.1h2.39V1078.3h-2.39zM1173.18 1001.3h2.39V1081.1h-2.39zM1175.56 1027.8h2.39V1097.8h-2.39zM1177.95 1014.7h2.39V1069.1h-2.39zM1180.33 1003.5h2.39V1074.3h-2.39zM1182.72 970.6h2.39V1062.2h-2.39zM1185.10 1006.5h2.39V1085.9h-2.39zM1187.49 1025.3h2.39V1093.9h-2.39zM1189.88 1027.3h2.39V1095.2h-2.39zM1192.26 1001.5h2.39V1094.7h-2.39zM1194.65 1012.6h2.39V1088.2h-2.39zM1197.03 998.7h2.39V1077.5h-2.39zM1199.42 1022.6h2.39V1091.1h-2.39zM1201.80 1052.3h2.39V1102.4h-2.39zM1204.19 1030.6h2.39V1096.9h-2.39zM1206.57 1021.7h2.39V1087.4h-2.39zM1208.96 1019.6h2.39V1080.6h-2.39zM1211.34 1008.5h2.39V1084.6h-2.39zM1213.73 1062.4h2.39V1098.9h-2.39zM1216.11 1028.6h2.39V1101.2h-2.39zM1220.89 1035.6h2.39V1096.6h-2.39zM1223.27 1065.1h2.39V1109.5h-2.39zM1225.66 994.7h2.39V1075.6h-2.39zM1228.04 982.8h2.39V1087.0h-2.39zM1230.43 1011.3h2.39V1095.7h-2.39zM1232.81 990.2h2.39V1080.2h-2.39zM1235.20 1027.1h2.39V1082.3h-2.39zM1237.58 1014.1h2.39V1090.6h-2.39zM1239.97 993.3h2.39V1066.1h-2.39zM1242.35 1004.5h2.39V1064.8h-2.39zM1244.74 1029.6h2.39V1101.1h-2.39zM1247.12 1004.7h2.39V1081.7h-2.39zM1249.51 1004.9h2.39V1079.7h-2.39zM1251.90 1006.8h2.39V1076.6h-2.39zM1254.28 1025.4h2.39V1077.3h-2.39zM1256.67 1016.0h2.39V1078.0h-2.39zM1259.05 1011.5h2.39V1078.2h-2.39zM1261.44 990.4h2.39V1071.8h-2.39zM1263.82 996.8h2.39V1082.8h-2.39zM1266.21 991.8h2.39V1086.6h-2.39zM1268.59 1010.5h2.39V1098.0h-2.39zM1270.98 1009.3h2.39V1088.3h-2.39zM1273.36 1003.7h2.39V1083.6h-2.39zM1275.75 980.9h2.39V1091.5h-2.39zM1278.14 1031.0h2.39V1082.8h-2.39zM1280.52 1012.6h2.39V1082.8h-2.39zM1282.91 992.2h2.39V1078.9h-2.39zM1285.29 1014.4h2.39V1090.3h-2.39zM1287.68 1004.4h2.39V1083.2h-2.39zM1290.06 977.1h2.39V1085.5h-2.39zM1292.45 999.3h2.39V1085.4h-2.39zM1294.83 1027.6h2.39V1082.2h-2.39zM1297.22 1013.6h2.39V1082.3h-2.39zM1299.60 997.3h2.39V1078.1h-2.39zM1301.99 978.2h2.39V1059.5h-2.39zM1304.38 994.4h2.39V1089.7h-2.39zM1306.76 1011.8h2.39V1079.9h-2.39zM1309.15 1017.0h2.39V1093.1h-2.39zM1311.53 1036.1h2.39V1091.9h-2.39zM1313.92 1017.8h2.39V1079.0h-2.39zM1316.30 1014.8h2.39V1091.7h-2.39zM1318.69 972.4h2.39V1064.9h-2.39zM1321.07 1027.7h2.39V1076.0h-2.39zM1323.46 1009.9h2.39V1081.1h-2.39zM1325.84 1024.6h2.39V1094.2h-2.39zM1328.23 1018.4h2.39V1101.8h-2.39zM1330.61 1001.5h2.39V1077.5h-2.39zM1333.00 1027.0h2.39V1093.6h-2.39zM1335.39 970.6h2.39V1065.1h-2.39zM1337.77 1016.4h2.39V1077.7h-2.39zM1340.16 995.2h2.39V1085.4h-2.39zM1342.54 1002.4h2.39V1076.5h-2.39zM1344.93 994.6h2.39V1072.2h-2.39zM1347.31 1038.3h2.39V1087.6h-2.39zM1349.70 1032.9h2.39V1086.9h-2.39zM1352.08 1036.9h2.39V1111.2h-2.39zM1354.47 1026.9h2.39V1103.9h-2.39zM1356.85 1027.4h2.39V1107.9h-2.39zM1359.24 991.2h2.39V1080.6h-2.39zM1361.62 1052.0h2.39V1083.5h-2.39zM1364.01 1003.0h2.39V1085.7h-2.39zM1366.40 1029.5h2.39V1091.8h-2.39zM1368.78 1027.9h2.39V1095.1h-2.39zM1371.17 1019.8h2.39V1103.8h-2.39zM1373.55 979.2h2.39V1067.3h-2.39zM1375.94 978.8h2.39V1075.1h-2.39zM1378.32 1020.4h2.39V1093.0h-2.39zM1380.71 1026.0h2.39V1101.5h-2.39zM1383.09 1023.5h2.39V1089.3h-2.39zM1385.48 1026.5h2.39V1086.3h-2.39zM1387.86 1010.7h2.39V1088.0h-2.39zM1390.25 1014.5h2.39V1096.7h-2.39zM1392.64 995.3h2.39V1091.6h-2.39zM1395.02 1016.6h2.39V1088.1h-2.39zM1397.41 1018.9h2.39V1093.5h-2.39zM1399.79 979.5h2.39V1089.9h-2.39zM1402.18 970.6h2.39V1051.3h-2.39zM1404.56 1002.7h2.39V1085.9h-2.39zM1406.95 1014.6h2.39V1078.5h-2.39zM1409.33 1000.0h2.39V1072.9h-2.39zM1411.72 1021.0h2.39V1082.7h-2.39zM1414.10 1017.4h2.39V1089.8h-2.39zM1416.49 998.5h2.39V1082.8h-2.39zM1418.88 1011.8h2.39V1086.9h-2.39zM1421.26 1023.7h2.39V1088.7h-2.39zM1423.65 993.1h2.39V1073.7h-2.39zM1426.03 1036.3h2.39V1103.9h-2.39zM1428.42 1023.8h2.39V1087.9h-2.39zM1430.80 1011.1h2.39V1085.8h-2.39zM1433.19 1047.5h2.39V1079.7h-2.39zM1435.57 1041.0h2.39V1103.3h-2.39zM1437.96 1017.1h2.39V1082.0h-2.39zM1440.34 1004.1h2.39V1089.8h-2.39zM1442.73 1032.1h2.39V1081.7h-2.39zM1445.11 1011.5h2.39V1090.0h-2.39zM1447.50 1015.9h2.39V1083.2h-2.39zM1449.89 1026.6h2.39V1080.7h-2.39zM1452.27 1038.2h2.39V1102.3h-2.39zM1454.66 1035.1h2.39V1091.5h-2.39zM1457.04 1023.7h2.39V1087.7h-2.39zM1459.43 1009.1h2.39V1094.9h-2.39zM1461.81 1011.5h2.39V1084.7h-2.39zM1464.20 1012.3h2.39V1090.8h-2.39zM1466.58 1056.4h2.39V1095.8h-2.39zM1468.97 1037.7h2.39V1071.7h-2.39zM1471.35 1020.0h2.39V1087.8h-2.39zM1473.74 1013.6h2.39V1070.1h-2.39zM1476.12 1003.8h2.39V1084.9h-2.39zM1478.51 1018.3h2.39V1076.2h-2.39zM1480.90 985.2h2.39V1092.9h-2.39zM1483.28 1017.1h2.39V1079.0h-2.39zM1485.67 1007.0h2.39V1087.7h-2.39zM1488.05 1034.7h2.39V1099.0h-2.39zM1490.44 1058.3h2.39V1113.0h-2.39zM1492.82 1053.0h2.39V1108.0h-2.39zM1495.21 1043.0h2.39V1100.7h-2.39zM1497.59 988.0h2.39V1072.3h-2.39zM1499.98 1037.7h2.39V1066.6h-2.39zM1502.36 1011.3h2.39V1079.7h-2.39zM1504.75 1003.1h2.39V1065.6h-2.39zM1507.14 1007.7h2.39V1075.4h-2.39zM1509.52 1007.9h2.39V1076.5h-2.39zM1511.91 974.5h2.39V1070.2h-2.39zM1514.29 991.1h2.39V1082.3h-2.39zM1516.68 1027.7h2.39V1100.9h-2.39zM1519.06 1031.1h2.39V1095.4h-2.39zM1521.45 1014.4h2.39V1086.8h-2.39zM1523.83 1033.4h2.39V1092.2h-2.39zM1526.22 992.4h2.39V1079.4h-2.39zM1528.60 1035.0h2.39V1093.9h-2.39zM1530.99 1006.5h2.39V1078.4h-2.39zM1533.38 1014.2h2.39V1082.0h-2.39zM1535.76 1028.2h2.39V1098.7h-2.39zM1538.15 1047.6h2.39V1099.6h-2.39zM1540.53 992.7h2.39V1067.8h-2.39zM1542.92 1000.7h2.39V1080.9h-2.39zM1545.30 1005.3h2.39V1083.9h-2.39zM1547.69 970.6h2.39V1069.0h-2.39zM1550.07 1011.8h2.39V1085.8h-2.39zM1552.46 1018.3h2.39V1080.2h-2.39zM1554.84 1018.1h2.39V1089.4h-2.39zM1557.23 1022.1h2.39V1096.9h-2.39zM1559.61 996.6h2.39V1084.2h-2.39z" fill="#bddab1"/><path d="M875.00 985.1h0.9V1076.3h-0.9zM877.39 979.1h0.9V1073.4h-0.9zM879.77 1021.4h0.9V1090.8h-0.9zM882.16 1007.4h0.9V1085.3h-0.9zM884.54 1017.3h0.9V1071.8h-0.9zM886.93 1059.4h0.9V1094.1h-0.9zM889.31 1035.9h0.9V1090.1h-0.9zM891.70 1015.5h0.9V1102.3h-0.9zM894.08 1031.1h0.9V1102.1h-0.9zM896.47 1050.4h0.9V1083.9h-0.9zM898.85 1029.4h0.9V1097.3h-0.9zM901.24 1006.0h0.9V1087.2h-0.9zM903.62 1005.0h0.9V1077.8h-0.9zM906.01 1003.6h0.9V1088.1h-0.9zM908.40 999.9h0.9V1077.1h-0.9zM910.78 1024.4h0.9V1099.6h-0.9zM913.17 1005.8h0.9V1086.7h-0.9zM915.55 1036.0h0.9V1072.3h-0.9zM917.94 1007.2h0.9V1074.8h-0.9zM920.32 1034.0h0.9V1076.8h-0.9zM922.71 1011.7h0.9V1090.5h-0.9zM925.09 982.8h0.9V1064.1h-0.9zM927.48 996.6h0.9V1080.4h-0.9zM929.86 1013.7h0.9V1085.3h-0.9zM932.25 1030.2h0.9V1084.7h-0.9zM934.64 1008.9h0.9V1079.7h-0.9zM937.02 1004.5h0.9V1078.1h-0.9zM939.41 1005.7h0.9V1081.5h-0.9zM941.79 1013.0h0.9V1083.7h-0.9zM944.18 1024.3h0.9V1081.1h-0.9zM946.56 986.3h0.9V1071.9h-0.9zM948.95 1001.1h0.9V1075.3h-0.9zM951.33 1018.3h0.9V1090.8h-0.9zM953.72 1055.7h0.9V1096.8h-0.9zM956.10 1007.9h0.9V1079.9h-0.9zM958.49 990.9h0.9V1076.8h-0.9zM960.88 1028.7h0.9V1087.0h-0.9zM963.26 1022.6h0.9V1092.1h-0.9zM965.65 1021.0h0.9V1078.7h-0.9zM968.03 1012.9h0.9V1082.7h-0.9zM970.42 1017.4h0.9V1087.5h-0.9zM972.80 1002.4h0.9V1072.9h-0.9zM975.19 989.6h0.9V1081.1h-0.9zM977.57 1015.0h0.9V1083.2h-0.9zM979.96 997.6h0.9V1071.6h-0.9zM982.34 1016.2h0.9V1084.2h-0.9zM984.73 1031.8h0.9V1101.3h-0.9zM987.11 1032.2h0.9V1071.9h-0.9zM989.50 1044.8h0.9V1089.5h-0.9zM991.89 1013.8h0.9V1077.5h-0.9zM994.27 1019.7h0.9V1095.0h-0.9zM996.66 1029.6h0.9V1088.0h-0.9zM999.04 1038.2h0.9V1103.9h-0.9zM1001.43 974.9h0.9V1097.7h-0.9zM1003.81 995.3h0.9V1085.0h-0.9zM1006.20 1030.7h0.9V1093.2h-0.9zM1008.58 1024.2h0.9V1094.4h-0.9zM1010.97 1006.2h0.9V1087.3h-0.9zM1013.35 988.5h0.9V1081.0h-0.9zM1015.74 994.2h0.9V1084.7h-0.9zM1018.12 1007.8h0.9V1109.1h-0.9zM1020.51 1037.0h0.9V1099.9h-0.9zM1022.90 1043.9h0.9V1105.6h-0.9zM1025.28 1037.4h0.9V1104.8h-0.9zM1027.67 1038.6h0.9V1105.3h-0.9zM1030.05 1045.3h0.9V1095.3h-0.9zM1032.44 989.3h0.9V1078.7h-0.9zM1034.82 1016.5h0.9V1073.9h-0.9zM1037.21 1002.3h0.9V1095.8h-0.9zM1039.59 1007.8h0.9V1099.1h-0.9zM1041.98 1030.4h0.9V1090.5h-0.9zM1044.36 1030.7h0.9V1078.5h-0.9zM1046.75 1001.0h0.9V1076.9h-0.9zM1049.14 990.6h0.9V1073.4h-0.9zM1051.52 1008.0h0.9V1072.5h-0.9zM1053.91 1005.9h0.9V1083.0h-0.9zM1056.29 1023.0h0.9V1089.3h-0.9zM1058.68 1005.8h0.9V1080.9h-0.9zM1061.06 1016.3h0.9V1081.3h-0.9zM1063.45 1017.6h0.9V1083.2h-0.9zM1065.83 984.5h0.9V1072.0h-0.9zM1068.22 1002.1h0.9V1078.6h-0.9zM1070.60 993.3h0.9V1078.5h-0.9zM1072.99 1022.1h0.9V1103.8h-0.9zM1075.38 1023.2h0.9V1085.7h-0.9zM1077.76 1004.8h0.9V1100.1h-0.9zM1080.15 1015.9h0.9V1085.6h-0.9zM1082.53 995.1h0.9V1088.8h-0.9zM1084.92 1014.0h0.9V1084.5h-0.9zM1087.30 998.8h0.9V1079.5h-0.9zM1089.69 994.0h0.9V1082.0h-0.9zM1092.07 1007.3h0.9V1069.8h-0.9zM1094.46 1045.2h0.9V1096.7h-0.9zM1096.84 1010.8h0.9V1070.8h-0.9zM1099.23 1003.4h0.9V1078.3h-0.9zM1101.61 1011.5h0.9V1106.3h-0.9zM1104.00 1055.7h0.9V1090.2h-0.9zM1106.39 1038.1h0.9V1078.2h-0.9zM1108.77 1027.0h0.9V1089.7h-0.9zM1111.16 1042.5h0.9V1093.0h-0.9zM1113.54 999.9h0.9V1076.5h-0.9zM1115.93 987.8h0.9V1072.9h-0.9zM1118.31 994.4h0.9V1080.8h-0.9zM1120.70 993.4h0.9V1076.8h-0.9zM1123.08 1018.2h0.9V1087.6h-0.9zM1125.47 1018.1h0.9V1097.1h-0.9zM1127.85 1000.5h0.9V1086.4h-0.9zM1130.24 1040.3h0.9V1094.4h-0.9zM1132.62 1055.1h0.9V1085.8h-0.9zM1135.01 1028.8h0.9V1105.2h-0.9zM1137.40 1050.3h0.9V1089.1h-0.9zM1139.78 1010.6h0.9V1089.7h-0.9zM1142.17 1035.2h0.9V1092.6h-0.9zM1144.55 1024.4h0.9V1090.2h-0.9zM1146.94 1021.4h0.9V1079.8h-0.9zM1149.32 987.8h0.9V1074.3h-0.9zM1151.71 1002.1h0.9V1091.5h-0.9zM1154.09 1045.3h0.9V1083.9h-0.9zM1156.48 1012.5h0.9V1068.7h-0.9zM1158.86 1013.5h0.9V1086.0h-0.9zM1161.25 996.2h0.9V1084.6h-0.9zM1163.64 991.9h0.9V1069.4h-0.9zM1166.02 1025.9h0.9V1092.0h-0.9zM1168.41 1006.3h0.9V1085.5h-0.9zM1170.79 1021.1h0.9V1078.3h-0.9zM1173.18 1001.3h0.9V1081.1h-0.9zM1175.56 1027.8h0.9V1097.8h-0.9zM1177.95 1014.7h0.9V1069.1h-0.9zM1180.33 1003.5h0.9V1074.3h-0.9zM1182.72 970.6h0.9V1062.2h-0.9zM1185.10 1006.5h0.9V1085.9h-0.9zM1187.49 1025.3h0.9V1093.9h-0.9zM1189.88 1027.3h0.9V1095.2h-0.9zM1192.26 1001.5h0.9V1094.7h-0.9zM1194.65 1012.6h0.9V1088.2h-0.9zM1197.03 998.7h0.9V1077.5h-0.9zM1199.42 1022.6h0.9V1091.1h-0.9zM1201.80 1052.3h0.9V1102.4h-0.9zM1204.19 1030.6h0.9V1096.9h-0.9zM1206.57 1021.7h0.9V1087.4h-0.9zM1208.96 1019.6h0.9V1080.6h-0.9zM1211.34 1008.5h0.9V1084.6h-0.9zM1213.73 1062.4h0.9V1098.9h-0.9zM1216.11 1028.6h0.9V1101.2h-0.9zM1220.89 1035.6h0.9V1096.6h-0.9zM1223.27 1065.1h0.9V1109.5h-0.9zM1225.66 994.7h0.9V1075.6h-0.9zM1228.04 982.8h0.9V1087.0h-0.9zM1230.43 1011.3h0.9V1095.7h-0.9zM1232.81 990.2h0.9V1080.2h-0.9zM1235.20 1027.1h0.9V1082.3h-0.9zM1237.58 1014.1h0.9V1090.6h-0.9zM1239.97 993.3h0.9V1066.1h-0.9zM1242.35 1004.5h0.9V1064.8h-0.9zM1244.74 1029.6h0.9V1101.1h-0.9zM1247.12 1004.7h0.9V1081.7h-0.9zM1249.51 1004.9h0.9V1079.7h-0.9zM1251.90 1006.8h0.9V1076.6h-0.9zM1254.28 1025.4h0.9V1077.3h-0.9zM1256.67 1016.0h0.9V1078.0h-0.9zM1259.05 1011.5h0.9V1078.2h-0.9zM1261.44 990.4h0.9V1071.8h-0.9zM1263.82 996.8h0.9V1082.8h-0.9zM1266.21 991.8h0.9V1086.6h-0.9zM1268.59 1010.5h0.9V1098.0h-0.9zM1270.98 1009.3h0.9V1088.3h-0.9zM1273.36 1003.7h0.9V1083.6h-0.9zM1275.75 980.9h0.9V1091.5h-0.9zM1278.14 1031.0h0.9V1082.8h-0.9zM1280.52 1012.6h0.9V1082.8h-0.9zM1282.91 992.2h0.9V1078.9h-0.9zM1285.29 1014.4h0.9V1090.3h-0.9zM1287.68 1004.4h0.9V1083.2h-0.9zM1290.06 977.1h0.9V1085.5h-0.9zM1292.45 999.3h0.9V1085.4h-0.9zM1294.83 1027.6h0.9V1082.2h-0.9zM1297.22 1013.6h0.9V1082.3h-0.9zM1299.60 997.3h0.9V1078.1h-0.9zM1301.99 978.2h0.9V1059.5h-0.9zM1304.38 994.4h0.9V1089.7h-0.9zM1306.76 1011.8h0.9V1079.9h-0.9zM1309.15 1017.0h0.9V1093.1h-0.9zM1311.53 1036.1h0.9V1091.9h-0.9zM1313.92 1017.8h0.9V1079.0h-0.9zM1316.30 1014.8h0.9V1091.7h-0.9zM1318.69 972.4h0.9V1064.9h-0.9zM1321.07 1027.7h0.9V1076.0h-0.9zM1323.46 1009.9h0.9V1081.1h-0.9zM1325.84 1024.6h0.9V1094.2h-0.9zM1328.23 1018.4h0.9V1101.8h-0.9zM1330.61 1001.5h0.9V1077.5h-0.9zM1333.00 1027.0h0.9V1093.6h-0.9zM1335.39 970.6h0.9V1065.1h-0.9zM1337.77 1016.4h0.9V1077.7h-0.9zM1340.16 995.2h0.9V1085.4h-0.9zM1342.54 1002.4h0.9V1076.5h-0.9zM1344.93 994.6h0.9V1072.2h-0.9zM1347.31 1038.3h0.9V1087.6h-0.9zM1349.70 1032.9h0.9V1086.9h-0.9zM1352.08 1036.9h0.9V1111.2h-0.9zM1354.47 1026.9h0.9V1103.9h-0.9zM1356.85 1027.4h0.9V1107.9h-0.9zM1359.24 991.2h0.9V1080.6h-0.9zM1361.62 1052.0h0.9V1083.5h-0.9zM1364.01 1003.0h0.9V1085.7h-0.9zM1366.40 1029.5h0.9V1091.8h-0.9zM1368.78 1027.9h0.9V1095.1h-0.9zM1371.17 1019.8h0.9V1103.8h-0.9zM1373.55 979.2h0.9V1067.3h-0.9zM1375.94 978.8h0.9V1075.1h-0.9zM1378.32 1020.4h0.9V1093.0h-0.9zM1380.71 1026.0h0.9V1101.5h-0.9zM1383.09 1023.5h0.9V1089.3h-0.9zM1385.48 1026.5h0.9V1086.3h-0.9zM1387.86 1010.7h0.9V1088.0h-0.9zM1390.25 1014.5h0.9V1096.7h-0.9zM1392.64 995.3h0.9V1091.6h-0.9zM1395.02 1016.6h0.9V1088.1h-0.9zM1397.41 1018.9h0.9V1093.5h-0.9zM1399.79 979.5h0.9V1089.9h-0.9zM1402.18 970.6h0.9V1051.3h-0.9zM1404.56 1002.7h0.9V1085.9h-0.9zM1406.95 1014.6h0.9V1078.5h-0.9zM1409.33 1000.0h0.9V1072.9h-0.9zM1411.72 1021.0h0.9V1082.7h-0.9zM1414.10 1017.4h0.9V1089.8h-0.9zM1416.49 998.5h0.9V1082.8h-0.9zM1418.88 1011.8h0.9V1086.9h-0.9zM1421.26 1023.7h0.9V1088.7h-0.9zM1423.65 993.1h0.9V1073.7h-0.9zM1426.03 1036.3h0.9V1103.9h-0.9zM1428.42 1023.8h0.9V1087.9h-0.9zM1430.80 1011.1h0.9V1085.8h-0.9zM1433.19 1047.5h0.9V1079.7h-0.9zM1435.57 1041.0h0.9V1103.3h-0.9zM1437.96 1017.1h0.9V1082.0h-0.9zM1440.34 1004.1h0.9V1089.8h-0.9zM1442.73 1032.1h0.9V1081.7h-0.9zM1445.11 1011.5h0.9V1090.0h-0.9zM1447.50 1015.9h0.9V1083.2h-0.9zM1449.89 1026.6h0.9V1080.7h-0.9zM1452.27 1038.2h0.9V1102.3h-0.9zM1454.66 1035.1h0.9V1091.5h-0.9zM1457.04 1023.7h0.9V1087.7h-0.9zM1459.43 1009.1h0.9V1094.9h-0.9zM1461.81 1011.5h0.9V1084.7h-0.9zM1464.20 1012.3h0.9V1090.8h-0.9zM1466.58 1056.4h0.9V1095.8h-0.9zM1468.97 1037.7h0.9V1071.7h-0.9zM1471.35 1020.0h0.9V1087.8h-0.9zM1473.74 1013.6h0.9V1070.1h-0.9zM1476.12 1003.8h0.9V1084.9h-0.9zM1478.51 1018.3h0.9V1076.2h-0.9zM1480.90 985.2h0.9V1092.9h-0.9zM1483.28 1017.1h0.9V1079.0h-0.9zM1485.67 1007.0h0.9V1087.7h-0.9zM1488.05 1034.7h0.9V1099.0h-0.9zM1490.44 1058.3h0.9V1113.0h-0.9zM1492.82 1053.0h0.9V1108.0h-0.9zM1495.21 1043.0h0.9V1100.7h-0.9zM1497.59 988.0h0.9V1072.3h-0.9zM1499.98 1037.7h0.9V1066.6h-0.9zM1502.36 1011.3h0.9V1079.7h-0.9zM1504.75 1003.1h0.9V1065.6h-0.9zM1507.14 1007.7h0.9V1075.4h-0.9zM1509.52 1007.9h0.9V1076.5h-0.9zM1511.91 974.5h0.9V1070.2h-0.9zM1514.29 991.1h0.9V1082.3h-0.9zM1516.68 1027.7h0.9V1100.9h-0.9zM1519.06 1031.1h0.9V1095.4h-0.9zM1521.45 1014.4h0.9V1086.8h-0.9zM1523.83 1033.4h0.9V1092.2h-0.9zM1526.22 992.4h0.9V1079.4h-0.9zM1528.60 1035.0h0.9V1093.9h-0.9zM1530.99 1006.5h0.9V1078.4h-0.9zM1533.38 1014.2h0.9V1082.0h-0.9zM1535.76 1028.2h0.9V1098.7h-0.9zM1538.15 1047.6h0.9V1099.6h-0.9zM1540.53 992.7h0.9V1067.8h-0.9zM1542.92 1000.7h0.9V1080.9h-0.9zM1545.30 1005.3h0.9V1083.9h-0.9zM1547.69 970.6h0.9V1069.0h-0.9zM1550.07 1011.8h0.9V1085.8h-0.9zM1552.46 1018.3h0.9V1080.2h-0.9zM1554.84 1018.1h0.9V1089.4h-0.9zM1557.23 1022.1h0.9V1096.9h-0.9zM1559.61 996.6h0.9V1084.2h-0.9zM1562.00 1081.5h1.1V1161.5h-1.1z" fill="#7dbb6a"/><rect x="875" y="1014.20" width="687" height="1" fill="#000" fill-opacity="0.07"/><rect x="875" y="1067.60" width="687" height="1" fill="#000" fill-opacity="0.07"/><rect x="875" y="1121.00" width="687" height="1" fill="#000" fill-opacity="0.07"/><rect x="875" y="1174.40" width="687" height="1" fill="#000" fill-opacity="0.07"/><rect x="867.2" y="1227.80" width="698.0" height="1" fill="#dfe5ec"/><rect x="931.00" y="1228.8" width="1.2" height="5" fill="#666"/><rect x="1017.00" y="1228.8" width="1.2" height="5" fill="#666"/><rect x="1103.00" y="1228.8" width="1.2" height="5" fill="#666"/><rect x="1189.00" y="1228.8" width="1.2" height="5" fill="#666"/><rect x="1275.00" y="1228.8" width="1.2" height="5" fill="#666"/><rect x="1361.00" y="1228.8" width="1.2" height="5" fill="#666"/><rect x="1447.00" y="1228.8" width="1.2" height="5" fill="#666"/><rect x="1533.00" y="1228.8" width="1.2" height="5" fill="#666"/></svg><div class="r" style="left:0px;top:0px;width:1px;height:1365px;background:#000;"></div><div class="r" style="left:1px;top:0px;width:1px;height:1365px;background:#d0d2d4;"></div><div class="r" style="left:2px;top:1326px;width:1598px;height:30px;background:linear-gradient(rgba(236,238,240,0),rgba(236,238,240,0.45));"></div><div class="r" style="left:2px;top:1356px;width:1598px;height:9px;background:linear-gradient(90deg,#e4e6e7,#eef0f2);"></div><svg width="1600" height="1365"><path d="M434 33 L437.8 37 L441.6 33" fill="none" stroke="#8a9bb0" stroke-width="1.1"/><g transform="translate(466.2,32.9) rotate(-43)" fill="none" stroke="#7f93ab" stroke-width="1.5"><rect x="-9.8" y="-2.9" width="9.2" height="5.8" rx="2.9"/><rect x="0.6" y="-2.9" width="9.2" height="5.8" rx="2.9"/><path d="M-3.5 0 H3.5"/></g><g fill="none" stroke="#8094ab"><circle cx="1453.2" cy="31.8" r="7.1" stroke-width="1.9"/><path d="M1452.60 27.50 V32.40 H1449.30" stroke-width="1.4"/></g><g fill="none" stroke="#8094ab" stroke-width="2.3"><path d="M1534.90 33.10 A6.8 6.8 0 0 1 1547.47 29.30"/><path d="M1548.50 32.70 A6.8 6.8 0 0 1 1535.93 36.50"/></g><path fill="#8094ab" d="M1549.90 25.00 V31.10 H1543.80 Z M1533.50 40.80 V34.70 H1539.60 Z"/><g fill="#8094ab"><circle cx="1588.1" cy="27.0" r="2.0"/><circle cx="1588.1" cy="32.9" r="2.0"/><circle cx="1588.1" cy="38.8" r="2.0"/></g><circle cx="36" cy="837.0" r="5.6" fill="#3a78b5"/><circle cx="330" cy="837.0" r="5.6" fill="#a8cbe4"/><circle cx="36" cy="863.2" r="5.6" fill="#4e9e38"/><circle cx="829.8" cy="837.0" r="5.6" fill="#3a78b5"/><circle cx="1123.8" cy="837.0" r="5.6" fill="#a8cbe4"/><circle cx="829.8" cy="863.2" r="5.6" fill="#4e9e38"/><circle cx="36" cy="1302.8999999999999" r="5.6" fill="#3a78b5"/><circle cx="330" cy="1302.8999999999999" r="5.6" fill="#a8cbe4"/><circle cx="36" cy="1329.1" r="5.6" fill="#4e9e38"/><circle cx="830.8" cy="1302.8999999999999" r="5.6" fill="#3a78b5"/><circle cx="1124.8" cy="1302.8999999999999" r="5.6" fill="#a8cbe4"/><circle cx="830.8" cy="1329.1" r="5.6" fill="#4e9e38"/><g fill="none" stroke="#8094ab" stroke-width="2.3"><path d="M675.20 461.20 A6.8 6.8 0 0 1 687.77 457.40"/><path d="M688.80 460.80 A6.8 6.8 0 0 1 676.23 464.60"/></g><path fill="#8094ab" d="M690.20 453.10 V459.20 H684.10 Z M673.80 468.90 V462.80 H679.90 Z"/><g fill="none" stroke="#8094ab"><circle cx="707" cy="461" r="7.1" stroke-width="1.9"/><path d="M706.40 456.70 V461.60 H703.10" stroke-width="1.4"/></g><g fill="#8094ab"><circle cx="770.5" cy="454.6" r="2.1"/><circle cx="770.5" cy="461" r="2.1"/><circle cx="770.5" cy="467.4" r="2.1"/></g><path d="M779.5 886.6 H789.6 V876" fill="none" stroke="#555" stroke-width="1.4"/></svg><svg width="1600" height="1365" font-family="Liberation Sans"><text x="15.60" y="39.40" font-size="16.4" fill="#8596ab">Dashboards</text><text x="113.50" y="39.40" font-size="16.35" fill="#283444" stroke="#283444" stroke-width="0.1">1. AWS Network Load Balancer - Overview</text><text x="1468.80" y="38.20" font-size="18.7" fill="#46617e" stroke="#46617e" stroke-width="0.2">-24h</text><text x="17.10" y="98.70" font-size="16.9" fill="#8798ae">account</text><text x="85.10" y="98.70" font-size="15.7" fill="#5b7089">dev</text><text x="271.90" y="98.70" font-size="16.4" fill="#8798ae">region</text><text x="326.00" y="98.70" font-size="15.85" fill="#5b7089">us-east-1</text><text x="512.50" y="98.70" font-size="16.7" fill="#8798ae">namespace</text><text x="607.50" y="98.70" font-size="17.2" fill="#5b7089">aws/networkelb</text><text x="794.00" y="98.70" font-size="17.0" fill="#8798ae">networkloadbalancer</text><text x="959.00" y="98.70" font-size="16" fill="#333">*</text><text x="25.00" y="160.00" font-size="16.5" fill="#1c232c" stroke="#1c232c" stroke-width="0.3">Client TLS Negotiation ...</text><text x="289.00" y="160.00" font-size="16.5" fill="#1c232c" stroke="#1c232c" stroke-width="0.3">Target TLS Negotiation...</text><text x="554.60" y="160.00" font-size="16.5" fill="#1c232c" stroke="#1c232c" stroke-width="0.3">Healthy Hosts (Current)</text><text x="818.60" y="160.00" font-size="16.5" fill="#1c232c" stroke="#1c232c" stroke-width="0.3">Unhealthy Hosts (Curre...</text><text x="1083.00" y="160.30" font-size="16.6" fill="#1c232c" stroke="#1c232c" stroke-width="0.3">Max Unhealthy Hosts Observed by Load Balancer</text><text x="137.75" y="259.75" font-size="53.3" fill="#222d3b" text-anchor="middle" stroke="#222d3b" stroke-width="1.6">2,122</text><text x="137.75" y="306.90" font-size="30.3" fill="#222d3b" text-anchor="middle" textLength="83.5" lengthAdjust="spacingAndGlyphs" stroke="#222d3b" stroke-width="0.8">Errors</text><text x="402.30" y="259.75" font-size="53.3" fill="#222d3b" text-anchor="middle" stroke="#222d3b" stroke-width="1.6">4</text><text x="402.30" y="306.90" font-size="30.3" fill="#222d3b" text-anchor="middle" textLength="83.5" lengthAdjust="spacingAndGlyphs" stroke="#222d3b" stroke-width="0.8">Errors</text><text x="667.50" y="259.75" font-size="53.3" fill="#222d3b" text-anchor="middle" stroke="#222d3b" stroke-width="1.6">34</text><text x="667.50" y="306.90" font-size="30.3" fill="#222d3b" text-anchor="middle" textLength="84.5" lengthAdjust="spacingAndGlyphs" stroke="#222d3b" stroke-width="0.8">Hosts</text><text x="931.50" y="259.75" font-size="53.3" fill="#222d3b" text-anchor="middle" stroke="#222d3b" stroke-width="1.6">17</text><text x="931.50" y="306.90" font-size="30.3" fill="#222d3b" text-anchor="middle" textLength="84.5" lengthAdjust="spacingAndGlyphs" stroke="#222d3b" stroke-width="0.8">Hosts</text><text x="1112.90" y="196.90" font-size="14.3" fill="#4f6b8a">Loadbalancer</text><text x="1562.90" y="196.90" font-size="14.3" fill="#4f6b8a" text-anchor="end">Hosts</text><text x="1097.60" y="228.90" font-size="14.3" fill="#8a9fba" text-anchor="middle">1</text><text x="1112.90" y="228.90" font-size="14.8" fill="#262a30">net/company-syslog/abcd6749ccac1456</text><text x="1562.90" y="228.90" font-size="14.3" fill="#262a30" text-anchor="end">7</text><text x="1097.60" y="261.20" font-size="14.3" fill="#8a9fba" text-anchor="middle">2</text><text x="1112.90" y="261.20" font-size="14.8" fill="#262a30">net/company-teleport-auth/abcdce14fa33f123</text><text x="1562.90" y="261.20" font-size="14.3" fill="#262a30" text-anchor="end">7</text><text x="1097.60" y="293.30" font-size="14.3" fill="#8a9fba" text-anchor="middle">3</text><text x="1112.90" y="293.30" font-size="14.8" fill="#262a30">net/company-teleport/abcd66cdf6787789</text><text x="1562.90" y="293.30" font-size="14.3" fill="#262a30" text-anchor="end">7</text><text x="25.00" y="467.00" font-size="16.7" fill="#1c232c" stroke="#1c232c" stroke-width="0.3">Active Flows (Connections) by Load Balancer</text><text x="73.10" y="499.40" font-size="12.6" fill="#8da2b8" text-anchor="end">150</text><text x="73.10" y="588.40" font-size="12.6" fill="#8da2b8" text-anchor="end">100</text><text x="73.10" y="677.40" font-size="12.6" fill="#8da2b8" text-anchor="end">50</text><text x="73.10" y="766.40" font-size="12.6" fill="#8da2b8" text-anchor="end">0</text><text x="143.00" y="779.60" font-size="13.4" fill="#a9b8c8" text-anchor="middle">06:00 PM</text><text x="228.20" y="779.60" font-size="13.4" fill="#a9b8c8" text-anchor="middle">09:00 PM</text><text x="313.40" y="779.60" font-size="13.4" fill="#a9b8c8" text-anchor="middle">12:00 AM</text><text x="398.60" y="779.60" font-size="13.4" fill="#a9b8c8" text-anchor="middle">03:00 AM</text><text x="483.80" y="779.60" font-size="13.4" fill="#a9b8c8" text-anchor="middle">06:00 AM</text><text x="569.00" y="779.60" font-size="13.4" fill="#a9b8c8" text-anchor="middle">09:00 AM</text><text x="654.20" y="779.60" font-size="13.4" fill="#a9b8c8" text-anchor="middle">12:00 PM</text><text x="739.40" y="779.60" font-size="13.4" fill="#a9b8c8" text-anchor="middle">03:00 PM</text><text x="284.00" y="794.40" font-size="13.4" fill="#a9b8c8">28 Jan</text><text x="284.00" y="810.40" font-size="13.4" fill="#a9b8c8">21</text><text transform="translate(42.80,631.00) rotate(-90)" font-size="14" fill="#454a50" text-anchor="middle" font-weight="700" textLength="211" lengthAdjust="spacingAndGlyphs">Active Flow (Connection) Count</text><text x="49.00" y="842.40" font-size="14.75" fill="#262a30">net/company-syslog/abcd6749ccac1456</text><text x="343.00" y="842.40" font-size="14.75" fill="#262a30">net/company-teleport-auth/abcdce14fa33f123</text><text x="49.00" y="868.60" font-size="14.75" fill="#262a30">net/company-teleport/abcd66cdf6787789</text><text x="819.50" y="467.00" font-size="16.5" fill="#1c232c" stroke="#1c232c" stroke-width="0.3">Bytes Processed by Load Balancer</text><text x="866.90" y="499.40" font-size="12.6" fill="#8da2b8" text-anchor="end">150</text><text x="866.90" y="588.40" font-size="12.6" fill="#8da2b8" text-anchor="end">100</text><text x="866.90" y="677.40" font-size="12.6" fill="#8da2b8" text-anchor="end">50</text><text x="866.90" y="766.40" font-size="12.6" fill="#8da2b8" text-anchor="end">0</text><text x="938.00" y="779.60" font-size="13.4" fill="#a9b8c8" text-anchor="middle">06:00 PM</text><text x="1022.90" y="779.60" font-size="13.4" fill="#a9b8c8" text-anchor="middle">09:00 PM</text><text x="1107.80" y="779.60" font-size="13.4" fill="#a9b8c8" text-anchor="middle">12:00 AM</text><text x="1192.70" y="779.60" font-size="13.4" fill="#a9b8c8" text-anchor="middle">03:00 AM</text><text x="1277.60" y="779.60" font-size="13.4" fill="#a9b8c8" text-anchor="middle">06:00 AM</text><text x="1362.50" y="779.60" font-size="13.4" fill="#a9b8c8" text-anchor="middle">09:00 AM</text><text x="1447.40" y="779.60" font-size="13.4" fill="#a9b8c8" text-anchor="middle">12:00 PM</text><text x="1532.30" y="779.60" font-size="13.4" fill="#a9b8c8" text-anchor="middle">03:00 PM</text><text x="1078.40" y="794.40" font-size="13.4" fill="#a9b8c8">28 Jan</text><text x="1078.40" y="810.40" font-size="13.4" fill="#a9b8c8">21</text><text transform="translate(836.60,628.50) rotate(-90)" font-size="14" fill="#454a50" text-anchor="middle" font-weight="700" textLength="108" lengthAdjust="spacingAndGlyphs">Bytes Processed</text><text x="842.80" y="842.40" font-size="14.75" fill="#262a30">net/company-syslog/abcd6749ccac1456</text><text x="1136.80" y="842.40" font-size="14.75" fill="#262a30">net/company-teleport-auth/abcdce14fa33f123</text><text x="842.80" y="868.60" font-size="14.75" fill="#262a30">net/company-teleport/abcd66cdf6787789</text><text x="25.00" y="933.00" font-size="16.58" fill="#1c232c" stroke="#1c232c" stroke-width="0.3">TLS Negotiation Errors by Load Balancer</text><text x="65.90" y="965.30" font-size="12.6" fill="#8da2b8" text-anchor="end">15</text><text x="65.90" y="1054.30" font-size="12.6" fill="#8da2b8" text-anchor="end">10</text><text x="65.90" y="1143.30" font-size="12.6" fill="#8da2b8" text-anchor="end">5</text><text x="65.90" y="1232.30" font-size="12.6" fill="#8da2b8" text-anchor="end">0</text><text x="137.40" y="1245.50" font-size="13.4" fill="#a9b8c8" text-anchor="middle">06:00 PM</text><text x="223.50" y="1245.50" font-size="13.4" fill="#a9b8c8" text-anchor="middle">09:00 PM</text><text x="309.60" y="1245.50" font-size="13.4" fill="#a9b8c8" text-anchor="middle">12:00 AM</text><text x="395.70" y="1245.50" font-size="13.4" fill="#a9b8c8" text-anchor="middle">03:00 AM</text><text x="481.80" y="1245.50" font-size="13.4" fill="#a9b8c8" text-anchor="middle">06:00 AM</text><text x="567.90" y="1245.50" font-size="13.4" fill="#a9b8c8" text-anchor="middle">09:00 AM</text><text x="654.00" y="1245.50" font-size="13.4" fill="#a9b8c8" text-anchor="middle">12:00 PM</text><text x="740.10" y="1245.50" font-size="13.4" fill="#a9b8c8" text-anchor="middle">03:00 PM</text><text x="280.20" y="1260.30" font-size="13.4" fill="#a9b8c8">28 Jan</text><text x="280.20" y="1276.30" font-size="13.4" fill="#a9b8c8">21</text><text transform="translate(42.80,1093.50) rotate(-90)" font-size="14" fill="#454a50" text-anchor="middle" font-weight="700" textLength="178.7" lengthAdjust="spacingAndGlyphs">TLS Negotiation Error Count</text><text x="49.00" y="1308.30" font-size="14.75" fill="#262a30">net/company-syslog/abcd6749ccac1456</text><text x="343.00" y="1308.30" font-size="14.75" fill="#262a30">net/company-teleport-auth/abcdce14fa33f123</text><text x="49.00" y="1334.50" font-size="14.75" fill="#262a30">net/company-teleport/abcd66cdf6787789</text><text x="820.40" y="933.00" font-size="16.36" fill="#1c232c" stroke="#1c232c" stroke-width="0.3">Reset (RST) Packets Generated by Load Balancer</text><text x="860.40" y="965.30" font-size="12.6" fill="#8da2b8" text-anchor="end">10</text><text x="860.40" y="1018.70" font-size="12.6" fill="#8da2b8" text-anchor="end">8</text><text x="860.40" y="1072.10" font-size="12.6" fill="#8da2b8" text-anchor="end">6</text><text x="860.40" y="1125.50" font-size="12.6" fill="#8da2b8" text-anchor="end">4</text><text x="860.40" y="1178.90" font-size="12.6" fill="#8da2b8" text-anchor="end">2</text><text x="860.40" y="1232.30" font-size="12.6" fill="#8da2b8" text-anchor="end">0</text><text x="931.60" y="1245.50" font-size="13.4" fill="#a9b8c8" text-anchor="middle">06:00 PM</text><text x="1017.60" y="1245.50" font-size="13.4" fill="#a9b8c8" text-anchor="middle">09:00 PM</text><text x="1103.60" y="1245.50" font-size="13.4" fill="#a9b8c8" text-anchor="middle">12:00 AM</text><text x="1189.60" y="1245.50" font-size="13.4" fill="#a9b8c8" text-anchor="middle">03:00 AM</text><text x="1275.60" y="1245.50" font-size="13.4" fill="#a9b8c8" text-anchor="middle">06:00 AM</text><text x="1361.60" y="1245.50" font-size="13.4" fill="#a9b8c8" text-anchor="middle">09:00 AM</text><text x="1447.60" y="1245.50" font-size="13.4" fill="#a9b8c8" text-anchor="middle">12:00 PM</text><text x="1533.60" y="1245.50" font-size="13.4" fill="#a9b8c8" text-anchor="middle">03:00 PM</text><text x="1074.20" y="1260.30" font-size="13.4" fill="#a9b8c8">28 Jan</text><text x="1074.20" y="1276.30" font-size="13.4" fill="#a9b8c8">21</text><text transform="translate(837.60,1092.50) rotate(-90)" font-size="14" fill="#454a50" text-anchor="middle" font-weight="700" textLength="142.4" lengthAdjust="spacingAndGlyphs">TCP ELB Reset Count</text><text x="843.80" y="1308.30" font-size="14.75" fill="#262a30">net/company-syslog/abcd6749ccac1456</text><text x="1137.80" y="1308.30" font-size="14.75" fill="#262a30">net/company-teleport-auth/abcdce14fa33f123</text><text x="843.80" y="1334.50" font-size="14.75" fill="#262a30">net/company-teleport/abcd66cdf6787789</text><text x="723.00" y="467.00" font-size="18.2" fill="#46617e" stroke="#46617e" stroke-width="0.2">-24h</text></svg></body></html>
